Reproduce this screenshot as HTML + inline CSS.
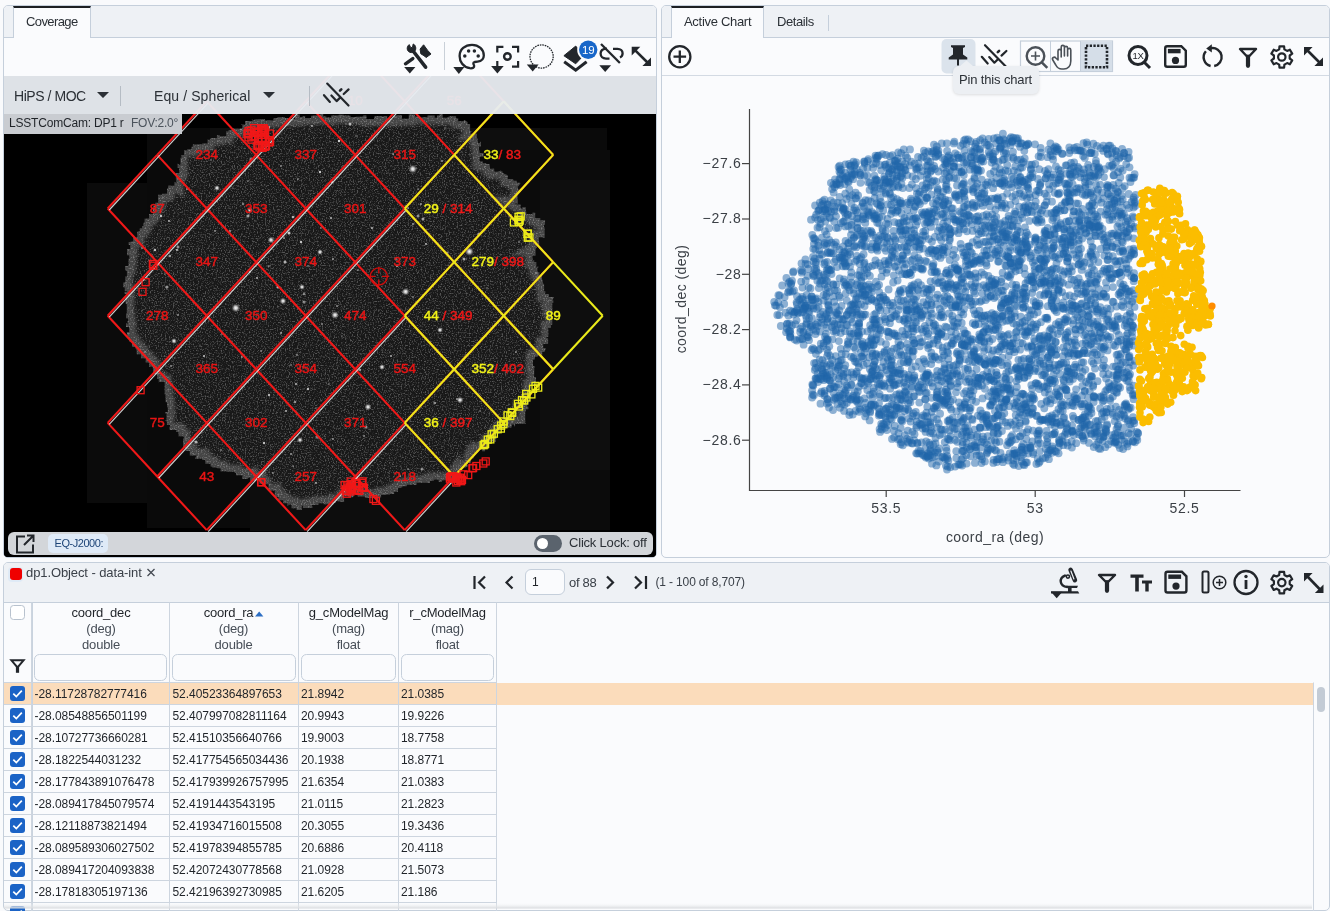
<!DOCTYPE html><html><head><meta charset="utf-8"><style>
*{box-sizing:border-box;margin:0;padding:0}
html,body{will-change:transform;width:1330px;height:911px;overflow:hidden;background:#f9fafc;font-family:"Liberation Sans",sans-serif;color:#1f2328}
.abs{position:absolute}
.panel{position:absolute;border:1px solid #c5cfdb;border-radius:5px;background:#fafbfd;overflow:hidden}
.tabstrip{position:absolute;left:0;right:0;top:0;height:32px;background:#eef1f5;border-bottom:1px solid #c5cfdb}
.tab{position:absolute;top:0;height:32px;background:#fafbfd;border-top:2px solid #1c1f23;border-right:1px solid #c5cfdb;border-left:1px solid #c5cfdb;font-size:13px;color:#2b3036;white-space:nowrap}
.t{position:absolute;white-space:nowrap;line-height:1}
svg{position:absolute;overflow:visible}
.ic{position:absolute;left:0;top:0;overflow:visible}
</style></head><body>
<div class="panel" style="left:3px;top:5px;width:654px;height:553px">
<div class="tabstrip"></div>
<div class="tab" style="left:9px;width:78px"></div>
</div>
<span class="t" style="left:26px;top:15px;font-size:13px;color:#2b3036;letter-spacing:-0.6px;">Coverage</span>
<div class="abs" style="left:4px;top:76px;width:652px;height:481px;overflow:hidden;border-radius:0 0 4px 4px;background:#000">
<svg style="left:0;top:0" width="652" height="481" viewBox="4 76 652 481"><defs><filter id="nz" x="0" y="0" width="700" height="600" filterUnits="userSpaceOnUse"><feTurbulence type="fractalNoise" baseFrequency="0.75" numOctaves="2" seed="3" result="t"/><feColorMatrix type="matrix" values="0 0 0 0 1  0 0 0 0 1  0 0 0 0 1  3.6 0 0 0 -1.75"/></filter><filter id="bl"><feGaussianBlur stdDeviation="1.8"/></filter><radialGradient id="sg"><stop offset="0" stop-color="#fff"/><stop offset="0.35" stop-color="#eee" stop-opacity="0.8"/><stop offset="1" stop-color="#888" stop-opacity="0"/></radialGradient><clipPath id="blob"><path id="blobp" d="M251.6 120.0 L254.4 120.0 L254.4 119.5 L257.5 119.5 L257.5 119.3 L259.3 119.3 L265.0 119.3 L265.0 117.2 L265.0 120.1 L264.9 120.1 L264.9 120.6 L267.7 120.6 L273.5 120.6 L273.5 118.8 L273.7 118.8 L273.7 118.1 L277.5 118.1 L277.5 116.6 L277.5 117.2 L281.7 117.2 L285.0 117.2 L285.0 117.9 L288.6 117.9 L288.6 116.8 L288.6 118.9 L293.1 118.9 L294.9 118.9 L294.9 115.7 L294.9 114.4 L296.0 114.4 L299.6 114.4 L299.6 117.5 L305.1 116.0 L305.1 117.6 L304.9 117.6 L304.9 117.9 L311.3 117.9 L311.3 115.7 L312.9 115.7 L312.9 117.4 L312.9 115.5 L313.6 115.5 L319.6 115.5 L319.6 114.5 L319.6 114.3 L319.8 114.3 L323.2 114.3 L323.2 116.6 L326.3 116.6 L326.3 117.4 L331.4 117.4 L331.4 114.7 L331.4 115.4 L332.6 115.4 L332.6 115.6 L338.3 115.6 L338.3 116.0 L338.7 116.0 L338.7 114.8 L343.7 114.8 L343.7 115.5 L344.9 115.5 L348.5 115.5 L348.5 115.7 L350.5 115.7 L350.5 117.0 L355.8 117.0 L355.8 116.1 L355.8 116.7 L360.5 116.7 L363.2 116.7 L363.2 115.4 L366.4 115.4 L366.4 118.2 L366.4 117.9 L366.3 117.9 L366.3 118.9 L369.4 118.9 L374.3 118.9 L374.3 116.6 L374.9 116.6 L374.9 119.0 L374.9 115.9 L380.9 115.9 L383.5 117.0 L383.5 116.0 L387.2 116.0 L387.2 115.0 L387.2 118.4 L389.6 118.4 L391.5 118.4 L391.5 118.7 L393.4 118.7 L393.4 115.8 L396.7 115.8 L396.7 115.3 L402.0 115.3 L402.0 115.1 L402.0 118.8 L406.6 118.8 L408.8 118.8 L408.8 117.0 L408.8 114.4 L409.0 114.4 L415.0 114.4 L415.0 118.5 L415.0 116.4 L417.9 116.4 L419.6 116.4 L419.6 118.6 L419.6 117.4 L423.7 117.4 L423.7 117.2 L427.6 117.2 L427.6 115.6 L431.5 115.6 L434.5 115.6 L434.5 117.9 L434.5 117.8 L437.2 117.8 L437.2 115.6 L439.5 115.6 L439.5 114.2 L442.6 114.2 L442.6 117.7 L447.4 117.7 L447.4 117.0 L447.8 117.0 L451.4 116.0 L451.4 118.7 L451.4 116.3 L456.1 116.3 L456.1 118.4 L458.2 118.4 L458.2 121.3 L461.6 121.3 L463.9 121.3 L463.9 119.8 L467.5 122.0 L467.5 123.9 L470.1 123.9 L470.1 129.2 L470.1 130.9 L471.7 130.9 L470.0 133.8 L471.1 133.8 L476.7 133.8 L476.7 138.2 L477.6 138.2 L477.6 138.2 L477.6 142.9 L479.7 142.9 L481.0 141.4 L481.0 146.5 L478.9 146.5 L478.9 147.4 L478.9 150.3 L479.4 150.3 L479.4 152.9 L481.0 152.9 L483.5 152.9 L483.5 156.6 L479.6 156.6 L479.6 161.6 L482.9 161.6 L482.9 163.3 L486.2 163.0 L486.2 162.4 L486.2 163.9 L487.6 163.9 L489.6 163.9 L489.6 165.9 L489.6 168.7 L494.2 168.7 L494.2 171.8 L497.3 171.8 L501.1 170.4 L501.1 171.5 L502.5 171.5 L502.5 173.0 L507.7 175.2 L507.7 175.2 L507.7 179.0 L509.0 179.0 L513.1 179.0 L513.1 180.7 L516.8 180.7 L516.8 182.8 L520.3 182.8 L520.3 183.5 L518.4 186.3 L517.8 186.3 L517.8 189.2 L517.1 189.2 L518.5 189.2 L518.5 194.1 L518.5 194.1 L517.5 194.1 L517.5 199.2 L517.8 199.2 L517.8 203.6 L514.7 203.6 L516.0 204.4 L520.5 204.4 L520.5 208.4 L520.0 208.4 L522.5 208.4 L522.5 207.2 L525.8 207.2 L525.8 212.6 L526.3 211.4 L526.3 214.1 L532.5 214.1 L532.5 212.7 L535.2 212.7 L535.2 213.9 L535.2 217.9 L536.8 217.9 L540.3 217.9 L540.3 220.2 L544.2 220.2 L544.2 217.8 L544.2 220.1 L545.1 220.1 L545.0 224.8 L545.0 224.8 L544.0 224.8 L544.0 227.5 L544.6 227.5 L544.6 233.7 L544.6 237.7 L544.0 237.7 L542.5 237.3 L541.0 237.3 L538.9 237.3 L538.9 242.1 L539.2 242.1 L539.2 244.7 L536.6 244.7 L536.6 248.0 L535.3 248.8 L535.5 248.8 L535.5 255.8 L533.7 255.8 L532.5 255.8 L532.5 256.7 L532.5 261.2 L532.6 261.2 L534.2 259.8 L534.2 261.9 L536.3 261.9 L536.3 267.5 L538.4 267.5 L538.4 266.4 L537.4 266.4 L537.4 272.2 L539.4 272.2 L539.4 274.8 L540.0 276.0 L542.0 276.0 L542.0 279.7 L540.9 279.7 L542.7 279.7 L542.7 283.8 L544.1 283.8 L544.1 286.2 L544.1 291.6 L545.6 291.6 L545.0 294.0 L548.9 294.0 L548.9 297.0 L548.5 297.0 L553.8 297.0 L553.8 297.6 L552.0 300.3 L553.6 300.3 L553.3 300.3 L553.3 303.1 L552.3 303.1 L552.3 306.8 L552.3 310.7 L552.6 310.7 L552.6 313.8 L549.3 313.8 L549.3 316.0 L548.6 316.0 L552.3 316.0 L552.3 322.6 L552.3 324.8 L550.3 324.8 L550.8 324.8 L550.8 325.5 L550.8 328.0 L548.1 328.0 L548.3 330.0 L548.3 334.5 L548.3 337.1 L545.3 337.1 L548.1 338.4 L548.1 344.1 L543.2 344.1 L543.2 348.1 L545.6 348.1 L545.6 349.2 L544.4 352.0 L542.2 352.0 L542.2 355.5 L537.7 355.5 L537.7 356.7 L536.1 356.7 L534.8 356.7 L534.8 357.9 L534.8 359.4 L533.0 359.4 L532.9 365.9 L534.6 365.9 L534.6 368.0 L534.2 368.0 L534.2 374.0 L534.1 374.0 L534.1 377.1 L533.4 377.1 L536.0 377.1 L536.0 380.1 L536.0 383.9 L536.9 383.9 L535.0 382.2 L535.0 386.1 L533.4 386.1 L533.4 385.8 L530.9 385.8 L530.9 388.3 L530.3 388.3 L530.3 393.8 L530.3 393.8 L530.3 396.7 L528.3 399.5 L528.7 399.5 L528.7 404.5 L527.2 404.5 L527.2 406.7 L528.3 406.7 L528.3 409.2 L525.1 409.2 L525.8 409.2 L525.8 411.4 L525.2 411.4 L525.2 414.5 L525.2 420.0 L525.2 420.0 L525.2 423.5 L526.0 423.5 L526.0 423.0 L525.2 423.0 L525.2 423.8 L518.2 423.8 L515.1 423.8 L515.1 426.3 L514.0 426.3 L514.0 423.9 L514.0 424.5 L511.6 424.5 L511.6 427.5 L507.8 427.5 L507.8 427.5 L504.6 427.5 L505.2 429.7 L503.2 429.7 L499.7 429.7 L499.7 430.9 L499.7 433.8 L496.3 433.8 L496.3 439.3 L495.5 439.3 L496.0 442.1 L491.3 442.1 L488.6 442.1 L488.6 444.0 L487.6 444.0 L487.6 446.6 L487.6 448.7 L485.1 448.7 L485.1 451.2 L482.1 451.2 L482.2 449.3 L480.3 449.3 L477.4 449.3 L477.4 451.6 L475.4 451.6 L475.4 453.2 L473.7 453.2 L473.7 456.6 L473.7 458.3 L471.0 458.3 L471.0 462.8 L468.4 462.8 L467.4 460.6 L467.4 462.1 L467.4 467.1 L466.1 467.1 L466.1 467.5 L461.8 467.5 L461.8 471.5 L460.7 471.5 L459.6 471.5 L459.6 472.4 L459.6 478.2 L458.6 478.2 L452.5 478.2 L452.5 477.1 L451.2 479.0 L451.2 479.9 L448.7 479.9 L448.7 477.8 L448.7 480.3 L446.2 480.3 L441.9 480.3 L441.9 480.4 L441.9 481.9 L438.7 481.9 L438.7 479.5 L434.5 479.5 L433.9 479.5 L433.9 482.7 L433.9 480.8 L430.0 480.8 L430.0 482.9 L426.8 482.9 L426.8 482.8 L423.6 482.8 L423.2 482.8 L423.2 482.7 L416.5 482.7 L416.5 485.0 L413.5 485.0 L413.5 484.0 L415.3 484.0 L412.7 484.0 L412.7 484.7 L406.5 484.7 L406.5 486.3 L403.1 486.3 L402.4 486.3 L402.4 487.3 L398.0 488.3 L398.0 490.6 L398.0 491.8 L394.1 491.8 L394.1 494.1 L394.8 494.1 L389.9 494.1 L389.9 494.8 L389.9 494.4 L386.5 494.4 L386.2 494.4 L386.2 495.0 L381.1 495.0 L381.1 496.8 L381.1 497.4 L378.3 497.4 L378.3 500.2 L377.3 500.2 L376.0 497.9 L373.0 497.9 L371.1 497.9 L371.1 497.6 L371.1 498.1 L366.2 498.1 L366.2 497.8 L364.9 497.8 L364.9 496.6 L357.7 496.6 L357.7 493.9 L354.5 493.9 L354.5 493.2 L354.8 493.2 L353.0 497.3 L348.4 497.3 L348.4 496.2 L345.9 496.2 L344.1 496.2 L344.1 499.8 L344.1 501.9 L340.3 501.9 L340.3 501.2 L338.0 501.2 L335.8 501.0 L335.8 503.5 L335.8 503.0 L333.3 503.0 L333.3 504.4 L330.1 504.4 L330.1 504.2 L327.7 504.2 L323.5 504.2 L323.5 505.6 L323.5 503.3 L319.1 503.3 L318.5 503.3 L318.5 505.0 L312.0 505.0 L312.0 505.9 L312.4 506.2 L312.4 504.8 L312.4 507.9 L305.6 507.9 L302.9 507.9 L302.9 505.8 L301.7 505.8 L301.7 510.0 L296.7 510.0 L296.7 507.3 L298.4 508.2 L294.4 508.2 L291.5 508.2 L291.5 504.5 L288.5 504.5 L288.5 505.5 L287.3 505.5 L287.3 504.4 L287.3 503.3 L283.2 503.3 L283.2 500.3 L280.7 500.3 L278.5 500.3 L278.5 497.5 L278.6 498.7 L278.6 497.0 L274.8 497.0 L274.8 492.8 L274.8 492.8 L274.8 490.5 L268.5 490.5 L268.5 486.7 L268.5 484.7 L270.0 484.7 L263.9 483.8 L263.9 481.5 L263.9 483.8 L261.0 483.8 L259.4 483.8 L259.4 483.5 L259.4 479.0 L255.6 479.0 L255.6 481.1 L249.9 481.1 L250.2 481.1 L250.2 477.1 L246.7 478.9 L246.7 476.2 L246.7 479.0 L242.5 479.0 L242.5 475.2 L241.1 475.2 L236.0 475.2 L236.0 477.0 L236.0 472.9 L234.7 472.9 L234.7 471.8 L230.3 471.8 L226.3 471.8 L226.3 471.5 L226.3 471.3 L223.1 471.3 L220.7 471.4 L220.7 470.7 L220.7 468.3 L218.1 468.3 L217.3 468.3 L217.3 467.6 L212.5 467.6 L212.5 466.4 L210.6 466.4 L210.6 463.8 L209.8 463.8 L209.8 463.8 L205.4 463.8 L205.4 460.0 L202.3 460.0 L202.3 458.6 L199.0 458.6 L199.0 458.7 L195.4 458.7 L195.4 457.5 L196.7 455.6 L195.6 455.6 L189.8 455.6 L189.8 455.5 L189.8 451.0 L185.8 451.0 L185.2 451.0 L185.2 450.2 L185.8 451.6 L185.8 448.3 L183.1 448.3 L183.1 442.6 L183.1 438.5 L183.9 438.5 L183.9 436.8 L184.0 436.8 L183.0 436.7 L183.0 436.3 L178.6 436.3 L178.6 432.6 L178.6 432.0 L176.4 432.0 L176.4 430.0 L175.6 430.0 L169.7 430.0 L169.7 426.6 L170.0 426.6 L170.0 423.8 L170.0 424.9 L166.9 424.9 L166.9 420.3 L164.9 420.3 L166.6 421.8 L166.6 418.7 L166.6 413.6 L165.3 413.6 L165.3 412.0 L167.8 412.0 L167.8 407.3 L167.6 407.3 L167.1 407.3 L167.1 404.0 L167.1 402.3 L165.9 402.3 L165.6 402.0 L165.6 400.8 L165.6 394.1 L165.5 394.1 L165.5 394.4 L163.4 394.4 L164.7 394.4 L164.7 389.8 L164.4 388.7 L164.7 388.7 L164.7 381.9 L161.9 381.9 L159.0 381.9 L159.0 382.4 L158.8 382.4 L158.8 379.1 L157.2 379.1 L157.2 372.8 L157.0 374.3 L153.1 374.3 L153.1 368.7 L152.8 368.7 L152.8 366.5 L150.6 366.5 L149.1 367.0 L149.1 362.4 L145.7 362.4 L145.7 360.5 L145.7 358.2 L144.3 358.2 L141.0 358.2 L141.0 357.4 L141.0 352.6 L140.8 352.6 L140.8 354.2 L136.7 354.2 L136.7 349.3 L136.3 349.3 L136.3 348.4 L135.4 348.4 L135.4 347.0 L132.6 347.0 L132.3 347.0 L132.3 341.9 L132.3 341.6 L129.2 341.6 L129.2 337.1 L127.1 337.1 L127.0 332.2 L126.4 332.2 L126.4 332.0 L129.2 332.0 L129.2 326.9 L128.8 326.9 L126.0 326.9 L126.0 322.9 L127.6 324.6 L127.6 320.9 L128.0 320.9 L128.0 318.3 L126.0 318.3 L126.0 314.5 L126.0 313.5 L124.6 313.5 L126.8 313.5 L126.8 310.1 L126.8 304.0 L127.1 304.0 L125.7 304.0 L125.7 303.8 L125.4 297.3 L126.7 297.3 L127.4 297.3 L127.4 293.7 L124.5 293.7 L124.5 292.1 L127.1 292.1 L127.1 291.2 L124.8 291.2 L124.8 287.2 L123.3 287.2 L123.3 285.5 L123.3 282.6 L125.4 282.6 L125.3 282.6 L125.3 276.4 L127.3 276.4 L127.3 276.4 L126.9 276.4 L126.9 271.0 L125.4 270.2 L124.5 270.2 L125.1 270.2 L125.1 266.1 L128.6 266.1 L128.6 260.5 L128.6 258.7 L128.4 258.7 L129.5 258.7 L129.5 257.4 L129.3 257.4 L129.3 255.3 L127.0 255.3 L127.0 249.2 L130.3 249.2 L130.3 246.0 L130.3 245.1 L128.7 245.1 L128.7 242.0 L129.8 242.0 L133.3 241.3 L133.3 237.5 L137.3 237.5 L137.3 236.9 L137.3 231.8 L138.6 231.8 L138.6 231.1 L140.2 231.1 L139.8 231.0 L139.8 228.3 L142.0 228.3 L142.0 226.1 L143.4 226.1 L143.4 222.8 L144.6 222.8 L144.6 218.8 L149.1 218.6 L149.1 217.9 L149.0 217.9 L149.0 213.9 L152.9 213.9 L152.9 209.9 L153.0 209.9 L153.0 207.7 L153.0 205.4 L155.3 205.4 L155.3 202.8 L156.4 202.8 L158.3 202.8 L158.3 200.4 L158.2 194.8 L162.0 194.8 L162.0 193.8 L162.1 193.8 L167.0 193.8 L167.0 193.2 L167.0 188.5 L168.3 188.5 L168.3 185.5 L170.8 185.5 L170.8 185.7 L174.3 185.7 L174.5 185.7 L174.5 181.7 L176.4 183.2 L176.4 179.4 L175.9 179.4 L175.9 177.5 L175.9 172.9 L179.2 172.9 L179.2 172.9 L179.2 168.0 L177.6 168.0 L177.6 163.6 L180.5 165.6 L180.5 162.7 L180.5 157.7 L181.8 157.7 L181.5 157.7 L181.5 155.4 L181.5 154.9 L185.3 154.9 L184.1 154.9 L184.1 150.0 L187.5 150.4 L187.5 151.3 L187.5 149.2 L191.5 149.2 L191.5 146.7 L192.8 146.7 L192.8 144.6 L195.1 144.6 L198.3 144.6 L198.3 144.2 L202.3 144.2 L202.3 141.6 L202.3 143.5 L207.6 143.5 L207.6 140.1 L207.0 140.1 L207.0 139.8 L209.9 139.8 L211.0 137.9 L213.1 137.9 L216.9 137.9 L216.9 135.3 L219.8 135.3 L219.8 134.1 L219.8 136.3 L222.7 136.3 L226.2 136.3 L226.2 133.2 L226.2 131.5 L228.7 131.5 L228.7 131.5 L228.7 130.0 L232.9 130.0 L232.9 127.9 L234.1 127.9 L234.1 127.9 L234.1 128.8 L237.8 128.8 L242.4 128.8 L242.4 124.0 L241.6 124.0 L241.6 124.8 L245.2 124.8 L245.2 120.5 L245.2 120.9 L247.8 120.9 L252.5 120.9 L252.5 119.0Z"/></clipPath></defs><rect x="0" y="0" width="700" height="600" fill="#000"/><rect x="87" y="183" width="60" height="320" fill="#0b0b0b"/><rect x="147" y="128" width="460" height="400" fill="#0a0a0a"/><rect x="210" y="128" width="330" height="30" fill="#0e0e0e"/><rect x="460" y="150" width="150" height="380" fill="#0b0b0b"/><rect x="250" y="480" width="260" height="51" fill="#0d0d0d"/><rect x="540" y="180" width="70" height="290" fill="#0e0e0e"/><g clip-path="url(#blob)"><rect x="100" y="100" width="460" height="420" fill="#181818"/><path d="M251.6 120.0 L254.4 120.0 L254.4 119.5 L257.5 119.5 L257.5 119.3 L259.3 119.3 L265.0 119.3 L265.0 117.2 L265.0 120.1 L264.9 120.1 L264.9 120.6 L267.7 120.6 L273.5 120.6 L273.5 118.8 L273.7 118.8 L273.7 118.1 L277.5 118.1 L277.5 116.6 L277.5 117.2 L281.7 117.2 L285.0 117.2 L285.0 117.9 L288.6 117.9 L288.6 116.8 L288.6 118.9 L293.1 118.9 L294.9 118.9 L294.9 115.7 L294.9 114.4 L296.0 114.4 L299.6 114.4 L299.6 117.5 L305.1 116.0 L305.1 117.6 L304.9 117.6 L304.9 117.9 L311.3 117.9 L311.3 115.7 L312.9 115.7 L312.9 117.4 L312.9 115.5 L313.6 115.5 L319.6 115.5 L319.6 114.5 L319.6 114.3 L319.8 114.3 L323.2 114.3 L323.2 116.6 L326.3 116.6 L326.3 117.4 L331.4 117.4 L331.4 114.7 L331.4 115.4 L332.6 115.4 L332.6 115.6 L338.3 115.6 L338.3 116.0 L338.7 116.0 L338.7 114.8 L343.7 114.8 L343.7 115.5 L344.9 115.5 L348.5 115.5 L348.5 115.7 L350.5 115.7 L350.5 117.0 L355.8 117.0 L355.8 116.1 L355.8 116.7 L360.5 116.7 L363.2 116.7 L363.2 115.4 L366.4 115.4 L366.4 118.2 L366.4 117.9 L366.3 117.9 L366.3 118.9 L369.4 118.9 L374.3 118.9 L374.3 116.6 L374.9 116.6 L374.9 119.0 L374.9 115.9 L380.9 115.9 L383.5 117.0 L383.5 116.0 L387.2 116.0 L387.2 115.0 L387.2 118.4 L389.6 118.4 L391.5 118.4 L391.5 118.7 L393.4 118.7 L393.4 115.8 L396.7 115.8 L396.7 115.3 L402.0 115.3 L402.0 115.1 L402.0 118.8 L406.6 118.8 L408.8 118.8 L408.8 117.0 L408.8 114.4 L409.0 114.4 L415.0 114.4 L415.0 118.5 L415.0 116.4 L417.9 116.4 L419.6 116.4 L419.6 118.6 L419.6 117.4 L423.7 117.4 L423.7 117.2 L427.6 117.2 L427.6 115.6 L431.5 115.6 L434.5 115.6 L434.5 117.9 L434.5 117.8 L437.2 117.8 L437.2 115.6 L439.5 115.6 L439.5 114.2 L442.6 114.2 L442.6 117.7 L447.4 117.7 L447.4 117.0 L447.8 117.0 L451.4 116.0 L451.4 118.7 L451.4 116.3 L456.1 116.3 L456.1 118.4 L458.2 118.4 L458.2 121.3 L461.6 121.3 L463.9 121.3 L463.9 119.8 L467.5 122.0 L467.5 123.9 L470.1 123.9 L470.1 129.2 L470.1 130.9 L471.7 130.9 L470.0 133.8 L471.1 133.8 L476.7 133.8 L476.7 138.2 L477.6 138.2 L477.6 138.2 L477.6 142.9 L479.7 142.9 L481.0 141.4 L481.0 146.5 L478.9 146.5 L478.9 147.4 L478.9 150.3 L479.4 150.3 L479.4 152.9 L481.0 152.9 L483.5 152.9 L483.5 156.6 L479.6 156.6 L479.6 161.6 L482.9 161.6 L482.9 163.3 L486.2 163.0 L486.2 162.4 L486.2 163.9 L487.6 163.9 L489.6 163.9 L489.6 165.9 L489.6 168.7 L494.2 168.7 L494.2 171.8 L497.3 171.8 L501.1 170.4 L501.1 171.5 L502.5 171.5 L502.5 173.0 L507.7 175.2 L507.7 175.2 L507.7 179.0 L509.0 179.0 L513.1 179.0 L513.1 180.7 L516.8 180.7 L516.8 182.8 L520.3 182.8 L520.3 183.5 L518.4 186.3 L517.8 186.3 L517.8 189.2 L517.1 189.2 L518.5 189.2 L518.5 194.1 L518.5 194.1 L517.5 194.1 L517.5 199.2 L517.8 199.2 L517.8 203.6 L514.7 203.6 L516.0 204.4 L520.5 204.4 L520.5 208.4 L520.0 208.4 L522.5 208.4 L522.5 207.2 L525.8 207.2 L525.8 212.6 L526.3 211.4 L526.3 214.1 L532.5 214.1 L532.5 212.7 L535.2 212.7 L535.2 213.9 L535.2 217.9 L536.8 217.9 L540.3 217.9 L540.3 220.2 L544.2 220.2 L544.2 217.8 L544.2 220.1 L545.1 220.1 L545.0 224.8 L545.0 224.8 L544.0 224.8 L544.0 227.5 L544.6 227.5 L544.6 233.7 L544.6 237.7 L544.0 237.7 L542.5 237.3 L541.0 237.3 L538.9 237.3 L538.9 242.1 L539.2 242.1 L539.2 244.7 L536.6 244.7 L536.6 248.0 L535.3 248.8 L535.5 248.8 L535.5 255.8 L533.7 255.8 L532.5 255.8 L532.5 256.7 L532.5 261.2 L532.6 261.2 L534.2 259.8 L534.2 261.9 L536.3 261.9 L536.3 267.5 L538.4 267.5 L538.4 266.4 L537.4 266.4 L537.4 272.2 L539.4 272.2 L539.4 274.8 L540.0 276.0 L542.0 276.0 L542.0 279.7 L540.9 279.7 L542.7 279.7 L542.7 283.8 L544.1 283.8 L544.1 286.2 L544.1 291.6 L545.6 291.6 L545.0 294.0 L548.9 294.0 L548.9 297.0 L548.5 297.0 L553.8 297.0 L553.8 297.6 L552.0 300.3 L553.6 300.3 L553.3 300.3 L553.3 303.1 L552.3 303.1 L552.3 306.8 L552.3 310.7 L552.6 310.7 L552.6 313.8 L549.3 313.8 L549.3 316.0 L548.6 316.0 L552.3 316.0 L552.3 322.6 L552.3 324.8 L550.3 324.8 L550.8 324.8 L550.8 325.5 L550.8 328.0 L548.1 328.0 L548.3 330.0 L548.3 334.5 L548.3 337.1 L545.3 337.1 L548.1 338.4 L548.1 344.1 L543.2 344.1 L543.2 348.1 L545.6 348.1 L545.6 349.2 L544.4 352.0 L542.2 352.0 L542.2 355.5 L537.7 355.5 L537.7 356.7 L536.1 356.7 L534.8 356.7 L534.8 357.9 L534.8 359.4 L533.0 359.4 L532.9 365.9 L534.6 365.9 L534.6 368.0 L534.2 368.0 L534.2 374.0 L534.1 374.0 L534.1 377.1 L533.4 377.1 L536.0 377.1 L536.0 380.1 L536.0 383.9 L536.9 383.9 L535.0 382.2 L535.0 386.1 L533.4 386.1 L533.4 385.8 L530.9 385.8 L530.9 388.3 L530.3 388.3 L530.3 393.8 L530.3 393.8 L530.3 396.7 L528.3 399.5 L528.7 399.5 L528.7 404.5 L527.2 404.5 L527.2 406.7 L528.3 406.7 L528.3 409.2 L525.1 409.2 L525.8 409.2 L525.8 411.4 L525.2 411.4 L525.2 414.5 L525.2 420.0 L525.2 420.0 L525.2 423.5 L526.0 423.5 L526.0 423.0 L525.2 423.0 L525.2 423.8 L518.2 423.8 L515.1 423.8 L515.1 426.3 L514.0 426.3 L514.0 423.9 L514.0 424.5 L511.6 424.5 L511.6 427.5 L507.8 427.5 L507.8 427.5 L504.6 427.5 L505.2 429.7 L503.2 429.7 L499.7 429.7 L499.7 430.9 L499.7 433.8 L496.3 433.8 L496.3 439.3 L495.5 439.3 L496.0 442.1 L491.3 442.1 L488.6 442.1 L488.6 444.0 L487.6 444.0 L487.6 446.6 L487.6 448.7 L485.1 448.7 L485.1 451.2 L482.1 451.2 L482.2 449.3 L480.3 449.3 L477.4 449.3 L477.4 451.6 L475.4 451.6 L475.4 453.2 L473.7 453.2 L473.7 456.6 L473.7 458.3 L471.0 458.3 L471.0 462.8 L468.4 462.8 L467.4 460.6 L467.4 462.1 L467.4 467.1 L466.1 467.1 L466.1 467.5 L461.8 467.5 L461.8 471.5 L460.7 471.5 L459.6 471.5 L459.6 472.4 L459.6 478.2 L458.6 478.2 L452.5 478.2 L452.5 477.1 L451.2 479.0 L451.2 479.9 L448.7 479.9 L448.7 477.8 L448.7 480.3 L446.2 480.3 L441.9 480.3 L441.9 480.4 L441.9 481.9 L438.7 481.9 L438.7 479.5 L434.5 479.5 L433.9 479.5 L433.9 482.7 L433.9 480.8 L430.0 480.8 L430.0 482.9 L426.8 482.9 L426.8 482.8 L423.6 482.8 L423.2 482.8 L423.2 482.7 L416.5 482.7 L416.5 485.0 L413.5 485.0 L413.5 484.0 L415.3 484.0 L412.7 484.0 L412.7 484.7 L406.5 484.7 L406.5 486.3 L403.1 486.3 L402.4 486.3 L402.4 487.3 L398.0 488.3 L398.0 490.6 L398.0 491.8 L394.1 491.8 L394.1 494.1 L394.8 494.1 L389.9 494.1 L389.9 494.8 L389.9 494.4 L386.5 494.4 L386.2 494.4 L386.2 495.0 L381.1 495.0 L381.1 496.8 L381.1 497.4 L378.3 497.4 L378.3 500.2 L377.3 500.2 L376.0 497.9 L373.0 497.9 L371.1 497.9 L371.1 497.6 L371.1 498.1 L366.2 498.1 L366.2 497.8 L364.9 497.8 L364.9 496.6 L357.7 496.6 L357.7 493.9 L354.5 493.9 L354.5 493.2 L354.8 493.2 L353.0 497.3 L348.4 497.3 L348.4 496.2 L345.9 496.2 L344.1 496.2 L344.1 499.8 L344.1 501.9 L340.3 501.9 L340.3 501.2 L338.0 501.2 L335.8 501.0 L335.8 503.5 L335.8 503.0 L333.3 503.0 L333.3 504.4 L330.1 504.4 L330.1 504.2 L327.7 504.2 L323.5 504.2 L323.5 505.6 L323.5 503.3 L319.1 503.3 L318.5 503.3 L318.5 505.0 L312.0 505.0 L312.0 505.9 L312.4 506.2 L312.4 504.8 L312.4 507.9 L305.6 507.9 L302.9 507.9 L302.9 505.8 L301.7 505.8 L301.7 510.0 L296.7 510.0 L296.7 507.3 L298.4 508.2 L294.4 508.2 L291.5 508.2 L291.5 504.5 L288.5 504.5 L288.5 505.5 L287.3 505.5 L287.3 504.4 L287.3 503.3 L283.2 503.3 L283.2 500.3 L280.7 500.3 L278.5 500.3 L278.5 497.5 L278.6 498.7 L278.6 497.0 L274.8 497.0 L274.8 492.8 L274.8 492.8 L274.8 490.5 L268.5 490.5 L268.5 486.7 L268.5 484.7 L270.0 484.7 L263.9 483.8 L263.9 481.5 L263.9 483.8 L261.0 483.8 L259.4 483.8 L259.4 483.5 L259.4 479.0 L255.6 479.0 L255.6 481.1 L249.9 481.1 L250.2 481.1 L250.2 477.1 L246.7 478.9 L246.7 476.2 L246.7 479.0 L242.5 479.0 L242.5 475.2 L241.1 475.2 L236.0 475.2 L236.0 477.0 L236.0 472.9 L234.7 472.9 L234.7 471.8 L230.3 471.8 L226.3 471.8 L226.3 471.5 L226.3 471.3 L223.1 471.3 L220.7 471.4 L220.7 470.7 L220.7 468.3 L218.1 468.3 L217.3 468.3 L217.3 467.6 L212.5 467.6 L212.5 466.4 L210.6 466.4 L210.6 463.8 L209.8 463.8 L209.8 463.8 L205.4 463.8 L205.4 460.0 L202.3 460.0 L202.3 458.6 L199.0 458.6 L199.0 458.7 L195.4 458.7 L195.4 457.5 L196.7 455.6 L195.6 455.6 L189.8 455.6 L189.8 455.5 L189.8 451.0 L185.8 451.0 L185.2 451.0 L185.2 450.2 L185.8 451.6 L185.8 448.3 L183.1 448.3 L183.1 442.6 L183.1 438.5 L183.9 438.5 L183.9 436.8 L184.0 436.8 L183.0 436.7 L183.0 436.3 L178.6 436.3 L178.6 432.6 L178.6 432.0 L176.4 432.0 L176.4 430.0 L175.6 430.0 L169.7 430.0 L169.7 426.6 L170.0 426.6 L170.0 423.8 L170.0 424.9 L166.9 424.9 L166.9 420.3 L164.9 420.3 L166.6 421.8 L166.6 418.7 L166.6 413.6 L165.3 413.6 L165.3 412.0 L167.8 412.0 L167.8 407.3 L167.6 407.3 L167.1 407.3 L167.1 404.0 L167.1 402.3 L165.9 402.3 L165.6 402.0 L165.6 400.8 L165.6 394.1 L165.5 394.1 L165.5 394.4 L163.4 394.4 L164.7 394.4 L164.7 389.8 L164.4 388.7 L164.7 388.7 L164.7 381.9 L161.9 381.9 L159.0 381.9 L159.0 382.4 L158.8 382.4 L158.8 379.1 L157.2 379.1 L157.2 372.8 L157.0 374.3 L153.1 374.3 L153.1 368.7 L152.8 368.7 L152.8 366.5 L150.6 366.5 L149.1 367.0 L149.1 362.4 L145.7 362.4 L145.7 360.5 L145.7 358.2 L144.3 358.2 L141.0 358.2 L141.0 357.4 L141.0 352.6 L140.8 352.6 L140.8 354.2 L136.7 354.2 L136.7 349.3 L136.3 349.3 L136.3 348.4 L135.4 348.4 L135.4 347.0 L132.6 347.0 L132.3 347.0 L132.3 341.9 L132.3 341.6 L129.2 341.6 L129.2 337.1 L127.1 337.1 L127.0 332.2 L126.4 332.2 L126.4 332.0 L129.2 332.0 L129.2 326.9 L128.8 326.9 L126.0 326.9 L126.0 322.9 L127.6 324.6 L127.6 320.9 L128.0 320.9 L128.0 318.3 L126.0 318.3 L126.0 314.5 L126.0 313.5 L124.6 313.5 L126.8 313.5 L126.8 310.1 L126.8 304.0 L127.1 304.0 L125.7 304.0 L125.7 303.8 L125.4 297.3 L126.7 297.3 L127.4 297.3 L127.4 293.7 L124.5 293.7 L124.5 292.1 L127.1 292.1 L127.1 291.2 L124.8 291.2 L124.8 287.2 L123.3 287.2 L123.3 285.5 L123.3 282.6 L125.4 282.6 L125.3 282.6 L125.3 276.4 L127.3 276.4 L127.3 276.4 L126.9 276.4 L126.9 271.0 L125.4 270.2 L124.5 270.2 L125.1 270.2 L125.1 266.1 L128.6 266.1 L128.6 260.5 L128.6 258.7 L128.4 258.7 L129.5 258.7 L129.5 257.4 L129.3 257.4 L129.3 255.3 L127.0 255.3 L127.0 249.2 L130.3 249.2 L130.3 246.0 L130.3 245.1 L128.7 245.1 L128.7 242.0 L129.8 242.0 L133.3 241.3 L133.3 237.5 L137.3 237.5 L137.3 236.9 L137.3 231.8 L138.6 231.8 L138.6 231.1 L140.2 231.1 L139.8 231.0 L139.8 228.3 L142.0 228.3 L142.0 226.1 L143.4 226.1 L143.4 222.8 L144.6 222.8 L144.6 218.8 L149.1 218.6 L149.1 217.9 L149.0 217.9 L149.0 213.9 L152.9 213.9 L152.9 209.9 L153.0 209.9 L153.0 207.7 L153.0 205.4 L155.3 205.4 L155.3 202.8 L156.4 202.8 L158.3 202.8 L158.3 200.4 L158.2 194.8 L162.0 194.8 L162.0 193.8 L162.1 193.8 L167.0 193.8 L167.0 193.2 L167.0 188.5 L168.3 188.5 L168.3 185.5 L170.8 185.5 L170.8 185.7 L174.3 185.7 L174.5 185.7 L174.5 181.7 L176.4 183.2 L176.4 179.4 L175.9 179.4 L175.9 177.5 L175.9 172.9 L179.2 172.9 L179.2 172.9 L179.2 168.0 L177.6 168.0 L177.6 163.6 L180.5 165.6 L180.5 162.7 L180.5 157.7 L181.8 157.7 L181.5 157.7 L181.5 155.4 L181.5 154.9 L185.3 154.9 L184.1 154.9 L184.1 150.0 L187.5 150.4 L187.5 151.3 L187.5 149.2 L191.5 149.2 L191.5 146.7 L192.8 146.7 L192.8 144.6 L195.1 144.6 L198.3 144.6 L198.3 144.2 L202.3 144.2 L202.3 141.6 L202.3 143.5 L207.6 143.5 L207.6 140.1 L207.0 140.1 L207.0 139.8 L209.9 139.8 L211.0 137.9 L213.1 137.9 L216.9 137.9 L216.9 135.3 L219.8 135.3 L219.8 134.1 L219.8 136.3 L222.7 136.3 L226.2 136.3 L226.2 133.2 L226.2 131.5 L228.7 131.5 L228.7 131.5 L228.7 130.0 L232.9 130.0 L232.9 127.9 L234.1 127.9 L234.1 127.9 L234.1 128.8 L237.8 128.8 L242.4 128.8 L242.4 124.0 L241.6 124.0 L241.6 124.8 L245.2 124.8 L245.2 120.5 L245.2 120.9 L247.8 120.9 L252.5 120.9 L252.5 119.0Z" fill="none" stroke="#444" stroke-width="14" filter="url(#bl)"/><rect x="100" y="100" width="460" height="420" fill="#000" opacity="0.27" filter="url(#nz)"/><circle cx="201" cy="476" r="0.9" fill="#ddd" opacity="0.56"/><circle cx="236" cy="439" r="0.7" fill="#ddd" opacity="0.51"/><circle cx="269" cy="266" r="0.7" fill="#ddd" opacity="0.88"/><circle cx="293" cy="217" r="1.2" fill="#ddd" opacity="0.80"/><circle cx="261" cy="351" r="1.0" fill="#ddd" opacity="0.52"/><circle cx="200" cy="346" r="0.7" fill="#ddd" opacity="0.59"/><circle cx="304" cy="302" r="1.5" fill="#ddd" opacity="0.56"/><circle cx="423" cy="219" r="1.5" fill="#ddd" opacity="0.70"/><circle cx="291" cy="454" r="0.9" fill="#ddd" opacity="0.74"/><circle cx="320" cy="172" r="1.2" fill="#ddd" opacity="0.89"/><circle cx="230" cy="231" r="0.9" fill="#ddd" opacity="0.78"/><circle cx="196" cy="442" r="1.5" fill="#ddd" opacity="0.78"/><circle cx="366" cy="427" r="1.5" fill="#ddd" opacity="0.63"/><circle cx="408" cy="469" r="0.8" fill="#ddd" opacity="0.75"/><circle cx="281" cy="166" r="0.9" fill="#ddd" opacity="0.61"/><circle cx="393" cy="154" r="1.0" fill="#ddd" opacity="0.55"/><circle cx="337" cy="306" r="0.9" fill="#ddd" opacity="0.63"/><circle cx="421" cy="204" r="1.0" fill="#ddd" opacity="0.59"/><circle cx="447" cy="253" r="1.5" fill="#ddd" opacity="0.61"/><circle cx="177" cy="250" r="1.0" fill="#ddd" opacity="0.86"/><circle cx="331" cy="218" r="1.2" fill="#ddd" opacity="0.64"/><circle cx="506" cy="463" r="0.7" fill="#ddd" opacity="0.66"/><circle cx="165" cy="274" r="0.7" fill="#ddd" opacity="0.67"/><circle cx="479" cy="234" r="1.5" fill="#ddd" opacity="0.65"/><circle cx="241" cy="129" r="0.9" fill="#ddd" opacity="0.65"/><circle cx="289" cy="233" r="1.5" fill="#ddd" opacity="0.90"/><circle cx="397" cy="266" r="0.9" fill="#ddd" opacity="0.93"/><circle cx="285" cy="339" r="0.8" fill="#ddd" opacity="0.85"/><circle cx="391" cy="356" r="1.0" fill="#ddd" opacity="0.78"/><circle cx="165" cy="146" r="1.0" fill="#ddd" opacity="0.90"/><circle cx="293" cy="466" r="0.7" fill="#ddd" opacity="0.86"/><circle cx="413" cy="224" r="1.0" fill="#ddd" opacity="0.66"/><circle cx="531" cy="177" r="0.8" fill="#ddd" opacity="0.62"/><circle cx="243" cy="204" r="1.2" fill="#ddd" opacity="0.50"/><circle cx="358" cy="270" r="0.8" fill="#ddd" opacity="0.75"/><circle cx="480" cy="411" r="0.7" fill="#ddd" opacity="0.78"/><circle cx="364" cy="436" r="0.9" fill="#ddd" opacity="0.62"/><circle cx="182" cy="127" r="1.5" fill="#ddd" opacity="0.59"/><circle cx="298" cy="179" r="0.8" fill="#ddd" opacity="0.87"/><circle cx="204" cy="356" r="1.0" fill="#ddd" opacity="0.86"/><circle cx="257" cy="278" r="0.9" fill="#ddd" opacity="0.84"/><circle cx="354" cy="210" r="0.8" fill="#ddd" opacity="0.66"/><circle cx="422" cy="469" r="1.5" fill="#ddd" opacity="0.56"/><circle cx="165" cy="146" r="0.7" fill="#ddd" opacity="0.90"/><circle cx="264" cy="443" r="1.2" fill="#ddd" opacity="0.85"/><circle cx="332" cy="182" r="1.0" fill="#ddd" opacity="0.89"/><circle cx="161" cy="216" r="1.2" fill="#ddd" opacity="0.83"/><circle cx="418" cy="216" r="1.5" fill="#ddd" opacity="0.61"/><circle cx="426" cy="244" r="0.9" fill="#ddd" opacity="0.89"/><circle cx="222" cy="334" r="0.8" fill="#ddd" opacity="0.76"/><circle cx="308" cy="389" r="1.2" fill="#ddd" opacity="0.83"/><circle cx="248" cy="181" r="0.8" fill="#ddd" opacity="0.67"/><circle cx="408" cy="208" r="0.8" fill="#ddd" opacity="0.94"/><circle cx="329" cy="384" r="0.8" fill="#ddd" opacity="0.62"/><circle cx="248" cy="216" r="1.5" fill="#ddd" opacity="0.68"/><circle cx="513" cy="496" r="0.7" fill="#ddd" opacity="0.57"/><circle cx="539" cy="451" r="0.8" fill="#ddd" opacity="0.63"/><circle cx="432" cy="498" r="0.7" fill="#ddd" opacity="0.68"/><circle cx="502" cy="436" r="1.0" fill="#ddd" opacity="0.58"/><circle cx="167" cy="287" r="1.5" fill="#ddd" opacity="0.63"/><circle cx="297" cy="355" r="0.8" fill="#ddd" opacity="0.94"/><circle cx="296" cy="384" r="1.2" fill="#ddd" opacity="0.63"/><circle cx="487" cy="288" r="0.7" fill="#ddd" opacity="0.75"/><circle cx="499" cy="455" r="1.0" fill="#ddd" opacity="0.55"/><circle cx="269" cy="127" r="1.2" fill="#ddd" opacity="0.76"/><circle cx="250" cy="272" r="0.9" fill="#ddd" opacity="0.60"/><circle cx="333" cy="259" r="0.9" fill="#ddd" opacity="0.75"/><circle cx="201" cy="123" r="0.9" fill="#ddd" opacity="0.80"/><circle cx="142" cy="248" r="0.8" fill="#ddd" opacity="0.95"/><circle cx="221" cy="450" r="1.0" fill="#ddd" opacity="0.51"/><circle cx="281" cy="333" r="1.2" fill="#ddd" opacity="0.53"/><circle cx="360" cy="370" r="1.2" fill="#ddd" opacity="0.61"/><circle cx="215" cy="231" r="0.8" fill="#ddd" opacity="0.95"/><circle cx="317" cy="437" r="1.5" fill="#ddd" opacity="0.52"/><circle cx="483" cy="479" r="1.2" fill="#ddd" opacity="0.55"/><circle cx="170" cy="256" r="1.2" fill="#ddd" opacity="0.64"/><circle cx="346" cy="124" r="0.8" fill="#ddd" opacity="0.53"/><circle cx="286" cy="411" r="0.9" fill="#ddd" opacity="0.86"/><circle cx="457" cy="399" r="1.0" fill="#ddd" opacity="0.64"/><circle cx="353" cy="373" r="0.7" fill="#ddd" opacity="0.92"/><circle cx="333" cy="439" r="1.0" fill="#ddd" opacity="0.61"/><circle cx="504" cy="129" r="1.2" fill="#ddd" opacity="0.56"/><circle cx="269" cy="395" r="1.2" fill="#ddd" opacity="0.80"/><circle cx="464" cy="259" r="1.5" fill="#ddd" opacity="0.70"/><circle cx="265" cy="145" r="1.5" fill="#ddd" opacity="0.64"/><circle cx="178" cy="247" r="1.5" fill="#ddd" opacity="0.58"/><circle cx="159" cy="170" r="0.9" fill="#ddd" opacity="0.81"/><circle cx="211" cy="160" r="0.8" fill="#ddd" opacity="0.67"/><circle cx="213" cy="128" r="1.0" fill="#ddd" opacity="0.73"/><circle cx="301" cy="242" r="1.2" fill="#ddd" opacity="0.88"/><circle cx="445" cy="128" r="0.8" fill="#ddd" opacity="0.64"/><circle cx="442" cy="161" r="0.9" fill="#ddd" opacity="0.69"/><circle cx="525" cy="203" r="1.0" fill="#ddd" opacity="0.85"/><circle cx="495" cy="429" r="0.7" fill="#ddd" opacity="0.80"/><circle cx="519" cy="242" r="0.8" fill="#ddd" opacity="0.85"/><circle cx="350" cy="124" r="1.5" fill="#ddd" opacity="0.79"/><circle cx="291" cy="365" r="0.8" fill="#ddd" opacity="0.78"/><circle cx="278" cy="287" r="1.5" fill="#ddd" opacity="0.78"/><circle cx="342" cy="336" r="0.7" fill="#ddd" opacity="0.55"/><circle cx="435" cy="403" r="1.0" fill="#ddd" opacity="0.80"/><circle cx="308" cy="266" r="0.8" fill="#ddd" opacity="0.67"/><circle cx="356" cy="136" r="0.7" fill="#ddd" opacity="0.74"/><circle cx="321" cy="228" r="0.7" fill="#ddd" opacity="0.77"/><circle cx="513" cy="178" r="1.0" fill="#ddd" opacity="0.65"/><circle cx="242" cy="357" r="0.8" fill="#ddd" opacity="0.83"/><circle cx="536" cy="273" r="0.8" fill="#ddd" opacity="0.84"/><circle cx="499" cy="162" r="0.8" fill="#ddd" opacity="0.88"/><circle cx="400" cy="476" r="0.7" fill="#ddd" opacity="0.86"/><circle cx="345" cy="498" r="0.7" fill="#ddd" opacity="0.58"/><circle cx="155" cy="250" r="1.2" fill="#ddd" opacity="0.86"/><circle cx="322" cy="324" r="1.0" fill="#ddd" opacity="0.59"/><circle cx="252" cy="365" r="0.7" fill="#ddd" opacity="0.55"/><circle cx="316" cy="408" r="0.8" fill="#ddd" opacity="0.53"/><circle cx="339" cy="141" r="1.2" fill="#ddd" opacity="0.94"/><circle cx="166" cy="478" r="0.9" fill="#ddd" opacity="0.58"/><circle cx="273" cy="473" r="0.8" fill="#ddd" opacity="0.88"/><circle cx="187" cy="189" r="1.0" fill="#ddd" opacity="0.51"/><circle cx="413" cy="297" r="1.0" fill="#ddd" opacity="0.53"/><circle cx="535" cy="199" r="1.5" fill="#ddd" opacity="0.64"/><circle cx="523" cy="489" r="1.2" fill="#ddd" opacity="0.80"/><circle cx="312" cy="126" r="0.9" fill="#ddd" opacity="0.81"/><circle cx="478" cy="479" r="1.5" fill="#ddd" opacity="0.77"/><circle cx="418" cy="189" r="0.8" fill="#ddd" opacity="0.58"/><circle cx="372" cy="136" r="0.9" fill="#ddd" opacity="0.55"/><circle cx="516" cy="352" r="0.9" fill="#ddd" opacity="0.64"/><circle cx="143" cy="146" r="0.8" fill="#ddd" opacity="0.83"/><circle cx="284" cy="238" r="1.0" fill="#ddd" opacity="0.59"/><circle cx="169" cy="221" r="0.9" fill="#ddd" opacity="0.87"/><circle cx="304" cy="294" r="1.2" fill="#ddd" opacity="0.56"/><circle cx="178" cy="315" r="1.0" fill="#ddd" opacity="0.61"/><circle cx="372" cy="228" r="0.9" fill="#ddd" opacity="0.93"/><circle cx="171" cy="366" r="0.8" fill="#ddd" opacity="0.92"/><circle cx="295" cy="402" r="1.2" fill="#ddd" opacity="0.60"/><circle cx="396" cy="259" r="0.9" fill="#ddd" opacity="0.63"/><circle cx="316" cy="483" r="0.9" fill="#ddd" opacity="0.80"/><circle cx="145" cy="352" r="0.7" fill="#ddd" opacity="0.69"/><circle cx="193" cy="460" r="0.9" fill="#ddd" opacity="0.67"/><circle cx="251" cy="159" r="1.2" fill="#ddd" opacity="0.55"/><circle cx="403" cy="292" r="0.8" fill="#ddd" opacity="0.54"/><circle cx="285" cy="262" r="1.5" fill="#ddd" opacity="0.77"/><circle cx="235.8" cy="308" r="4.5" fill="url(#sg)"/><circle cx="271" cy="240" r="3.5" fill="url(#sg)"/><circle cx="335" cy="315" r="4" fill="url(#sg)"/><circle cx="405.7" cy="291.7" r="4" fill="url(#sg)"/><circle cx="412.8" cy="169" r="4.5" fill="url(#sg)"/><circle cx="469.4" cy="251.6" r="4.5" fill="url(#sg)"/><circle cx="368" cy="407" r="3.5" fill="url(#sg)"/><circle cx="174" cy="341" r="3" fill="url(#sg)"/><circle cx="217" cy="188" r="3" fill="url(#sg)"/><circle cx="382" cy="367" r="3" fill="url(#sg)"/><circle cx="283" cy="301" r="3.5" fill="url(#sg)"/><circle cx="302" cy="287" r="3" fill="url(#sg)"/><circle cx="250" cy="210" r="3" fill="url(#sg)"/><circle cx="320" cy="252" r="3" fill="url(#sg)"/><circle cx="440" cy="330" r="3" fill="url(#sg)"/><circle cx="300" cy="440" r="3" fill="url(#sg)"/><circle cx="460" cy="400" r="3.5" fill="url(#sg)"/></g><g stroke="#f01818" stroke-width="2.1"><line x1="305.7" y1="422.9" x2="355.2" y2="476.5"/><line x1="206.7" y1="208.5" x2="256.2" y2="262.1"/><line x1="454.2" y1="154.9" x2="503.7" y2="101.3"/><line x1="404.7" y1="315.7" x2="454.2" y2="369.3"/><line x1="157.2" y1="476.5" x2="206.7" y2="422.9"/><line x1="305.7" y1="530.1" x2="355.2" y2="476.5"/><line x1="206.7" y1="315.7" x2="256.2" y2="262.1"/><line x1="404.7" y1="530.1" x2="454.2" y2="476.5"/><line x1="256.2" y1="369.3" x2="305.7" y2="422.9"/><line x1="355.2" y1="476.5" x2="404.7" y2="422.9"/><line x1="355.2" y1="369.3" x2="404.7" y2="315.7"/><line x1="404.7" y1="422.9" x2="454.2" y2="369.3"/><line x1="256.2" y1="262.1" x2="305.7" y2="208.5"/><line x1="157.2" y1="369.3" x2="206.7" y2="315.7"/><line x1="404.7" y1="101.3" x2="454.2" y2="154.9"/><line x1="107.7" y1="208.5" x2="157.2" y2="154.9"/><line x1="305.7" y1="101.3" x2="355.2" y2="47.7"/><line x1="107.7" y1="315.7" x2="157.2" y2="369.3"/><line x1="503.7" y1="315.7" x2="553.2" y2="262.1"/><line x1="454.2" y1="262.1" x2="503.7" y2="208.5"/><line x1="454.2" y1="369.3" x2="503.7" y2="422.9"/><line x1="206.7" y1="208.5" x2="256.2" y2="154.9"/><line x1="305.7" y1="208.5" x2="355.2" y2="154.9"/><line x1="157.2" y1="262.1" x2="206.7" y2="315.7"/><line x1="355.2" y1="154.9" x2="404.7" y2="101.3"/><line x1="404.7" y1="208.5" x2="454.2" y2="154.9"/><line x1="404.7" y1="422.9" x2="454.2" y2="476.5"/><line x1="206.7" y1="530.1" x2="256.2" y2="476.5"/><line x1="355.2" y1="476.5" x2="404.7" y2="530.1"/><line x1="157.2" y1="154.9" x2="206.7" y2="101.3"/><line x1="206.7" y1="422.9" x2="256.2" y2="369.3"/><line x1="256.2" y1="476.5" x2="305.7" y2="530.1"/><line x1="454.2" y1="47.7" x2="503.7" y2="101.3"/><line x1="157.2" y1="369.3" x2="206.7" y2="422.9"/><line x1="404.7" y1="315.7" x2="454.2" y2="262.1"/><line x1="305.7" y1="315.7" x2="355.2" y2="369.3"/><line x1="454.2" y1="262.1" x2="503.7" y2="315.7"/><line x1="454.2" y1="154.9" x2="503.7" y2="208.5"/><line x1="503.7" y1="208.5" x2="553.2" y2="262.1"/><line x1="107.7" y1="208.5" x2="157.2" y2="262.1"/><line x1="256.2" y1="154.9" x2="305.7" y2="101.3"/><line x1="107.7" y1="422.9" x2="157.2" y2="369.3"/><line x1="157.2" y1="476.5" x2="206.7" y2="530.1"/><line x1="355.2" y1="47.7" x2="404.7" y2="101.3"/><line x1="355.2" y1="262.1" x2="404.7" y2="208.5"/><line x1="107.7" y1="315.7" x2="157.2" y2="262.1"/><line x1="206.7" y1="315.7" x2="256.2" y2="369.3"/><line x1="355.2" y1="369.3" x2="404.7" y2="422.9"/><line x1="157.2" y1="154.9" x2="206.7" y2="208.5"/><line x1="206.7" y1="422.9" x2="256.2" y2="476.5"/><line x1="404.7" y1="208.5" x2="454.2" y2="262.1"/><line x1="503.7" y1="101.3" x2="553.2" y2="154.9"/><line x1="206.7" y1="101.3" x2="256.2" y2="154.9"/><line x1="305.7" y1="101.3" x2="355.2" y2="154.9"/><line x1="305.7" y1="208.5" x2="355.2" y2="262.1"/><line x1="256.2" y1="262.1" x2="305.7" y2="315.7"/><line x1="454.2" y1="369.3" x2="503.7" y2="315.7"/><line x1="305.7" y1="422.9" x2="355.2" y2="369.3"/><line x1="157.2" y1="262.1" x2="206.7" y2="208.5"/><line x1="503.7" y1="208.5" x2="553.2" y2="154.9"/><line x1="404.7" y1="101.3" x2="454.2" y2="47.7"/><line x1="503.7" y1="422.9" x2="553.2" y2="369.3"/><line x1="256.2" y1="369.3" x2="305.7" y2="315.7"/><line x1="107.7" y1="422.9" x2="157.2" y2="476.5"/><line x1="256.2" y1="154.9" x2="305.7" y2="208.5"/><line x1="355.2" y1="262.1" x2="404.7" y2="315.7"/><line x1="503.7" y1="315.7" x2="553.2" y2="369.3"/><line x1="256.2" y1="476.5" x2="305.7" y2="422.9"/><line x1="454.2" y1="476.5" x2="503.7" y2="422.9"/><line x1="355.2" y1="154.9" x2="404.7" y2="208.5"/><line x1="305.7" y1="315.7" x2="355.2" y2="262.1"/></g><g stroke="#f0f0f0" stroke-width="1.2" opacity="0.85"><line x1="158.7" y1="478.0" x2="208.2" y2="424.4"/><line x1="307.2" y1="531.6" x2="356.7" y2="478.0"/><line x1="208.2" y1="317.2" x2="257.7" y2="263.6"/><line x1="406.2" y1="531.6" x2="455.7" y2="478.0"/><line x1="356.7" y1="478.0" x2="406.2" y2="424.4"/><line x1="356.7" y1="370.8" x2="406.2" y2="317.2"/><line x1="158.7" y1="370.8" x2="208.2" y2="317.2"/><line x1="257.7" y1="263.6" x2="307.2" y2="210.0"/><line x1="109.2" y1="210.0" x2="158.7" y2="156.4"/><line x1="307.2" y1="102.8" x2="356.7" y2="49.2"/><line x1="208.2" y1="210.0" x2="257.7" y2="156.4"/><line x1="307.2" y1="210.0" x2="356.7" y2="156.4"/><line x1="356.7" y1="156.4" x2="406.2" y2="102.8"/><line x1="208.2" y1="531.6" x2="257.7" y2="478.0"/><line x1="158.7" y1="156.4" x2="208.2" y2="102.8"/><line x1="208.2" y1="424.4" x2="257.7" y2="370.8"/><line x1="257.7" y1="156.4" x2="307.2" y2="102.8"/><line x1="109.2" y1="424.4" x2="158.7" y2="370.8"/><line x1="356.7" y1="263.6" x2="406.2" y2="210.0"/><line x1="109.2" y1="317.2" x2="158.7" y2="263.6"/><line x1="307.2" y1="424.4" x2="356.7" y2="370.8"/><line x1="158.7" y1="263.6" x2="208.2" y2="210.0"/><line x1="406.2" y1="102.8" x2="455.7" y2="49.2"/><line x1="257.7" y1="370.8" x2="307.2" y2="317.2"/><line x1="257.7" y1="478.0" x2="307.2" y2="424.4"/><line x1="307.2" y1="317.2" x2="356.7" y2="263.6"/></g><g stroke="#eaea1a" stroke-width="2.1"><line x1="454.2" y1="154.9" x2="503.7" y2="101.3"/><line x1="404.7" y1="315.7" x2="454.2" y2="369.3"/><line x1="404.7" y1="422.9" x2="454.2" y2="369.3"/><line x1="503.7" y1="315.7" x2="553.2" y2="262.1"/><line x1="454.2" y1="262.1" x2="503.7" y2="208.5"/><line x1="454.2" y1="369.3" x2="503.7" y2="422.9"/><line x1="404.7" y1="208.5" x2="454.2" y2="154.9"/><line x1="553.2" y1="262.1" x2="602.7" y2="315.7"/><line x1="404.7" y1="422.9" x2="454.2" y2="476.5"/><line x1="553.2" y1="369.3" x2="602.7" y2="315.7"/><line x1="404.7" y1="315.7" x2="454.2" y2="262.1"/><line x1="454.2" y1="262.1" x2="503.7" y2="315.7"/><line x1="454.2" y1="154.9" x2="503.7" y2="208.5"/><line x1="503.7" y1="208.5" x2="553.2" y2="262.1"/><line x1="404.7" y1="208.5" x2="454.2" y2="262.1"/><line x1="503.7" y1="101.3" x2="553.2" y2="154.9"/><line x1="454.2" y1="369.3" x2="503.7" y2="315.7"/><line x1="503.7" y1="208.5" x2="553.2" y2="154.9"/><line x1="503.7" y1="315.7" x2="553.2" y2="369.3"/><line x1="454.2" y1="476.5" x2="503.7" y2="422.9"/><line x1="503.7" y1="422.9" x2="553.2" y2="369.3"/></g><g font-family="Liberation Sans" font-size="13.5" stroke-width="0.45"><text x="355.2" y="105.3" text-anchor="middle" fill="#e81414" stroke="#e81414">10</text><text x="454.2" y="105.3" text-anchor="middle" fill="#e81414" stroke="#e81414">56</text><text x="206.7" y="158.9" text-anchor="middle" fill="#e81414" stroke="#e81414">234</text><text x="305.7" y="158.9" text-anchor="middle" fill="#e81414" stroke="#e81414">337</text><text x="404.7" y="158.9" text-anchor="middle" fill="#e81414" stroke="#e81414">315</text><text x="502.2" y="158.9" text-anchor="middle"><tspan fill="#f2f218" stroke="#f2f218">33</tspan><tspan fill="#f01818" stroke="#f01818">/ 83</tspan></text><text x="157.2" y="212.5" text-anchor="middle" fill="#e81414" stroke="#e81414">87</text><text x="256.2" y="212.5" text-anchor="middle" fill="#e81414" stroke="#e81414">353</text><text x="355.2" y="212.5" text-anchor="middle" fill="#e81414" stroke="#e81414">301</text><text x="448.2" y="212.5" text-anchor="middle"><tspan fill="#f2f218" stroke="#f2f218">29</tspan><tspan fill="#f01818" stroke="#f01818"> / 314</tspan></text><text x="206.7" y="266.1" text-anchor="middle" fill="#e81414" stroke="#e81414">347</text><text x="305.7" y="266.1" text-anchor="middle" fill="#e81414" stroke="#e81414">374</text><text x="404.7" y="266.1" text-anchor="middle" fill="#e81414" stroke="#e81414">373</text><text x="497.7" y="266.1" text-anchor="middle"><tspan fill="#f2f218" stroke="#f2f218">279</tspan><tspan fill="#f01818" stroke="#f01818">/ 398</tspan></text><text x="157.2" y="319.7" text-anchor="middle" fill="#e81414" stroke="#e81414">278</text><text x="256.2" y="319.7" text-anchor="middle" fill="#e81414" stroke="#e81414">350</text><text x="355.2" y="319.7" text-anchor="middle" fill="#e81414" stroke="#e81414">474</text><text x="448.2" y="319.7" text-anchor="middle"><tspan fill="#f2f218" stroke="#f2f218">44</tspan><tspan fill="#f01818" stroke="#f01818"> / 349</tspan></text><text x="553.2" y="319.7" text-anchor="middle" fill="#f2f218" stroke="#f2f218">89</text><text x="206.7" y="373.3" text-anchor="middle" fill="#e81414" stroke="#e81414">365</text><text x="305.7" y="373.3" text-anchor="middle" fill="#e81414" stroke="#e81414">354</text><text x="404.7" y="373.3" text-anchor="middle" fill="#e81414" stroke="#e81414">554</text><text x="497.7" y="373.3" text-anchor="middle"><tspan fill="#f2f218" stroke="#f2f218">352</tspan><tspan fill="#f01818" stroke="#f01818">/ 402</tspan></text><text x="157.2" y="426.9" text-anchor="middle" fill="#e81414" stroke="#e81414">75</text><text x="256.2" y="426.9" text-anchor="middle" fill="#e81414" stroke="#e81414">302</text><text x="355.2" y="426.9" text-anchor="middle" fill="#e81414" stroke="#e81414">371</text><text x="448.2" y="426.9" text-anchor="middle"><tspan fill="#f2f218" stroke="#f2f218">36</tspan><tspan fill="#f01818" stroke="#f01818"> / 397</tspan></text><text x="206.7" y="480.5" text-anchor="middle" fill="#e81414" stroke="#e81414">43</text><text x="305.7" y="480.5" text-anchor="middle" fill="#e81414" stroke="#e81414">257</text><text x="404.7" y="480.5" text-anchor="middle" fill="#e81414" stroke="#e81414">218</text></g><g fill="none" stroke-width="1.3"><rect x="259.2" y="144.3" width="7" height="7" stroke="#f01818"/><rect x="262.1" y="142.2" width="7" height="7" stroke="#f01818"/><rect x="258.5" y="129.3" width="7" height="7" stroke="#f01818"/><rect x="244.2" y="129.6" width="7" height="7" stroke="#f01818"/><rect x="254.6" y="135.1" width="7" height="7" stroke="#f01818"/><rect x="258.1" y="127.6" width="7" height="7" stroke="#f01818"/><rect x="247.8" y="126.9" width="7" height="7" stroke="#f01818"/><rect x="261.5" y="134.3" width="7" height="7" stroke="#f01818"/><rect x="248.0" y="136.2" width="7" height="7" stroke="#f01818"/><rect x="245.1" y="127.5" width="7" height="7" stroke="#f01818"/><rect x="266.5" y="138.3" width="7" height="7" stroke="#f01818"/><rect x="261.5" y="143.3" width="7" height="7" stroke="#f01818"/><rect x="254.9" y="137.0" width="7" height="7" stroke="#f01818"/><rect x="254.4" y="141.4" width="7" height="7" stroke="#f01818"/><rect x="254.9" y="128.2" width="7" height="7" stroke="#f01818"/><rect x="261.6" y="126.6" width="7" height="7" stroke="#f01818"/><rect x="265.5" y="139.0" width="7" height="7" stroke="#f01818"/><rect x="261.4" y="142.8" width="7" height="7" stroke="#f01818"/><rect x="258.4" y="144.0" width="7" height="7" stroke="#f01818"/><rect x="253.9" y="142.4" width="7" height="7" stroke="#f01818"/><rect x="252.9" y="129.3" width="7" height="7" stroke="#f01818"/><rect x="251.4" y="133.1" width="7" height="7" stroke="#f01818"/><rect x="262.5" y="142.4" width="7" height="7" stroke="#f01818"/><rect x="245.1" y="133.9" width="7" height="7" stroke="#f01818"/><rect x="256.0" y="144.0" width="7" height="7" stroke="#f01818"/><rect x="261.1" y="128.2" width="7" height="7" stroke="#f01818"/><rect x="266.5" y="136.7" width="7" height="7" stroke="#f01818"/><rect x="244.1" y="130.8" width="7" height="7" stroke="#f01818"/><rect x="258.4" y="135.7" width="7" height="7" stroke="#f01818"/><rect x="249.9" y="132.8" width="7" height="7" stroke="#f01818"/><rect x="253.4" y="128.2" width="7" height="7" stroke="#f01818"/><rect x="257.8" y="131.4" width="7" height="7" stroke="#f01818"/><rect x="260.3" y="124.9" width="7" height="7" stroke="#f01818"/><rect x="250.6" y="124.6" width="7" height="7" stroke="#f01818"/><rect x="266.5" y="130.0" width="7" height="7" stroke="#f01818"/><rect x="258.6" y="124.7" width="7" height="7" stroke="#f01818"/><rect x="259.8" y="124.9" width="7" height="7" stroke="#f01818"/><rect x="260.9" y="131.2" width="7" height="7" stroke="#f01818"/><rect x="149.4" y="260.4" width="7" height="7" stroke="#f01818"/><rect x="149.8" y="262.2" width="7" height="7" stroke="#f01818"/><rect x="142.1" y="278.7" width="7" height="7" stroke="#f01818"/><rect x="139.0" y="288.3" width="7" height="7" stroke="#f01818"/><rect x="137.1" y="386.7" width="7" height="7" stroke="#f01818"/><rect x="348.6" y="483.4" width="7" height="7" stroke="#f01818"/><rect x="358.7" y="484.1" width="7" height="7" stroke="#f01818"/><rect x="355.8" y="487.4" width="7" height="7" stroke="#f01818"/><rect x="348.3" y="480.7" width="7" height="7" stroke="#f01818"/><rect x="344.8" y="484.0" width="7" height="7" stroke="#f01818"/><rect x="353.6" y="482.4" width="7" height="7" stroke="#f01818"/><rect x="358.4" y="479.4" width="7" height="7" stroke="#f01818"/><rect x="360.4" y="484.3" width="7" height="7" stroke="#f01818"/><rect x="343.3" y="490.2" width="7" height="7" stroke="#f01818"/><rect x="359.0" y="477.9" width="7" height="7" stroke="#f01818"/><rect x="353.0" y="480.2" width="7" height="7" stroke="#f01818"/><rect x="352.5" y="479.6" width="7" height="7" stroke="#f01818"/><rect x="342.2" y="487.6" width="7" height="7" stroke="#f01818"/><rect x="348.2" y="485.6" width="7" height="7" stroke="#f01818"/><rect x="347.2" y="478.1" width="7" height="7" stroke="#f01818"/><rect x="346.7" y="483.9" width="7" height="7" stroke="#f01818"/><rect x="343.8" y="481.9" width="7" height="7" stroke="#f01818"/><rect x="347.0" y="488.0" width="7" height="7" stroke="#f01818"/><rect x="354.0" y="486.5" width="7" height="7" stroke="#f01818"/><rect x="341.1" y="481.5" width="7" height="7" stroke="#f01818"/><rect x="359.5" y="483.8" width="7" height="7" stroke="#f01818"/><rect x="351.0" y="486.8" width="7" height="7" stroke="#f01818"/><rect x="348.0" y="484.8" width="7" height="7" stroke="#f01818"/><rect x="342.6" y="486.1" width="7" height="7" stroke="#f01818"/><rect x="369.9" y="495.5" width="7" height="7" stroke="#f01818"/><rect x="372.4" y="497.3" width="7" height="7" stroke="#f01818"/><rect x="257.9" y="478.9" width="7" height="7" stroke="#f01818"/><rect x="257.6" y="478.6" width="7" height="7" stroke="#f01818"/><rect x="447.1" y="473.4" width="7" height="7" stroke="#f01818"/><rect x="455.1" y="475.3" width="7" height="7" stroke="#f01818"/><rect x="456.5" y="474.2" width="7" height="7" stroke="#f01818"/><rect x="452.8" y="479.0" width="7" height="7" stroke="#f01818"/><rect x="457.7" y="477.7" width="7" height="7" stroke="#f01818"/><rect x="449.7" y="473.2" width="7" height="7" stroke="#f01818"/><rect x="452.5" y="473.3" width="7" height="7" stroke="#f01818"/><rect x="450.1" y="474.3" width="7" height="7" stroke="#f01818"/><rect x="448.0" y="472.8" width="7" height="7" stroke="#f01818"/><rect x="446.6" y="473.7" width="7" height="7" stroke="#f01818"/><rect x="448.5" y="474.8" width="7" height="7" stroke="#f01818"/><rect x="458.5" y="476.4" width="7" height="7" stroke="#f01818"/><rect x="450.0" y="473.2" width="7" height="7" stroke="#f01818"/><rect x="446.4" y="475.2" width="7" height="7" stroke="#f01818"/><rect x="454.5" y="477.4" width="7" height="7" stroke="#f01818"/><rect x="454.1" y="474.2" width="7" height="7" stroke="#f01818"/><rect x="456.8" y="476.4" width="7" height="7" stroke="#f01818"/><rect x="460.1" y="470.8" width="7" height="7" stroke="#f01818"/><rect x="464.7" y="471.6" width="7" height="7" stroke="#f01818"/><rect x="469.6" y="464.4" width="7" height="7" stroke="#f01818"/><rect x="468.9" y="464.8" width="7" height="7" stroke="#f01818"/><rect x="472.9" y="462.5" width="7" height="7" stroke="#f01818"/><rect x="479.8" y="460.0" width="7" height="7" stroke="#f01818"/><rect x="482.2" y="457.9" width="7" height="7" stroke="#f01818"/><rect x="515.3" y="218.5" width="7" height="7" stroke="#ecec1a"/><rect x="517.2" y="212.8" width="7" height="7" stroke="#ecec1a"/><rect x="516.2" y="217.0" width="7" height="7" stroke="#ecec1a"/><rect x="515.1" y="213.3" width="7" height="7" stroke="#ecec1a"/><rect x="515.0" y="216.3" width="7" height="7" stroke="#ecec1a"/><rect x="510.4" y="218.9" width="7" height="7" stroke="#ecec1a"/><rect x="524.1" y="230.4" width="7" height="7" stroke="#ecec1a"/><rect x="524.3" y="234.2" width="7" height="7" stroke="#ecec1a"/><rect x="524.4" y="230.1" width="7" height="7" stroke="#ecec1a"/><rect x="525.9" y="233.9" width="7" height="7" stroke="#ecec1a"/><rect x="480.1" y="441.7" width="7" height="7" stroke="#ecec1a"/><rect x="481.0" y="441.0" width="7" height="7" stroke="#ecec1a"/><rect x="481.6" y="440.4" width="7" height="7" stroke="#ecec1a"/><rect x="484.3" y="436.1" width="7" height="7" stroke="#ecec1a"/><rect x="486.8" y="435.9" width="7" height="7" stroke="#ecec1a"/><rect x="490.4" y="430.2" width="7" height="7" stroke="#ecec1a"/><rect x="488.1" y="430.8" width="7" height="7" stroke="#ecec1a"/><rect x="494.2" y="425.7" width="7" height="7" stroke="#ecec1a"/><rect x="497.4" y="425.1" width="7" height="7" stroke="#ecec1a"/><rect x="497.6" y="422.1" width="7" height="7" stroke="#ecec1a"/><rect x="499.9" y="420.7" width="7" height="7" stroke="#ecec1a"/><rect x="500.2" y="417.9" width="7" height="7" stroke="#ecec1a"/><rect x="504.0" y="411.8" width="7" height="7" stroke="#ecec1a"/><rect x="506.8" y="412.6" width="7" height="7" stroke="#ecec1a"/><rect x="508.2" y="408.8" width="7" height="7" stroke="#ecec1a"/><rect x="508.7" y="409.4" width="7" height="7" stroke="#ecec1a"/><rect x="515.5" y="403.0" width="7" height="7" stroke="#ecec1a"/><rect x="514.4" y="400.3" width="7" height="7" stroke="#ecec1a"/><rect x="520.6" y="397.0" width="7" height="7" stroke="#ecec1a"/><rect x="518.5" y="396.6" width="7" height="7" stroke="#ecec1a"/><rect x="522.9" y="394.0" width="7" height="7" stroke="#ecec1a"/><rect x="522.7" y="390.4" width="7" height="7" stroke="#ecec1a"/><rect x="527.9" y="390.9" width="7" height="7" stroke="#ecec1a"/><rect x="529.5" y="385.3" width="7" height="7" stroke="#ecec1a"/><rect x="534.7" y="384.1" width="7" height="7" stroke="#ecec1a"/><rect x="532.0" y="382.4" width="7" height="7" stroke="#ecec1a"/></g><g stroke="#d00c0c" stroke-width="1.4" fill="none"><circle cx="378.8" cy="276.4" r="8.5"/><path d="M378.8 267 v6.5 M378.8 279.5 v6.5 M369 276.4 h6.5 M382 276.4 h7"/></g></svg>
<div class="abs" style="left:0;top:0;width:652px;height:38px;background:rgba(232,236,241,0.955)"></div>
<div class="abs" style="left:0;top:38px;width:178px;height:20px;background:#c9ccd1"></div>
<div class="abs" style="left:4px;top:456px;width:645px;height:23px;background:#d3d6da;border-radius:6px"></div>
</div>
<span class="t" style="left:14px;top:89px;font-size:14px;color:#2b3036;letter-spacing:-0.45px;">HiPS / MOC</span>
<span class="t" style="left:154px;top:89px;font-size:14px;color:#2b3036;letter-spacing:0.1px;">Equ / Spherical</span>
<span class="t" style="left:9px;top:117px;font-size:12px;color:#1f2328;letter-spacing:-0.2px;">LSSTComCam: DP1 r</span>
<span class="t" style="left:131px;top:117px;font-size:12px;color:#4b535c;letter-spacing:-0.25px;">FOV:2.0°</span>
<span class="t" style="left:569px;top:536px;font-size:13px;color:#2b3036;letter-spacing:-0.2px;">Click Lock: off</span>
<div class="abs" style="left:48px;top:534.3px;width:60px;height:18.6px;border-radius:5px;background:#dfeaf7"></div>
<span class="t" style="left:54.5px;top:538px;font-size:11px;color:#1d4477;letter-spacing:-0.45px;">EQ-J2000:</span>
<div class="abs" style="left:534px;top:535px;width:28px;height:17px;border-radius:9px;background:#5a636d"></div>
<div class="abs" style="left:537px;top:538px;width:11px;height:11px;border-radius:6px;background:#fff"></div>
<div class="panel" style="left:661px;top:5px;width:669px;height:553px">
<div class="tabstrip"></div>
<div class="tab" style="left:9px;width:93px"></div>
<div class="abs" style="left:166px;top:9px;width:1px;height:16px;background:#c5cfdb"></div>
<div class="abs" style="left:0;right:0;top:69px;height:1px;background:#d3dae3"></div>
</div>
<span class="t" style="left:684px;top:15px;font-size:13px;color:#2b3036;letter-spacing:-0.3px;">Active Chart</span>
<span class="t" style="left:777px;top:15px;font-size:13px;color:#2b3036;letter-spacing:-0.4px;">Details</span>
<svg class="ic" width="1330" height="911">
<g fill="#1f65a9" fill-opacity="0.5"><circle cx="993.8" cy="418.6" r="3.9"/><circle cx="798.1" cy="313.3" r="3.9"/><circle cx="1043.8" cy="283.4" r="3.9"/><circle cx="1077.9" cy="167.0" r="3.9"/><circle cx="1126.0" cy="288.7" r="3.9"/><circle cx="936.6" cy="397.5" r="3.9"/><circle cx="998.4" cy="161.8" r="3.9"/><circle cx="990.8" cy="296.1" r="3.9"/><circle cx="917.1" cy="201.5" r="3.9"/><circle cx="840.5" cy="324.7" r="3.9"/><circle cx="1060.4" cy="210.8" r="3.9"/><circle cx="1096.1" cy="426.7" r="3.9"/><circle cx="920.3" cy="175.8" r="3.9"/><circle cx="1047.1" cy="444.6" r="3.9"/><circle cx="1078.8" cy="240.0" r="3.9"/><circle cx="1105.2" cy="346.2" r="3.9"/><circle cx="964.7" cy="333.3" r="3.9"/><circle cx="915.6" cy="237.6" r="3.9"/><circle cx="884.8" cy="260.9" r="3.9"/><circle cx="1041.3" cy="266.7" r="3.9"/><circle cx="1037.1" cy="362.9" r="3.9"/><circle cx="1079.5" cy="253.8" r="3.9"/><circle cx="1031.8" cy="310.4" r="3.9"/><circle cx="902.3" cy="331.0" r="3.9"/><circle cx="1045.8" cy="233.9" r="3.9"/><circle cx="869.8" cy="379.2" r="3.9"/><circle cx="1061.4" cy="362.8" r="3.9"/><circle cx="1118.9" cy="369.1" r="3.9"/><circle cx="1055.4" cy="341.9" r="3.9"/><circle cx="966.7" cy="443.1" r="3.9"/><circle cx="916.1" cy="188.2" r="3.9"/><circle cx="1119.8" cy="448.1" r="3.9"/><circle cx="914.7" cy="163.7" r="3.9"/><circle cx="981.4" cy="378.9" r="3.9"/><circle cx="1114.7" cy="200.5" r="3.9"/><circle cx="867.1" cy="345.9" r="3.9"/><circle cx="827.0" cy="349.6" r="3.9"/><circle cx="986.4" cy="419.7" r="3.9"/><circle cx="1051.2" cy="273.0" r="3.9"/><circle cx="971.5" cy="446.2" r="3.9"/><circle cx="872.3" cy="339.9" r="3.9"/><circle cx="806.2" cy="324.7" r="3.9"/><circle cx="833.6" cy="192.6" r="3.9"/><circle cx="1018.5" cy="370.0" r="3.9"/><circle cx="784.6" cy="297.1" r="3.9"/><circle cx="851.6" cy="372.4" r="3.9"/><circle cx="950.7" cy="160.8" r="3.9"/><circle cx="820.8" cy="343.6" r="3.9"/><circle cx="1063.2" cy="386.4" r="3.9"/><circle cx="1081.5" cy="378.2" r="3.9"/><circle cx="842.6" cy="257.9" r="3.9"/><circle cx="1032.2" cy="388.7" r="3.9"/><circle cx="921.3" cy="317.9" r="3.9"/><circle cx="807.0" cy="337.0" r="3.9"/><circle cx="1033.5" cy="300.9" r="3.9"/><circle cx="1063.9" cy="381.0" r="3.9"/><circle cx="806.7" cy="295.0" r="3.9"/><circle cx="1054.9" cy="451.0" r="3.9"/><circle cx="876.2" cy="302.1" r="3.9"/><circle cx="1075.6" cy="329.4" r="3.9"/><circle cx="894.8" cy="426.0" r="3.9"/><circle cx="855.1" cy="361.5" r="3.9"/><circle cx="868.4" cy="159.1" r="3.9"/><circle cx="1066.4" cy="253.2" r="3.9"/><circle cx="860.3" cy="287.7" r="3.9"/><circle cx="966.7" cy="143.9" r="3.9"/><circle cx="948.8" cy="155.3" r="3.9"/><circle cx="963.1" cy="143.8" r="3.9"/><circle cx="1071.4" cy="279.3" r="3.9"/><circle cx="1120.9" cy="354.0" r="3.9"/><circle cx="1067.8" cy="271.7" r="3.9"/><circle cx="1062.5" cy="441.6" r="3.9"/><circle cx="928.6" cy="221.2" r="3.9"/><circle cx="874.6" cy="361.6" r="3.9"/><circle cx="827.7" cy="287.5" r="3.9"/><circle cx="912.5" cy="443.6" r="3.9"/><circle cx="999.6" cy="173.4" r="3.9"/><circle cx="931.6" cy="219.7" r="3.9"/><circle cx="909.2" cy="400.2" r="3.9"/><circle cx="1040.8" cy="157.0" r="3.9"/><circle cx="1017.4" cy="258.1" r="3.9"/><circle cx="951.1" cy="331.5" r="3.9"/><circle cx="856.4" cy="326.9" r="3.9"/><circle cx="978.1" cy="384.7" r="3.9"/><circle cx="952.5" cy="375.5" r="3.9"/><circle cx="1068.5" cy="273.7" r="3.9"/><circle cx="1004.2" cy="406.5" r="3.9"/><circle cx="914.2" cy="247.7" r="3.9"/><circle cx="879.1" cy="284.8" r="3.9"/><circle cx="1129.9" cy="256.5" r="3.9"/><circle cx="1045.3" cy="457.7" r="3.9"/><circle cx="791.0" cy="284.3" r="3.9"/><circle cx="971.5" cy="263.0" r="3.9"/><circle cx="879.7" cy="320.9" r="3.9"/><circle cx="815.2" cy="249.6" r="3.9"/><circle cx="986.4" cy="198.6" r="3.9"/><circle cx="896.8" cy="176.0" r="3.9"/><circle cx="865.3" cy="222.9" r="3.9"/><circle cx="1056.5" cy="218.0" r="3.9"/><circle cx="1010.3" cy="263.0" r="3.9"/><circle cx="858.3" cy="218.5" r="3.9"/><circle cx="935.5" cy="443.5" r="3.9"/><circle cx="1055.9" cy="324.2" r="3.9"/><circle cx="957.8" cy="434.3" r="3.9"/><circle cx="995.5" cy="166.7" r="3.9"/><circle cx="1004.5" cy="342.3" r="3.9"/><circle cx="944.1" cy="355.3" r="3.9"/><circle cx="1048.3" cy="149.6" r="3.9"/><circle cx="1097.5" cy="167.8" r="3.9"/><circle cx="863.5" cy="231.0" r="3.9"/><circle cx="1063.3" cy="308.1" r="3.9"/><circle cx="946.2" cy="180.2" r="3.9"/><circle cx="901.1" cy="153.1" r="3.9"/><circle cx="1008.6" cy="356.0" r="3.9"/><circle cx="815.5" cy="299.4" r="3.9"/><circle cx="938.9" cy="328.5" r="3.9"/><circle cx="818.0" cy="220.1" r="3.9"/><circle cx="974.4" cy="444.6" r="3.9"/><circle cx="1025.0" cy="274.0" r="3.9"/><circle cx="1094.4" cy="229.2" r="3.9"/><circle cx="865.8" cy="348.4" r="3.9"/><circle cx="1068.0" cy="244.4" r="3.9"/><circle cx="1012.8" cy="424.7" r="3.9"/><circle cx="913.7" cy="350.9" r="3.9"/><circle cx="864.3" cy="270.0" r="3.9"/><circle cx="1046.7" cy="270.7" r="3.9"/><circle cx="1076.2" cy="443.2" r="3.9"/><circle cx="801.7" cy="272.7" r="3.9"/><circle cx="876.0" cy="163.3" r="3.9"/><circle cx="946.4" cy="161.5" r="3.9"/><circle cx="805.9" cy="315.8" r="3.9"/><circle cx="935.0" cy="221.6" r="3.9"/><circle cx="912.7" cy="350.0" r="3.9"/><circle cx="890.3" cy="412.9" r="3.9"/><circle cx="937.3" cy="450.7" r="3.9"/><circle cx="960.1" cy="225.9" r="3.9"/><circle cx="862.5" cy="292.0" r="3.9"/><circle cx="1001.9" cy="172.6" r="3.9"/><circle cx="1038.0" cy="383.8" r="3.9"/><circle cx="938.6" cy="345.0" r="3.9"/><circle cx="825.3" cy="373.0" r="3.9"/><circle cx="992.2" cy="214.4" r="3.9"/><circle cx="894.6" cy="335.1" r="3.9"/><circle cx="872.8" cy="243.5" r="3.9"/><circle cx="813.1" cy="274.1" r="3.9"/><circle cx="1022.0" cy="393.7" r="3.9"/><circle cx="885.0" cy="427.8" r="3.9"/><circle cx="928.3" cy="422.4" r="3.9"/><circle cx="895.9" cy="384.8" r="3.9"/><circle cx="1044.6" cy="343.1" r="3.9"/><circle cx="823.7" cy="300.6" r="3.9"/><circle cx="1076.3" cy="398.9" r="3.9"/><circle cx="777.3" cy="315.0" r="3.9"/><circle cx="1020.4" cy="261.6" r="3.9"/><circle cx="851.6" cy="222.2" r="3.9"/><circle cx="1022.7" cy="331.4" r="3.9"/><circle cx="961.5" cy="279.4" r="3.9"/><circle cx="1054.1" cy="257.3" r="3.9"/><circle cx="1063.0" cy="282.8" r="3.9"/><circle cx="1096.3" cy="177.3" r="3.9"/><circle cx="802.5" cy="287.6" r="3.9"/><circle cx="1081.2" cy="294.2" r="3.9"/><circle cx="1067.0" cy="346.3" r="3.9"/><circle cx="1005.6" cy="379.2" r="3.9"/><circle cx="896.0" cy="160.5" r="3.9"/><circle cx="880.0" cy="383.7" r="3.9"/><circle cx="1117.8" cy="369.7" r="3.9"/><circle cx="921.0" cy="285.1" r="3.9"/><circle cx="1067.1" cy="371.2" r="3.9"/><circle cx="1033.2" cy="395.8" r="3.9"/><circle cx="1126.9" cy="406.5" r="3.9"/><circle cx="1023.9" cy="358.7" r="3.9"/><circle cx="1045.4" cy="282.4" r="3.9"/><circle cx="891.0" cy="213.9" r="3.9"/><circle cx="1067.8" cy="193.2" r="3.9"/><circle cx="1096.1" cy="254.8" r="3.9"/><circle cx="1002.2" cy="253.6" r="3.9"/><circle cx="819.6" cy="276.0" r="3.9"/><circle cx="1000.7" cy="393.7" r="3.9"/><circle cx="1081.3" cy="285.2" r="3.9"/><circle cx="1003.2" cy="315.6" r="3.9"/><circle cx="930.6" cy="281.3" r="3.9"/><circle cx="851.8" cy="229.6" r="3.9"/><circle cx="788.4" cy="315.6" r="3.9"/><circle cx="1026.1" cy="336.0" r="3.9"/><circle cx="1052.1" cy="269.6" r="3.9"/><circle cx="1102.6" cy="401.5" r="3.9"/><circle cx="1031.1" cy="168.8" r="3.9"/><circle cx="1126.4" cy="350.9" r="3.9"/><circle cx="965.3" cy="291.7" r="3.9"/><circle cx="820.5" cy="223.8" r="3.9"/><circle cx="857.4" cy="228.0" r="3.9"/><circle cx="876.7" cy="159.1" r="3.9"/><circle cx="897.0" cy="199.2" r="3.9"/><circle cx="944.6" cy="159.9" r="3.9"/><circle cx="891.2" cy="368.6" r="3.9"/><circle cx="1108.7" cy="145.6" r="3.9"/><circle cx="874.2" cy="218.8" r="3.9"/><circle cx="961.0" cy="248.1" r="3.9"/><circle cx="1098.3" cy="327.3" r="3.9"/><circle cx="1022.7" cy="343.4" r="3.9"/><circle cx="930.5" cy="171.8" r="3.9"/><circle cx="1111.6" cy="233.6" r="3.9"/><circle cx="1001.3" cy="334.6" r="3.9"/><circle cx="938.4" cy="385.5" r="3.9"/><circle cx="1122.1" cy="149.0" r="3.9"/><circle cx="1010.6" cy="226.0" r="3.9"/><circle cx="824.7" cy="242.9" r="3.9"/><circle cx="964.0" cy="428.0" r="3.9"/><circle cx="1007.8" cy="425.9" r="3.9"/><circle cx="949.8" cy="238.4" r="3.9"/><circle cx="908.2" cy="403.2" r="3.9"/><circle cx="812.1" cy="390.4" r="3.9"/><circle cx="943.1" cy="223.7" r="3.9"/><circle cx="924.7" cy="455.8" r="3.9"/><circle cx="862.1" cy="344.9" r="3.9"/><circle cx="1005.4" cy="286.3" r="3.9"/><circle cx="1023.6" cy="211.5" r="3.9"/><circle cx="1071.5" cy="233.8" r="3.9"/><circle cx="1004.7" cy="182.6" r="3.9"/><circle cx="778.2" cy="302.3" r="3.9"/><circle cx="970.4" cy="141.2" r="3.9"/><circle cx="848.4" cy="286.9" r="3.9"/><circle cx="1056.1" cy="451.7" r="3.9"/><circle cx="1073.1" cy="215.5" r="3.9"/><circle cx="830.2" cy="380.6" r="3.9"/><circle cx="1099.8" cy="427.1" r="3.9"/><circle cx="1052.6" cy="448.7" r="3.9"/><circle cx="913.3" cy="328.5" r="3.9"/><circle cx="943.0" cy="167.7" r="3.9"/><circle cx="954.8" cy="422.1" r="3.9"/><circle cx="997.0" cy="239.4" r="3.9"/><circle cx="886.9" cy="350.2" r="3.9"/><circle cx="1076.2" cy="229.8" r="3.9"/><circle cx="880.8" cy="206.1" r="3.9"/><circle cx="1025.8" cy="332.4" r="3.9"/><circle cx="807.5" cy="335.2" r="3.9"/><circle cx="1053.0" cy="297.9" r="3.9"/><circle cx="1011.7" cy="370.2" r="3.9"/><circle cx="834.7" cy="290.3" r="3.9"/><circle cx="898.6" cy="293.7" r="3.9"/><circle cx="1095.5" cy="232.3" r="3.9"/><circle cx="1002.2" cy="357.7" r="3.9"/><circle cx="871.6" cy="292.0" r="3.9"/><circle cx="1017.9" cy="172.5" r="3.9"/><circle cx="984.1" cy="194.1" r="3.9"/><circle cx="959.5" cy="229.6" r="3.9"/><circle cx="868.0" cy="182.3" r="3.9"/><circle cx="1123.9" cy="153.2" r="3.9"/><circle cx="1038.0" cy="346.8" r="3.9"/><circle cx="851.5" cy="224.8" r="3.9"/><circle cx="936.8" cy="216.4" r="3.9"/><circle cx="954.1" cy="178.1" r="3.9"/><circle cx="1048.4" cy="294.4" r="3.9"/><circle cx="1005.1" cy="140.7" r="3.9"/><circle cx="1024.9" cy="242.5" r="3.9"/><circle cx="907.1" cy="343.8" r="3.9"/><circle cx="1028.0" cy="453.5" r="3.9"/><circle cx="1043.8" cy="375.0" r="3.9"/><circle cx="1005.6" cy="345.3" r="3.9"/><circle cx="1061.7" cy="205.5" r="3.9"/><circle cx="969.5" cy="381.4" r="3.9"/><circle cx="947.3" cy="458.5" r="3.9"/><circle cx="889.5" cy="378.5" r="3.9"/><circle cx="1020.7" cy="316.6" r="3.9"/><circle cx="1104.0" cy="177.1" r="3.9"/><circle cx="1006.2" cy="373.1" r="3.9"/><circle cx="1081.2" cy="419.1" r="3.9"/><circle cx="930.5" cy="449.3" r="3.9"/><circle cx="1062.4" cy="243.4" r="3.9"/><circle cx="972.7" cy="362.0" r="3.9"/><circle cx="1106.1" cy="378.5" r="3.9"/><circle cx="957.4" cy="300.2" r="3.9"/><circle cx="984.7" cy="142.4" r="3.9"/><circle cx="887.5" cy="302.4" r="3.9"/><circle cx="870.9" cy="231.0" r="3.9"/><circle cx="856.5" cy="362.0" r="3.9"/><circle cx="1118.6" cy="294.3" r="3.9"/><circle cx="863.6" cy="254.2" r="3.9"/><circle cx="885.8" cy="397.8" r="3.9"/><circle cx="901.7" cy="213.7" r="3.9"/><circle cx="1011.6" cy="294.9" r="3.9"/><circle cx="969.5" cy="220.5" r="3.9"/><circle cx="1074.1" cy="162.4" r="3.9"/><circle cx="1066.4" cy="317.7" r="3.9"/><circle cx="1046.5" cy="386.7" r="3.9"/><circle cx="946.3" cy="447.8" r="3.9"/><circle cx="981.7" cy="233.2" r="3.9"/><circle cx="930.7" cy="309.8" r="3.9"/><circle cx="950.1" cy="234.2" r="3.9"/><circle cx="857.7" cy="275.1" r="3.9"/><circle cx="1008.5" cy="310.9" r="3.9"/><circle cx="1028.9" cy="310.1" r="3.9"/><circle cx="808.4" cy="268.9" r="3.9"/><circle cx="1029.8" cy="244.7" r="3.9"/><circle cx="885.5" cy="300.0" r="3.9"/><circle cx="1101.0" cy="296.4" r="3.9"/><circle cx="991.3" cy="228.4" r="3.9"/><circle cx="1134.6" cy="360.8" r="3.9"/><circle cx="930.3" cy="422.1" r="3.9"/><circle cx="843.6" cy="208.2" r="3.9"/><circle cx="968.7" cy="189.4" r="3.9"/><circle cx="1118.2" cy="444.8" r="3.9"/><circle cx="1073.6" cy="172.6" r="3.9"/><circle cx="1106.2" cy="296.4" r="3.9"/><circle cx="1050.8" cy="151.0" r="3.9"/><circle cx="1022.3" cy="447.6" r="3.9"/><circle cx="898.0" cy="185.8" r="3.9"/><circle cx="966.5" cy="257.3" r="3.9"/><circle cx="998.7" cy="391.9" r="3.9"/><circle cx="1055.8" cy="392.3" r="3.9"/><circle cx="950.4" cy="381.4" r="3.9"/><circle cx="837.8" cy="202.9" r="3.9"/><circle cx="925.0" cy="224.0" r="3.9"/><circle cx="957.0" cy="185.5" r="3.9"/><circle cx="943.7" cy="203.4" r="3.9"/><circle cx="903.5" cy="230.7" r="3.9"/><circle cx="1002.9" cy="303.6" r="3.9"/><circle cx="1032.2" cy="293.0" r="3.9"/><circle cx="935.5" cy="406.1" r="3.9"/><circle cx="1008.7" cy="334.2" r="3.9"/><circle cx="1044.8" cy="193.7" r="3.9"/><circle cx="1034.9" cy="241.7" r="3.9"/><circle cx="1028.7" cy="252.0" r="3.9"/><circle cx="1030.3" cy="447.2" r="3.9"/><circle cx="833.5" cy="331.2" r="3.9"/><circle cx="1004.0" cy="377.0" r="3.9"/><circle cx="1092.9" cy="227.0" r="3.9"/><circle cx="1054.8" cy="239.4" r="3.9"/><circle cx="1023.0" cy="292.3" r="3.9"/><circle cx="1022.3" cy="218.0" r="3.9"/><circle cx="803.7" cy="331.6" r="3.9"/><circle cx="958.6" cy="274.7" r="3.9"/><circle cx="908.7" cy="394.8" r="3.9"/><circle cx="970.6" cy="390.8" r="3.9"/><circle cx="995.4" cy="329.5" r="3.9"/><circle cx="812.3" cy="384.5" r="3.9"/><circle cx="1059.2" cy="396.2" r="3.9"/><circle cx="812.7" cy="394.6" r="3.9"/><circle cx="1027.3" cy="372.2" r="3.9"/><circle cx="1076.1" cy="333.9" r="3.9"/><circle cx="851.4" cy="384.5" r="3.9"/><circle cx="992.1" cy="232.3" r="3.9"/><circle cx="979.4" cy="340.6" r="3.9"/><circle cx="1001.6" cy="302.4" r="3.9"/><circle cx="1011.2" cy="269.8" r="3.9"/><circle cx="1032.9" cy="262.3" r="3.9"/><circle cx="828.0" cy="252.4" r="3.9"/><circle cx="1022.5" cy="299.0" r="3.9"/><circle cx="890.6" cy="249.6" r="3.9"/><circle cx="1031.7" cy="276.2" r="3.9"/><circle cx="1103.3" cy="437.1" r="3.9"/><circle cx="1082.9" cy="314.2" r="3.9"/><circle cx="891.3" cy="360.9" r="3.9"/><circle cx="915.9" cy="169.3" r="3.9"/><circle cx="1061.9" cy="247.7" r="3.9"/><circle cx="1113.1" cy="366.6" r="3.9"/><circle cx="1052.2" cy="446.3" r="3.9"/><circle cx="848.0" cy="341.5" r="3.9"/><circle cx="996.3" cy="178.0" r="3.9"/><circle cx="1012.1" cy="142.0" r="3.9"/><circle cx="909.6" cy="216.4" r="3.9"/><circle cx="789.4" cy="323.7" r="3.9"/><circle cx="886.8" cy="331.5" r="3.9"/><circle cx="1075.7" cy="329.6" r="3.9"/><circle cx="985.5" cy="417.1" r="3.9"/><circle cx="1117.6" cy="341.2" r="3.9"/><circle cx="1040.5" cy="258.6" r="3.9"/><circle cx="1065.9" cy="377.1" r="3.9"/><circle cx="945.3" cy="199.6" r="3.9"/><circle cx="838.8" cy="384.1" r="3.9"/><circle cx="949.6" cy="367.8" r="3.9"/><circle cx="997.8" cy="197.5" r="3.9"/><circle cx="978.2" cy="276.8" r="3.9"/><circle cx="864.7" cy="246.7" r="3.9"/><circle cx="1038.2" cy="190.4" r="3.9"/><circle cx="826.8" cy="213.6" r="3.9"/><circle cx="826.3" cy="366.3" r="3.9"/><circle cx="876.4" cy="215.4" r="3.9"/><circle cx="805.7" cy="280.7" r="3.9"/><circle cx="969.0" cy="215.6" r="3.9"/><circle cx="948.7" cy="439.0" r="3.9"/><circle cx="976.4" cy="216.8" r="3.9"/><circle cx="907.1" cy="438.7" r="3.9"/><circle cx="867.4" cy="273.1" r="3.9"/><circle cx="1035.5" cy="368.7" r="3.9"/><circle cx="944.1" cy="300.9" r="3.9"/><circle cx="980.7" cy="337.4" r="3.9"/><circle cx="1025.7" cy="298.4" r="3.9"/><circle cx="1090.7" cy="323.2" r="3.9"/><circle cx="1058.0" cy="193.6" r="3.9"/><circle cx="1008.0" cy="171.3" r="3.9"/><circle cx="1020.1" cy="436.6" r="3.9"/><circle cx="1052.3" cy="219.9" r="3.9"/><circle cx="934.4" cy="408.7" r="3.9"/><circle cx="991.1" cy="405.2" r="3.9"/><circle cx="859.9" cy="258.8" r="3.9"/><circle cx="928.0" cy="453.4" r="3.9"/><circle cx="871.3" cy="247.2" r="3.9"/><circle cx="824.2" cy="264.2" r="3.9"/><circle cx="1022.6" cy="432.9" r="3.9"/><circle cx="998.9" cy="261.6" r="3.9"/><circle cx="982.2" cy="187.7" r="3.9"/><circle cx="958.9" cy="195.1" r="3.9"/><circle cx="1094.5" cy="352.7" r="3.9"/><circle cx="855.4" cy="348.8" r="3.9"/><circle cx="879.2" cy="292.2" r="3.9"/><circle cx="1010.9" cy="436.8" r="3.9"/><circle cx="975.2" cy="324.5" r="3.9"/><circle cx="857.4" cy="212.7" r="3.9"/><circle cx="818.1" cy="366.8" r="3.9"/><circle cx="956.5" cy="285.2" r="3.9"/><circle cx="1055.5" cy="256.8" r="3.9"/><circle cx="843.1" cy="376.0" r="3.9"/><circle cx="1117.9" cy="360.4" r="3.9"/><circle cx="936.7" cy="375.4" r="3.9"/><circle cx="1129.5" cy="356.0" r="3.9"/><circle cx="1073.0" cy="378.9" r="3.9"/><circle cx="1012.9" cy="453.9" r="3.9"/><circle cx="1134.1" cy="177.5" r="3.9"/><circle cx="1033.3" cy="277.0" r="3.9"/><circle cx="853.1" cy="395.9" r="3.9"/><circle cx="1050.4" cy="277.6" r="3.9"/><circle cx="918.2" cy="290.2" r="3.9"/><circle cx="947.6" cy="466.6" r="3.9"/><circle cx="814.1" cy="363.1" r="3.9"/><circle cx="912.3" cy="290.6" r="3.9"/><circle cx="1103.8" cy="348.9" r="3.9"/><circle cx="859.5" cy="407.9" r="3.9"/><circle cx="833.0" cy="410.1" r="3.9"/><circle cx="956.6" cy="364.3" r="3.9"/><circle cx="890.7" cy="318.0" r="3.9"/><circle cx="874.1" cy="314.6" r="3.9"/><circle cx="1038.9" cy="219.2" r="3.9"/><circle cx="1006.2" cy="255.9" r="3.9"/><circle cx="910.4" cy="402.3" r="3.9"/><circle cx="1089.7" cy="230.5" r="3.9"/><circle cx="891.8" cy="169.6" r="3.9"/><circle cx="1100.5" cy="211.7" r="3.9"/><circle cx="959.0" cy="171.9" r="3.9"/><circle cx="919.0" cy="167.4" r="3.9"/><circle cx="1001.9" cy="231.7" r="3.9"/><circle cx="870.0" cy="394.7" r="3.9"/><circle cx="1108.0" cy="275.4" r="3.9"/><circle cx="1060.3" cy="374.4" r="3.9"/><circle cx="896.9" cy="178.9" r="3.9"/><circle cx="872.9" cy="234.9" r="3.9"/><circle cx="1108.3" cy="186.0" r="3.9"/><circle cx="1050.6" cy="285.7" r="3.9"/><circle cx="965.1" cy="253.0" r="3.9"/><circle cx="1053.1" cy="159.6" r="3.9"/><circle cx="1073.3" cy="305.2" r="3.9"/><circle cx="1060.7" cy="176.7" r="3.9"/><circle cx="840.5" cy="174.1" r="3.9"/><circle cx="1086.1" cy="232.5" r="3.9"/><circle cx="1053.7" cy="229.4" r="3.9"/><circle cx="1137.3" cy="440.0" r="3.9"/><circle cx="858.1" cy="195.4" r="3.9"/><circle cx="988.4" cy="423.9" r="3.9"/><circle cx="959.4" cy="464.3" r="3.9"/><circle cx="1068.8" cy="341.6" r="3.9"/><circle cx="972.9" cy="202.8" r="3.9"/><circle cx="1129.9" cy="311.9" r="3.9"/><circle cx="1010.4" cy="299.7" r="3.9"/><circle cx="1012.3" cy="343.3" r="3.9"/><circle cx="1121.4" cy="439.8" r="3.9"/><circle cx="1050.2" cy="380.2" r="3.9"/><circle cx="956.2" cy="219.7" r="3.9"/><circle cx="1086.0" cy="421.1" r="3.9"/><circle cx="1018.2" cy="376.8" r="3.9"/><circle cx="999.8" cy="182.9" r="3.9"/><circle cx="1072.7" cy="402.8" r="3.9"/><circle cx="866.6" cy="269.3" r="3.9"/><circle cx="1033.4" cy="324.7" r="3.9"/><circle cx="1107.5" cy="350.4" r="3.9"/><circle cx="1087.3" cy="353.2" r="3.9"/><circle cx="1037.8" cy="222.5" r="3.9"/><circle cx="983.6" cy="332.7" r="3.9"/><circle cx="1064.4" cy="229.1" r="3.9"/><circle cx="806.6" cy="319.0" r="3.9"/><circle cx="948.5" cy="227.8" r="3.9"/><circle cx="934.0" cy="209.3" r="3.9"/><circle cx="892.6" cy="169.2" r="3.9"/><circle cx="1117.2" cy="274.0" r="3.9"/><circle cx="931.6" cy="305.0" r="3.9"/><circle cx="879.5" cy="377.4" r="3.9"/><circle cx="831.2" cy="269.4" r="3.9"/><circle cx="886.0" cy="166.9" r="3.9"/><circle cx="1106.2" cy="247.4" r="3.9"/><circle cx="839.0" cy="295.7" r="3.9"/><circle cx="951.7" cy="343.4" r="3.9"/><circle cx="1035.5" cy="305.5" r="3.9"/><circle cx="962.8" cy="193.6" r="3.9"/><circle cx="868.2" cy="200.4" r="3.9"/><circle cx="963.9" cy="255.6" r="3.9"/><circle cx="1039.3" cy="303.5" r="3.9"/><circle cx="992.2" cy="222.8" r="3.9"/><circle cx="929.6" cy="375.4" r="3.9"/><circle cx="1015.4" cy="194.7" r="3.9"/><circle cx="810.5" cy="288.4" r="3.9"/><circle cx="1084.6" cy="424.6" r="3.9"/><circle cx="1077.0" cy="192.3" r="3.9"/><circle cx="843.8" cy="208.6" r="3.9"/><circle cx="991.9" cy="313.1" r="3.9"/><circle cx="966.2" cy="408.2" r="3.9"/><circle cx="1104.3" cy="242.5" r="3.9"/><circle cx="1014.6" cy="295.4" r="3.9"/><circle cx="1093.3" cy="385.1" r="3.9"/><circle cx="893.1" cy="382.8" r="3.9"/><circle cx="949.1" cy="313.5" r="3.9"/><circle cx="1092.5" cy="293.2" r="3.9"/><circle cx="1096.9" cy="309.3" r="3.9"/><circle cx="945.3" cy="209.4" r="3.9"/><circle cx="792.0" cy="280.7" r="3.9"/><circle cx="856.4" cy="400.3" r="3.9"/><circle cx="1128.7" cy="194.0" r="3.9"/><circle cx="1006.8" cy="399.3" r="3.9"/><circle cx="834.4" cy="261.9" r="3.9"/><circle cx="1097.8" cy="421.0" r="3.9"/><circle cx="962.4" cy="420.9" r="3.9"/><circle cx="919.9" cy="192.0" r="3.9"/><circle cx="877.0" cy="219.0" r="3.9"/><circle cx="1034.7" cy="354.5" r="3.9"/><circle cx="995.8" cy="296.6" r="3.9"/><circle cx="815.4" cy="334.1" r="3.9"/><circle cx="893.2" cy="179.0" r="3.9"/><circle cx="925.0" cy="416.3" r="3.9"/><circle cx="865.5" cy="218.7" r="3.9"/><circle cx="862.0" cy="245.6" r="3.9"/><circle cx="1121.3" cy="227.1" r="3.9"/><circle cx="1133.7" cy="327.4" r="3.9"/><circle cx="908.6" cy="374.9" r="3.9"/><circle cx="872.1" cy="265.9" r="3.9"/><circle cx="921.4" cy="417.7" r="3.9"/><circle cx="946.5" cy="184.6" r="3.9"/><circle cx="926.8" cy="261.8" r="3.9"/><circle cx="1016.8" cy="387.0" r="3.9"/><circle cx="898.1" cy="439.5" r="3.9"/><circle cx="922.9" cy="171.2" r="3.9"/><circle cx="994.8" cy="449.8" r="3.9"/><circle cx="1118.1" cy="172.2" r="3.9"/><circle cx="880.6" cy="205.2" r="3.9"/><circle cx="1070.3" cy="150.3" r="3.9"/><circle cx="1121.7" cy="435.6" r="3.9"/><circle cx="816.7" cy="379.6" r="3.9"/><circle cx="1070.1" cy="231.4" r="3.9"/><circle cx="873.9" cy="387.8" r="3.9"/><circle cx="855.7" cy="299.4" r="3.9"/><circle cx="822.3" cy="319.0" r="3.9"/><circle cx="1040.0" cy="245.6" r="3.9"/><circle cx="839.3" cy="310.4" r="3.9"/><circle cx="1074.3" cy="192.8" r="3.9"/><circle cx="976.5" cy="206.0" r="3.9"/><circle cx="1117.3" cy="235.2" r="3.9"/><circle cx="919.6" cy="423.6" r="3.9"/><circle cx="1121.0" cy="318.7" r="3.9"/><circle cx="960.5" cy="145.8" r="3.9"/><circle cx="1092.2" cy="354.7" r="3.9"/><circle cx="876.6" cy="324.6" r="3.9"/><circle cx="1134.5" cy="306.9" r="3.9"/><circle cx="1010.5" cy="346.0" r="3.9"/><circle cx="886.4" cy="223.6" r="3.9"/><circle cx="841.3" cy="373.1" r="3.9"/><circle cx="840.1" cy="169.2" r="3.9"/><circle cx="990.4" cy="449.6" r="3.9"/><circle cx="1099.4" cy="326.2" r="3.9"/><circle cx="892.1" cy="255.6" r="3.9"/><circle cx="863.4" cy="346.3" r="3.9"/><circle cx="780.8" cy="326.0" r="3.9"/><circle cx="1115.6" cy="273.6" r="3.9"/><circle cx="1032.3" cy="412.7" r="3.9"/><circle cx="995.0" cy="418.1" r="3.9"/><circle cx="833.3" cy="392.4" r="3.9"/><circle cx="851.1" cy="319.1" r="3.9"/><circle cx="884.3" cy="424.3" r="3.9"/><circle cx="1071.8" cy="271.3" r="3.9"/><circle cx="861.7" cy="378.9" r="3.9"/><circle cx="942.7" cy="213.6" r="3.9"/><circle cx="1016.6" cy="237.2" r="3.9"/><circle cx="934.8" cy="377.5" r="3.9"/><circle cx="984.5" cy="191.9" r="3.9"/><circle cx="1131.3" cy="329.4" r="3.9"/><circle cx="918.9" cy="390.9" r="3.9"/><circle cx="1043.9" cy="282.3" r="3.9"/><circle cx="1049.2" cy="189.3" r="3.9"/><circle cx="856.2" cy="198.1" r="3.9"/><circle cx="884.8" cy="386.6" r="3.9"/><circle cx="1129.8" cy="291.4" r="3.9"/><circle cx="802.5" cy="339.3" r="3.9"/><circle cx="875.6" cy="158.0" r="3.9"/><circle cx="1067.7" cy="395.5" r="3.9"/><circle cx="875.5" cy="155.6" r="3.9"/><circle cx="1087.9" cy="283.2" r="3.9"/><circle cx="1060.4" cy="422.0" r="3.9"/><circle cx="1052.0" cy="452.8" r="3.9"/><circle cx="968.8" cy="264.9" r="3.9"/><circle cx="962.6" cy="442.0" r="3.9"/><circle cx="961.7" cy="171.9" r="3.9"/><circle cx="813.9" cy="243.9" r="3.9"/><circle cx="960.7" cy="353.6" r="3.9"/><circle cx="899.4" cy="393.4" r="3.9"/><circle cx="962.8" cy="407.5" r="3.9"/><circle cx="886.0" cy="344.1" r="3.9"/><circle cx="1109.0" cy="326.0" r="3.9"/><circle cx="1077.3" cy="282.6" r="3.9"/><circle cx="900.0" cy="395.0" r="3.9"/><circle cx="871.3" cy="405.5" r="3.9"/><circle cx="1035.2" cy="260.6" r="3.9"/><circle cx="1027.3" cy="330.3" r="3.9"/><circle cx="981.1" cy="316.0" r="3.9"/><circle cx="1071.0" cy="163.0" r="3.9"/><circle cx="1011.8" cy="141.4" r="3.9"/><circle cx="837.1" cy="290.8" r="3.9"/><circle cx="952.8" cy="343.8" r="3.9"/><circle cx="819.8" cy="202.6" r="3.9"/><circle cx="991.6" cy="198.7" r="3.9"/><circle cx="1029.0" cy="373.1" r="3.9"/><circle cx="819.8" cy="349.0" r="3.9"/><circle cx="1002.2" cy="387.5" r="3.9"/><circle cx="921.3" cy="329.1" r="3.9"/><circle cx="1112.0" cy="203.9" r="3.9"/><circle cx="961.1" cy="282.7" r="3.9"/><circle cx="973.8" cy="263.1" r="3.9"/><circle cx="1093.8" cy="216.2" r="3.9"/><circle cx="1107.2" cy="424.5" r="3.9"/><circle cx="943.8" cy="305.5" r="3.9"/><circle cx="992.4" cy="339.0" r="3.9"/><circle cx="900.2" cy="231.5" r="3.9"/><circle cx="920.0" cy="260.5" r="3.9"/><circle cx="1039.8" cy="461.5" r="3.9"/><circle cx="862.5" cy="341.9" r="3.9"/><circle cx="1075.5" cy="174.8" r="3.9"/><circle cx="1005.6" cy="236.8" r="3.9"/><circle cx="925.8" cy="376.2" r="3.9"/><circle cx="1024.1" cy="293.6" r="3.9"/><circle cx="962.8" cy="302.0" r="3.9"/><circle cx="1120.1" cy="387.7" r="3.9"/><circle cx="821.5" cy="391.6" r="3.9"/><circle cx="1091.4" cy="343.6" r="3.9"/><circle cx="1138.0" cy="433.5" r="3.9"/><circle cx="1011.2" cy="319.1" r="3.9"/><circle cx="1035.5" cy="272.3" r="3.9"/><circle cx="1098.4" cy="262.1" r="3.9"/><circle cx="1081.6" cy="420.3" r="3.9"/><circle cx="1003.0" cy="290.8" r="3.9"/><circle cx="858.2" cy="403.4" r="3.9"/><circle cx="913.2" cy="340.0" r="3.9"/><circle cx="974.9" cy="219.7" r="3.9"/><circle cx="1106.0" cy="282.4" r="3.9"/><circle cx="1001.3" cy="339.5" r="3.9"/><circle cx="878.8" cy="307.8" r="3.9"/><circle cx="835.7" cy="259.6" r="3.9"/><circle cx="996.3" cy="372.1" r="3.9"/><circle cx="1077.8" cy="150.3" r="3.9"/><circle cx="1009.0" cy="230.5" r="3.9"/><circle cx="863.0" cy="346.9" r="3.9"/><circle cx="1085.4" cy="186.0" r="3.9"/><circle cx="1063.0" cy="274.9" r="3.9"/><circle cx="1071.9" cy="431.7" r="3.9"/><circle cx="991.8" cy="326.4" r="3.9"/><circle cx="972.0" cy="373.6" r="3.9"/><circle cx="1116.3" cy="392.0" r="3.9"/><circle cx="1094.4" cy="333.1" r="3.9"/><circle cx="856.1" cy="162.5" r="3.9"/><circle cx="932.1" cy="167.9" r="3.9"/><circle cx="888.8" cy="173.2" r="3.9"/><circle cx="929.6" cy="344.2" r="3.9"/><circle cx="1130.6" cy="434.4" r="3.9"/><circle cx="1110.4" cy="242.9" r="3.9"/><circle cx="854.6" cy="245.6" r="3.9"/><circle cx="988.7" cy="201.2" r="3.9"/><circle cx="1110.3" cy="198.6" r="3.9"/><circle cx="1094.9" cy="297.5" r="3.9"/><circle cx="1000.6" cy="362.1" r="3.9"/><circle cx="1044.7" cy="259.5" r="3.9"/><circle cx="902.5" cy="395.4" r="3.9"/><circle cx="965.6" cy="359.2" r="3.9"/><circle cx="1060.3" cy="327.5" r="3.9"/><circle cx="919.3" cy="338.6" r="3.9"/><circle cx="1111.5" cy="386.7" r="3.9"/><circle cx="1015.5" cy="201.1" r="3.9"/><circle cx="974.4" cy="177.4" r="3.9"/><circle cx="839.6" cy="365.8" r="3.9"/><circle cx="1116.1" cy="441.7" r="3.9"/><circle cx="1017.0" cy="180.8" r="3.9"/><circle cx="891.1" cy="351.7" r="3.9"/><circle cx="886.5" cy="310.6" r="3.9"/><circle cx="925.3" cy="260.9" r="3.9"/><circle cx="1018.4" cy="250.9" r="3.9"/><circle cx="907.3" cy="362.8" r="3.9"/><circle cx="926.3" cy="166.2" r="3.9"/><circle cx="906.5" cy="310.6" r="3.9"/><circle cx="834.7" cy="187.0" r="3.9"/><circle cx="1127.8" cy="333.5" r="3.9"/><circle cx="984.7" cy="225.5" r="3.9"/><circle cx="1054.3" cy="276.5" r="3.9"/><circle cx="939.8" cy="309.0" r="3.9"/><circle cx="974.9" cy="462.9" r="3.9"/><circle cx="852.4" cy="174.7" r="3.9"/><circle cx="801.5" cy="263.4" r="3.9"/><circle cx="1116.5" cy="416.7" r="3.9"/><circle cx="1089.3" cy="224.7" r="3.9"/><circle cx="973.8" cy="207.7" r="3.9"/><circle cx="865.3" cy="407.8" r="3.9"/><circle cx="1072.6" cy="191.9" r="3.9"/><circle cx="935.6" cy="438.0" r="3.9"/><circle cx="861.0" cy="304.5" r="3.9"/><circle cx="1025.0" cy="227.3" r="3.9"/><circle cx="814.4" cy="238.3" r="3.9"/><circle cx="981.6" cy="300.7" r="3.9"/><circle cx="1091.9" cy="376.8" r="3.9"/><circle cx="964.6" cy="350.9" r="3.9"/><circle cx="1120.7" cy="292.9" r="3.9"/><circle cx="829.5" cy="380.4" r="3.9"/><circle cx="1009.7" cy="379.3" r="3.9"/><circle cx="818.8" cy="210.5" r="3.9"/><circle cx="1100.2" cy="408.5" r="3.9"/><circle cx="838.1" cy="227.7" r="3.9"/><circle cx="875.1" cy="265.1" r="3.9"/><circle cx="995.9" cy="360.0" r="3.9"/><circle cx="895.5" cy="373.0" r="3.9"/><circle cx="1133.7" cy="281.2" r="3.9"/><circle cx="967.0" cy="162.4" r="3.9"/><circle cx="1045.0" cy="293.9" r="3.9"/><circle cx="1123.4" cy="345.8" r="3.9"/><circle cx="1113.3" cy="385.6" r="3.9"/><circle cx="1016.9" cy="402.2" r="3.9"/><circle cx="874.5" cy="187.6" r="3.9"/><circle cx="1088.0" cy="316.0" r="3.9"/><circle cx="805.2" cy="307.5" r="3.9"/><circle cx="1020.6" cy="159.6" r="3.9"/><circle cx="1059.0" cy="321.9" r="3.9"/><circle cx="975.5" cy="261.2" r="3.9"/><circle cx="985.1" cy="202.3" r="3.9"/><circle cx="927.8" cy="373.0" r="3.9"/><circle cx="900.7" cy="206.3" r="3.9"/><circle cx="786.1" cy="332.2" r="3.9"/><circle cx="1074.6" cy="349.9" r="3.9"/><circle cx="1040.1" cy="276.2" r="3.9"/><circle cx="855.0" cy="164.5" r="3.9"/><circle cx="973.5" cy="192.0" r="3.9"/><circle cx="947.8" cy="373.2" r="3.9"/><circle cx="1079.6" cy="367.7" r="3.9"/><circle cx="989.6" cy="361.8" r="3.9"/><circle cx="908.7" cy="310.0" r="3.9"/><circle cx="925.6" cy="399.5" r="3.9"/><circle cx="1098.4" cy="441.9" r="3.9"/><circle cx="964.8" cy="344.7" r="3.9"/><circle cx="1048.2" cy="421.8" r="3.9"/><circle cx="1003.9" cy="159.2" r="3.9"/><circle cx="931.4" cy="287.8" r="3.9"/><circle cx="924.9" cy="310.7" r="3.9"/><circle cx="1041.2" cy="344.9" r="3.9"/><circle cx="1010.1" cy="258.5" r="3.9"/><circle cx="845.8" cy="293.5" r="3.9"/><circle cx="1001.2" cy="346.4" r="3.9"/><circle cx="1095.3" cy="397.5" r="3.9"/><circle cx="980.5" cy="447.7" r="3.9"/><circle cx="1002.3" cy="459.3" r="3.9"/><circle cx="1103.5" cy="395.1" r="3.9"/><circle cx="1094.8" cy="153.8" r="3.9"/><circle cx="1098.4" cy="174.9" r="3.9"/><circle cx="929.0" cy="442.8" r="3.9"/><circle cx="1117.0" cy="392.8" r="3.9"/><circle cx="1036.3" cy="220.8" r="3.9"/><circle cx="947.0" cy="378.6" r="3.9"/><circle cx="1100.3" cy="448.9" r="3.9"/><circle cx="859.9" cy="400.1" r="3.9"/><circle cx="1124.7" cy="186.1" r="3.9"/><circle cx="971.2" cy="150.9" r="3.9"/><circle cx="1100.2" cy="346.3" r="3.9"/><circle cx="1066.2" cy="221.6" r="3.9"/><circle cx="1089.4" cy="236.5" r="3.9"/><circle cx="986.2" cy="255.3" r="3.9"/><circle cx="943.4" cy="317.1" r="3.9"/><circle cx="960.6" cy="464.4" r="3.9"/><circle cx="927.5" cy="289.1" r="3.9"/><circle cx="897.0" cy="347.9" r="3.9"/><circle cx="820.0" cy="283.7" r="3.9"/><circle cx="907.1" cy="304.4" r="3.9"/><circle cx="942.0" cy="457.1" r="3.9"/><circle cx="1031.7" cy="359.8" r="3.9"/><circle cx="1020.2" cy="368.4" r="3.9"/><circle cx="1003.8" cy="303.1" r="3.9"/><circle cx="897.8" cy="210.3" r="3.9"/><circle cx="844.8" cy="252.0" r="3.9"/><circle cx="958.6" cy="157.7" r="3.9"/><circle cx="1066.5" cy="173.8" r="3.9"/><circle cx="947.1" cy="151.0" r="3.9"/><circle cx="966.3" cy="455.3" r="3.9"/><circle cx="919.7" cy="306.8" r="3.9"/><circle cx="1093.6" cy="174.1" r="3.9"/><circle cx="836.7" cy="387.4" r="3.9"/><circle cx="1100.6" cy="236.2" r="3.9"/><circle cx="1013.0" cy="151.9" r="3.9"/><circle cx="883.4" cy="361.9" r="3.9"/><circle cx="1035.6" cy="219.9" r="3.9"/><circle cx="1048.9" cy="184.3" r="3.9"/><circle cx="1045.7" cy="369.6" r="3.9"/><circle cx="899.7" cy="438.9" r="3.9"/><circle cx="891.2" cy="181.6" r="3.9"/><circle cx="1011.9" cy="440.6" r="3.9"/><circle cx="833.4" cy="253.5" r="3.9"/><circle cx="1080.7" cy="404.1" r="3.9"/><circle cx="821.4" cy="205.4" r="3.9"/><circle cx="896.1" cy="336.0" r="3.9"/><circle cx="1037.9" cy="249.9" r="3.9"/><circle cx="844.4" cy="398.3" r="3.9"/><circle cx="997.4" cy="392.0" r="3.9"/><circle cx="1067.7" cy="445.6" r="3.9"/><circle cx="1124.3" cy="377.8" r="3.9"/><circle cx="1047.2" cy="174.7" r="3.9"/><circle cx="1046.5" cy="201.9" r="3.9"/><circle cx="1032.0" cy="346.7" r="3.9"/><circle cx="934.7" cy="212.0" r="3.9"/><circle cx="918.9" cy="361.8" r="3.9"/><circle cx="877.2" cy="157.5" r="3.9"/><circle cx="884.2" cy="317.1" r="3.9"/><circle cx="909.7" cy="440.0" r="3.9"/><circle cx="889.5" cy="182.3" r="3.9"/><circle cx="996.8" cy="462.1" r="3.9"/><circle cx="1065.9" cy="183.4" r="3.9"/><circle cx="976.2" cy="447.0" r="3.9"/><circle cx="1058.5" cy="149.5" r="3.9"/><circle cx="844.2" cy="381.5" r="3.9"/><circle cx="852.3" cy="304.7" r="3.9"/><circle cx="933.0" cy="203.2" r="3.9"/><circle cx="1004.2" cy="387.5" r="3.9"/><circle cx="931.0" cy="226.9" r="3.9"/><circle cx="1056.4" cy="209.9" r="3.9"/><circle cx="1041.3" cy="219.8" r="3.9"/><circle cx="981.9" cy="157.9" r="3.9"/><circle cx="1132.9" cy="421.0" r="3.9"/><circle cx="1073.9" cy="434.9" r="3.9"/><circle cx="1117.4" cy="226.5" r="3.9"/><circle cx="1031.9" cy="164.7" r="3.9"/><circle cx="1082.2" cy="435.9" r="3.9"/><circle cx="871.2" cy="338.7" r="3.9"/><circle cx="1110.6" cy="337.1" r="3.9"/><circle cx="1047.1" cy="401.7" r="3.9"/><circle cx="908.2" cy="361.5" r="3.9"/><circle cx="818.6" cy="306.9" r="3.9"/><circle cx="1065.7" cy="334.8" r="3.9"/><circle cx="1041.2" cy="403.9" r="3.9"/><circle cx="1053.4" cy="293.3" r="3.9"/><circle cx="1126.8" cy="344.4" r="3.9"/><circle cx="834.8" cy="387.1" r="3.9"/><circle cx="1059.3" cy="285.2" r="3.9"/><circle cx="911.9" cy="184.3" r="3.9"/><circle cx="1031.4" cy="345.4" r="3.9"/><circle cx="874.9" cy="340.3" r="3.9"/><circle cx="1011.9" cy="187.3" r="3.9"/><circle cx="884.3" cy="236.0" r="3.9"/><circle cx="910.9" cy="198.6" r="3.9"/><circle cx="992.2" cy="448.1" r="3.9"/><circle cx="790.1" cy="337.1" r="3.9"/><circle cx="994.9" cy="183.5" r="3.9"/><circle cx="858.0" cy="304.4" r="3.9"/><circle cx="995.6" cy="393.1" r="3.9"/><circle cx="1087.6" cy="299.5" r="3.9"/><circle cx="1105.3" cy="214.8" r="3.9"/><circle cx="1079.8" cy="376.6" r="3.9"/><circle cx="1005.4" cy="265.6" r="3.9"/><circle cx="971.0" cy="437.7" r="3.9"/><circle cx="1005.5" cy="259.4" r="3.9"/><circle cx="1023.4" cy="307.7" r="3.9"/><circle cx="886.5" cy="272.8" r="3.9"/><circle cx="1095.9" cy="160.7" r="3.9"/><circle cx="956.0" cy="197.4" r="3.9"/><circle cx="965.5" cy="139.4" r="3.9"/><circle cx="935.3" cy="357.3" r="3.9"/><circle cx="922.7" cy="428.5" r="3.9"/><circle cx="860.1" cy="318.5" r="3.9"/><circle cx="1012.3" cy="262.8" r="3.9"/><circle cx="962.5" cy="184.1" r="3.9"/><circle cx="916.3" cy="322.3" r="3.9"/><circle cx="920.5" cy="312.6" r="3.9"/><circle cx="958.9" cy="296.2" r="3.9"/><circle cx="1052.0" cy="305.9" r="3.9"/><circle cx="1040.6" cy="419.3" r="3.9"/><circle cx="939.8" cy="435.0" r="3.9"/><circle cx="1030.7" cy="364.6" r="3.9"/><circle cx="938.0" cy="255.9" r="3.9"/><circle cx="1044.1" cy="266.2" r="3.9"/><circle cx="928.8" cy="382.4" r="3.9"/><circle cx="1117.6" cy="316.4" r="3.9"/><circle cx="1037.6" cy="350.1" r="3.9"/><circle cx="978.9" cy="287.0" r="3.9"/><circle cx="955.5" cy="305.3" r="3.9"/><circle cx="885.1" cy="179.5" r="3.9"/><circle cx="1060.8" cy="224.6" r="3.9"/><circle cx="1073.8" cy="242.3" r="3.9"/><circle cx="1132.8" cy="341.1" r="3.9"/><circle cx="993.9" cy="432.5" r="3.9"/><circle cx="896.7" cy="180.7" r="3.9"/><circle cx="796.8" cy="340.6" r="3.9"/><circle cx="1089.2" cy="211.9" r="3.9"/><circle cx="992.9" cy="156.5" r="3.9"/><circle cx="1028.1" cy="209.3" r="3.9"/><circle cx="879.8" cy="414.5" r="3.9"/><circle cx="918.0" cy="387.7" r="3.9"/><circle cx="1040.1" cy="443.3" r="3.9"/><circle cx="1067.5" cy="337.2" r="3.9"/><circle cx="981.4" cy="337.3" r="3.9"/><circle cx="1094.0" cy="270.1" r="3.9"/><circle cx="994.3" cy="218.8" r="3.9"/><circle cx="844.4" cy="404.7" r="3.9"/><circle cx="854.6" cy="174.3" r="3.9"/><circle cx="1031.0" cy="277.0" r="3.9"/><circle cx="1001.0" cy="146.4" r="3.9"/><circle cx="1093.4" cy="197.3" r="3.9"/><circle cx="827.4" cy="281.2" r="3.9"/><circle cx="1055.1" cy="381.4" r="3.9"/><circle cx="944.1" cy="288.6" r="3.9"/><circle cx="839.1" cy="183.3" r="3.9"/><circle cx="1130.5" cy="182.1" r="3.9"/><circle cx="896.2" cy="394.7" r="3.9"/><circle cx="948.8" cy="276.0" r="3.9"/><circle cx="968.3" cy="215.0" r="3.9"/><circle cx="1012.6" cy="224.9" r="3.9"/><circle cx="993.2" cy="350.5" r="3.9"/><circle cx="1052.0" cy="201.7" r="3.9"/><circle cx="1056.9" cy="394.5" r="3.9"/><circle cx="1050.8" cy="450.1" r="3.9"/><circle cx="819.5" cy="227.3" r="3.9"/><circle cx="986.6" cy="453.8" r="3.9"/><circle cx="1116.9" cy="198.2" r="3.9"/><circle cx="847.4" cy="214.4" r="3.9"/><circle cx="1040.6" cy="147.9" r="3.9"/><circle cx="801.4" cy="304.7" r="3.9"/><circle cx="927.3" cy="197.5" r="3.9"/><circle cx="1126.9" cy="293.5" r="3.9"/><circle cx="849.9" cy="336.8" r="3.9"/><circle cx="879.1" cy="217.3" r="3.9"/><circle cx="1059.8" cy="254.3" r="3.9"/><circle cx="1021.4" cy="449.8" r="3.9"/><circle cx="978.5" cy="195.9" r="3.9"/><circle cx="900.6" cy="428.0" r="3.9"/><circle cx="942.9" cy="250.0" r="3.9"/><circle cx="986.4" cy="288.1" r="3.9"/><circle cx="1035.3" cy="252.8" r="3.9"/><circle cx="945.9" cy="465.6" r="3.9"/><circle cx="1081.5" cy="225.5" r="3.9"/><circle cx="887.6" cy="218.8" r="3.9"/><circle cx="977.2" cy="314.2" r="3.9"/><circle cx="829.4" cy="217.5" r="3.9"/><circle cx="946.9" cy="163.2" r="3.9"/><circle cx="1056.9" cy="388.5" r="3.9"/><circle cx="1003.8" cy="336.3" r="3.9"/><circle cx="900.4" cy="345.7" r="3.9"/><circle cx="1010.9" cy="183.7" r="3.9"/><circle cx="995.4" cy="283.3" r="3.9"/><circle cx="909.9" cy="165.4" r="3.9"/><circle cx="858.9" cy="367.2" r="3.9"/><circle cx="858.9" cy="336.1" r="3.9"/><circle cx="997.1" cy="318.6" r="3.9"/><circle cx="865.9" cy="239.0" r="3.9"/><circle cx="927.0" cy="198.2" r="3.9"/><circle cx="1114.3" cy="442.7" r="3.9"/><circle cx="835.0" cy="206.7" r="3.9"/><circle cx="848.5" cy="343.4" r="3.9"/><circle cx="829.3" cy="312.0" r="3.9"/><circle cx="1049.3" cy="368.0" r="3.9"/><circle cx="1050.0" cy="283.6" r="3.9"/><circle cx="1050.9" cy="399.2" r="3.9"/><circle cx="930.0" cy="444.9" r="3.9"/><circle cx="952.8" cy="417.6" r="3.9"/><circle cx="897.9" cy="335.9" r="3.9"/><circle cx="836.2" cy="228.1" r="3.9"/><circle cx="1020.1" cy="294.4" r="3.9"/><circle cx="902.9" cy="255.2" r="3.9"/><circle cx="823.6" cy="295.1" r="3.9"/><circle cx="964.1" cy="301.1" r="3.9"/><circle cx="886.1" cy="409.0" r="3.9"/><circle cx="906.5" cy="274.3" r="3.9"/><circle cx="958.9" cy="402.3" r="3.9"/><circle cx="853.9" cy="303.3" r="3.9"/><circle cx="942.9" cy="351.2" r="3.9"/><circle cx="872.1" cy="212.2" r="3.9"/><circle cx="885.8" cy="231.1" r="3.9"/><circle cx="1007.4" cy="237.1" r="3.9"/><circle cx="1013.6" cy="338.7" r="3.9"/><circle cx="1078.9" cy="325.7" r="3.9"/><circle cx="901.6" cy="259.8" r="3.9"/><circle cx="1065.7" cy="389.2" r="3.9"/><circle cx="964.0" cy="229.2" r="3.9"/><circle cx="883.4" cy="409.8" r="3.9"/><circle cx="994.0" cy="381.2" r="3.9"/><circle cx="892.6" cy="372.8" r="3.9"/><circle cx="1038.6" cy="431.1" r="3.9"/><circle cx="997.5" cy="433.6" r="3.9"/><circle cx="1014.8" cy="299.3" r="3.9"/><circle cx="870.2" cy="325.2" r="3.9"/><circle cx="1040.8" cy="213.1" r="3.9"/><circle cx="844.3" cy="368.6" r="3.9"/><circle cx="1116.4" cy="273.8" r="3.9"/><circle cx="815.8" cy="264.4" r="3.9"/><circle cx="904.1" cy="336.7" r="3.9"/><circle cx="937.8" cy="452.7" r="3.9"/><circle cx="1056.3" cy="422.7" r="3.9"/><circle cx="1065.7" cy="296.1" r="3.9"/><circle cx="1027.7" cy="375.7" r="3.9"/><circle cx="930.2" cy="455.5" r="3.9"/><circle cx="942.0" cy="357.8" r="3.9"/><circle cx="853.4" cy="358.2" r="3.9"/><circle cx="1118.5" cy="386.2" r="3.9"/><circle cx="963.8" cy="338.0" r="3.9"/><circle cx="1023.2" cy="404.6" r="3.9"/><circle cx="1122.1" cy="370.0" r="3.9"/><circle cx="1073.3" cy="320.2" r="3.9"/><circle cx="829.6" cy="253.0" r="3.9"/><circle cx="1100.3" cy="396.7" r="3.9"/><circle cx="958.3" cy="220.6" r="3.9"/><circle cx="1001.9" cy="316.6" r="3.9"/><circle cx="812.8" cy="348.2" r="3.9"/><circle cx="862.0" cy="356.6" r="3.9"/><circle cx="1109.2" cy="204.8" r="3.9"/><circle cx="911.1" cy="230.3" r="3.9"/><circle cx="894.5" cy="267.0" r="3.9"/><circle cx="958.2" cy="270.8" r="3.9"/><circle cx="1047.4" cy="240.0" r="3.9"/><circle cx="840.8" cy="348.8" r="3.9"/><circle cx="1002.9" cy="133.7" r="3.9"/><circle cx="926.1" cy="187.5" r="3.9"/><circle cx="921.3" cy="424.5" r="3.9"/><circle cx="905.2" cy="163.9" r="3.9"/><circle cx="838.3" cy="361.7" r="3.9"/><circle cx="1134.1" cy="254.3" r="3.9"/><circle cx="927.7" cy="456.8" r="3.9"/><circle cx="1030.1" cy="445.6" r="3.9"/><circle cx="1046.6" cy="253.9" r="3.9"/><circle cx="936.0" cy="297.9" r="3.9"/><circle cx="1130.2" cy="390.3" r="3.9"/><circle cx="1003.8" cy="457.5" r="3.9"/><circle cx="975.3" cy="257.0" r="3.9"/><circle cx="1033.5" cy="279.4" r="3.9"/><circle cx="998.6" cy="327.7" r="3.9"/><circle cx="844.2" cy="221.5" r="3.9"/><circle cx="1136.5" cy="437.6" r="3.9"/><circle cx="1005.3" cy="150.8" r="3.9"/><circle cx="902.2" cy="235.0" r="3.9"/><circle cx="947.7" cy="421.0" r="3.9"/><circle cx="977.2" cy="168.2" r="3.9"/><circle cx="861.9" cy="288.8" r="3.9"/><circle cx="838.0" cy="314.3" r="3.9"/><circle cx="936.6" cy="149.9" r="3.9"/><circle cx="1117.5" cy="201.9" r="3.9"/><circle cx="942.0" cy="429.8" r="3.9"/><circle cx="848.5" cy="243.3" r="3.9"/><circle cx="812.3" cy="234.8" r="3.9"/><circle cx="1010.8" cy="314.5" r="3.9"/><circle cx="938.7" cy="423.4" r="3.9"/><circle cx="1002.4" cy="160.0" r="3.9"/><circle cx="1108.6" cy="374.2" r="3.9"/><circle cx="791.3" cy="283.5" r="3.9"/><circle cx="1009.0" cy="234.6" r="3.9"/><circle cx="1085.1" cy="416.6" r="3.9"/><circle cx="953.5" cy="166.2" r="3.9"/><circle cx="1059.1" cy="439.7" r="3.9"/><circle cx="1082.5" cy="193.9" r="3.9"/><circle cx="978.1" cy="377.7" r="3.9"/><circle cx="1006.0" cy="378.6" r="3.9"/><circle cx="991.5" cy="379.8" r="3.9"/><circle cx="980.1" cy="427.6" r="3.9"/><circle cx="951.5" cy="268.5" r="3.9"/><circle cx="963.1" cy="289.0" r="3.9"/><circle cx="851.3" cy="282.6" r="3.9"/><circle cx="970.5" cy="305.3" r="3.9"/><circle cx="1063.6" cy="253.7" r="3.9"/><circle cx="986.2" cy="262.9" r="3.9"/><circle cx="1005.2" cy="221.0" r="3.9"/><circle cx="949.9" cy="170.6" r="3.9"/><circle cx="959.4" cy="381.4" r="3.9"/><circle cx="1035.1" cy="238.1" r="3.9"/><circle cx="1078.0" cy="354.9" r="3.9"/><circle cx="1057.7" cy="306.9" r="3.9"/><circle cx="819.9" cy="317.1" r="3.9"/><circle cx="1126.0" cy="338.8" r="3.9"/><circle cx="956.0" cy="392.3" r="3.9"/><circle cx="973.5" cy="390.4" r="3.9"/><circle cx="1128.7" cy="269.2" r="3.9"/><circle cx="1136.8" cy="431.8" r="3.9"/><circle cx="1033.0" cy="452.4" r="3.9"/><circle cx="1007.2" cy="335.5" r="3.9"/><circle cx="1127.8" cy="158.2" r="3.9"/><circle cx="1059.1" cy="396.6" r="3.9"/><circle cx="1107.8" cy="193.7" r="3.9"/><circle cx="880.8" cy="341.7" r="3.9"/><circle cx="977.1" cy="221.6" r="3.9"/><circle cx="1080.9" cy="282.8" r="3.9"/><circle cx="976.4" cy="142.0" r="3.9"/><circle cx="895.4" cy="240.5" r="3.9"/><circle cx="1026.9" cy="410.3" r="3.9"/><circle cx="1104.6" cy="268.7" r="3.9"/><circle cx="1085.9" cy="233.3" r="3.9"/><circle cx="1122.7" cy="170.6" r="3.9"/><circle cx="1089.6" cy="172.5" r="3.9"/><circle cx="1034.8" cy="341.3" r="3.9"/><circle cx="810.3" cy="325.1" r="3.9"/><circle cx="1084.6" cy="426.9" r="3.9"/><circle cx="1086.7" cy="305.8" r="3.9"/><circle cx="1001.9" cy="416.0" r="3.9"/><circle cx="869.6" cy="420.4" r="3.9"/><circle cx="776.2" cy="305.7" r="3.9"/><circle cx="1020.6" cy="342.9" r="3.9"/><circle cx="958.4" cy="355.0" r="3.9"/><circle cx="1007.8" cy="363.5" r="3.9"/><circle cx="849.6" cy="196.7" r="3.9"/><circle cx="1057.0" cy="147.3" r="3.9"/><circle cx="864.1" cy="263.9" r="3.9"/><circle cx="995.6" cy="391.3" r="3.9"/><circle cx="863.5" cy="285.4" r="3.9"/><circle cx="834.5" cy="323.6" r="3.9"/><circle cx="848.6" cy="182.2" r="3.9"/><circle cx="1015.3" cy="166.3" r="3.9"/><circle cx="845.8" cy="284.1" r="3.9"/><circle cx="997.4" cy="415.7" r="3.9"/><circle cx="1098.5" cy="337.9" r="3.9"/><circle cx="1048.5" cy="169.2" r="3.9"/><circle cx="802.0" cy="338.6" r="3.9"/><circle cx="1072.7" cy="430.8" r="3.9"/><circle cx="998.5" cy="433.6" r="3.9"/><circle cx="890.7" cy="356.2" r="3.9"/><circle cx="1056.7" cy="269.0" r="3.9"/><circle cx="979.7" cy="259.6" r="3.9"/><circle cx="1089.5" cy="225.4" r="3.9"/><circle cx="1001.8" cy="207.5" r="3.9"/><circle cx="928.3" cy="333.8" r="3.9"/><circle cx="979.9" cy="301.8" r="3.9"/><circle cx="1067.9" cy="353.4" r="3.9"/><circle cx="1115.2" cy="436.8" r="3.9"/><circle cx="1062.1" cy="241.6" r="3.9"/><circle cx="909.2" cy="273.1" r="3.9"/><circle cx="837.9" cy="369.0" r="3.9"/><circle cx="950.0" cy="229.0" r="3.9"/><circle cx="1052.5" cy="329.5" r="3.9"/><circle cx="1079.1" cy="320.4" r="3.9"/><circle cx="930.1" cy="432.9" r="3.9"/><circle cx="984.5" cy="342.8" r="3.9"/><circle cx="894.5" cy="333.5" r="3.9"/><circle cx="995.9" cy="324.7" r="3.9"/><circle cx="903.7" cy="362.2" r="3.9"/><circle cx="947.1" cy="393.4" r="3.9"/><circle cx="1006.6" cy="383.2" r="3.9"/><circle cx="802.6" cy="308.9" r="3.9"/><circle cx="1013.0" cy="349.2" r="3.9"/><circle cx="818.2" cy="245.7" r="3.9"/><circle cx="956.0" cy="333.8" r="3.9"/><circle cx="1102.1" cy="192.6" r="3.9"/><circle cx="930.4" cy="185.4" r="3.9"/><circle cx="996.2" cy="255.5" r="3.9"/><circle cx="1021.1" cy="214.4" r="3.9"/><circle cx="837.1" cy="184.5" r="3.9"/><circle cx="1082.4" cy="436.1" r="3.9"/><circle cx="850.0" cy="266.7" r="3.9"/><circle cx="970.8" cy="456.3" r="3.9"/><circle cx="1060.7" cy="390.9" r="3.9"/><circle cx="1060.4" cy="331.3" r="3.9"/><circle cx="1004.3" cy="143.7" r="3.9"/><circle cx="1058.6" cy="180.1" r="3.9"/><circle cx="956.3" cy="458.1" r="3.9"/><circle cx="829.0" cy="407.5" r="3.9"/><circle cx="1095.0" cy="305.2" r="3.9"/><circle cx="1092.3" cy="256.5" r="3.9"/><circle cx="991.6" cy="162.5" r="3.9"/><circle cx="779.6" cy="295.5" r="3.9"/><circle cx="886.0" cy="366.4" r="3.9"/><circle cx="995.2" cy="363.4" r="3.9"/><circle cx="894.7" cy="160.7" r="3.9"/><circle cx="1107.5" cy="260.0" r="3.9"/><circle cx="828.1" cy="210.8" r="3.9"/><circle cx="932.3" cy="181.9" r="3.9"/><circle cx="1003.6" cy="246.0" r="3.9"/><circle cx="1031.8" cy="279.6" r="3.9"/><circle cx="1064.9" cy="387.8" r="3.9"/><circle cx="1000.2" cy="398.4" r="3.9"/><circle cx="994.2" cy="389.2" r="3.9"/><circle cx="1089.6" cy="206.5" r="3.9"/><circle cx="1112.5" cy="158.2" r="3.9"/><circle cx="795.0" cy="311.7" r="3.9"/><circle cx="935.9" cy="250.7" r="3.9"/><circle cx="885.7" cy="164.5" r="3.9"/><circle cx="1120.7" cy="260.8" r="3.9"/><circle cx="974.0" cy="351.4" r="3.9"/><circle cx="989.1" cy="156.3" r="3.9"/><circle cx="1078.4" cy="420.0" r="3.9"/><circle cx="892.5" cy="174.8" r="3.9"/><circle cx="1010.0" cy="138.7" r="3.9"/><circle cx="1103.3" cy="338.7" r="3.9"/><circle cx="806.2" cy="305.5" r="3.9"/><circle cx="1014.2" cy="465.0" r="3.9"/><circle cx="1029.4" cy="361.5" r="3.9"/><circle cx="812.1" cy="397.5" r="3.9"/><circle cx="963.2" cy="282.8" r="3.9"/><circle cx="797.6" cy="312.5" r="3.9"/><circle cx="992.3" cy="249.2" r="3.9"/><circle cx="1084.4" cy="262.6" r="3.9"/><circle cx="827.4" cy="399.6" r="3.9"/><circle cx="962.4" cy="157.1" r="3.9"/><circle cx="836.2" cy="182.7" r="3.9"/><circle cx="891.0" cy="318.0" r="3.9"/><circle cx="926.7" cy="304.5" r="3.9"/><circle cx="923.5" cy="359.1" r="3.9"/><circle cx="1026.0" cy="450.2" r="3.9"/><circle cx="882.5" cy="154.1" r="3.9"/><circle cx="1026.0" cy="296.3" r="3.9"/><circle cx="1050.7" cy="424.6" r="3.9"/><circle cx="920.2" cy="244.2" r="3.9"/><circle cx="1100.1" cy="184.7" r="3.9"/><circle cx="909.2" cy="188.0" r="3.9"/><circle cx="1075.1" cy="399.5" r="3.9"/><circle cx="1016.6" cy="452.9" r="3.9"/><circle cx="966.0" cy="391.2" r="3.9"/><circle cx="941.6" cy="314.8" r="3.9"/><circle cx="992.3" cy="399.8" r="3.9"/><circle cx="1094.9" cy="432.6" r="3.9"/><circle cx="839.7" cy="278.3" r="3.9"/><circle cx="976.5" cy="369.2" r="3.9"/><circle cx="856.9" cy="255.8" r="3.9"/><circle cx="843.2" cy="319.9" r="3.9"/><circle cx="1042.5" cy="253.6" r="3.9"/><circle cx="839.4" cy="179.0" r="3.9"/><circle cx="1032.7" cy="398.0" r="3.9"/><circle cx="1127.4" cy="446.4" r="3.9"/><circle cx="822.5" cy="360.1" r="3.9"/><circle cx="917.4" cy="221.4" r="3.9"/><circle cx="971.1" cy="435.3" r="3.9"/><circle cx="864.2" cy="161.5" r="3.9"/><circle cx="1035.4" cy="329.0" r="3.9"/><circle cx="1034.4" cy="266.0" r="3.9"/><circle cx="1117.2" cy="264.5" r="3.9"/><circle cx="1041.8" cy="357.7" r="3.9"/><circle cx="1106.4" cy="288.3" r="3.9"/><circle cx="1018.2" cy="143.5" r="3.9"/><circle cx="926.9" cy="456.3" r="3.9"/><circle cx="809.1" cy="318.2" r="3.9"/><circle cx="858.3" cy="332.0" r="3.9"/><circle cx="1053.1" cy="334.8" r="3.9"/><circle cx="1123.6" cy="230.9" r="3.9"/><circle cx="1024.1" cy="367.2" r="3.9"/><circle cx="887.1" cy="269.6" r="3.9"/><circle cx="1000.6" cy="223.2" r="3.9"/><circle cx="1044.7" cy="230.8" r="3.9"/><circle cx="1095.8" cy="282.2" r="3.9"/><circle cx="1047.6" cy="157.2" r="3.9"/><circle cx="909.4" cy="292.9" r="3.9"/><circle cx="941.2" cy="371.7" r="3.9"/><circle cx="1053.8" cy="296.0" r="3.9"/><circle cx="1007.1" cy="445.2" r="3.9"/><circle cx="973.4" cy="352.1" r="3.9"/><circle cx="936.5" cy="273.0" r="3.9"/><circle cx="1126.2" cy="232.3" r="3.9"/><circle cx="859.8" cy="263.9" r="3.9"/><circle cx="876.9" cy="245.2" r="3.9"/><circle cx="947.2" cy="351.6" r="3.9"/><circle cx="949.5" cy="274.6" r="3.9"/><circle cx="1021.1" cy="251.5" r="3.9"/><circle cx="1083.0" cy="424.9" r="3.9"/><circle cx="847.7" cy="344.6" r="3.9"/><circle cx="940.1" cy="413.7" r="3.9"/><circle cx="1124.8" cy="259.6" r="3.9"/><circle cx="841.7" cy="353.9" r="3.9"/><circle cx="916.3" cy="427.6" r="3.9"/><circle cx="831.8" cy="327.1" r="3.9"/><circle cx="849.2" cy="310.5" r="3.9"/><circle cx="1053.7" cy="268.4" r="3.9"/><circle cx="901.5" cy="184.0" r="3.9"/><circle cx="889.6" cy="163.0" r="3.9"/><circle cx="1047.2" cy="173.4" r="3.9"/><circle cx="1086.0" cy="343.6" r="3.9"/><circle cx="1004.4" cy="186.2" r="3.9"/><circle cx="884.3" cy="176.8" r="3.9"/><circle cx="1045.0" cy="171.0" r="3.9"/><circle cx="976.5" cy="159.2" r="3.9"/><circle cx="908.8" cy="318.0" r="3.9"/><circle cx="1020.1" cy="412.4" r="3.9"/><circle cx="961.2" cy="421.8" r="3.9"/><circle cx="897.8" cy="299.4" r="3.9"/><circle cx="984.6" cy="364.4" r="3.9"/><circle cx="1091.2" cy="433.3" r="3.9"/><circle cx="1065.1" cy="183.9" r="3.9"/><circle cx="1101.5" cy="327.6" r="3.9"/><circle cx="1133.5" cy="248.6" r="3.9"/><circle cx="1056.2" cy="300.4" r="3.9"/><circle cx="1083.5" cy="143.2" r="3.9"/><circle cx="900.9" cy="374.0" r="3.9"/><circle cx="1028.1" cy="179.2" r="3.9"/><circle cx="879.0" cy="403.6" r="3.9"/><circle cx="991.3" cy="378.6" r="3.9"/><circle cx="889.9" cy="323.2" r="3.9"/><circle cx="939.6" cy="227.5" r="3.9"/><circle cx="980.5" cy="416.5" r="3.9"/><circle cx="922.5" cy="185.5" r="3.9"/><circle cx="853.7" cy="210.5" r="3.9"/><circle cx="827.4" cy="243.3" r="3.9"/><circle cx="862.9" cy="203.1" r="3.9"/><circle cx="1122.5" cy="250.7" r="3.9"/><circle cx="1006.5" cy="399.1" r="3.9"/><circle cx="814.8" cy="369.9" r="3.9"/><circle cx="1090.5" cy="152.7" r="3.9"/><circle cx="960.8" cy="416.8" r="3.9"/><circle cx="915.9" cy="179.0" r="3.9"/><circle cx="882.4" cy="236.9" r="3.9"/><circle cx="860.5" cy="182.8" r="3.9"/><circle cx="962.9" cy="450.7" r="3.9"/><circle cx="956.7" cy="326.8" r="3.9"/><circle cx="845.7" cy="216.8" r="3.9"/><circle cx="1022.5" cy="304.3" r="3.9"/><circle cx="1095.0" cy="175.2" r="3.9"/><circle cx="1025.1" cy="404.4" r="3.9"/><circle cx="861.4" cy="356.6" r="3.9"/><circle cx="1016.5" cy="324.8" r="3.9"/><circle cx="941.8" cy="230.1" r="3.9"/><circle cx="977.4" cy="442.2" r="3.9"/><circle cx="1106.5" cy="412.5" r="3.9"/><circle cx="956.7" cy="373.8" r="3.9"/><circle cx="964.7" cy="404.2" r="3.9"/><circle cx="1078.7" cy="278.3" r="3.9"/><circle cx="1105.2" cy="447.2" r="3.9"/><circle cx="970.0" cy="449.1" r="3.9"/><circle cx="1118.0" cy="192.4" r="3.9"/><circle cx="931.4" cy="356.4" r="3.9"/><circle cx="989.5" cy="280.9" r="3.9"/><circle cx="1021.5" cy="449.8" r="3.9"/><circle cx="1025.2" cy="239.2" r="3.9"/><circle cx="972.5" cy="339.4" r="3.9"/><circle cx="876.4" cy="248.8" r="3.9"/><circle cx="1030.3" cy="177.7" r="3.9"/><circle cx="833.1" cy="377.2" r="3.9"/><circle cx="963.5" cy="213.1" r="3.9"/><circle cx="1115.1" cy="346.0" r="3.9"/><circle cx="1011.0" cy="137.1" r="3.9"/><circle cx="877.9" cy="155.6" r="3.9"/><circle cx="1036.0" cy="305.5" r="3.9"/><circle cx="925.8" cy="428.8" r="3.9"/><circle cx="903.5" cy="288.8" r="3.9"/><circle cx="1129.5" cy="321.6" r="3.9"/><circle cx="1041.8" cy="348.8" r="3.9"/><circle cx="1051.6" cy="248.5" r="3.9"/><circle cx="1075.3" cy="364.6" r="3.9"/><circle cx="833.4" cy="184.8" r="3.9"/><circle cx="963.9" cy="393.5" r="3.9"/><circle cx="802.2" cy="297.0" r="3.9"/><circle cx="966.5" cy="223.0" r="3.9"/><circle cx="831.1" cy="211.7" r="3.9"/><circle cx="1091.4" cy="434.3" r="3.9"/><circle cx="860.4" cy="409.6" r="3.9"/><circle cx="1074.9" cy="342.1" r="3.9"/><circle cx="1108.0" cy="212.0" r="3.9"/><circle cx="852.8" cy="397.8" r="3.9"/><circle cx="1026.0" cy="407.2" r="3.9"/><circle cx="1022.5" cy="415.0" r="3.9"/><circle cx="1010.6" cy="145.2" r="3.9"/><circle cx="1118.5" cy="372.7" r="3.9"/><circle cx="1066.5" cy="390.2" r="3.9"/><circle cx="817.2" cy="326.6" r="3.9"/><circle cx="899.9" cy="305.8" r="3.9"/><circle cx="1052.0" cy="250.5" r="3.9"/><circle cx="922.5" cy="314.4" r="3.9"/><circle cx="1039.3" cy="389.1" r="3.9"/><circle cx="878.7" cy="306.6" r="3.9"/><circle cx="848.0" cy="181.3" r="3.9"/><circle cx="1026.8" cy="251.6" r="3.9"/><circle cx="1095.3" cy="226.5" r="3.9"/><circle cx="859.1" cy="411.8" r="3.9"/><circle cx="1087.9" cy="411.4" r="3.9"/><circle cx="1032.3" cy="177.2" r="3.9"/><circle cx="1024.3" cy="150.8" r="3.9"/><circle cx="794.4" cy="312.6" r="3.9"/><circle cx="1013.4" cy="178.9" r="3.9"/><circle cx="1089.4" cy="328.1" r="3.9"/><circle cx="1002.3" cy="230.6" r="3.9"/><circle cx="948.2" cy="283.9" r="3.9"/><circle cx="1111.6" cy="278.9" r="3.9"/><circle cx="1035.5" cy="237.5" r="3.9"/><circle cx="1043.8" cy="281.0" r="3.9"/><circle cx="844.5" cy="178.7" r="3.9"/><circle cx="925.4" cy="288.7" r="3.9"/><circle cx="1067.0" cy="424.3" r="3.9"/><circle cx="1134.3" cy="226.6" r="3.9"/><circle cx="977.1" cy="229.1" r="3.9"/><circle cx="1058.7" cy="446.8" r="3.9"/><circle cx="922.6" cy="424.2" r="3.9"/><circle cx="1127.0" cy="380.7" r="3.9"/><circle cx="956.0" cy="196.2" r="3.9"/><circle cx="1023.5" cy="464.3" r="3.9"/><circle cx="1027.1" cy="212.6" r="3.9"/><circle cx="940.8" cy="377.0" r="3.9"/><circle cx="1103.2" cy="329.2" r="3.9"/><circle cx="824.1" cy="324.7" r="3.9"/><circle cx="1107.0" cy="204.8" r="3.9"/><circle cx="914.5" cy="434.2" r="3.9"/><circle cx="841.5" cy="328.2" r="3.9"/><circle cx="977.9" cy="360.1" r="3.9"/><circle cx="950.3" cy="467.2" r="3.9"/><circle cx="1090.9" cy="220.3" r="3.9"/><circle cx="1103.8" cy="294.1" r="3.9"/><circle cx="859.9" cy="173.0" r="3.9"/><circle cx="1102.2" cy="367.9" r="3.9"/><circle cx="971.2" cy="301.5" r="3.9"/><circle cx="1062.9" cy="356.2" r="3.9"/><circle cx="1014.6" cy="454.6" r="3.9"/><circle cx="968.7" cy="246.2" r="3.9"/><circle cx="941.0" cy="277.0" r="3.9"/><circle cx="1064.4" cy="271.5" r="3.9"/><circle cx="1009.9" cy="351.2" r="3.9"/><circle cx="1128.2" cy="409.6" r="3.9"/><circle cx="865.0" cy="294.4" r="3.9"/><circle cx="933.4" cy="417.5" r="3.9"/><circle cx="1046.9" cy="196.2" r="3.9"/><circle cx="917.2" cy="200.6" r="3.9"/><circle cx="937.5" cy="192.1" r="3.9"/><circle cx="986.7" cy="421.5" r="3.9"/><circle cx="1122.5" cy="286.7" r="3.9"/><circle cx="878.7" cy="408.6" r="3.9"/><circle cx="1103.5" cy="433.3" r="3.9"/><circle cx="1010.4" cy="389.0" r="3.9"/><circle cx="1016.0" cy="428.6" r="3.9"/><circle cx="862.2" cy="378.1" r="3.9"/><circle cx="1098.1" cy="227.2" r="3.9"/><circle cx="936.3" cy="250.8" r="3.9"/><circle cx="1028.9" cy="412.5" r="3.9"/><circle cx="909.7" cy="293.9" r="3.9"/><circle cx="986.8" cy="329.0" r="3.9"/><circle cx="1063.8" cy="405.0" r="3.9"/><circle cx="1061.9" cy="406.3" r="3.9"/><circle cx="1121.6" cy="305.6" r="3.9"/><circle cx="1067.1" cy="261.7" r="3.9"/><circle cx="948.4" cy="460.4" r="3.9"/><circle cx="956.8" cy="269.5" r="3.9"/><circle cx="1010.2" cy="250.5" r="3.9"/><circle cx="957.3" cy="441.8" r="3.9"/><circle cx="795.3" cy="324.2" r="3.9"/><circle cx="937.0" cy="427.7" r="3.9"/><circle cx="1012.6" cy="266.1" r="3.9"/><circle cx="1002.6" cy="321.8" r="3.9"/><circle cx="972.7" cy="242.2" r="3.9"/><circle cx="916.2" cy="453.3" r="3.9"/><circle cx="1067.0" cy="428.2" r="3.9"/><circle cx="1120.3" cy="177.4" r="3.9"/><circle cx="852.0" cy="175.8" r="3.9"/><circle cx="1019.6" cy="425.6" r="3.9"/><circle cx="1119.2" cy="213.7" r="3.9"/><circle cx="878.0" cy="204.6" r="3.9"/><circle cx="1125.3" cy="418.4" r="3.9"/><circle cx="790.2" cy="337.4" r="3.9"/><circle cx="846.2" cy="325.0" r="3.9"/><circle cx="1054.8" cy="285.5" r="3.9"/><circle cx="945.9" cy="186.4" r="3.9"/><circle cx="990.1" cy="206.4" r="3.9"/><circle cx="925.9" cy="363.5" r="3.9"/><circle cx="815.3" cy="239.8" r="3.9"/><circle cx="880.0" cy="198.0" r="3.9"/><circle cx="1013.9" cy="259.2" r="3.9"/><circle cx="965.8" cy="261.0" r="3.9"/><circle cx="1086.0" cy="340.5" r="3.9"/><circle cx="895.8" cy="316.4" r="3.9"/><circle cx="867.7" cy="161.0" r="3.9"/><circle cx="926.2" cy="374.2" r="3.9"/><circle cx="817.3" cy="280.7" r="3.9"/><circle cx="933.5" cy="325.9" r="3.9"/><circle cx="865.8" cy="286.4" r="3.9"/><circle cx="857.2" cy="282.8" r="3.9"/><circle cx="898.8" cy="370.2" r="3.9"/><circle cx="972.0" cy="400.2" r="3.9"/><circle cx="1093.6" cy="363.5" r="3.9"/><circle cx="926.9" cy="159.3" r="3.9"/><circle cx="854.9" cy="171.7" r="3.9"/><circle cx="800.4" cy="328.8" r="3.9"/><circle cx="1067.4" cy="433.7" r="3.9"/><circle cx="898.9" cy="270.5" r="3.9"/><circle cx="925.5" cy="448.9" r="3.9"/><circle cx="892.0" cy="438.9" r="3.9"/><circle cx="964.2" cy="190.9" r="3.9"/><circle cx="956.5" cy="428.6" r="3.9"/><circle cx="876.2" cy="246.6" r="3.9"/><circle cx="1105.4" cy="432.3" r="3.9"/><circle cx="825.1" cy="211.3" r="3.9"/><circle cx="1119.3" cy="261.3" r="3.9"/><circle cx="1058.3" cy="292.9" r="3.9"/><circle cx="836.4" cy="246.5" r="3.9"/><circle cx="843.0" cy="394.6" r="3.9"/><circle cx="987.0" cy="185.2" r="3.9"/><circle cx="823.0" cy="372.2" r="3.9"/><circle cx="1118.8" cy="335.0" r="3.9"/><circle cx="1135.1" cy="202.0" r="3.9"/><circle cx="1093.4" cy="143.7" r="3.9"/><circle cx="1107.1" cy="308.3" r="3.9"/><circle cx="824.3" cy="244.7" r="3.9"/><circle cx="1078.9" cy="255.7" r="3.9"/><circle cx="918.1" cy="257.8" r="3.9"/><circle cx="977.7" cy="172.7" r="3.9"/><circle cx="958.9" cy="306.1" r="3.9"/><circle cx="840.2" cy="179.5" r="3.9"/><circle cx="966.5" cy="381.9" r="3.9"/><circle cx="1067.1" cy="241.4" r="3.9"/><circle cx="947.4" cy="252.3" r="3.9"/><circle cx="1083.5" cy="229.0" r="3.9"/><circle cx="1039.8" cy="259.0" r="3.9"/><circle cx="1069.3" cy="371.9" r="3.9"/><circle cx="1134.2" cy="420.6" r="3.9"/><circle cx="926.8" cy="292.5" r="3.9"/><circle cx="1042.2" cy="278.8" r="3.9"/><circle cx="1044.3" cy="408.3" r="3.9"/><circle cx="820.4" cy="280.9" r="3.9"/><circle cx="1116.0" cy="326.9" r="3.9"/><circle cx="996.6" cy="398.6" r="3.9"/><circle cx="871.4" cy="376.2" r="3.9"/><circle cx="881.2" cy="423.9" r="3.9"/><circle cx="1089.8" cy="391.3" r="3.9"/><circle cx="1097.0" cy="431.6" r="3.9"/><circle cx="897.4" cy="399.2" r="3.9"/><circle cx="1017.3" cy="306.0" r="3.9"/><circle cx="988.5" cy="216.4" r="3.9"/><circle cx="828.8" cy="268.8" r="3.9"/><circle cx="1006.1" cy="153.6" r="3.9"/><circle cx="909.5" cy="273.1" r="3.9"/><circle cx="1000.5" cy="452.8" r="3.9"/><circle cx="978.5" cy="378.6" r="3.9"/><circle cx="1065.3" cy="337.9" r="3.9"/><circle cx="1014.1" cy="220.6" r="3.9"/><circle cx="813.3" cy="275.9" r="3.9"/><circle cx="1099.7" cy="230.7" r="3.9"/><circle cx="1032.6" cy="351.7" r="3.9"/><circle cx="1016.1" cy="138.2" r="3.9"/><circle cx="1127.0" cy="204.9" r="3.9"/><circle cx="839.9" cy="297.6" r="3.9"/><circle cx="1060.5" cy="411.4" r="3.9"/><circle cx="1123.6" cy="428.0" r="3.9"/><circle cx="888.3" cy="181.3" r="3.9"/><circle cx="859.0" cy="334.5" r="3.9"/><circle cx="857.3" cy="234.7" r="3.9"/><circle cx="1008.2" cy="457.5" r="3.9"/><circle cx="846.6" cy="198.9" r="3.9"/><circle cx="1047.4" cy="319.3" r="3.9"/><circle cx="927.6" cy="171.3" r="3.9"/><circle cx="925.7" cy="393.3" r="3.9"/><circle cx="918.0" cy="157.0" r="3.9"/><circle cx="1115.5" cy="441.3" r="3.9"/><circle cx="1030.1" cy="370.2" r="3.9"/><circle cx="1054.0" cy="148.1" r="3.9"/><circle cx="1108.8" cy="382.9" r="3.9"/><circle cx="850.9" cy="276.9" r="3.9"/><circle cx="964.0" cy="191.9" r="3.9"/><circle cx="963.6" cy="170.7" r="3.9"/><circle cx="848.2" cy="242.9" r="3.9"/><circle cx="902.8" cy="400.2" r="3.9"/><circle cx="837.8" cy="367.0" r="3.9"/><circle cx="924.9" cy="325.9" r="3.9"/><circle cx="947.1" cy="455.9" r="3.9"/><circle cx="940.4" cy="257.9" r="3.9"/><circle cx="1056.3" cy="210.1" r="3.9"/><circle cx="879.1" cy="387.0" r="3.9"/><circle cx="1093.8" cy="397.2" r="3.9"/><circle cx="1016.7" cy="337.2" r="3.9"/><circle cx="1101.4" cy="202.7" r="3.9"/><circle cx="830.3" cy="363.6" r="3.9"/><circle cx="1055.6" cy="283.0" r="3.9"/><circle cx="1048.9" cy="459.2" r="3.9"/><circle cx="931.8" cy="151.6" r="3.9"/><circle cx="923.7" cy="377.0" r="3.9"/><circle cx="1073.2" cy="254.4" r="3.9"/><circle cx="1128.6" cy="151.8" r="3.9"/><circle cx="969.5" cy="408.0" r="3.9"/><circle cx="998.8" cy="407.5" r="3.9"/><circle cx="945.6" cy="402.5" r="3.9"/><circle cx="931.7" cy="249.4" r="3.9"/><circle cx="1088.3" cy="345.3" r="3.9"/><circle cx="785.7" cy="312.7" r="3.9"/><circle cx="853.7" cy="374.3" r="3.9"/><circle cx="956.7" cy="353.6" r="3.9"/><circle cx="1093.1" cy="386.7" r="3.9"/><circle cx="1070.3" cy="174.7" r="3.9"/><circle cx="954.8" cy="267.6" r="3.9"/><circle cx="1067.2" cy="332.6" r="3.9"/><circle cx="875.1" cy="192.3" r="3.9"/><circle cx="962.0" cy="451.3" r="3.9"/><circle cx="882.0" cy="216.7" r="3.9"/><circle cx="824.7" cy="209.2" r="3.9"/><circle cx="1110.2" cy="400.5" r="3.9"/><circle cx="859.1" cy="323.1" r="3.9"/><circle cx="1044.9" cy="262.1" r="3.9"/><circle cx="967.1" cy="254.9" r="3.9"/><circle cx="827.5" cy="319.0" r="3.9"/><circle cx="827.9" cy="353.1" r="3.9"/><circle cx="1013.4" cy="343.2" r="3.9"/><circle cx="928.2" cy="151.5" r="3.9"/><circle cx="923.1" cy="455.3" r="3.9"/><circle cx="892.4" cy="155.2" r="3.9"/><circle cx="1087.7" cy="220.3" r="3.9"/><circle cx="852.6" cy="322.4" r="3.9"/><circle cx="870.0" cy="411.3" r="3.9"/><circle cx="942.4" cy="247.4" r="3.9"/><circle cx="1106.8" cy="425.4" r="3.9"/><circle cx="840.0" cy="397.3" r="3.9"/><circle cx="1021.0" cy="244.0" r="3.9"/><circle cx="997.4" cy="425.8" r="3.9"/><circle cx="928.4" cy="253.2" r="3.9"/><circle cx="879.0" cy="263.1" r="3.9"/><circle cx="893.6" cy="257.8" r="3.9"/><circle cx="932.4" cy="213.5" r="3.9"/><circle cx="843.0" cy="221.7" r="3.9"/><circle cx="1008.7" cy="385.6" r="3.9"/><circle cx="928.9" cy="299.6" r="3.9"/><circle cx="997.3" cy="325.4" r="3.9"/><circle cx="1022.8" cy="394.0" r="3.9"/><circle cx="1015.7" cy="405.5" r="3.9"/><circle cx="1086.9" cy="177.3" r="3.9"/><circle cx="867.6" cy="331.4" r="3.9"/><circle cx="949.7" cy="419.5" r="3.9"/><circle cx="1028.4" cy="144.3" r="3.9"/><circle cx="1120.0" cy="212.0" r="3.9"/><circle cx="1053.3" cy="422.2" r="3.9"/><circle cx="1103.4" cy="239.6" r="3.9"/><circle cx="1044.3" cy="419.7" r="3.9"/><circle cx="1069.8" cy="381.5" r="3.9"/><circle cx="1104.3" cy="255.6" r="3.9"/><circle cx="808.4" cy="337.1" r="3.9"/><circle cx="823.0" cy="373.6" r="3.9"/><circle cx="1029.2" cy="280.3" r="3.9"/><circle cx="1081.0" cy="248.8" r="3.9"/><circle cx="961.9" cy="434.9" r="3.9"/><circle cx="1001.1" cy="305.7" r="3.9"/><circle cx="884.2" cy="179.5" r="3.9"/><circle cx="972.8" cy="189.7" r="3.9"/><circle cx="999.7" cy="319.1" r="3.9"/><circle cx="982.1" cy="318.2" r="3.9"/><circle cx="1095.3" cy="214.6" r="3.9"/><circle cx="1075.8" cy="285.4" r="3.9"/><circle cx="902.8" cy="188.1" r="3.9"/><circle cx="859.2" cy="326.7" r="3.9"/><circle cx="1108.2" cy="314.5" r="3.9"/><circle cx="949.3" cy="430.8" r="3.9"/><circle cx="885.9" cy="155.0" r="3.9"/><circle cx="957.0" cy="371.2" r="3.9"/><circle cx="954.0" cy="370.4" r="3.9"/><circle cx="898.8" cy="408.6" r="3.9"/><circle cx="1008.6" cy="301.5" r="3.9"/><circle cx="879.6" cy="396.6" r="3.9"/><circle cx="1050.0" cy="235.1" r="3.9"/><circle cx="1068.6" cy="284.7" r="3.9"/><circle cx="952.2" cy="337.5" r="3.9"/><circle cx="949.8" cy="440.3" r="3.9"/><circle cx="1099.9" cy="225.4" r="3.9"/><circle cx="933.0" cy="433.4" r="3.9"/><circle cx="993.6" cy="330.3" r="3.9"/><circle cx="981.7" cy="272.4" r="3.9"/><circle cx="1016.5" cy="331.4" r="3.9"/><circle cx="779.2" cy="315.1" r="3.9"/><circle cx="1065.3" cy="422.9" r="3.9"/><circle cx="1002.5" cy="316.1" r="3.9"/><circle cx="1088.6" cy="167.9" r="3.9"/><circle cx="923.2" cy="231.6" r="3.9"/><circle cx="829.5" cy="310.3" r="3.9"/><circle cx="1115.0" cy="207.1" r="3.9"/><circle cx="1050.5" cy="235.0" r="3.9"/><circle cx="1077.5" cy="293.3" r="3.9"/><circle cx="879.8" cy="208.7" r="3.9"/><circle cx="864.0" cy="385.4" r="3.9"/><circle cx="932.5" cy="359.5" r="3.9"/><circle cx="1001.0" cy="307.8" r="3.9"/><circle cx="1040.9" cy="322.2" r="3.9"/><circle cx="1100.7" cy="249.0" r="3.9"/><circle cx="944.1" cy="368.5" r="3.9"/><circle cx="1020.2" cy="366.7" r="3.9"/><circle cx="972.9" cy="287.4" r="3.9"/><circle cx="1022.7" cy="244.5" r="3.9"/><circle cx="1037.9" cy="306.3" r="3.9"/><circle cx="1009.3" cy="343.5" r="3.9"/><circle cx="901.8" cy="247.4" r="3.9"/><circle cx="1020.8" cy="252.6" r="3.9"/><circle cx="1054.6" cy="192.8" r="3.9"/><circle cx="1100.7" cy="171.8" r="3.9"/><circle cx="1069.6" cy="201.4" r="3.9"/><circle cx="1130.1" cy="313.9" r="3.9"/><circle cx="1070.9" cy="245.5" r="3.9"/><circle cx="1110.0" cy="278.2" r="3.9"/><circle cx="968.5" cy="416.1" r="3.9"/><circle cx="816.7" cy="298.3" r="3.9"/><circle cx="1035.6" cy="287.0" r="3.9"/><circle cx="926.4" cy="374.9" r="3.9"/><circle cx="1091.5" cy="153.1" r="3.9"/><circle cx="864.1" cy="345.8" r="3.9"/><circle cx="811.9" cy="325.7" r="3.9"/><circle cx="1067.1" cy="374.8" r="3.9"/><circle cx="797.0" cy="309.1" r="3.9"/><circle cx="934.0" cy="144.6" r="3.9"/><circle cx="979.4" cy="310.7" r="3.9"/><circle cx="834.6" cy="211.4" r="3.9"/><circle cx="1075.8" cy="220.7" r="3.9"/><circle cx="1084.0" cy="169.5" r="3.9"/><circle cx="1117.8" cy="432.6" r="3.9"/><circle cx="898.4" cy="223.1" r="3.9"/><circle cx="1107.8" cy="319.4" r="3.9"/><circle cx="970.2" cy="340.9" r="3.9"/><circle cx="1082.3" cy="327.3" r="3.9"/><circle cx="1051.0" cy="328.3" r="3.9"/><circle cx="1019.6" cy="376.2" r="3.9"/><circle cx="883.2" cy="423.8" r="3.9"/><circle cx="917.3" cy="453.6" r="3.9"/><circle cx="996.1" cy="450.7" r="3.9"/><circle cx="903.9" cy="355.3" r="3.9"/><circle cx="834.1" cy="209.6" r="3.9"/><circle cx="967.9" cy="341.0" r="3.9"/><circle cx="827.3" cy="322.0" r="3.9"/><circle cx="837.7" cy="324.7" r="3.9"/><circle cx="1006.5" cy="233.3" r="3.9"/><circle cx="1090.7" cy="255.0" r="3.9"/><circle cx="949.5" cy="365.0" r="3.9"/><circle cx="1010.7" cy="393.2" r="3.9"/><circle cx="839.1" cy="319.0" r="3.9"/><circle cx="1126.3" cy="323.4" r="3.9"/><circle cx="887.1" cy="413.3" r="3.9"/><circle cx="1043.8" cy="263.9" r="3.9"/><circle cx="967.6" cy="204.5" r="3.9"/><circle cx="995.6" cy="329.5" r="3.9"/><circle cx="1130.1" cy="424.2" r="3.9"/><circle cx="918.8" cy="242.8" r="3.9"/><circle cx="1106.9" cy="209.1" r="3.9"/><circle cx="1125.0" cy="349.2" r="3.9"/><circle cx="926.3" cy="197.7" r="3.9"/><circle cx="852.7" cy="312.5" r="3.9"/><circle cx="828.9" cy="309.7" r="3.9"/><circle cx="977.3" cy="183.6" r="3.9"/><circle cx="907.2" cy="158.0" r="3.9"/><circle cx="1091.2" cy="333.6" r="3.9"/><circle cx="883.3" cy="383.4" r="3.9"/><circle cx="903.7" cy="258.7" r="3.9"/><circle cx="826.6" cy="375.4" r="3.9"/><circle cx="1037.2" cy="433.8" r="3.9"/><circle cx="1055.4" cy="225.8" r="3.9"/><circle cx="894.7" cy="414.3" r="3.9"/><circle cx="962.9" cy="222.8" r="3.9"/><circle cx="1015.5" cy="421.2" r="3.9"/><circle cx="893.1" cy="370.3" r="3.9"/><circle cx="980.8" cy="197.8" r="3.9"/><circle cx="1097.1" cy="340.8" r="3.9"/><circle cx="922.2" cy="341.8" r="3.9"/><circle cx="949.4" cy="299.0" r="3.9"/><circle cx="1104.7" cy="169.2" r="3.9"/><circle cx="1069.8" cy="173.9" r="3.9"/><circle cx="945.0" cy="164.3" r="3.9"/><circle cx="1117.7" cy="378.7" r="3.9"/><circle cx="1009.7" cy="453.3" r="3.9"/><circle cx="1078.1" cy="203.6" r="3.9"/><circle cx="1082.2" cy="320.0" r="3.9"/><circle cx="1101.9" cy="413.4" r="3.9"/><circle cx="861.7" cy="294.9" r="3.9"/><circle cx="1061.7" cy="324.7" r="3.9"/><circle cx="928.7" cy="178.4" r="3.9"/><circle cx="1048.0" cy="235.1" r="3.9"/><circle cx="830.5" cy="270.4" r="3.9"/><circle cx="1103.2" cy="374.1" r="3.9"/><circle cx="915.8" cy="412.0" r="3.9"/><circle cx="993.3" cy="401.8" r="3.9"/><circle cx="978.6" cy="324.0" r="3.9"/><circle cx="948.2" cy="203.9" r="3.9"/><circle cx="1029.7" cy="366.3" r="3.9"/><circle cx="954.6" cy="230.9" r="3.9"/><circle cx="887.2" cy="357.7" r="3.9"/><circle cx="1024.1" cy="195.1" r="3.9"/><circle cx="1083.7" cy="440.5" r="3.9"/><circle cx="813.5" cy="238.2" r="3.9"/><circle cx="923.0" cy="235.4" r="3.9"/><circle cx="928.7" cy="458.6" r="3.9"/><circle cx="908.4" cy="320.1" r="3.9"/><circle cx="1103.7" cy="400.6" r="3.9"/><circle cx="904.8" cy="391.7" r="3.9"/><circle cx="908.3" cy="379.1" r="3.9"/><circle cx="949.7" cy="158.0" r="3.9"/><circle cx="931.1" cy="431.3" r="3.9"/><circle cx="884.4" cy="351.3" r="3.9"/><circle cx="881.7" cy="385.1" r="3.9"/><circle cx="885.9" cy="408.5" r="3.9"/><circle cx="826.7" cy="293.9" r="3.9"/><circle cx="869.3" cy="215.5" r="3.9"/><circle cx="1032.3" cy="413.8" r="3.9"/><circle cx="807.6" cy="275.9" r="3.9"/><circle cx="1057.8" cy="289.6" r="3.9"/><circle cx="1021.8" cy="461.5" r="3.9"/><circle cx="822.7" cy="201.1" r="3.9"/><circle cx="862.0" cy="331.6" r="3.9"/><circle cx="1014.3" cy="214.0" r="3.9"/><circle cx="1089.7" cy="379.8" r="3.9"/><circle cx="957.6" cy="155.1" r="3.9"/><circle cx="1034.3" cy="398.8" r="3.9"/><circle cx="892.9" cy="305.8" r="3.9"/><circle cx="888.7" cy="373.9" r="3.9"/><circle cx="1007.7" cy="256.6" r="3.9"/><circle cx="900.3" cy="223.2" r="3.9"/><circle cx="1093.9" cy="325.8" r="3.9"/><circle cx="1044.2" cy="238.1" r="3.9"/><circle cx="1060.6" cy="170.6" r="3.9"/><circle cx="1108.2" cy="154.3" r="3.9"/><circle cx="1083.1" cy="326.6" r="3.9"/><circle cx="987.1" cy="199.4" r="3.9"/><circle cx="1082.6" cy="417.7" r="3.9"/><circle cx="994.8" cy="440.4" r="3.9"/><circle cx="1064.1" cy="210.2" r="3.9"/><circle cx="853.8" cy="238.2" r="3.9"/><circle cx="939.8" cy="398.3" r="3.9"/><circle cx="1093.0" cy="321.4" r="3.9"/><circle cx="815.9" cy="362.9" r="3.9"/><circle cx="926.3" cy="380.7" r="3.9"/><circle cx="1128.9" cy="368.0" r="3.9"/><circle cx="1113.2" cy="375.5" r="3.9"/><circle cx="869.9" cy="182.4" r="3.9"/><circle cx="841.5" cy="305.9" r="3.9"/><circle cx="979.3" cy="149.6" r="3.9"/><circle cx="942.0" cy="375.6" r="3.9"/><circle cx="955.9" cy="257.6" r="3.9"/><circle cx="1088.6" cy="405.9" r="3.9"/><circle cx="1079.7" cy="220.3" r="3.9"/><circle cx="944.3" cy="404.9" r="3.9"/><circle cx="1058.5" cy="194.3" r="3.9"/><circle cx="901.4" cy="399.2" r="3.9"/><circle cx="1107.3" cy="185.0" r="3.9"/><circle cx="904.5" cy="267.8" r="3.9"/><circle cx="1093.9" cy="349.6" r="3.9"/><circle cx="912.6" cy="176.5" r="3.9"/><circle cx="1066.1" cy="307.6" r="3.9"/><circle cx="1105.0" cy="238.0" r="3.9"/><circle cx="1126.3" cy="263.7" r="3.9"/><circle cx="1063.6" cy="238.0" r="3.9"/><circle cx="849.6" cy="284.6" r="3.9"/><circle cx="1088.3" cy="273.2" r="3.9"/><circle cx="824.4" cy="376.2" r="3.9"/><circle cx="918.2" cy="282.3" r="3.9"/><circle cx="1094.1" cy="176.8" r="3.9"/><circle cx="1013.8" cy="170.8" r="3.9"/><circle cx="803.6" cy="344.7" r="3.9"/><circle cx="1088.3" cy="407.7" r="3.9"/><circle cx="942.4" cy="157.8" r="3.9"/><circle cx="945.5" cy="217.2" r="3.9"/><circle cx="1069.0" cy="310.5" r="3.9"/><circle cx="965.8" cy="297.3" r="3.9"/><circle cx="840.1" cy="185.0" r="3.9"/><circle cx="967.4" cy="334.4" r="3.9"/><circle cx="913.5" cy="413.4" r="3.9"/><circle cx="827.8" cy="318.0" r="3.9"/><circle cx="1027.0" cy="198.4" r="3.9"/><circle cx="1064.2" cy="237.5" r="3.9"/><circle cx="1035.5" cy="240.1" r="3.9"/><circle cx="993.4" cy="225.2" r="3.9"/><circle cx="921.4" cy="268.4" r="3.9"/><circle cx="979.8" cy="244.2" r="3.9"/><circle cx="877.3" cy="286.5" r="3.9"/><circle cx="1116.2" cy="151.1" r="3.9"/><circle cx="925.3" cy="230.9" r="3.9"/><circle cx="935.1" cy="271.1" r="3.9"/><circle cx="1088.9" cy="275.5" r="3.9"/><circle cx="1070.3" cy="170.2" r="3.9"/><circle cx="867.4" cy="175.6" r="3.9"/><circle cx="845.6" cy="390.6" r="3.9"/><circle cx="944.5" cy="247.3" r="3.9"/><circle cx="922.0" cy="368.8" r="3.9"/><circle cx="1070.2" cy="201.4" r="3.9"/><circle cx="1113.6" cy="168.2" r="3.9"/><circle cx="943.7" cy="229.6" r="3.9"/><circle cx="898.5" cy="355.4" r="3.9"/><circle cx="857.3" cy="335.7" r="3.9"/><circle cx="923.1" cy="214.1" r="3.9"/><circle cx="1086.1" cy="306.2" r="3.9"/><circle cx="864.0" cy="314.3" r="3.9"/><circle cx="1068.5" cy="356.0" r="3.9"/><circle cx="846.8" cy="385.3" r="3.9"/><circle cx="900.5" cy="399.2" r="3.9"/><circle cx="997.1" cy="137.7" r="3.9"/><circle cx="855.1" cy="261.6" r="3.9"/><circle cx="1095.1" cy="294.2" r="3.9"/><circle cx="790.2" cy="291.5" r="3.9"/><circle cx="909.5" cy="225.4" r="3.9"/><circle cx="1083.0" cy="266.4" r="3.9"/><circle cx="869.6" cy="189.9" r="3.9"/><circle cx="927.3" cy="416.1" r="3.9"/><circle cx="818.8" cy="288.1" r="3.9"/><circle cx="800.2" cy="332.0" r="3.9"/><circle cx="873.1" cy="167.9" r="3.9"/><circle cx="1132.2" cy="331.9" r="3.9"/><circle cx="907.3" cy="175.1" r="3.9"/><circle cx="946.1" cy="389.6" r="3.9"/><circle cx="1112.4" cy="207.9" r="3.9"/><circle cx="1107.7" cy="242.2" r="3.9"/><circle cx="900.6" cy="176.4" r="3.9"/><circle cx="1084.5" cy="228.3" r="3.9"/><circle cx="952.4" cy="319.8" r="3.9"/><circle cx="1022.2" cy="181.5" r="3.9"/><circle cx="1082.6" cy="371.8" r="3.9"/><circle cx="842.1" cy="403.9" r="3.9"/><circle cx="931.6" cy="317.6" r="3.9"/><circle cx="950.2" cy="299.7" r="3.9"/><circle cx="1126.3" cy="335.4" r="3.9"/><circle cx="807.6" cy="308.0" r="3.9"/><circle cx="935.3" cy="156.7" r="3.9"/><circle cx="977.3" cy="434.6" r="3.9"/><circle cx="1121.1" cy="216.9" r="3.9"/><circle cx="1012.4" cy="284.5" r="3.9"/><circle cx="1042.7" cy="458.4" r="3.9"/><circle cx="992.8" cy="159.4" r="3.9"/><circle cx="1107.8" cy="153.5" r="3.9"/><circle cx="877.7" cy="375.7" r="3.9"/><circle cx="867.3" cy="167.9" r="3.9"/><circle cx="1004.3" cy="413.2" r="3.9"/><circle cx="1127.1" cy="443.8" r="3.9"/><circle cx="878.9" cy="239.7" r="3.9"/><circle cx="937.1" cy="394.9" r="3.9"/><circle cx="899.5" cy="203.1" r="3.9"/><circle cx="1066.3" cy="389.9" r="3.9"/><circle cx="939.2" cy="448.5" r="3.9"/><circle cx="834.2" cy="221.5" r="3.9"/><circle cx="971.8" cy="355.4" r="3.9"/><circle cx="1025.7" cy="421.8" r="3.9"/><circle cx="977.9" cy="415.6" r="3.9"/><circle cx="1106.4" cy="319.7" r="3.9"/><circle cx="1079.2" cy="432.2" r="3.9"/><circle cx="1072.5" cy="176.9" r="3.9"/><circle cx="1121.9" cy="290.2" r="3.9"/><circle cx="1072.2" cy="305.6" r="3.9"/><circle cx="1020.1" cy="349.7" r="3.9"/><circle cx="1026.9" cy="462.4" r="3.9"/><circle cx="903.1" cy="221.2" r="3.9"/><circle cx="1073.7" cy="167.0" r="3.9"/><circle cx="911.9" cy="237.8" r="3.9"/><circle cx="982.3" cy="293.3" r="3.9"/><circle cx="1098.8" cy="448.4" r="3.9"/><circle cx="1081.9" cy="261.5" r="3.9"/><circle cx="928.9" cy="214.8" r="3.9"/><circle cx="884.4" cy="352.7" r="3.9"/><circle cx="1090.5" cy="193.0" r="3.9"/><circle cx="1097.3" cy="216.4" r="3.9"/><circle cx="1029.3" cy="358.4" r="3.9"/><circle cx="1083.3" cy="417.8" r="3.9"/><circle cx="1015.7" cy="415.1" r="3.9"/><circle cx="1053.9" cy="308.5" r="3.9"/><circle cx="921.5" cy="316.3" r="3.9"/><circle cx="1049.3" cy="337.3" r="3.9"/><circle cx="946.6" cy="302.9" r="3.9"/><circle cx="919.0" cy="308.9" r="3.9"/><circle cx="1052.7" cy="156.0" r="3.9"/><circle cx="899.1" cy="383.4" r="3.9"/><circle cx="995.5" cy="314.5" r="3.9"/><circle cx="1107.7" cy="235.5" r="3.9"/><circle cx="1066.0" cy="257.2" r="3.9"/><circle cx="919.2" cy="453.3" r="3.9"/><circle cx="851.2" cy="241.0" r="3.9"/><circle cx="893.3" cy="365.4" r="3.9"/><circle cx="1032.4" cy="441.3" r="3.9"/><circle cx="1128.4" cy="420.2" r="3.9"/><circle cx="1079.1" cy="221.3" r="3.9"/><circle cx="916.2" cy="246.3" r="3.9"/><circle cx="1115.5" cy="194.0" r="3.9"/><circle cx="846.9" cy="348.2" r="3.9"/><circle cx="891.6" cy="256.9" r="3.9"/><circle cx="874.9" cy="375.3" r="3.9"/><circle cx="1011.7" cy="176.7" r="3.9"/><circle cx="978.9" cy="356.9" r="3.9"/><circle cx="1098.4" cy="169.9" r="3.9"/><circle cx="908.1" cy="240.6" r="3.9"/><circle cx="1067.0" cy="227.6" r="3.9"/><circle cx="972.3" cy="204.5" r="3.9"/><circle cx="1025.5" cy="207.5" r="3.9"/><circle cx="963.6" cy="207.0" r="3.9"/><circle cx="1035.0" cy="206.1" r="3.9"/><circle cx="1016.2" cy="182.6" r="3.9"/><circle cx="1079.0" cy="434.6" r="3.9"/><circle cx="886.5" cy="422.2" r="3.9"/><circle cx="1046.0" cy="260.1" r="3.9"/><circle cx="842.2" cy="319.2" r="3.9"/><circle cx="1124.6" cy="416.0" r="3.9"/><circle cx="1082.1" cy="406.6" r="3.9"/><circle cx="929.5" cy="295.5" r="3.9"/><circle cx="961.6" cy="186.6" r="3.9"/><circle cx="942.2" cy="197.5" r="3.9"/><circle cx="1064.6" cy="435.0" r="3.9"/><circle cx="802.3" cy="271.2" r="3.9"/><circle cx="1055.8" cy="342.0" r="3.9"/><circle cx="924.1" cy="387.4" r="3.9"/><circle cx="1058.3" cy="228.0" r="3.9"/><circle cx="864.3" cy="175.8" r="3.9"/><circle cx="980.4" cy="231.4" r="3.9"/><circle cx="1019.2" cy="270.2" r="3.9"/><circle cx="1133.9" cy="277.9" r="3.9"/><circle cx="1106.3" cy="431.5" r="3.9"/><circle cx="946.6" cy="450.8" r="3.9"/><circle cx="999.5" cy="224.2" r="3.9"/><circle cx="1130.1" cy="374.3" r="3.9"/><circle cx="878.9" cy="334.4" r="3.9"/><circle cx="1117.9" cy="426.5" r="3.9"/><circle cx="1051.8" cy="352.7" r="3.9"/><circle cx="871.8" cy="350.9" r="3.9"/><circle cx="978.7" cy="339.5" r="3.9"/><circle cx="853.1" cy="341.3" r="3.9"/><circle cx="1010.6" cy="262.9" r="3.9"/><circle cx="944.7" cy="369.4" r="3.9"/><circle cx="890.3" cy="366.1" r="3.9"/><circle cx="1076.1" cy="232.7" r="3.9"/><circle cx="847.4" cy="324.9" r="3.9"/><circle cx="816.0" cy="378.3" r="3.9"/><circle cx="1027.6" cy="280.2" r="3.9"/><circle cx="882.8" cy="230.3" r="3.9"/><circle cx="945.0" cy="202.0" r="3.9"/><circle cx="878.9" cy="328.9" r="3.9"/><circle cx="976.2" cy="450.9" r="3.9"/><circle cx="1074.3" cy="355.9" r="3.9"/><circle cx="813.3" cy="248.8" r="3.9"/><circle cx="945.2" cy="226.4" r="3.9"/><circle cx="1047.4" cy="438.5" r="3.9"/><circle cx="903.8" cy="149.3" r="3.9"/><circle cx="1019.8" cy="327.3" r="3.9"/><circle cx="1017.6" cy="369.3" r="3.9"/><circle cx="810.5" cy="327.0" r="3.9"/><circle cx="1050.1" cy="359.3" r="3.9"/><circle cx="859.1" cy="323.5" r="3.9"/><circle cx="1058.5" cy="409.1" r="3.9"/><circle cx="1051.5" cy="351.5" r="3.9"/><circle cx="1050.7" cy="155.0" r="3.9"/><circle cx="993.4" cy="159.2" r="3.9"/><circle cx="894.0" cy="372.8" r="3.9"/><circle cx="1007.2" cy="165.0" r="3.9"/><circle cx="826.1" cy="280.4" r="3.9"/><circle cx="829.2" cy="240.0" r="3.9"/><circle cx="877.2" cy="222.7" r="3.9"/><circle cx="1065.0" cy="248.1" r="3.9"/><circle cx="916.5" cy="296.8" r="3.9"/><circle cx="1089.9" cy="181.3" r="3.9"/><circle cx="1103.9" cy="347.0" r="3.9"/><circle cx="887.9" cy="185.6" r="3.9"/><circle cx="1073.8" cy="406.1" r="3.9"/><circle cx="1107.9" cy="259.7" r="3.9"/><circle cx="1036.2" cy="383.1" r="3.9"/><circle cx="848.4" cy="395.8" r="3.9"/><circle cx="1070.0" cy="229.9" r="3.9"/><circle cx="936.6" cy="397.5" r="3.9"/><circle cx="1064.5" cy="232.0" r="3.9"/><circle cx="805.5" cy="306.0" r="3.9"/><circle cx="1082.5" cy="353.2" r="3.9"/><circle cx="1017.2" cy="240.1" r="3.9"/><circle cx="1119.3" cy="272.7" r="3.9"/><circle cx="914.6" cy="206.6" r="3.9"/><circle cx="965.7" cy="333.6" r="3.9"/><circle cx="988.0" cy="314.9" r="3.9"/><circle cx="927.0" cy="422.2" r="3.9"/><circle cx="1019.6" cy="193.6" r="3.9"/><circle cx="892.7" cy="251.3" r="3.9"/><circle cx="1010.4" cy="442.3" r="3.9"/><circle cx="831.8" cy="384.5" r="3.9"/><circle cx="876.5" cy="203.3" r="3.9"/><circle cx="963.3" cy="343.5" r="3.9"/><circle cx="818.4" cy="273.1" r="3.9"/><circle cx="1010.4" cy="308.0" r="3.9"/><circle cx="1073.2" cy="353.6" r="3.9"/><circle cx="937.2" cy="331.0" r="3.9"/><circle cx="984.3" cy="250.8" r="3.9"/><circle cx="874.6" cy="197.9" r="3.9"/><circle cx="833.8" cy="386.8" r="3.9"/><circle cx="853.3" cy="289.7" r="3.9"/><circle cx="825.1" cy="316.4" r="3.9"/><circle cx="986.8" cy="145.0" r="3.9"/><circle cx="847.1" cy="372.4" r="3.9"/><circle cx="951.3" cy="409.7" r="3.9"/><circle cx="1122.7" cy="362.2" r="3.9"/><circle cx="848.2" cy="248.6" r="3.9"/><circle cx="835.6" cy="356.1" r="3.9"/><circle cx="920.7" cy="425.1" r="3.9"/><circle cx="1012.6" cy="292.5" r="3.9"/><circle cx="905.7" cy="155.7" r="3.9"/><circle cx="976.8" cy="239.9" r="3.9"/><circle cx="853.3" cy="377.5" r="3.9"/><circle cx="811.8" cy="296.6" r="3.9"/><circle cx="854.1" cy="356.4" r="3.9"/><circle cx="1079.2" cy="354.8" r="3.9"/><circle cx="987.0" cy="452.5" r="3.9"/><circle cx="815.1" cy="205.5" r="3.9"/><circle cx="990.1" cy="146.9" r="3.9"/><circle cx="955.2" cy="307.4" r="3.9"/><circle cx="827.3" cy="399.0" r="3.9"/><circle cx="1056.5" cy="263.3" r="3.9"/><circle cx="1070.1" cy="206.7" r="3.9"/><circle cx="914.1" cy="377.5" r="3.9"/><circle cx="1098.2" cy="326.4" r="3.9"/><circle cx="895.1" cy="246.3" r="3.9"/><circle cx="904.8" cy="318.6" r="3.9"/><circle cx="858.8" cy="386.8" r="3.9"/><circle cx="893.1" cy="397.4" r="3.9"/><circle cx="961.9" cy="344.2" r="3.9"/><circle cx="1047.5" cy="336.5" r="3.9"/><circle cx="880.1" cy="431.9" r="3.9"/><circle cx="868.5" cy="289.4" r="3.9"/><circle cx="1088.9" cy="406.1" r="3.9"/><circle cx="824.4" cy="395.5" r="3.9"/><circle cx="1013.0" cy="463.8" r="3.9"/><circle cx="938.9" cy="333.5" r="3.9"/><circle cx="1094.0" cy="222.6" r="3.9"/><circle cx="1132.3" cy="336.8" r="3.9"/><circle cx="1057.6" cy="280.4" r="3.9"/><circle cx="994.2" cy="282.3" r="3.9"/><circle cx="1122.3" cy="248.6" r="3.9"/><circle cx="1039.6" cy="269.0" r="3.9"/><circle cx="1039.2" cy="169.2" r="3.9"/><circle cx="1059.8" cy="173.8" r="3.9"/><circle cx="1059.2" cy="440.9" r="3.9"/><circle cx="974.1" cy="349.8" r="3.9"/><circle cx="957.3" cy="351.9" r="3.9"/><circle cx="790.1" cy="310.6" r="3.9"/><circle cx="934.6" cy="272.3" r="3.9"/><circle cx="849.3" cy="415.1" r="3.9"/><circle cx="989.5" cy="236.6" r="3.9"/><circle cx="963.3" cy="314.4" r="3.9"/><circle cx="1019.8" cy="436.4" r="3.9"/><circle cx="1004.8" cy="232.2" r="3.9"/><circle cx="1129.9" cy="362.2" r="3.9"/><circle cx="1098.1" cy="309.3" r="3.9"/><circle cx="947.0" cy="469.6" r="3.9"/><circle cx="980.5" cy="427.9" r="3.9"/><circle cx="1112.9" cy="412.9" r="3.9"/><circle cx="840.5" cy="207.4" r="3.9"/><circle cx="955.7" cy="304.4" r="3.9"/><circle cx="1008.2" cy="252.0" r="3.9"/><circle cx="1067.2" cy="192.6" r="3.9"/><circle cx="1005.9" cy="399.8" r="3.9"/><circle cx="987.2" cy="371.8" r="3.9"/><circle cx="1092.1" cy="210.7" r="3.9"/><circle cx="864.0" cy="206.9" r="3.9"/><circle cx="804.1" cy="308.5" r="3.9"/><circle cx="872.7" cy="353.7" r="3.9"/><circle cx="830.1" cy="365.2" r="3.9"/><circle cx="1093.5" cy="396.5" r="3.9"/><circle cx="988.2" cy="396.1" r="3.9"/><circle cx="994.0" cy="171.5" r="3.9"/><circle cx="891.0" cy="378.6" r="3.9"/><circle cx="1081.6" cy="269.9" r="3.9"/><circle cx="971.9" cy="253.2" r="3.9"/><circle cx="845.7" cy="354.2" r="3.9"/><circle cx="1016.7" cy="366.8" r="3.9"/><circle cx="839.5" cy="249.6" r="3.9"/><circle cx="938.9" cy="461.5" r="3.9"/><circle cx="1048.1" cy="347.0" r="3.9"/><circle cx="827.1" cy="204.2" r="3.9"/><circle cx="915.7" cy="366.4" r="3.9"/><circle cx="964.9" cy="199.7" r="3.9"/><circle cx="1050.0" cy="367.4" r="3.9"/><circle cx="1129.1" cy="157.7" r="3.9"/><circle cx="909.7" cy="242.4" r="3.9"/><circle cx="845.6" cy="266.4" r="3.9"/><circle cx="1112.0" cy="278.0" r="3.9"/><circle cx="975.1" cy="362.0" r="3.9"/><circle cx="812.9" cy="300.0" r="3.9"/><circle cx="1072.4" cy="431.8" r="3.9"/><circle cx="813.3" cy="261.3" r="3.9"/><circle cx="865.7" cy="378.1" r="3.9"/><circle cx="921.8" cy="381.4" r="3.9"/><circle cx="1087.8" cy="337.1" r="3.9"/><circle cx="989.7" cy="286.7" r="3.9"/><circle cx="976.9" cy="436.9" r="3.9"/><circle cx="999.2" cy="458.9" r="3.9"/><circle cx="914.1" cy="440.2" r="3.9"/><circle cx="856.5" cy="373.6" r="3.9"/><circle cx="982.9" cy="419.7" r="3.9"/><circle cx="1039.8" cy="451.1" r="3.9"/><circle cx="1001.9" cy="431.0" r="3.9"/><circle cx="865.4" cy="200.1" r="3.9"/><circle cx="980.2" cy="152.3" r="3.9"/><circle cx="1019.1" cy="265.0" r="3.9"/><circle cx="984.0" cy="331.6" r="3.9"/><circle cx="978.5" cy="386.2" r="3.9"/><circle cx="945.5" cy="336.6" r="3.9"/><circle cx="983.9" cy="417.8" r="3.9"/><circle cx="859.5" cy="275.5" r="3.9"/><circle cx="964.0" cy="308.9" r="3.9"/><circle cx="851.0" cy="165.7" r="3.9"/><circle cx="1096.0" cy="185.0" r="3.9"/><circle cx="963.8" cy="345.6" r="3.9"/><circle cx="1014.8" cy="408.3" r="3.9"/><circle cx="997.8" cy="229.6" r="3.9"/><circle cx="1080.0" cy="189.2" r="3.9"/><circle cx="942.3" cy="282.0" r="3.9"/><circle cx="1009.9" cy="277.2" r="3.9"/><circle cx="938.2" cy="153.6" r="3.9"/><circle cx="938.1" cy="200.7" r="3.9"/><circle cx="1121.6" cy="195.7" r="3.9"/><circle cx="952.3" cy="307.4" r="3.9"/><circle cx="854.8" cy="391.4" r="3.9"/><circle cx="891.6" cy="419.5" r="3.9"/><circle cx="966.9" cy="231.3" r="3.9"/><circle cx="855.6" cy="192.7" r="3.9"/><circle cx="1026.6" cy="186.6" r="3.9"/><circle cx="880.2" cy="235.3" r="3.9"/><circle cx="857.0" cy="218.3" r="3.9"/><circle cx="1123.1" cy="301.5" r="3.9"/><circle cx="1060.2" cy="177.6" r="3.9"/><circle cx="872.5" cy="288.0" r="3.9"/><circle cx="989.7" cy="427.1" r="3.9"/><circle cx="1071.9" cy="301.9" r="3.9"/><circle cx="1124.1" cy="152.9" r="3.9"/><circle cx="983.5" cy="285.1" r="3.9"/><circle cx="1102.5" cy="315.0" r="3.9"/><circle cx="882.1" cy="367.4" r="3.9"/><circle cx="788.5" cy="283.5" r="3.9"/><circle cx="1025.2" cy="300.2" r="3.9"/><circle cx="1118.1" cy="237.0" r="3.9"/><circle cx="1114.7" cy="421.3" r="3.9"/><circle cx="900.9" cy="176.6" r="3.9"/><circle cx="1017.6" cy="230.6" r="3.9"/><circle cx="971.2" cy="157.6" r="3.9"/><circle cx="880.4" cy="310.2" r="3.9"/><circle cx="1054.4" cy="349.4" r="3.9"/><circle cx="1024.3" cy="377.8" r="3.9"/><circle cx="821.3" cy="322.8" r="3.9"/><circle cx="815.1" cy="217.6" r="3.9"/><circle cx="799.3" cy="299.9" r="3.9"/><circle cx="932.9" cy="253.6" r="3.9"/><circle cx="979.7" cy="427.4" r="3.9"/><circle cx="948.9" cy="380.5" r="3.9"/><circle cx="1031.3" cy="210.9" r="3.9"/><circle cx="1041.7" cy="222.1" r="3.9"/><circle cx="1076.8" cy="188.6" r="3.9"/><circle cx="874.4" cy="322.4" r="3.9"/><circle cx="1129.6" cy="249.3" r="3.9"/><circle cx="987.6" cy="292.7" r="3.9"/><circle cx="936.5" cy="304.4" r="3.9"/><circle cx="958.8" cy="318.0" r="3.9"/><circle cx="937.8" cy="189.9" r="3.9"/><circle cx="923.6" cy="156.5" r="3.9"/><circle cx="987.2" cy="423.4" r="3.9"/><circle cx="1060.3" cy="364.1" r="3.9"/><circle cx="1134.0" cy="273.2" r="3.9"/><circle cx="802.9" cy="312.1" r="3.9"/><circle cx="851.0" cy="234.8" r="3.9"/><circle cx="1005.9" cy="208.3" r="3.9"/><circle cx="1129.6" cy="341.6" r="3.9"/><circle cx="874.4" cy="175.6" r="3.9"/><circle cx="901.7" cy="239.3" r="3.9"/><circle cx="1128.7" cy="295.6" r="3.9"/><circle cx="939.0" cy="315.7" r="3.9"/><circle cx="1121.8" cy="241.1" r="3.9"/><circle cx="1078.5" cy="309.2" r="3.9"/><circle cx="897.6" cy="280.6" r="3.9"/><circle cx="1017.3" cy="159.9" r="3.9"/><circle cx="1014.0" cy="237.8" r="3.9"/><circle cx="901.9" cy="417.1" r="3.9"/><circle cx="1072.9" cy="349.3" r="3.9"/><circle cx="1054.6" cy="234.5" r="3.9"/><circle cx="926.3" cy="328.5" r="3.9"/><circle cx="882.4" cy="228.4" r="3.9"/><circle cx="955.4" cy="194.2" r="3.9"/><circle cx="977.9" cy="169.6" r="3.9"/><circle cx="909.2" cy="350.4" r="3.9"/><circle cx="948.4" cy="395.7" r="3.9"/><circle cx="972.6" cy="260.1" r="3.9"/><circle cx="1108.5" cy="194.1" r="3.9"/><circle cx="1056.8" cy="422.9" r="3.9"/><circle cx="927.5" cy="336.2" r="3.9"/><circle cx="813.9" cy="395.3" r="3.9"/><circle cx="885.9" cy="250.8" r="3.9"/><circle cx="1052.0" cy="421.6" r="3.9"/><circle cx="900.7" cy="444.2" r="3.9"/><circle cx="867.3" cy="211.5" r="3.9"/><circle cx="817.9" cy="382.0" r="3.9"/><circle cx="984.7" cy="358.4" r="3.9"/><circle cx="1069.7" cy="197.6" r="3.9"/><circle cx="925.1" cy="399.2" r="3.9"/><circle cx="1103.2" cy="436.4" r="3.9"/><circle cx="864.5" cy="262.5" r="3.9"/><circle cx="923.4" cy="293.3" r="3.9"/><circle cx="858.4" cy="325.2" r="3.9"/><circle cx="1077.4" cy="317.0" r="3.9"/><circle cx="1036.6" cy="190.8" r="3.9"/><circle cx="904.7" cy="411.1" r="3.9"/><circle cx="1062.1" cy="402.2" r="3.9"/><circle cx="1001.7" cy="402.3" r="3.9"/><circle cx="872.7" cy="319.5" r="3.9"/><circle cx="877.5" cy="250.7" r="3.9"/><circle cx="792.5" cy="291.6" r="3.9"/><circle cx="1100.0" cy="439.3" r="3.9"/><circle cx="1038.6" cy="156.3" r="3.9"/><circle cx="894.0" cy="348.7" r="3.9"/><circle cx="875.9" cy="313.3" r="3.9"/><circle cx="827.1" cy="378.8" r="3.9"/><circle cx="1131.6" cy="201.9" r="3.9"/><circle cx="1085.0" cy="428.5" r="3.9"/><circle cx="1025.0" cy="306.5" r="3.9"/><circle cx="1025.7" cy="252.9" r="3.9"/><circle cx="897.1" cy="210.9" r="3.9"/><circle cx="1080.6" cy="226.1" r="3.9"/><circle cx="1021.4" cy="360.1" r="3.9"/><circle cx="959.6" cy="221.8" r="3.9"/><circle cx="931.1" cy="302.9" r="3.9"/><circle cx="848.1" cy="225.9" r="3.9"/><circle cx="912.9" cy="219.1" r="3.9"/><circle cx="1094.8" cy="428.2" r="3.9"/><circle cx="930.2" cy="424.3" r="3.9"/><circle cx="1006.4" cy="237.6" r="3.9"/><circle cx="853.8" cy="333.7" r="3.9"/><circle cx="989.9" cy="227.1" r="3.9"/><circle cx="1133.1" cy="177.8" r="3.9"/><circle cx="937.1" cy="271.6" r="3.9"/><circle cx="978.7" cy="234.0" r="3.9"/><circle cx="1127.1" cy="218.2" r="3.9"/><circle cx="1038.3" cy="385.5" r="3.9"/><circle cx="914.0" cy="229.8" r="3.9"/><circle cx="1054.7" cy="365.0" r="3.9"/><circle cx="1030.9" cy="169.8" r="3.9"/><circle cx="1106.0" cy="429.9" r="3.9"/><circle cx="1055.0" cy="426.6" r="3.9"/><circle cx="931.5" cy="272.1" r="3.9"/><circle cx="1046.9" cy="258.7" r="3.9"/><circle cx="969.8" cy="394.2" r="3.9"/><circle cx="922.9" cy="268.6" r="3.9"/><circle cx="1021.9" cy="258.9" r="3.9"/><circle cx="1049.9" cy="283.8" r="3.9"/><circle cx="1085.0" cy="182.2" r="3.9"/><circle cx="847.5" cy="255.5" r="3.9"/><circle cx="1064.7" cy="202.8" r="3.9"/><circle cx="1124.7" cy="325.5" r="3.9"/><circle cx="1024.9" cy="320.9" r="3.9"/><circle cx="1032.1" cy="212.2" r="3.9"/><circle cx="814.7" cy="258.6" r="3.9"/><circle cx="863.0" cy="216.5" r="3.9"/><circle cx="1075.0" cy="375.3" r="3.9"/><circle cx="1116.6" cy="155.2" r="3.9"/><circle cx="992.3" cy="418.7" r="3.9"/><circle cx="1044.1" cy="272.0" r="3.9"/><circle cx="907.4" cy="323.8" r="3.9"/><circle cx="1039.1" cy="338.7" r="3.9"/><circle cx="1018.1" cy="373.9" r="3.9"/><circle cx="1043.5" cy="363.9" r="3.9"/><circle cx="953.0" cy="213.3" r="3.9"/><circle cx="1083.9" cy="334.8" r="3.9"/><circle cx="854.1" cy="237.3" r="3.9"/><circle cx="907.3" cy="441.6" r="3.9"/><circle cx="808.7" cy="311.2" r="3.9"/><circle cx="991.6" cy="289.6" r="3.9"/><circle cx="824.9" cy="336.7" r="3.9"/><circle cx="816.2" cy="214.7" r="3.9"/><circle cx="916.0" cy="225.1" r="3.9"/><circle cx="850.5" cy="399.4" r="3.9"/><circle cx="985.8" cy="220.5" r="3.9"/><circle cx="970.0" cy="169.7" r="3.9"/><circle cx="1032.1" cy="408.2" r="3.9"/><circle cx="1046.4" cy="318.0" r="3.9"/><circle cx="993.1" cy="153.7" r="3.9"/><circle cx="908.5" cy="243.6" r="3.9"/><circle cx="912.3" cy="287.0" r="3.9"/><circle cx="851.1" cy="385.0" r="3.9"/><circle cx="1113.5" cy="301.9" r="3.9"/><circle cx="1020.9" cy="457.2" r="3.9"/><circle cx="1116.5" cy="429.0" r="3.9"/><circle cx="1053.4" cy="368.5" r="3.9"/><circle cx="885.3" cy="416.6" r="3.9"/><circle cx="1112.8" cy="414.7" r="3.9"/><circle cx="1031.0" cy="256.0" r="3.9"/><circle cx="898.3" cy="152.5" r="3.9"/><circle cx="824.9" cy="231.1" r="3.9"/><circle cx="960.9" cy="271.5" r="3.9"/><circle cx="1004.6" cy="299.5" r="3.9"/><circle cx="1003.1" cy="236.4" r="3.9"/><circle cx="866.6" cy="409.7" r="3.9"/><circle cx="1063.6" cy="363.2" r="3.9"/><circle cx="793.4" cy="271.4" r="3.9"/><circle cx="934.7" cy="456.6" r="3.9"/><circle cx="1085.8" cy="215.6" r="3.9"/><circle cx="790.3" cy="336.3" r="3.9"/><circle cx="898.0" cy="163.5" r="3.9"/><circle cx="845.3" cy="226.4" r="3.9"/><circle cx="917.5" cy="442.8" r="3.9"/><circle cx="948.9" cy="420.8" r="3.9"/><circle cx="964.4" cy="438.4" r="3.9"/><circle cx="1044.2" cy="335.4" r="3.9"/><circle cx="1093.9" cy="341.8" r="3.9"/><circle cx="1102.7" cy="234.3" r="3.9"/><circle cx="981.2" cy="456.2" r="3.9"/><circle cx="1018.7" cy="466.0" r="3.9"/><circle cx="1082.4" cy="386.0" r="3.9"/><circle cx="941.4" cy="214.3" r="3.9"/><circle cx="1040.4" cy="283.0" r="3.9"/><circle cx="923.1" cy="332.0" r="3.9"/><circle cx="1107.3" cy="214.5" r="3.9"/><circle cx="995.8" cy="359.6" r="3.9"/><circle cx="830.6" cy="251.4" r="3.9"/><circle cx="1059.3" cy="179.7" r="3.9"/><circle cx="949.6" cy="240.5" r="3.9"/><circle cx="942.8" cy="347.6" r="3.9"/><circle cx="1118.7" cy="182.8" r="3.9"/><circle cx="914.4" cy="375.6" r="3.9"/><circle cx="1128.4" cy="236.4" r="3.9"/><circle cx="875.1" cy="180.5" r="3.9"/><circle cx="1056.8" cy="149.1" r="3.9"/><circle cx="836.0" cy="216.3" r="3.9"/><circle cx="1014.7" cy="453.3" r="3.9"/><circle cx="1031.6" cy="332.0" r="3.9"/><circle cx="1015.1" cy="239.5" r="3.9"/><circle cx="849.0" cy="163.9" r="3.9"/><circle cx="1065.5" cy="201.4" r="3.9"/><circle cx="964.3" cy="216.4" r="3.9"/><circle cx="1044.2" cy="246.5" r="3.9"/><circle cx="820.4" cy="376.3" r="3.9"/><circle cx="856.2" cy="309.0" r="3.9"/><circle cx="1047.8" cy="306.2" r="3.9"/><circle cx="893.9" cy="275.4" r="3.9"/><circle cx="828.1" cy="302.0" r="3.9"/><circle cx="1024.3" cy="465.2" r="3.9"/><circle cx="1113.0" cy="287.1" r="3.9"/><circle cx="863.7" cy="238.1" r="3.9"/><circle cx="946.5" cy="272.9" r="3.9"/><circle cx="956.4" cy="178.4" r="3.9"/><circle cx="865.6" cy="294.5" r="3.9"/><circle cx="1031.3" cy="385.1" r="3.9"/><circle cx="1132.1" cy="301.6" r="3.9"/><circle cx="990.1" cy="258.2" r="3.9"/><circle cx="1062.1" cy="436.7" r="3.9"/><circle cx="969.7" cy="410.6" r="3.9"/><circle cx="1042.6" cy="420.1" r="3.9"/><circle cx="898.5" cy="187.3" r="3.9"/><circle cx="998.5" cy="426.0" r="3.9"/><circle cx="989.0" cy="376.9" r="3.9"/><circle cx="1035.0" cy="144.3" r="3.9"/><circle cx="1109.7" cy="268.5" r="3.9"/><circle cx="900.1" cy="291.2" r="3.9"/><circle cx="964.7" cy="404.5" r="3.9"/><circle cx="899.9" cy="167.4" r="3.9"/><circle cx="1020.3" cy="232.0" r="3.9"/><circle cx="1017.5" cy="140.4" r="3.9"/><circle cx="938.8" cy="359.6" r="3.9"/><circle cx="862.5" cy="202.3" r="3.9"/><circle cx="871.6" cy="185.9" r="3.9"/><circle cx="1040.6" cy="183.0" r="3.9"/><circle cx="875.8" cy="354.9" r="3.9"/><circle cx="1053.2" cy="242.6" r="3.9"/><circle cx="996.1" cy="395.9" r="3.9"/><circle cx="893.9" cy="385.4" r="3.9"/><circle cx="1015.2" cy="211.5" r="3.9"/><circle cx="943.5" cy="254.7" r="3.9"/><circle cx="1078.5" cy="264.5" r="3.9"/><circle cx="1085.4" cy="187.6" r="3.9"/><circle cx="1081.3" cy="427.1" r="3.9"/><circle cx="976.7" cy="455.7" r="3.9"/><circle cx="1029.5" cy="414.7" r="3.9"/><circle cx="952.9" cy="373.8" r="3.9"/><circle cx="1096.6" cy="434.1" r="3.9"/><circle cx="880.8" cy="354.8" r="3.9"/><circle cx="875.4" cy="218.6" r="3.9"/><circle cx="1129.5" cy="167.3" r="3.9"/><circle cx="1093.0" cy="247.9" r="3.9"/><circle cx="891.1" cy="198.2" r="3.9"/><circle cx="904.6" cy="217.8" r="3.9"/><circle cx="1051.2" cy="352.5" r="3.9"/><circle cx="975.0" cy="314.2" r="3.9"/><circle cx="868.7" cy="214.7" r="3.9"/><circle cx="1021.5" cy="252.4" r="3.9"/><circle cx="904.9" cy="435.2" r="3.9"/><circle cx="907.3" cy="328.5" r="3.9"/><circle cx="948.6" cy="287.5" r="3.9"/><circle cx="1106.2" cy="271.9" r="3.9"/><circle cx="1065.4" cy="250.5" r="3.9"/><circle cx="913.5" cy="299.2" r="3.9"/><circle cx="1006.5" cy="401.2" r="3.9"/><circle cx="954.9" cy="264.7" r="3.9"/><circle cx="911.5" cy="237.6" r="3.9"/><circle cx="1097.5" cy="381.2" r="3.9"/><circle cx="1053.8" cy="247.5" r="3.9"/><circle cx="1103.7" cy="313.2" r="3.9"/><circle cx="965.7" cy="155.8" r="3.9"/><circle cx="1133.2" cy="365.5" r="3.9"/><circle cx="1032.6" cy="173.3" r="3.9"/><circle cx="994.2" cy="362.9" r="3.9"/><circle cx="967.5" cy="346.4" r="3.9"/><circle cx="819.5" cy="258.7" r="3.9"/><circle cx="984.8" cy="321.7" r="3.9"/><circle cx="845.3" cy="193.7" r="3.9"/><circle cx="1078.8" cy="168.5" r="3.9"/><circle cx="872.0" cy="298.9" r="3.9"/><circle cx="1071.9" cy="447.5" r="3.9"/><circle cx="997.0" cy="375.2" r="3.9"/><circle cx="995.5" cy="322.0" r="3.9"/><circle cx="1056.1" cy="413.3" r="3.9"/><circle cx="826.7" cy="341.2" r="3.9"/><circle cx="1068.9" cy="220.8" r="3.9"/><circle cx="1099.3" cy="296.5" r="3.9"/><circle cx="966.7" cy="398.1" r="3.9"/><circle cx="811.8" cy="305.6" r="3.9"/><circle cx="1082.2" cy="238.6" r="3.9"/><circle cx="844.9" cy="253.6" r="3.9"/><circle cx="844.9" cy="285.8" r="3.9"/><circle cx="970.1" cy="264.3" r="3.9"/><circle cx="1129.2" cy="357.2" r="3.9"/><circle cx="822.0" cy="254.5" r="3.9"/><circle cx="1103.4" cy="145.6" r="3.9"/><circle cx="896.4" cy="406.2" r="3.9"/><circle cx="831.5" cy="242.7" r="3.9"/><circle cx="977.5" cy="383.0" r="3.9"/><circle cx="982.9" cy="436.6" r="3.9"/><circle cx="1022.5" cy="181.2" r="3.9"/><circle cx="986.6" cy="214.4" r="3.9"/><circle cx="928.7" cy="289.8" r="3.9"/><circle cx="846.8" cy="285.6" r="3.9"/><circle cx="1126.8" cy="237.7" r="3.9"/><circle cx="1039.8" cy="185.9" r="3.9"/><circle cx="1076.0" cy="401.7" r="3.9"/><circle cx="1078.7" cy="187.8" r="3.9"/><circle cx="998.1" cy="415.1" r="3.9"/><circle cx="879.7" cy="394.3" r="3.9"/><circle cx="1002.6" cy="272.7" r="3.9"/><circle cx="1121.6" cy="215.6" r="3.9"/><circle cx="1045.8" cy="231.1" r="3.9"/><circle cx="1092.1" cy="226.1" r="3.9"/><circle cx="1033.1" cy="282.1" r="3.9"/><circle cx="1089.8" cy="408.0" r="3.9"/><circle cx="1083.9" cy="350.7" r="3.9"/><circle cx="984.7" cy="442.8" r="3.9"/><circle cx="815.5" cy="378.5" r="3.9"/><circle cx="1015.6" cy="271.3" r="3.9"/><circle cx="912.2" cy="380.8" r="3.9"/><circle cx="938.4" cy="336.1" r="3.9"/><circle cx="936.0" cy="156.5" r="3.9"/><circle cx="927.2" cy="215.4" r="3.9"/><circle cx="1020.3" cy="182.6" r="3.9"/><circle cx="885.2" cy="319.2" r="3.9"/><circle cx="878.0" cy="246.8" r="3.9"/><circle cx="1022.5" cy="241.4" r="3.9"/><circle cx="879.0" cy="413.4" r="3.9"/><circle cx="1086.2" cy="194.5" r="3.9"/><circle cx="1039.5" cy="192.3" r="3.9"/><circle cx="1097.7" cy="321.2" r="3.9"/><circle cx="801.0" cy="298.8" r="3.9"/><circle cx="856.1" cy="401.1" r="3.9"/><circle cx="1106.2" cy="412.2" r="3.9"/><circle cx="960.1" cy="336.9" r="3.9"/><circle cx="925.3" cy="152.8" r="3.9"/><circle cx="1057.8" cy="395.0" r="3.9"/><circle cx="868.4" cy="409.6" r="3.9"/><circle cx="1066.7" cy="187.8" r="3.9"/><circle cx="907.4" cy="299.8" r="3.9"/><circle cx="955.2" cy="153.4" r="3.9"/><circle cx="1075.4" cy="313.9" r="3.9"/><circle cx="873.8" cy="365.0" r="3.9"/><circle cx="981.0" cy="161.7" r="3.9"/><circle cx="1019.8" cy="299.1" r="3.9"/><circle cx="985.0" cy="228.0" r="3.9"/><circle cx="1007.6" cy="298.7" r="3.9"/><circle cx="1062.4" cy="308.0" r="3.9"/><circle cx="1123.2" cy="251.4" r="3.9"/><circle cx="1128.4" cy="357.1" r="3.9"/><circle cx="863.6" cy="289.9" r="3.9"/><circle cx="1133.0" cy="417.2" r="3.9"/><circle cx="965.0" cy="402.2" r="3.9"/><circle cx="880.8" cy="201.9" r="3.9"/><circle cx="956.0" cy="285.3" r="3.9"/><circle cx="943.5" cy="217.2" r="3.9"/><circle cx="1008.7" cy="301.2" r="3.9"/><circle cx="950.9" cy="305.3" r="3.9"/><circle cx="959.5" cy="359.8" r="3.9"/><circle cx="873.6" cy="344.7" r="3.9"/><circle cx="937.2" cy="371.0" r="3.9"/><circle cx="851.1" cy="356.8" r="3.9"/><circle cx="1072.0" cy="342.7" r="3.9"/><circle cx="905.4" cy="230.0" r="3.9"/><circle cx="926.7" cy="392.7" r="3.9"/><circle cx="1073.5" cy="374.3" r="3.9"/><circle cx="912.8" cy="325.8" r="3.9"/><circle cx="991.6" cy="278.8" r="3.9"/><circle cx="937.9" cy="379.8" r="3.9"/><circle cx="1134.2" cy="278.0" r="3.9"/><circle cx="1059.4" cy="442.7" r="3.9"/><circle cx="928.5" cy="187.7" r="3.9"/><circle cx="1069.3" cy="147.4" r="3.9"/><circle cx="1092.0" cy="267.2" r="3.9"/><circle cx="1018.5" cy="265.1" r="3.9"/><circle cx="961.2" cy="312.2" r="3.9"/><circle cx="900.0" cy="259.1" r="3.9"/><circle cx="891.3" cy="365.2" r="3.9"/><circle cx="1076.1" cy="389.3" r="3.9"/><circle cx="833.0" cy="285.0" r="3.9"/><circle cx="842.0" cy="255.4" r="3.9"/><circle cx="1008.5" cy="371.5" r="3.9"/><circle cx="888.7" cy="168.2" r="3.9"/><circle cx="972.4" cy="165.7" r="3.9"/><circle cx="986.7" cy="415.0" r="3.9"/><circle cx="1112.6" cy="328.0" r="3.9"/><circle cx="1006.3" cy="266.1" r="3.9"/><circle cx="996.7" cy="379.0" r="3.9"/><circle cx="848.8" cy="262.4" r="3.9"/><circle cx="1001.2" cy="282.0" r="3.9"/><circle cx="962.0" cy="278.4" r="3.9"/><circle cx="1046.2" cy="234.5" r="3.9"/><circle cx="815.9" cy="353.8" r="3.9"/><circle cx="906.5" cy="384.6" r="3.9"/><circle cx="996.7" cy="199.2" r="3.9"/><circle cx="917.0" cy="168.1" r="3.9"/><circle cx="966.6" cy="463.6" r="3.9"/><circle cx="954.0" cy="321.9" r="3.9"/><circle cx="1106.4" cy="149.0" r="3.9"/><circle cx="985.8" cy="427.2" r="3.9"/><circle cx="1106.8" cy="245.8" r="3.9"/><circle cx="1094.2" cy="396.1" r="3.9"/><circle cx="826.3" cy="314.2" r="3.9"/><circle cx="881.2" cy="304.9" r="3.9"/><circle cx="988.7" cy="225.8" r="3.9"/><circle cx="1051.5" cy="300.5" r="3.9"/><circle cx="1070.0" cy="194.6" r="3.9"/><circle cx="801.2" cy="281.6" r="3.9"/><circle cx="1134.3" cy="278.3" r="3.9"/><circle cx="854.7" cy="304.6" r="3.9"/><circle cx="784.2" cy="303.9" r="3.9"/><circle cx="1082.1" cy="303.3" r="3.9"/><circle cx="992.6" cy="426.3" r="3.9"/><circle cx="1005.7" cy="399.8" r="3.9"/><circle cx="967.3" cy="274.1" r="3.9"/><circle cx="1134.5" cy="293.9" r="3.9"/><circle cx="1103.2" cy="270.9" r="3.9"/><circle cx="1022.2" cy="167.6" r="3.9"/><circle cx="839.4" cy="171.5" r="3.9"/><circle cx="892.2" cy="187.4" r="3.9"/><circle cx="1084.8" cy="414.3" r="3.9"/><circle cx="1034.3" cy="370.9" r="3.9"/><circle cx="850.3" cy="165.9" r="3.9"/><circle cx="1118.0" cy="424.8" r="3.9"/><circle cx="999.5" cy="441.7" r="3.9"/><circle cx="1046.5" cy="435.5" r="3.9"/><circle cx="1000.4" cy="140.4" r="3.9"/><circle cx="1045.6" cy="246.9" r="3.9"/><circle cx="984.8" cy="363.8" r="3.9"/><circle cx="912.1" cy="337.1" r="3.9"/><circle cx="1005.3" cy="302.7" r="3.9"/><circle cx="906.7" cy="250.5" r="3.9"/><circle cx="937.9" cy="230.9" r="3.9"/><circle cx="935.1" cy="169.0" r="3.9"/><circle cx="926.8" cy="222.5" r="3.9"/><circle cx="1088.6" cy="184.0" r="3.9"/><circle cx="1018.0" cy="138.4" r="3.9"/><circle cx="953.8" cy="422.6" r="3.9"/><circle cx="889.1" cy="397.8" r="3.9"/><circle cx="1133.7" cy="197.3" r="3.9"/><circle cx="1109.3" cy="165.6" r="3.9"/><circle cx="1029.4" cy="164.7" r="3.9"/><circle cx="1008.4" cy="257.3" r="3.9"/><circle cx="827.1" cy="261.8" r="3.9"/><circle cx="1118.5" cy="341.7" r="3.9"/><circle cx="1125.9" cy="403.4" r="3.9"/><circle cx="914.6" cy="306.1" r="3.9"/><circle cx="830.2" cy="355.8" r="3.9"/><circle cx="931.8" cy="313.7" r="3.9"/><circle cx="1119.1" cy="409.9" r="3.9"/><circle cx="930.4" cy="450.9" r="3.9"/><circle cx="983.3" cy="161.4" r="3.9"/><circle cx="839.1" cy="395.7" r="3.9"/><circle cx="892.9" cy="302.9" r="3.9"/><circle cx="924.3" cy="200.7" r="3.9"/><circle cx="1034.1" cy="339.0" r="3.9"/><circle cx="941.2" cy="240.3" r="3.9"/><circle cx="858.2" cy="363.4" r="3.9"/><circle cx="1125.8" cy="362.6" r="3.9"/><circle cx="1120.5" cy="364.6" r="3.9"/><circle cx="1070.4" cy="240.4" r="3.9"/><circle cx="900.7" cy="363.0" r="3.9"/><circle cx="1015.9" cy="439.3" r="3.9"/><circle cx="976.7" cy="148.6" r="3.9"/><circle cx="863.1" cy="168.6" r="3.9"/><circle cx="1109.5" cy="220.0" r="3.9"/><circle cx="950.8" cy="386.3" r="3.9"/><circle cx="1056.8" cy="228.3" r="3.9"/><circle cx="956.5" cy="411.3" r="3.9"/><circle cx="1002.8" cy="344.1" r="3.9"/><circle cx="922.5" cy="269.7" r="3.9"/><circle cx="857.8" cy="222.4" r="3.9"/><circle cx="888.1" cy="359.5" r="3.9"/><circle cx="984.1" cy="351.1" r="3.9"/><circle cx="786.9" cy="328.3" r="3.9"/><circle cx="891.0" cy="204.9" r="3.9"/><circle cx="1117.9" cy="319.3" r="3.9"/><circle cx="879.8" cy="165.0" r="3.9"/><circle cx="937.4" cy="406.9" r="3.9"/><circle cx="1088.1" cy="310.7" r="3.9"/><circle cx="844.7" cy="258.8" r="3.9"/><circle cx="1110.2" cy="145.7" r="3.9"/><circle cx="1079.9" cy="150.3" r="3.9"/><circle cx="873.6" cy="406.5" r="3.9"/><circle cx="853.3" cy="306.0" r="3.9"/><circle cx="1130.7" cy="407.7" r="3.9"/><circle cx="944.4" cy="403.4" r="3.9"/><circle cx="950.5" cy="385.4" r="3.9"/><circle cx="995.1" cy="317.0" r="3.9"/><circle cx="1004.5" cy="225.0" r="3.9"/><circle cx="885.8" cy="182.4" r="3.9"/><circle cx="861.6" cy="243.0" r="3.9"/><circle cx="920.3" cy="315.1" r="3.9"/><circle cx="914.9" cy="299.9" r="3.9"/><circle cx="886.1" cy="193.8" r="3.9"/><circle cx="1065.3" cy="340.0" r="3.9"/><circle cx="1049.8" cy="347.5" r="3.9"/><circle cx="796.6" cy="302.3" r="3.9"/><circle cx="1026.5" cy="145.0" r="3.9"/><circle cx="1089.1" cy="205.7" r="3.9"/><circle cx="1047.2" cy="213.5" r="3.9"/><circle cx="1031.8" cy="281.2" r="3.9"/><circle cx="1066.2" cy="362.8" r="3.9"/><circle cx="853.9" cy="293.5" r="3.9"/><circle cx="1096.4" cy="311.3" r="3.9"/><circle cx="840.5" cy="360.6" r="3.9"/><circle cx="915.0" cy="311.2" r="3.9"/><circle cx="990.0" cy="363.4" r="3.9"/><circle cx="837.5" cy="397.4" r="3.9"/><circle cx="1065.7" cy="165.4" r="3.9"/><circle cx="1010.7" cy="300.7" r="3.9"/><circle cx="903.9" cy="222.4" r="3.9"/><circle cx="1019.9" cy="190.0" r="3.9"/><circle cx="1114.9" cy="323.8" r="3.9"/><circle cx="801.0" cy="270.2" r="3.9"/><circle cx="914.7" cy="343.3" r="3.9"/><circle cx="1134.2" cy="423.2" r="3.9"/><circle cx="1007.6" cy="157.4" r="3.9"/><circle cx="927.9" cy="222.0" r="3.9"/><circle cx="1117.8" cy="374.4" r="3.9"/><circle cx="938.4" cy="150.6" r="3.9"/><circle cx="1067.3" cy="367.6" r="3.9"/><circle cx="926.1" cy="330.9" r="3.9"/><circle cx="986.6" cy="265.5" r="3.9"/><circle cx="1087.0" cy="219.9" r="3.9"/><circle cx="1001.7" cy="279.1" r="3.9"/><circle cx="1003.8" cy="153.0" r="3.9"/><circle cx="1097.7" cy="279.1" r="3.9"/><circle cx="916.9" cy="193.6" r="3.9"/><circle cx="1067.1" cy="429.5" r="3.9"/><circle cx="953.2" cy="254.8" r="3.9"/><circle cx="997.0" cy="427.2" r="3.9"/><circle cx="1109.9" cy="389.1" r="3.9"/><circle cx="945.1" cy="392.1" r="3.9"/><circle cx="978.9" cy="377.7" r="3.9"/><circle cx="832.4" cy="366.9" r="3.9"/><circle cx="1000.3" cy="347.0" r="3.9"/><circle cx="989.3" cy="425.7" r="3.9"/><circle cx="975.1" cy="324.8" r="3.9"/><circle cx="1134.1" cy="250.3" r="3.9"/><circle cx="918.5" cy="386.4" r="3.9"/><circle cx="875.4" cy="260.3" r="3.9"/><circle cx="1040.0" cy="294.9" r="3.9"/><circle cx="1100.7" cy="148.2" r="3.9"/><circle cx="1091.4" cy="209.8" r="3.9"/><circle cx="1096.0" cy="163.5" r="3.9"/><circle cx="816.2" cy="268.7" r="3.9"/><circle cx="957.0" cy="269.7" r="3.9"/><circle cx="910.0" cy="149.4" r="3.9"/><circle cx="1005.6" cy="422.4" r="3.9"/><circle cx="1090.9" cy="176.0" r="3.9"/><circle cx="818.2" cy="378.2" r="3.9"/><circle cx="1063.3" cy="379.5" r="3.9"/><circle cx="842.7" cy="266.3" r="3.9"/><circle cx="1103.7" cy="311.0" r="3.9"/><circle cx="1041.9" cy="350.4" r="3.9"/><circle cx="1123.5" cy="414.5" r="3.9"/><circle cx="1069.2" cy="379.3" r="3.9"/><circle cx="1073.6" cy="211.3" r="3.9"/><circle cx="1058.0" cy="334.0" r="3.9"/><circle cx="1030.8" cy="322.7" r="3.9"/><circle cx="1012.1" cy="242.5" r="3.9"/><circle cx="1047.6" cy="339.0" r="3.9"/><circle cx="943.2" cy="191.8" r="3.9"/><circle cx="873.9" cy="319.8" r="3.9"/><circle cx="943.3" cy="285.7" r="3.9"/><circle cx="1006.8" cy="143.7" r="3.9"/><circle cx="844.9" cy="212.8" r="3.9"/><circle cx="786.4" cy="277.9" r="3.9"/><circle cx="861.3" cy="280.9" r="3.9"/><circle cx="998.0" cy="205.2" r="3.9"/><circle cx="819.8" cy="254.5" r="3.9"/><circle cx="1020.4" cy="177.0" r="3.9"/><circle cx="994.1" cy="284.8" r="3.9"/><circle cx="1107.2" cy="269.2" r="3.9"/><circle cx="1071.5" cy="242.3" r="3.9"/><circle cx="956.3" cy="451.2" r="3.9"/><circle cx="1070.2" cy="353.0" r="3.9"/><circle cx="941.8" cy="312.4" r="3.9"/><circle cx="1082.3" cy="208.9" r="3.9"/><circle cx="912.4" cy="388.0" r="3.9"/><circle cx="893.5" cy="165.9" r="3.9"/><circle cx="842.9" cy="210.5" r="3.9"/><circle cx="874.9" cy="360.9" r="3.9"/><circle cx="960.9" cy="296.7" r="3.9"/><circle cx="870.2" cy="344.1" r="3.9"/><circle cx="995.0" cy="411.2" r="3.9"/><circle cx="1090.0" cy="304.3" r="3.9"/><circle cx="1031.4" cy="205.7" r="3.9"/><circle cx="1044.5" cy="205.7" r="3.9"/><circle cx="1030.4" cy="258.0" r="3.9"/><circle cx="957.1" cy="383.3" r="3.9"/><circle cx="1055.2" cy="150.9" r="3.9"/><circle cx="826.3" cy="378.6" r="3.9"/><circle cx="875.0" cy="327.8" r="3.9"/><circle cx="1076.9" cy="171.1" r="3.9"/><circle cx="1058.6" cy="289.4" r="3.9"/><circle cx="1025.5" cy="420.8" r="3.9"/><circle cx="869.0" cy="284.4" r="3.9"/><circle cx="869.8" cy="369.0" r="3.9"/><circle cx="941.7" cy="143.4" r="3.9"/><circle cx="907.3" cy="252.1" r="3.9"/><circle cx="1120.8" cy="414.5" r="3.9"/><circle cx="1017.2" cy="287.7" r="3.9"/><circle cx="995.5" cy="252.0" r="3.9"/><circle cx="820.5" cy="403.7" r="3.9"/><circle cx="873.8" cy="391.7" r="3.9"/><circle cx="917.3" cy="443.5" r="3.9"/><circle cx="1119.8" cy="251.6" r="3.9"/><circle cx="823.8" cy="274.8" r="3.9"/><circle cx="834.2" cy="244.6" r="3.9"/><circle cx="1120.2" cy="283.2" r="3.9"/><circle cx="1095.3" cy="303.1" r="3.9"/><circle cx="1046.5" cy="400.8" r="3.9"/><circle cx="1003.7" cy="139.3" r="3.9"/><circle cx="1063.4" cy="347.4" r="3.9"/><circle cx="942.5" cy="401.7" r="3.9"/><circle cx="1124.2" cy="377.7" r="3.9"/><circle cx="985.2" cy="232.5" r="3.9"/><circle cx="900.5" cy="166.8" r="3.9"/><circle cx="832.4" cy="321.2" r="3.9"/><circle cx="823.9" cy="363.5" r="3.9"/><circle cx="1005.0" cy="240.4" r="3.9"/><circle cx="1024.9" cy="205.8" r="3.9"/><circle cx="948.2" cy="353.0" r="3.9"/><circle cx="958.0" cy="376.4" r="3.9"/><circle cx="1103.6" cy="365.6" r="3.9"/><circle cx="1088.1" cy="398.2" r="3.9"/><circle cx="1059.5" cy="443.2" r="3.9"/><circle cx="1026.8" cy="432.2" r="3.9"/><circle cx="947.1" cy="398.4" r="3.9"/><circle cx="833.3" cy="296.4" r="3.9"/><circle cx="840.8" cy="401.1" r="3.9"/><circle cx="1008.4" cy="460.5" r="3.9"/><circle cx="1093.4" cy="337.9" r="3.9"/><circle cx="1091.8" cy="376.1" r="3.9"/><circle cx="1055.1" cy="432.7" r="3.9"/><circle cx="1126.9" cy="315.9" r="3.9"/><circle cx="950.9" cy="345.2" r="3.9"/><circle cx="822.7" cy="365.7" r="3.9"/><circle cx="820.4" cy="314.2" r="3.9"/><circle cx="1128.3" cy="259.0" r="3.9"/><circle cx="802.8" cy="299.3" r="3.9"/><circle cx="1088.4" cy="316.3" r="3.9"/><circle cx="1116.5" cy="374.9" r="3.9"/><circle cx="1125.3" cy="288.5" r="3.9"/><circle cx="845.1" cy="172.8" r="3.9"/><circle cx="911.8" cy="200.3" r="3.9"/><circle cx="977.1" cy="169.9" r="3.9"/><circle cx="937.4" cy="391.4" r="3.9"/><circle cx="831.7" cy="253.2" r="3.9"/><circle cx="942.2" cy="433.9" r="3.9"/><circle cx="823.3" cy="217.5" r="3.9"/><circle cx="980.1" cy="361.2" r="3.9"/><circle cx="892.5" cy="247.6" r="3.9"/><circle cx="999.3" cy="140.2" r="3.9"/><circle cx="1025.9" cy="413.2" r="3.9"/><circle cx="989.0" cy="329.0" r="3.9"/><circle cx="919.4" cy="249.5" r="3.9"/><circle cx="908.7" cy="410.7" r="3.9"/><circle cx="954.9" cy="219.8" r="3.9"/><circle cx="871.4" cy="404.3" r="3.9"/><circle cx="961.0" cy="213.0" r="3.9"/><circle cx="1025.4" cy="366.6" r="3.9"/><circle cx="1015.9" cy="332.4" r="3.9"/><circle cx="954.8" cy="195.2" r="3.9"/><circle cx="930.9" cy="249.3" r="3.9"/><circle cx="1054.1" cy="433.8" r="3.9"/><circle cx="1107.2" cy="186.9" r="3.9"/><circle cx="913.7" cy="210.3" r="3.9"/><circle cx="996.8" cy="459.3" r="3.9"/><circle cx="889.8" cy="171.1" r="3.9"/><circle cx="1091.0" cy="300.2" r="3.9"/><circle cx="989.5" cy="341.5" r="3.9"/><circle cx="1124.6" cy="404.7" r="3.9"/><circle cx="1029.3" cy="220.9" r="3.9"/><circle cx="1046.9" cy="340.1" r="3.9"/><circle cx="1115.9" cy="366.4" r="3.9"/><circle cx="869.0" cy="207.7" r="3.9"/><circle cx="975.2" cy="447.1" r="3.9"/><circle cx="845.0" cy="392.7" r="3.9"/><circle cx="957.5" cy="423.0" r="3.9"/><circle cx="849.8" cy="331.5" r="3.9"/><circle cx="1089.9" cy="430.4" r="3.9"/><circle cx="836.4" cy="284.6" r="3.9"/><circle cx="1132.8" cy="441.7" r="3.9"/><circle cx="932.8" cy="451.1" r="3.9"/><circle cx="1009.2" cy="406.2" r="3.9"/><circle cx="1079.0" cy="235.6" r="3.9"/><circle cx="1121.1" cy="275.9" r="3.9"/><circle cx="886.7" cy="180.7" r="3.9"/><circle cx="939.0" cy="282.5" r="3.9"/><circle cx="1048.1" cy="357.1" r="3.9"/><circle cx="838.6" cy="167.0" r="3.9"/><circle cx="917.4" cy="310.1" r="3.9"/><circle cx="954.6" cy="326.8" r="3.9"/><circle cx="1027.6" cy="317.3" r="3.9"/><circle cx="891.7" cy="380.3" r="3.9"/><circle cx="1063.3" cy="418.2" r="3.9"/><circle cx="908.6" cy="290.2" r="3.9"/><circle cx="1039.9" cy="421.3" r="3.9"/><circle cx="856.2" cy="398.8" r="3.9"/><circle cx="1002.7" cy="197.0" r="3.9"/><circle cx="937.8" cy="283.2" r="3.9"/><circle cx="1096.9" cy="145.8" r="3.9"/><circle cx="878.7" cy="155.7" r="3.9"/><circle cx="1081.0" cy="173.3" r="3.9"/><circle cx="1055.8" cy="354.7" r="3.9"/><circle cx="827.0" cy="273.6" r="3.9"/><circle cx="1084.9" cy="390.8" r="3.9"/><circle cx="846.9" cy="402.8" r="3.9"/><circle cx="870.2" cy="412.4" r="3.9"/><circle cx="914.6" cy="343.2" r="3.9"/><circle cx="932.4" cy="457.3" r="3.9"/><circle cx="1002.8" cy="407.2" r="3.9"/><circle cx="1114.9" cy="325.2" r="3.9"/><circle cx="1050.6" cy="177.4" r="3.9"/><circle cx="1007.6" cy="275.3" r="3.9"/><circle cx="907.8" cy="430.6" r="3.9"/><circle cx="813.5" cy="308.4" r="3.9"/><circle cx="959.0" cy="364.5" r="3.9"/><circle cx="1068.0" cy="195.4" r="3.9"/><circle cx="850.8" cy="305.1" r="3.9"/><circle cx="997.3" cy="349.3" r="3.9"/><circle cx="1020.3" cy="323.4" r="3.9"/><circle cx="1030.1" cy="197.3" r="3.9"/><circle cx="805.5" cy="263.9" r="3.9"/><circle cx="1113.3" cy="185.0" r="3.9"/><circle cx="985.3" cy="364.7" r="3.9"/><circle cx="825.2" cy="221.5" r="3.9"/><circle cx="912.5" cy="416.2" r="3.9"/><circle cx="978.8" cy="220.7" r="3.9"/><circle cx="831.5" cy="274.1" r="3.9"/><circle cx="947.4" cy="296.4" r="3.9"/><circle cx="866.1" cy="246.4" r="3.9"/><circle cx="1037.7" cy="312.3" r="3.9"/><circle cx="868.6" cy="266.9" r="3.9"/><circle cx="948.8" cy="200.7" r="3.9"/><circle cx="1086.4" cy="284.4" r="3.9"/><circle cx="854.4" cy="165.8" r="3.9"/><circle cx="826.3" cy="339.1" r="3.9"/><circle cx="1116.0" cy="162.0" r="3.9"/><circle cx="1045.3" cy="281.3" r="3.9"/><circle cx="1008.3" cy="441.4" r="3.9"/><circle cx="822.1" cy="369.8" r="3.9"/><circle cx="950.3" cy="282.9" r="3.9"/><circle cx="969.0" cy="431.3" r="3.9"/><circle cx="981.0" cy="170.6" r="3.9"/><circle cx="1091.5" cy="413.1" r="3.9"/><circle cx="890.1" cy="418.8" r="3.9"/><circle cx="982.1" cy="459.3" r="3.9"/><circle cx="835.9" cy="306.5" r="3.9"/><circle cx="839.6" cy="196.9" r="3.9"/><circle cx="868.8" cy="294.2" r="3.9"/><circle cx="937.2" cy="340.0" r="3.9"/><circle cx="1009.4" cy="443.0" r="3.9"/><circle cx="888.2" cy="224.5" r="3.9"/><circle cx="901.6" cy="420.1" r="3.9"/><circle cx="1014.7" cy="293.1" r="3.9"/><circle cx="914.3" cy="234.0" r="3.9"/><circle cx="808.7" cy="299.2" r="3.9"/><circle cx="1134.4" cy="395.3" r="3.9"/><circle cx="832.2" cy="359.9" r="3.9"/><circle cx="1122.0" cy="214.2" r="3.9"/><circle cx="887.0" cy="243.4" r="3.9"/><circle cx="927.3" cy="406.7" r="3.9"/><circle cx="1019.9" cy="180.0" r="3.9"/><circle cx="889.1" cy="173.5" r="3.9"/><circle cx="974.4" cy="151.9" r="3.9"/><circle cx="979.2" cy="455.4" r="3.9"/><circle cx="1132.8" cy="325.6" r="3.9"/><circle cx="817.7" cy="322.8" r="3.9"/><circle cx="860.1" cy="175.2" r="3.9"/><circle cx="1058.3" cy="182.8" r="3.9"/><circle cx="829.1" cy="228.2" r="3.9"/><circle cx="989.9" cy="154.6" r="3.9"/><circle cx="1027.7" cy="331.9" r="3.9"/><circle cx="1049.5" cy="330.5" r="3.9"/><circle cx="1078.8" cy="353.6" r="3.9"/><circle cx="967.7" cy="208.4" r="3.9"/><circle cx="967.1" cy="247.0" r="3.9"/><circle cx="874.1" cy="216.6" r="3.9"/><circle cx="954.1" cy="166.7" r="3.9"/><circle cx="931.6" cy="411.8" r="3.9"/><circle cx="863.9" cy="276.6" r="3.9"/><circle cx="995.3" cy="222.1" r="3.9"/><circle cx="934.0" cy="180.6" r="3.9"/><circle cx="875.1" cy="215.4" r="3.9"/><circle cx="1069.8" cy="295.3" r="3.9"/><circle cx="893.6" cy="231.0" r="3.9"/><circle cx="898.4" cy="341.8" r="3.9"/><circle cx="909.4" cy="204.2" r="3.9"/><circle cx="940.4" cy="196.3" r="3.9"/><circle cx="1024.7" cy="158.5" r="3.9"/><circle cx="1057.7" cy="151.4" r="3.9"/><circle cx="872.3" cy="398.4" r="3.9"/><circle cx="1096.2" cy="444.7" r="3.9"/><circle cx="953.0" cy="399.6" r="3.9"/><circle cx="967.7" cy="368.1" r="3.9"/><circle cx="945.3" cy="326.6" r="3.9"/><circle cx="1037.9" cy="247.4" r="3.9"/><circle cx="1097.6" cy="313.1" r="3.9"/><circle cx="1014.3" cy="450.2" r="3.9"/><circle cx="907.6" cy="310.5" r="3.9"/><circle cx="1097.0" cy="354.7" r="3.9"/><circle cx="964.1" cy="162.8" r="3.9"/><circle cx="1058.7" cy="290.6" r="3.9"/><circle cx="1016.4" cy="381.1" r="3.9"/><circle cx="1029.0" cy="359.1" r="3.9"/><circle cx="958.2" cy="307.3" r="3.9"/><circle cx="821.9" cy="237.7" r="3.9"/><circle cx="974.6" cy="286.5" r="3.9"/><circle cx="1027.6" cy="347.7" r="3.9"/><circle cx="905.1" cy="273.8" r="3.9"/><circle cx="1039.8" cy="360.8" r="3.9"/><circle cx="886.4" cy="299.9" r="3.9"/><circle cx="985.8" cy="241.9" r="3.9"/><circle cx="988.4" cy="275.8" r="3.9"/><circle cx="910.9" cy="275.0" r="3.9"/><circle cx="1101.4" cy="337.1" r="3.9"/><circle cx="994.7" cy="395.0" r="3.9"/><circle cx="1050.2" cy="403.4" r="3.9"/><circle cx="880.7" cy="330.2" r="3.9"/><circle cx="827.7" cy="339.3" r="3.9"/><circle cx="1038.9" cy="268.8" r="3.9"/><circle cx="1132.9" cy="216.4" r="3.9"/><circle cx="1079.4" cy="213.1" r="3.9"/><circle cx="1132.7" cy="394.9" r="3.9"/><circle cx="797.0" cy="296.2" r="3.9"/><circle cx="863.9" cy="296.3" r="3.9"/><circle cx="1000.9" cy="307.4" r="3.9"/><circle cx="863.8" cy="214.5" r="3.9"/><circle cx="1024.3" cy="268.2" r="3.9"/><circle cx="899.9" cy="406.3" r="3.9"/><circle cx="1025.6" cy="407.4" r="3.9"/><circle cx="925.9" cy="457.6" r="3.9"/><circle cx="896.1" cy="408.0" r="3.9"/><circle cx="884.6" cy="398.2" r="3.9"/><circle cx="953.5" cy="158.2" r="3.9"/><circle cx="1125.9" cy="221.8" r="3.9"/><circle cx="906.6" cy="307.7" r="3.9"/><circle cx="988.1" cy="360.3" r="3.9"/><circle cx="1035.9" cy="302.2" r="3.9"/><circle cx="852.8" cy="414.6" r="3.9"/><circle cx="883.1" cy="296.0" r="3.9"/><circle cx="886.4" cy="370.0" r="3.9"/><circle cx="811.9" cy="298.8" r="3.9"/><circle cx="1114.4" cy="203.1" r="3.9"/><circle cx="1049.2" cy="394.5" r="3.9"/><circle cx="796.9" cy="310.3" r="3.9"/><circle cx="868.7" cy="341.9" r="3.9"/><circle cx="833.7" cy="399.8" r="3.9"/><circle cx="1112.5" cy="148.4" r="3.9"/><circle cx="868.4" cy="383.4" r="3.9"/><circle cx="1012.3" cy="140.8" r="3.9"/><circle cx="961.5" cy="193.1" r="3.9"/><circle cx="1127.8" cy="221.0" r="3.9"/><circle cx="846.5" cy="315.2" r="3.9"/><circle cx="850.5" cy="178.0" r="3.9"/><circle cx="915.6" cy="304.8" r="3.9"/><circle cx="1090.7" cy="195.1" r="3.9"/><circle cx="875.0" cy="319.6" r="3.9"/><circle cx="988.1" cy="297.7" r="3.9"/><circle cx="902.3" cy="421.3" r="3.9"/><circle cx="968.1" cy="369.9" r="3.9"/><circle cx="835.7" cy="398.4" r="3.9"/><circle cx="1126.0" cy="349.2" r="3.9"/><circle cx="1085.3" cy="369.6" r="3.9"/><circle cx="1042.7" cy="340.6" r="3.9"/><circle cx="844.1" cy="410.9" r="3.9"/><circle cx="987.7" cy="436.2" r="3.9"/><circle cx="945.1" cy="429.6" r="3.9"/><circle cx="850.4" cy="169.9" r="3.9"/><circle cx="895.8" cy="164.7" r="3.9"/><circle cx="1045.0" cy="205.1" r="3.9"/><circle cx="1060.8" cy="404.2" r="3.9"/><circle cx="981.7" cy="179.7" r="3.9"/><circle cx="1105.8" cy="368.0" r="3.9"/><circle cx="999.3" cy="140.4" r="3.9"/><circle cx="1123.2" cy="252.7" r="3.9"/><circle cx="881.7" cy="426.5" r="3.9"/><circle cx="893.9" cy="430.8" r="3.9"/><circle cx="841.8" cy="359.9" r="3.9"/><circle cx="1061.0" cy="281.9" r="3.9"/><circle cx="873.8" cy="344.7" r="3.9"/><circle cx="1084.5" cy="178.5" r="3.9"/><circle cx="869.9" cy="275.9" r="3.9"/><circle cx="975.9" cy="186.7" r="3.9"/><circle cx="924.2" cy="215.0" r="3.9"/><circle cx="1127.5" cy="300.5" r="3.9"/><circle cx="948.7" cy="245.7" r="3.9"/><circle cx="1001.7" cy="203.6" r="3.9"/><circle cx="1056.4" cy="370.4" r="3.9"/><circle cx="871.3" cy="372.1" r="3.9"/><circle cx="1022.6" cy="322.2" r="3.9"/><circle cx="1078.8" cy="264.5" r="3.9"/><circle cx="845.0" cy="331.2" r="3.9"/><circle cx="973.9" cy="188.3" r="3.9"/><circle cx="964.7" cy="206.6" r="3.9"/><circle cx="843.6" cy="374.2" r="3.9"/><circle cx="910.5" cy="421.6" r="3.9"/><circle cx="1026.4" cy="439.1" r="3.9"/><circle cx="872.9" cy="164.1" r="3.9"/><circle cx="958.5" cy="158.0" r="3.9"/><circle cx="856.0" cy="210.4" r="3.9"/><circle cx="814.1" cy="349.4" r="3.9"/><circle cx="879.6" cy="429.1" r="3.9"/><circle cx="975.3" cy="144.0" r="3.9"/><circle cx="863.8" cy="379.1" r="3.9"/><circle cx="1050.5" cy="270.4" r="3.9"/><circle cx="1002.9" cy="295.4" r="3.9"/><circle cx="884.6" cy="164.8" r="3.9"/><circle cx="1111.0" cy="196.4" r="3.9"/><circle cx="996.2" cy="442.4" r="3.9"/><circle cx="1087.3" cy="144.6" r="3.9"/><circle cx="943.7" cy="205.2" r="3.9"/><circle cx="1066.7" cy="165.3" r="3.9"/><circle cx="866.1" cy="300.7" r="3.9"/><circle cx="982.8" cy="205.7" r="3.9"/><circle cx="977.0" cy="158.4" r="3.9"/><circle cx="824.5" cy="199.7" r="3.9"/><circle cx="1124.5" cy="406.1" r="3.9"/><circle cx="973.8" cy="291.6" r="3.9"/><circle cx="1080.2" cy="263.2" r="3.9"/><circle cx="1115.1" cy="433.9" r="3.9"/><circle cx="932.0" cy="463.7" r="3.9"/><circle cx="1119.7" cy="292.3" r="3.9"/><circle cx="1047.8" cy="454.4" r="3.9"/><circle cx="873.1" cy="378.3" r="3.9"/><circle cx="918.7" cy="194.4" r="3.9"/><circle cx="941.1" cy="334.4" r="3.9"/><circle cx="789.5" cy="281.8" r="3.9"/><circle cx="908.3" cy="334.5" r="3.9"/><circle cx="1040.3" cy="239.9" r="3.9"/><circle cx="907.2" cy="202.7" r="3.9"/><circle cx="1077.3" cy="288.8" r="3.9"/><circle cx="937.8" cy="337.7" r="3.9"/><circle cx="812.0" cy="318.4" r="3.9"/><circle cx="1026.5" cy="232.5" r="3.9"/><circle cx="793.4" cy="314.4" r="3.9"/><circle cx="925.6" cy="431.9" r="3.9"/><circle cx="844.5" cy="263.4" r="3.9"/><circle cx="854.1" cy="246.5" r="3.9"/><circle cx="1091.2" cy="409.2" r="3.9"/><circle cx="1079.9" cy="428.4" r="3.9"/><circle cx="1081.7" cy="362.4" r="3.9"/><circle cx="1090.8" cy="283.0" r="3.9"/><circle cx="1109.7" cy="274.2" r="3.9"/><circle cx="803.9" cy="303.5" r="3.9"/><circle cx="958.1" cy="268.4" r="3.9"/><circle cx="971.5" cy="163.1" r="3.9"/><circle cx="1014.7" cy="313.0" r="3.9"/><circle cx="841.2" cy="169.9" r="3.9"/><circle cx="901.5" cy="355.0" r="3.9"/><circle cx="900.3" cy="408.7" r="3.9"/><circle cx="1112.5" cy="325.4" r="3.9"/><circle cx="1091.4" cy="150.3" r="3.9"/><circle cx="1089.8" cy="153.2" r="3.9"/><circle cx="911.3" cy="161.7" r="3.9"/><circle cx="876.5" cy="247.0" r="3.9"/><circle cx="1058.2" cy="208.3" r="3.9"/><circle cx="958.0" cy="269.8" r="3.9"/><circle cx="1109.1" cy="387.2" r="3.9"/><circle cx="1033.0" cy="430.6" r="3.9"/><circle cx="907.1" cy="246.8" r="3.9"/><circle cx="875.5" cy="324.1" r="3.9"/><circle cx="960.6" cy="243.8" r="3.9"/><circle cx="986.5" cy="415.6" r="3.9"/><circle cx="1023.3" cy="307.7" r="3.9"/><circle cx="1033.2" cy="288.5" r="3.9"/><circle cx="905.7" cy="398.3" r="3.9"/><circle cx="946.4" cy="172.2" r="3.9"/><circle cx="1072.0" cy="430.6" r="3.9"/><circle cx="1080.9" cy="307.9" r="3.9"/><circle cx="965.5" cy="266.1" r="3.9"/><circle cx="1067.5" cy="261.3" r="3.9"/><circle cx="969.1" cy="298.2" r="3.9"/><circle cx="897.8" cy="372.9" r="3.9"/><circle cx="1016.7" cy="398.6" r="3.9"/><circle cx="885.6" cy="192.7" r="3.9"/><circle cx="850.2" cy="254.5" r="3.9"/><circle cx="936.8" cy="392.6" r="3.9"/><circle cx="820.0" cy="379.2" r="3.9"/><circle cx="1122.3" cy="207.7" r="3.9"/><circle cx="1131.4" cy="177.8" r="3.9"/><circle cx="805.4" cy="259.5" r="3.9"/><circle cx="925.3" cy="428.0" r="3.9"/><circle cx="988.3" cy="349.2" r="3.9"/><circle cx="900.2" cy="369.7" r="3.9"/><circle cx="899.4" cy="380.0" r="3.9"/><circle cx="972.6" cy="230.9" r="3.9"/><circle cx="953.4" cy="365.8" r="3.9"/><circle cx="941.9" cy="252.5" r="3.9"/><circle cx="836.6" cy="313.7" r="3.9"/><circle cx="910.9" cy="260.7" r="3.9"/><circle cx="1061.7" cy="239.6" r="3.9"/><circle cx="993.5" cy="433.3" r="3.9"/><circle cx="900.5" cy="230.4" r="3.9"/><circle cx="1026.4" cy="248.6" r="3.9"/><circle cx="895.5" cy="266.1" r="3.9"/><circle cx="891.8" cy="210.8" r="3.9"/><circle cx="965.4" cy="427.3" r="3.9"/><circle cx="883.2" cy="210.5" r="3.9"/><circle cx="1083.7" cy="173.2" r="3.9"/><circle cx="964.3" cy="196.5" r="3.9"/><circle cx="1022.2" cy="452.4" r="3.9"/><circle cx="899.3" cy="373.8" r="3.9"/><circle cx="1079.2" cy="222.7" r="3.9"/><circle cx="892.0" cy="359.0" r="3.9"/><circle cx="911.9" cy="443.0" r="3.9"/><circle cx="926.9" cy="374.9" r="3.9"/><circle cx="881.4" cy="415.1" r="3.9"/><circle cx="990.2" cy="241.3" r="3.9"/><circle cx="926.4" cy="183.6" r="3.9"/><circle cx="914.4" cy="255.5" r="3.9"/><circle cx="986.8" cy="250.4" r="3.9"/><circle cx="1018.4" cy="359.8" r="3.9"/><circle cx="857.6" cy="333.2" r="3.9"/><circle cx="832.1" cy="189.1" r="3.9"/><circle cx="868.4" cy="300.9" r="3.9"/><circle cx="847.4" cy="176.2" r="3.9"/><circle cx="865.7" cy="314.6" r="3.9"/><circle cx="892.0" cy="414.3" r="3.9"/><circle cx="1063.9" cy="309.2" r="3.9"/><circle cx="1090.4" cy="280.5" r="3.9"/><circle cx="992.5" cy="241.0" r="3.9"/><circle cx="1054.2" cy="400.1" r="3.9"/><circle cx="977.6" cy="193.5" r="3.9"/><circle cx="876.0" cy="237.9" r="3.9"/><circle cx="897.0" cy="169.9" r="3.9"/><circle cx="951.0" cy="232.4" r="3.9"/><circle cx="949.7" cy="260.0" r="3.9"/><circle cx="1087.9" cy="192.7" r="3.9"/><circle cx="1134.9" cy="299.1" r="3.9"/><circle cx="1128.4" cy="375.1" r="3.9"/><circle cx="842.7" cy="176.1" r="3.9"/><circle cx="947.2" cy="346.2" r="3.9"/><circle cx="997.9" cy="414.7" r="3.9"/><circle cx="871.7" cy="232.2" r="3.9"/><circle cx="988.7" cy="331.6" r="3.9"/><circle cx="1120.4" cy="296.1" r="3.9"/><circle cx="864.7" cy="163.6" r="3.9"/><circle cx="975.1" cy="293.6" r="3.9"/><circle cx="1017.3" cy="266.3" r="3.9"/><circle cx="1096.0" cy="236.2" r="3.9"/><circle cx="916.7" cy="421.6" r="3.9"/><circle cx="1002.7" cy="205.3" r="3.9"/><circle cx="1092.1" cy="246.8" r="3.9"/><circle cx="932.9" cy="386.6" r="3.9"/><circle cx="908.4" cy="442.7" r="3.9"/><circle cx="1123.3" cy="307.0" r="3.9"/><circle cx="819.9" cy="331.5" r="3.9"/><circle cx="975.6" cy="283.1" r="3.9"/><circle cx="998.0" cy="198.9" r="3.9"/><circle cx="994.1" cy="160.7" r="3.9"/><circle cx="905.9" cy="234.1" r="3.9"/><circle cx="950.5" cy="436.1" r="3.9"/><circle cx="1013.3" cy="323.3" r="3.9"/><circle cx="1100.3" cy="307.2" r="3.9"/><circle cx="1023.8" cy="394.4" r="3.9"/><circle cx="991.3" cy="392.1" r="3.9"/><circle cx="901.1" cy="229.2" r="3.9"/><circle cx="820.9" cy="219.1" r="3.9"/><circle cx="1074.6" cy="395.2" r="3.9"/><circle cx="925.3" cy="212.2" r="3.9"/><circle cx="1080.3" cy="329.9" r="3.9"/><circle cx="902.0" cy="274.2" r="3.9"/><circle cx="956.4" cy="290.4" r="3.9"/><circle cx="974.6" cy="170.4" r="3.9"/><circle cx="790.2" cy="330.8" r="3.9"/><circle cx="999.2" cy="408.5" r="3.9"/><circle cx="1090.6" cy="424.7" r="3.9"/><circle cx="1122.8" cy="242.1" r="3.9"/><circle cx="1048.6" cy="355.3" r="3.9"/><circle cx="1035.7" cy="326.9" r="3.9"/><circle cx="1004.2" cy="402.8" r="3.9"/><circle cx="1099.6" cy="333.3" r="3.9"/><circle cx="958.5" cy="286.6" r="3.9"/><circle cx="946.7" cy="327.4" r="3.9"/><circle cx="1046.0" cy="290.2" r="3.9"/><circle cx="903.8" cy="300.6" r="3.9"/><circle cx="1018.5" cy="248.0" r="3.9"/><circle cx="846.8" cy="300.7" r="3.9"/><circle cx="1120.2" cy="435.6" r="3.9"/><circle cx="861.0" cy="383.3" r="3.9"/><circle cx="993.3" cy="462.9" r="3.9"/><circle cx="931.6" cy="382.8" r="3.9"/><circle cx="947.6" cy="439.0" r="3.9"/><circle cx="1080.1" cy="231.2" r="3.9"/><circle cx="888.8" cy="332.2" r="3.9"/><circle cx="971.6" cy="182.0" r="3.9"/><circle cx="1027.8" cy="187.6" r="3.9"/><circle cx="1088.1" cy="164.9" r="3.9"/><circle cx="1090.8" cy="376.2" r="3.9"/><circle cx="966.7" cy="436.2" r="3.9"/><circle cx="981.3" cy="362.4" r="3.9"/><circle cx="964.6" cy="345.5" r="3.9"/><circle cx="1036.2" cy="355.5" r="3.9"/><circle cx="926.2" cy="441.4" r="3.9"/><circle cx="1114.7" cy="326.7" r="3.9"/><circle cx="854.5" cy="208.0" r="3.9"/><circle cx="819.6" cy="359.7" r="3.9"/><circle cx="998.0" cy="254.9" r="3.9"/><circle cx="835.2" cy="370.9" r="3.9"/><circle cx="1084.8" cy="157.9" r="3.9"/><circle cx="1130.5" cy="321.8" r="3.9"/><circle cx="1036.2" cy="239.2" r="3.9"/><circle cx="1112.2" cy="236.0" r="3.9"/><circle cx="1083.2" cy="156.1" r="3.9"/><circle cx="814.4" cy="275.7" r="3.9"/><circle cx="843.1" cy="209.4" r="3.9"/><circle cx="952.6" cy="427.9" r="3.9"/><circle cx="846.2" cy="177.6" r="3.9"/><circle cx="848.4" cy="312.0" r="3.9"/><circle cx="1052.2" cy="340.5" r="3.9"/><circle cx="837.4" cy="403.9" r="3.9"/><circle cx="864.3" cy="236.9" r="3.9"/><circle cx="845.3" cy="365.2" r="3.9"/><circle cx="993.1" cy="188.2" r="3.9"/><circle cx="931.3" cy="194.7" r="3.9"/><circle cx="866.3" cy="413.4" r="3.9"/><circle cx="1055.4" cy="146.3" r="3.9"/><circle cx="1002.4" cy="184.9" r="3.9"/><circle cx="947.0" cy="270.3" r="3.9"/><circle cx="1072.9" cy="416.0" r="3.9"/><circle cx="996.7" cy="375.1" r="3.9"/><circle cx="913.3" cy="396.5" r="3.9"/><circle cx="1072.8" cy="236.5" r="3.9"/><circle cx="911.5" cy="302.1" r="3.9"/><circle cx="965.0" cy="376.6" r="3.9"/><circle cx="964.0" cy="277.0" r="3.9"/><circle cx="995.9" cy="279.8" r="3.9"/><circle cx="1129.3" cy="344.2" r="3.9"/><circle cx="1124.5" cy="442.0" r="3.9"/><circle cx="809.5" cy="311.9" r="3.9"/><circle cx="999.2" cy="250.1" r="3.9"/><circle cx="971.6" cy="341.9" r="3.9"/><circle cx="1012.4" cy="196.8" r="3.9"/><circle cx="1062.1" cy="153.8" r="3.9"/><circle cx="1019.9" cy="423.1" r="3.9"/><circle cx="1129.6" cy="228.7" r="3.9"/><circle cx="970.7" cy="251.8" r="3.9"/><circle cx="879.1" cy="185.4" r="3.9"/><circle cx="975.3" cy="273.5" r="3.9"/><circle cx="872.6" cy="393.9" r="3.9"/><circle cx="1048.1" cy="389.1" r="3.9"/><circle cx="875.1" cy="405.1" r="3.9"/><circle cx="1063.3" cy="302.5" r="3.9"/><circle cx="1050.8" cy="379.8" r="3.9"/><circle cx="865.2" cy="416.4" r="3.9"/><circle cx="1134.0" cy="253.9" r="3.9"/><circle cx="791.9" cy="325.5" r="3.9"/><circle cx="813.0" cy="256.9" r="3.9"/><circle cx="1063.2" cy="445.2" r="3.9"/><circle cx="991.4" cy="371.5" r="3.9"/><circle cx="870.7" cy="345.2" r="3.9"/><circle cx="954.6" cy="429.2" r="3.9"/><circle cx="971.7" cy="224.5" r="3.9"/><circle cx="932.5" cy="153.3" r="3.9"/><circle cx="890.0" cy="156.2" r="3.9"/><circle cx="1123.8" cy="372.8" r="3.9"/><circle cx="970.6" cy="407.8" r="3.9"/><circle cx="839.4" cy="257.6" r="3.9"/><circle cx="894.4" cy="384.7" r="3.9"/><circle cx="1065.4" cy="246.3" r="3.9"/><circle cx="962.6" cy="445.1" r="3.9"/><circle cx="808.6" cy="287.5" r="3.9"/><circle cx="961.5" cy="459.4" r="3.9"/><circle cx="1073.8" cy="418.4" r="3.9"/><circle cx="1059.5" cy="238.9" r="3.9"/><circle cx="1005.4" cy="170.4" r="3.9"/><circle cx="909.6" cy="362.1" r="3.9"/><circle cx="1060.4" cy="425.3" r="3.9"/><circle cx="850.5" cy="310.4" r="3.9"/><circle cx="824.7" cy="393.5" r="3.9"/><circle cx="1000.7" cy="147.8" r="3.9"/><circle cx="885.4" cy="417.8" r="3.9"/><circle cx="924.6" cy="361.4" r="3.9"/><circle cx="1062.8" cy="411.1" r="3.9"/><circle cx="1086.1" cy="292.3" r="3.9"/><circle cx="1015.8" cy="368.9" r="3.9"/><circle cx="811.6" cy="296.5" r="3.9"/><circle cx="1014.9" cy="305.5" r="3.9"/><circle cx="947.3" cy="221.7" r="3.9"/><circle cx="980.4" cy="410.5" r="3.9"/><circle cx="934.1" cy="330.7" r="3.9"/><circle cx="964.5" cy="150.5" r="3.9"/><circle cx="920.3" cy="268.6" r="3.9"/><circle cx="851.4" cy="333.8" r="3.9"/><circle cx="1000.1" cy="183.4" r="3.9"/><circle cx="930.1" cy="222.6" r="3.9"/><circle cx="1065.6" cy="319.4" r="3.9"/><circle cx="935.9" cy="152.1" r="3.9"/><circle cx="1095.3" cy="235.6" r="3.9"/><circle cx="920.0" cy="384.8" r="3.9"/><circle cx="1083.5" cy="151.6" r="3.9"/><circle cx="907.6" cy="355.7" r="3.9"/><circle cx="916.9" cy="169.7" r="3.9"/><circle cx="1052.2" cy="346.7" r="3.9"/><circle cx="931.0" cy="426.9" r="3.9"/><circle cx="969.6" cy="298.2" r="3.9"/><circle cx="889.6" cy="192.6" r="3.9"/><circle cx="1027.9" cy="346.3" r="3.9"/><circle cx="885.6" cy="264.1" r="3.9"/><circle cx="1030.4" cy="175.5" r="3.9"/><circle cx="888.3" cy="406.7" r="3.9"/><circle cx="1102.8" cy="440.9" r="3.9"/><circle cx="923.3" cy="302.2" r="3.9"/><circle cx="1074.1" cy="280.0" r="3.9"/><circle cx="960.7" cy="375.5" r="3.9"/><circle cx="927.0" cy="305.5" r="3.9"/><circle cx="999.8" cy="383.7" r="3.9"/><circle cx="996.4" cy="428.0" r="3.9"/><circle cx="1120.7" cy="201.6" r="3.9"/><circle cx="1042.2" cy="375.2" r="3.9"/><circle cx="969.5" cy="246.6" r="3.9"/><circle cx="1071.7" cy="441.5" r="3.9"/><circle cx="1007.2" cy="193.5" r="3.9"/><circle cx="1066.7" cy="405.7" r="3.9"/><circle cx="1052.2" cy="434.6" r="3.9"/><circle cx="1098.5" cy="425.3" r="3.9"/><circle cx="1101.4" cy="347.4" r="3.9"/><circle cx="978.2" cy="318.1" r="3.9"/><circle cx="927.2" cy="174.4" r="3.9"/><circle cx="967.3" cy="260.0" r="3.9"/><circle cx="1102.5" cy="228.8" r="3.9"/><circle cx="1066.8" cy="442.6" r="3.9"/><circle cx="832.4" cy="339.3" r="3.9"/><circle cx="948.4" cy="358.9" r="3.9"/><circle cx="951.5" cy="171.8" r="3.9"/><circle cx="1100.4" cy="332.5" r="3.9"/><circle cx="1127.8" cy="421.5" r="3.9"/><circle cx="924.5" cy="189.2" r="3.9"/><circle cx="1014.9" cy="316.6" r="3.9"/><circle cx="1107.9" cy="336.7" r="3.9"/><circle cx="1002.9" cy="232.8" r="3.9"/><circle cx="842.2" cy="203.1" r="3.9"/><circle cx="828.5" cy="305.8" r="3.9"/><circle cx="900.9" cy="420.2" r="3.9"/><circle cx="836.7" cy="312.4" r="3.9"/><circle cx="1108.8" cy="256.0" r="3.9"/><circle cx="969.0" cy="274.7" r="3.9"/><circle cx="884.2" cy="385.4" r="3.9"/><circle cx="1104.0" cy="359.9" r="3.9"/><circle cx="1003.9" cy="178.3" r="3.9"/><circle cx="962.8" cy="223.4" r="3.9"/><circle cx="915.9" cy="217.6" r="3.9"/><circle cx="915.7" cy="241.2" r="3.9"/><circle cx="1024.3" cy="377.7" r="3.9"/><circle cx="949.2" cy="177.0" r="3.9"/><circle cx="979.9" cy="336.3" r="3.9"/><circle cx="980.5" cy="259.5" r="3.9"/><circle cx="1124.7" cy="233.3" r="3.9"/><circle cx="984.9" cy="461.4" r="3.9"/><circle cx="1002.3" cy="314.0" r="3.9"/><circle cx="1018.7" cy="406.3" r="3.9"/><circle cx="796.5" cy="320.3" r="3.9"/><circle cx="1089.1" cy="175.7" r="3.9"/><circle cx="993.9" cy="138.4" r="3.9"/><circle cx="873.9" cy="214.0" r="3.9"/><circle cx="1070.3" cy="236.1" r="3.9"/><circle cx="976.0" cy="401.8" r="3.9"/><circle cx="1010.4" cy="346.0" r="3.9"/><circle cx="856.6" cy="235.7" r="3.9"/><circle cx="926.8" cy="178.8" r="3.9"/><circle cx="880.2" cy="327.8" r="3.9"/><circle cx="1135.0" cy="442.3" r="3.9"/><circle cx="921.5" cy="157.6" r="3.9"/><circle cx="900.0" cy="290.1" r="3.9"/><circle cx="936.4" cy="181.6" r="3.9"/><circle cx="1010.4" cy="247.1" r="3.9"/><circle cx="828.3" cy="304.8" r="3.9"/><circle cx="1072.0" cy="405.2" r="3.9"/><circle cx="1117.5" cy="191.4" r="3.9"/><circle cx="823.2" cy="204.2" r="3.9"/><circle cx="909.1" cy="418.4" r="3.9"/><circle cx="916.5" cy="425.4" r="3.9"/><circle cx="897.3" cy="410.6" r="3.9"/><circle cx="1058.1" cy="278.1" r="3.9"/><circle cx="1048.0" cy="336.6" r="3.9"/><circle cx="1034.6" cy="269.8" r="3.9"/><circle cx="1071.4" cy="168.5" r="3.9"/><circle cx="910.1" cy="272.6" r="3.9"/><circle cx="985.7" cy="364.9" r="3.9"/><circle cx="982.0" cy="385.4" r="3.9"/><circle cx="872.5" cy="356.1" r="3.9"/><circle cx="892.8" cy="376.4" r="3.9"/><circle cx="908.6" cy="237.2" r="3.9"/><circle cx="1018.7" cy="262.1" r="3.9"/><circle cx="1080.4" cy="150.7" r="3.9"/><circle cx="934.1" cy="339.9" r="3.9"/><circle cx="849.3" cy="189.3" r="3.9"/><circle cx="902.1" cy="203.6" r="3.9"/><circle cx="835.4" cy="315.2" r="3.9"/><circle cx="970.8" cy="339.2" r="3.9"/><circle cx="877.7" cy="241.1" r="3.9"/><circle cx="1046.5" cy="431.0" r="3.9"/><circle cx="939.0" cy="248.7" r="3.9"/><circle cx="1128.8" cy="381.5" r="3.9"/><circle cx="973.6" cy="310.3" r="3.9"/><circle cx="1011.5" cy="219.5" r="3.9"/><circle cx="995.2" cy="289.5" r="3.9"/><circle cx="827.3" cy="372.6" r="3.9"/><circle cx="1045.2" cy="420.1" r="3.9"/><circle cx="932.0" cy="241.6" r="3.9"/><circle cx="1074.4" cy="372.8" r="3.9"/><circle cx="994.1" cy="298.1" r="3.9"/><circle cx="984.9" cy="388.8" r="3.9"/><circle cx="975.3" cy="277.7" r="3.9"/><circle cx="950.2" cy="407.6" r="3.9"/><circle cx="1009.7" cy="394.5" r="3.9"/><circle cx="988.3" cy="144.9" r="3.9"/><circle cx="1035.5" cy="383.4" r="3.9"/><circle cx="1078.4" cy="211.4" r="3.9"/><circle cx="1074.1" cy="211.2" r="3.9"/><circle cx="1106.9" cy="409.0" r="3.9"/><circle cx="1107.2" cy="187.6" r="3.9"/><circle cx="933.7" cy="408.0" r="3.9"/><circle cx="845.8" cy="209.6" r="3.9"/><circle cx="905.3" cy="408.6" r="3.9"/><circle cx="893.2" cy="197.4" r="3.9"/><circle cx="811.0" cy="219.7" r="3.9"/><circle cx="949.8" cy="233.9" r="3.9"/><circle cx="1116.6" cy="354.8" r="3.9"/><circle cx="961.4" cy="172.3" r="3.9"/><circle cx="1013.4" cy="157.4" r="3.9"/><circle cx="863.3" cy="358.1" r="3.9"/><circle cx="1014.5" cy="352.2" r="3.9"/><circle cx="843.3" cy="252.3" r="3.9"/><circle cx="902.4" cy="173.2" r="3.9"/><circle cx="1134.6" cy="174.2" r="3.9"/><circle cx="851.5" cy="203.8" r="3.9"/><circle cx="845.6" cy="240.8" r="3.9"/><circle cx="881.2" cy="373.4" r="3.9"/><circle cx="1003.6" cy="389.7" r="3.9"/><circle cx="1047.6" cy="382.0" r="3.9"/><circle cx="896.4" cy="314.1" r="3.9"/><circle cx="1070.4" cy="242.5" r="3.9"/><circle cx="1065.9" cy="431.9" r="3.9"/><circle cx="949.4" cy="178.0" r="3.9"/><circle cx="971.1" cy="276.4" r="3.9"/><circle cx="904.4" cy="246.4" r="3.9"/><circle cx="903.9" cy="167.5" r="3.9"/><circle cx="1113.5" cy="175.3" r="3.9"/><circle cx="916.7" cy="236.2" r="3.9"/><circle cx="964.1" cy="140.5" r="3.9"/><circle cx="1025.6" cy="236.1" r="3.9"/><circle cx="1072.6" cy="184.1" r="3.9"/><circle cx="1037.2" cy="324.2" r="3.9"/><circle cx="899.4" cy="319.3" r="3.9"/><circle cx="1010.3" cy="422.5" r="3.9"/><circle cx="804.9" cy="305.9" r="3.9"/><circle cx="1060.7" cy="270.2" r="3.9"/><circle cx="940.5" cy="399.5" r="3.9"/><circle cx="953.5" cy="219.1" r="3.9"/><circle cx="1007.4" cy="308.4" r="3.9"/><circle cx="836.1" cy="332.5" r="3.9"/><circle cx="1030.8" cy="327.5" r="3.9"/><circle cx="1131.8" cy="252.7" r="3.9"/><circle cx="1038.1" cy="439.7" r="3.9"/><circle cx="1123.8" cy="156.2" r="3.9"/><circle cx="998.2" cy="360.5" r="3.9"/><circle cx="823.0" cy="311.9" r="3.9"/><circle cx="816.0" cy="262.1" r="3.9"/><circle cx="889.7" cy="415.1" r="3.9"/><circle cx="912.9" cy="269.6" r="3.9"/><circle cx="1023.8" cy="371.6" r="3.9"/><circle cx="1020.0" cy="177.7" r="3.9"/><circle cx="809.0" cy="340.2" r="3.9"/><circle cx="938.2" cy="154.9" r="3.9"/><circle cx="1035.7" cy="201.7" r="3.9"/><circle cx="1085.4" cy="286.8" r="3.9"/><circle cx="945.6" cy="373.0" r="3.9"/><circle cx="984.6" cy="315.5" r="3.9"/><circle cx="972.9" cy="163.7" r="3.9"/><circle cx="818.3" cy="350.4" r="3.9"/><circle cx="1002.9" cy="462.2" r="3.9"/><circle cx="880.1" cy="183.1" r="3.9"/><circle cx="833.7" cy="202.4" r="3.9"/><circle cx="1098.9" cy="226.6" r="3.9"/><circle cx="1032.9" cy="282.3" r="3.9"/><circle cx="954.0" cy="162.9" r="3.9"/><circle cx="1040.2" cy="184.7" r="3.9"/><circle cx="1016.0" cy="288.2" r="3.9"/><circle cx="917.7" cy="289.2" r="3.9"/><circle cx="1068.1" cy="258.1" r="3.9"/><circle cx="1036.4" cy="415.9" r="3.9"/><circle cx="935.0" cy="452.6" r="3.9"/><circle cx="787.2" cy="323.6" r="3.9"/><circle cx="888.3" cy="331.7" r="3.9"/><circle cx="988.8" cy="285.5" r="3.9"/><circle cx="1044.7" cy="248.9" r="3.9"/><circle cx="1103.3" cy="293.7" r="3.9"/><circle cx="857.6" cy="228.2" r="3.9"/><circle cx="1084.5" cy="391.5" r="3.9"/><circle cx="794.0" cy="290.4" r="3.9"/><circle cx="922.6" cy="216.5" r="3.9"/><circle cx="968.9" cy="361.1" r="3.9"/><circle cx="1085.6" cy="291.4" r="3.9"/><circle cx="921.9" cy="453.8" r="3.9"/><circle cx="991.3" cy="440.5" r="3.9"/><circle cx="871.7" cy="337.2" r="3.9"/><circle cx="902.5" cy="255.6" r="3.9"/><circle cx="1047.7" cy="227.9" r="3.9"/><circle cx="993.9" cy="236.0" r="3.9"/><circle cx="1027.1" cy="247.4" r="3.9"/><circle cx="904.9" cy="170.0" r="3.9"/><circle cx="867.3" cy="390.0" r="3.9"/><circle cx="974.3" cy="429.6" r="3.9"/><circle cx="794.8" cy="339.6" r="3.9"/><circle cx="849.8" cy="252.0" r="3.9"/><circle cx="1025.8" cy="462.4" r="3.9"/><circle cx="1055.4" cy="417.8" r="3.9"/><circle cx="815.9" cy="324.7" r="3.9"/><circle cx="1035.3" cy="164.0" r="3.9"/><circle cx="954.9" cy="439.9" r="3.9"/><circle cx="947.6" cy="391.6" r="3.9"/><circle cx="811.6" cy="350.0" r="3.9"/><circle cx="884.0" cy="242.8" r="3.9"/><circle cx="968.5" cy="379.2" r="3.9"/><circle cx="845.0" cy="262.6" r="3.9"/><circle cx="978.8" cy="170.9" r="3.9"/><circle cx="981.8" cy="441.8" r="3.9"/><circle cx="888.6" cy="289.5" r="3.9"/><circle cx="840.5" cy="393.8" r="3.9"/><circle cx="1008.3" cy="257.1" r="3.9"/><circle cx="1010.4" cy="204.7" r="3.9"/><circle cx="977.9" cy="244.9" r="3.9"/><circle cx="928.9" cy="239.1" r="3.9"/><circle cx="1078.4" cy="249.8" r="3.9"/><circle cx="1096.4" cy="324.5" r="3.9"/><circle cx="1133.6" cy="399.2" r="3.9"/><circle cx="1120.3" cy="157.0" r="3.9"/><circle cx="1098.5" cy="225.9" r="3.9"/><circle cx="970.3" cy="216.7" r="3.9"/><circle cx="1039.1" cy="430.5" r="3.9"/><circle cx="789.7" cy="330.9" r="3.9"/><circle cx="957.6" cy="294.3" r="3.9"/><circle cx="940.8" cy="317.3" r="3.9"/><circle cx="952.7" cy="208.3" r="3.9"/><circle cx="1067.8" cy="257.5" r="3.9"/><circle cx="977.6" cy="260.5" r="3.9"/><circle cx="818.4" cy="301.8" r="3.9"/><circle cx="1098.0" cy="199.7" r="3.9"/><circle cx="1040.8" cy="259.6" r="3.9"/><circle cx="1129.6" cy="228.9" r="3.9"/><circle cx="980.4" cy="160.1" r="3.9"/><circle cx="1076.8" cy="146.8" r="3.9"/><circle cx="829.4" cy="270.2" r="3.9"/><circle cx="1056.5" cy="349.3" r="3.9"/><circle cx="1039.3" cy="268.1" r="3.9"/><circle cx="1062.5" cy="153.7" r="3.9"/><circle cx="1005.6" cy="343.1" r="3.9"/><circle cx="853.4" cy="161.7" r="3.9"/><circle cx="978.0" cy="216.2" r="3.9"/><circle cx="1023.5" cy="207.4" r="3.9"/><circle cx="988.0" cy="182.1" r="3.9"/><circle cx="1093.7" cy="167.0" r="3.9"/><circle cx="1037.0" cy="415.7" r="3.9"/><circle cx="987.3" cy="255.3" r="3.9"/><circle cx="890.2" cy="183.6" r="3.9"/><circle cx="946.0" cy="165.0" r="3.9"/><circle cx="1133.8" cy="345.6" r="3.9"/><circle cx="942.6" cy="233.6" r="3.9"/><circle cx="844.1" cy="389.1" r="3.9"/><circle cx="923.2" cy="415.4" r="3.9"/><circle cx="840.7" cy="333.0" r="3.9"/><circle cx="826.1" cy="245.8" r="3.9"/><circle cx="1015.9" cy="368.0" r="3.9"/><circle cx="998.1" cy="261.5" r="3.9"/><circle cx="1022.2" cy="371.4" r="3.9"/><circle cx="824.8" cy="277.4" r="3.9"/><circle cx="890.0" cy="305.2" r="3.9"/><circle cx="946.3" cy="189.1" r="3.9"/><circle cx="1112.2" cy="216.6" r="3.9"/><circle cx="846.0" cy="179.6" r="3.9"/><circle cx="914.3" cy="396.2" r="3.9"/><circle cx="1119.2" cy="158.4" r="3.9"/><circle cx="943.5" cy="250.2" r="3.9"/><circle cx="1094.8" cy="281.8" r="3.9"/><circle cx="815.6" cy="368.0" r="3.9"/><circle cx="1012.2" cy="435.2" r="3.9"/><circle cx="862.9" cy="219.2" r="3.9"/><circle cx="876.1" cy="353.8" r="3.9"/><circle cx="1024.2" cy="182.4" r="3.9"/><circle cx="864.6" cy="306.1" r="3.9"/><circle cx="823.5" cy="346.0" r="3.9"/><circle cx="856.6" cy="260.0" r="3.9"/><circle cx="825.2" cy="209.6" r="3.9"/><circle cx="862.7" cy="316.6" r="3.9"/><circle cx="1089.8" cy="314.4" r="3.9"/><circle cx="970.4" cy="274.8" r="3.9"/><circle cx="1020.4" cy="167.8" r="3.9"/><circle cx="1126.6" cy="268.7" r="3.9"/><circle cx="813.3" cy="385.5" r="3.9"/><circle cx="934.1" cy="166.0" r="3.9"/><circle cx="976.6" cy="347.9" r="3.9"/><circle cx="1119.8" cy="272.2" r="3.9"/><circle cx="898.5" cy="433.1" r="3.9"/><circle cx="1016.5" cy="234.6" r="3.9"/><circle cx="1072.4" cy="266.4" r="3.9"/><circle cx="799.8" cy="339.0" r="3.9"/><circle cx="997.4" cy="248.7" r="3.9"/><circle cx="830.0" cy="388.6" r="3.9"/><circle cx="1104.9" cy="326.6" r="3.9"/><circle cx="1054.2" cy="246.0" r="3.9"/><circle cx="1058.6" cy="364.7" r="3.9"/><circle cx="1047.9" cy="418.7" r="3.9"/><circle cx="833.4" cy="284.1" r="3.9"/><circle cx="1106.8" cy="250.4" r="3.9"/><circle cx="1017.9" cy="185.2" r="3.9"/><circle cx="963.6" cy="419.1" r="3.9"/><circle cx="936.8" cy="146.4" r="3.9"/><circle cx="826.6" cy="234.6" r="3.9"/><circle cx="1081.9" cy="404.0" r="3.9"/><circle cx="952.3" cy="216.4" r="3.9"/><circle cx="997.8" cy="385.2" r="3.9"/><circle cx="1108.6" cy="339.4" r="3.9"/><circle cx="1089.6" cy="227.7" r="3.9"/><circle cx="870.8" cy="286.9" r="3.9"/><circle cx="876.7" cy="369.2" r="3.9"/><circle cx="962.0" cy="219.2" r="3.9"/><circle cx="882.3" cy="190.7" r="3.9"/><circle cx="1055.9" cy="166.5" r="3.9"/><circle cx="936.1" cy="210.1" r="3.9"/><circle cx="879.6" cy="411.9" r="3.9"/><circle cx="1029.0" cy="367.8" r="3.9"/><circle cx="916.2" cy="315.2" r="3.9"/><circle cx="1059.7" cy="192.9" r="3.9"/><circle cx="1046.8" cy="275.8" r="3.9"/><circle cx="838.9" cy="341.1" r="3.9"/><circle cx="919.6" cy="392.1" r="3.9"/><circle cx="1022.5" cy="196.8" r="3.9"/><circle cx="1122.0" cy="235.8" r="3.9"/><circle cx="1109.9" cy="398.4" r="3.9"/><circle cx="1068.3" cy="239.1" r="3.9"/><circle cx="889.5" cy="382.3" r="3.9"/><circle cx="975.6" cy="380.8" r="3.9"/><circle cx="870.8" cy="378.9" r="3.9"/><circle cx="1027.8" cy="184.4" r="3.9"/><circle cx="981.2" cy="341.0" r="3.9"/><circle cx="1076.0" cy="306.4" r="3.9"/><circle cx="857.8" cy="391.4" r="3.9"/><circle cx="1053.1" cy="185.7" r="3.9"/><circle cx="1131.1" cy="428.5" r="3.9"/><circle cx="1105.9" cy="297.6" r="3.9"/><circle cx="942.4" cy="391.2" r="3.9"/><circle cx="787.0" cy="324.2" r="3.9"/><circle cx="971.9" cy="419.0" r="3.9"/><circle cx="922.4" cy="388.0" r="3.9"/><circle cx="906.8" cy="274.6" r="3.9"/><circle cx="1104.5" cy="436.3" r="3.9"/><circle cx="910.5" cy="202.6" r="3.9"/><circle cx="903.9" cy="382.3" r="3.9"/><circle cx="1123.4" cy="435.3" r="3.9"/><circle cx="1114.9" cy="261.5" r="3.9"/><circle cx="1052.5" cy="383.2" r="3.9"/><circle cx="1022.0" cy="408.7" r="3.9"/><circle cx="881.8" cy="429.6" r="3.9"/><circle cx="992.0" cy="281.5" r="3.9"/><circle cx="1032.7" cy="400.0" r="3.9"/><circle cx="913.1" cy="331.4" r="3.9"/><circle cx="936.3" cy="199.1" r="3.9"/><circle cx="1019.9" cy="253.9" r="3.9"/><circle cx="1074.9" cy="150.3" r="3.9"/><circle cx="1068.7" cy="368.3" r="3.9"/><circle cx="998.9" cy="351.3" r="3.9"/><circle cx="842.9" cy="261.5" r="3.9"/><circle cx="990.1" cy="379.8" r="3.9"/><circle cx="1129.2" cy="208.0" r="3.9"/><circle cx="985.2" cy="326.2" r="3.9"/><circle cx="1025.7" cy="241.1" r="3.9"/><circle cx="1113.3" cy="214.5" r="3.9"/><circle cx="914.1" cy="218.5" r="3.9"/><circle cx="892.0" cy="404.2" r="3.9"/><circle cx="861.4" cy="277.5" r="3.9"/><circle cx="1054.5" cy="232.9" r="3.9"/><circle cx="1002.0" cy="365.1" r="3.9"/><circle cx="1013.2" cy="137.7" r="3.9"/><circle cx="905.7" cy="391.6" r="3.9"/><circle cx="1033.1" cy="408.5" r="3.9"/><circle cx="1101.2" cy="397.4" r="3.9"/><circle cx="886.8" cy="430.0" r="3.9"/><circle cx="944.5" cy="457.7" r="3.9"/><circle cx="1040.2" cy="335.9" r="3.9"/><circle cx="1133.3" cy="393.7" r="3.9"/><circle cx="863.6" cy="365.0" r="3.9"/><circle cx="857.7" cy="311.2" r="3.9"/><circle cx="1069.9" cy="190.1" r="3.9"/><circle cx="888.7" cy="336.7" r="3.9"/><circle cx="1028.1" cy="429.3" r="3.9"/><circle cx="906.7" cy="220.9" r="3.9"/><circle cx="857.5" cy="341.7" r="3.9"/><circle cx="1023.2" cy="454.4" r="3.9"/><circle cx="1053.5" cy="374.8" r="3.9"/><circle cx="1028.4" cy="188.9" r="3.9"/><circle cx="902.7" cy="263.9" r="3.9"/><circle cx="821.4" cy="378.8" r="3.9"/><circle cx="1097.8" cy="360.4" r="3.9"/><circle cx="958.8" cy="167.3" r="3.9"/><circle cx="933.7" cy="323.7" r="3.9"/><circle cx="1047.2" cy="317.6" r="3.9"/><circle cx="1069.0" cy="221.4" r="3.9"/><circle cx="826.6" cy="270.6" r="3.9"/><circle cx="940.8" cy="429.3" r="3.9"/><circle cx="1094.2" cy="205.2" r="3.9"/><circle cx="848.2" cy="398.3" r="3.9"/><circle cx="983.4" cy="215.9" r="3.9"/><circle cx="1029.9" cy="448.1" r="3.9"/><circle cx="894.4" cy="222.1" r="3.9"/><circle cx="1125.2" cy="320.0" r="3.9"/><circle cx="974.1" cy="354.6" r="3.9"/><circle cx="948.3" cy="378.5" r="3.9"/><circle cx="1116.9" cy="235.7" r="3.9"/><circle cx="869.1" cy="357.3" r="3.9"/><circle cx="1067.7" cy="184.8" r="3.9"/><circle cx="1098.0" cy="189.6" r="3.9"/><circle cx="946.6" cy="210.5" r="3.9"/><circle cx="923.2" cy="248.6" r="3.9"/><circle cx="1097.6" cy="218.9" r="3.9"/><circle cx="883.9" cy="186.3" r="3.9"/><circle cx="1042.8" cy="387.3" r="3.9"/><circle cx="1004.6" cy="180.2" r="3.9"/><circle cx="843.8" cy="282.0" r="3.9"/><circle cx="1131.3" cy="276.2" r="3.9"/><circle cx="1130.8" cy="255.1" r="3.9"/><circle cx="1134.6" cy="203.5" r="3.9"/><circle cx="1105.4" cy="391.2" r="3.9"/><circle cx="990.6" cy="404.8" r="3.9"/><circle cx="963.2" cy="431.7" r="3.9"/><circle cx="1089.3" cy="224.8" r="3.9"/><circle cx="829.3" cy="346.3" r="3.9"/><circle cx="1051.9" cy="300.5" r="3.9"/><circle cx="907.8" cy="409.3" r="3.9"/><circle cx="1038.8" cy="463.0" r="3.9"/><circle cx="927.7" cy="216.1" r="3.9"/><circle cx="915.5" cy="206.6" r="3.9"/><circle cx="1007.5" cy="298.7" r="3.9"/><circle cx="817.5" cy="227.7" r="3.9"/><circle cx="1133.2" cy="290.2" r="3.9"/><circle cx="855.5" cy="410.8" r="3.9"/><circle cx="1089.0" cy="425.0" r="3.9"/><circle cx="902.4" cy="161.5" r="3.9"/><circle cx="976.4" cy="357.7" r="3.9"/><circle cx="880.7" cy="300.9" r="3.9"/><circle cx="914.3" cy="284.5" r="3.9"/><circle cx="931.2" cy="364.1" r="3.9"/><circle cx="864.4" cy="398.3" r="3.9"/><circle cx="1112.6" cy="164.8" r="3.9"/><circle cx="987.7" cy="450.5" r="3.9"/><circle cx="1074.2" cy="147.8" r="3.9"/><circle cx="979.2" cy="198.6" r="3.9"/><circle cx="816.1" cy="271.5" r="3.9"/><circle cx="1071.0" cy="177.1" r="3.9"/><circle cx="921.9" cy="212.3" r="3.9"/><circle cx="1031.3" cy="394.8" r="3.9"/><circle cx="981.5" cy="378.7" r="3.9"/><circle cx="900.9" cy="292.7" r="3.9"/><circle cx="790.4" cy="333.6" r="3.9"/><circle cx="894.3" cy="202.2" r="3.9"/><circle cx="883.7" cy="297.7" r="3.9"/><circle cx="1025.6" cy="396.5" r="3.9"/><circle cx="1113.9" cy="175.4" r="3.9"/><circle cx="1114.0" cy="200.5" r="3.9"/><circle cx="871.5" cy="249.6" r="3.9"/><circle cx="1008.7" cy="218.8" r="3.9"/><circle cx="933.2" cy="444.6" r="3.9"/><circle cx="990.9" cy="319.4" r="3.9"/><circle cx="991.7" cy="354.1" r="3.9"/><circle cx="925.3" cy="236.0" r="3.9"/><circle cx="997.8" cy="284.9" r="3.9"/><circle cx="1059.4" cy="367.4" r="3.9"/><circle cx="1036.0" cy="306.5" r="3.9"/><circle cx="935.0" cy="250.4" r="3.9"/><circle cx="965.1" cy="369.0" r="3.9"/><circle cx="1041.5" cy="419.8" r="3.9"/><circle cx="1043.7" cy="241.5" r="3.9"/><circle cx="1097.0" cy="432.8" r="3.9"/><circle cx="793.1" cy="272.5" r="3.9"/><circle cx="995.9" cy="143.4" r="3.9"/><circle cx="1053.7" cy="307.5" r="3.9"/><circle cx="1115.0" cy="442.6" r="3.9"/><circle cx="879.9" cy="297.6" r="3.9"/><circle cx="916.5" cy="415.6" r="3.9"/><circle cx="986.9" cy="444.3" r="3.9"/><circle cx="919.9" cy="204.1" r="3.9"/><circle cx="974.6" cy="178.9" r="3.9"/><circle cx="860.7" cy="244.6" r="3.9"/><circle cx="1028.0" cy="143.6" r="3.9"/><circle cx="1051.3" cy="419.4" r="3.9"/><circle cx="1129.1" cy="376.2" r="3.9"/><circle cx="861.6" cy="383.1" r="3.9"/><circle cx="1127.1" cy="232.1" r="3.9"/><circle cx="922.0" cy="240.4" r="3.9"/><circle cx="1040.2" cy="363.9" r="3.9"/><circle cx="1083.4" cy="362.3" r="3.9"/><circle cx="1029.0" cy="368.0" r="3.9"/><circle cx="857.6" cy="399.2" r="3.9"/><circle cx="876.2" cy="339.4" r="3.9"/><circle cx="952.3" cy="315.8" r="3.9"/><circle cx="1001.4" cy="234.3" r="3.9"/><circle cx="1044.8" cy="392.6" r="3.9"/><circle cx="1045.6" cy="448.7" r="3.9"/><circle cx="1108.2" cy="444.4" r="3.9"/><circle cx="920.8" cy="342.3" r="3.9"/><circle cx="1064.3" cy="319.4" r="3.9"/><circle cx="1086.1" cy="382.0" r="3.9"/><circle cx="919.9" cy="346.3" r="3.9"/><circle cx="1091.9" cy="191.1" r="3.9"/><circle cx="788.0" cy="292.3" r="3.9"/><circle cx="984.3" cy="341.5" r="3.9"/><circle cx="1027.9" cy="234.8" r="3.9"/><circle cx="827.1" cy="356.2" r="3.9"/><circle cx="987.8" cy="338.2" r="3.9"/><circle cx="1074.3" cy="397.2" r="3.9"/><circle cx="876.8" cy="334.4" r="3.9"/><circle cx="852.5" cy="195.1" r="3.9"/><circle cx="865.5" cy="402.8" r="3.9"/><circle cx="974.0" cy="445.6" r="3.9"/><circle cx="1128.5" cy="441.5" r="3.9"/><circle cx="1115.5" cy="151.0" r="3.9"/><circle cx="985.4" cy="255.4" r="3.9"/><circle cx="938.3" cy="171.5" r="3.9"/><circle cx="1129.1" cy="346.5" r="3.9"/><circle cx="1073.2" cy="324.1" r="3.9"/><circle cx="1021.9" cy="143.3" r="3.9"/><circle cx="851.3" cy="272.5" r="3.9"/><circle cx="932.3" cy="266.7" r="3.9"/><circle cx="942.9" cy="179.4" r="3.9"/><circle cx="1007.8" cy="389.0" r="3.9"/><circle cx="900.1" cy="351.9" r="3.9"/><circle cx="813.0" cy="385.1" r="3.9"/><circle cx="999.7" cy="148.9" r="3.9"/><circle cx="1090.3" cy="344.6" r="3.9"/><circle cx="988.7" cy="377.0" r="3.9"/><circle cx="1073.9" cy="367.3" r="3.9"/><circle cx="933.5" cy="264.0" r="3.9"/><circle cx="1028.7" cy="331.4" r="3.9"/><circle cx="856.7" cy="297.1" r="3.9"/><circle cx="900.6" cy="344.8" r="3.9"/><circle cx="1022.8" cy="292.5" r="3.9"/><circle cx="1096.0" cy="222.7" r="3.9"/><circle cx="1129.3" cy="304.6" r="3.9"/><circle cx="888.4" cy="264.3" r="3.9"/><circle cx="1117.9" cy="388.6" r="3.9"/><circle cx="782.2" cy="285.5" r="3.9"/><circle cx="1040.5" cy="339.3" r="3.9"/><circle cx="1104.7" cy="416.8" r="3.9"/><circle cx="905.1" cy="386.6" r="3.9"/><circle cx="1013.4" cy="460.3" r="3.9"/><circle cx="995.5" cy="209.7" r="3.9"/><circle cx="936.3" cy="405.4" r="3.9"/><circle cx="826.6" cy="327.8" r="3.9"/><circle cx="839.8" cy="165.7" r="3.9"/><circle cx="1108.8" cy="321.6" r="3.9"/><circle cx="1135.2" cy="205.9" r="3.9"/><circle cx="943.0" cy="205.1" r="3.9"/><circle cx="841.0" cy="223.2" r="3.9"/><circle cx="1091.8" cy="274.2" r="3.9"/><circle cx="1024.5" cy="287.8" r="3.9"/><circle cx="963.7" cy="330.1" r="3.9"/><circle cx="1081.3" cy="214.9" r="3.9"/><circle cx="1114.5" cy="384.0" r="3.9"/><circle cx="1126.2" cy="164.1" r="3.9"/><circle cx="840.0" cy="407.8" r="3.9"/><circle cx="1015.9" cy="392.2" r="3.9"/><circle cx="1052.0" cy="415.3" r="3.9"/><circle cx="985.9" cy="287.1" r="3.9"/><circle cx="853.2" cy="179.2" r="3.9"/><circle cx="844.1" cy="318.9" r="3.9"/><circle cx="813.3" cy="305.7" r="3.9"/><circle cx="828.0" cy="204.7" r="3.9"/><circle cx="1067.9" cy="371.4" r="3.9"/><circle cx="1054.0" cy="434.2" r="3.9"/><circle cx="834.8" cy="397.6" r="3.9"/><circle cx="1006.1" cy="388.7" r="3.9"/><circle cx="1062.1" cy="292.1" r="3.9"/><circle cx="1026.4" cy="370.8" r="3.9"/><circle cx="1111.5" cy="165.9" r="3.9"/><circle cx="852.8" cy="315.3" r="3.9"/><circle cx="929.2" cy="211.4" r="3.9"/><circle cx="895.0" cy="253.8" r="3.9"/><circle cx="873.7" cy="404.7" r="3.9"/><circle cx="1018.7" cy="220.3" r="3.9"/><circle cx="913.5" cy="317.7" r="3.9"/><circle cx="963.1" cy="458.0" r="3.9"/><circle cx="1047.4" cy="442.1" r="3.9"/><circle cx="875.9" cy="281.7" r="3.9"/><circle cx="933.6" cy="151.2" r="3.9"/><circle cx="822.0" cy="280.4" r="3.9"/><circle cx="1032.0" cy="346.6" r="3.9"/><circle cx="868.5" cy="212.8" r="3.9"/><circle cx="1046.2" cy="376.9" r="3.9"/><circle cx="836.3" cy="184.3" r="3.9"/><circle cx="941.7" cy="381.1" r="3.9"/><circle cx="1112.0" cy="153.0" r="3.9"/><circle cx="1013.5" cy="159.0" r="3.9"/><circle cx="942.3" cy="400.0" r="3.9"/><circle cx="1038.7" cy="208.9" r="3.9"/><circle cx="1113.9" cy="390.5" r="3.9"/><circle cx="1122.3" cy="268.8" r="3.9"/><circle cx="901.4" cy="442.3" r="3.9"/><circle cx="894.1" cy="437.3" r="3.9"/><circle cx="941.3" cy="333.9" r="3.9"/><circle cx="945.4" cy="459.1" r="3.9"/><circle cx="919.3" cy="247.1" r="3.9"/><circle cx="867.5" cy="381.9" r="3.9"/><circle cx="827.6" cy="207.6" r="3.9"/><circle cx="951.4" cy="272.8" r="3.9"/><circle cx="1039.2" cy="433.7" r="3.9"/><circle cx="878.0" cy="384.4" r="3.9"/><circle cx="1085.0" cy="293.3" r="3.9"/><circle cx="1026.4" cy="292.6" r="3.9"/><circle cx="912.6" cy="356.5" r="3.9"/><circle cx="864.5" cy="352.5" r="3.9"/><circle cx="876.8" cy="180.3" r="3.9"/><circle cx="846.2" cy="265.8" r="3.9"/><circle cx="918.6" cy="163.5" r="3.9"/><circle cx="980.5" cy="203.0" r="3.9"/><circle cx="955.1" cy="287.7" r="3.9"/><circle cx="972.8" cy="304.1" r="3.9"/><circle cx="1131.2" cy="224.2" r="3.9"/><circle cx="1052.8" cy="380.8" r="3.9"/><circle cx="1088.7" cy="383.5" r="3.9"/><circle cx="981.8" cy="159.3" r="3.9"/><circle cx="918.8" cy="262.4" r="3.9"/><circle cx="856.8" cy="169.3" r="3.9"/><circle cx="963.2" cy="252.4" r="3.9"/><circle cx="916.8" cy="329.0" r="3.9"/><circle cx="1053.5" cy="218.1" r="3.9"/><circle cx="937.0" cy="419.5" r="3.9"/><circle cx="1039.8" cy="283.0" r="3.9"/><circle cx="961.1" cy="409.0" r="3.9"/><circle cx="1116.0" cy="248.0" r="3.9"/><circle cx="1084.4" cy="403.9" r="3.9"/><circle cx="982.7" cy="332.7" r="3.9"/><circle cx="1087.5" cy="297.5" r="3.9"/><circle cx="969.8" cy="449.3" r="3.9"/><circle cx="829.7" cy="291.9" r="3.9"/><circle cx="950.2" cy="375.8" r="3.9"/><circle cx="881.2" cy="170.3" r="3.9"/><circle cx="1037.7" cy="458.5" r="3.9"/><circle cx="879.9" cy="297.8" r="3.9"/><circle cx="1082.1" cy="343.8" r="3.9"/><circle cx="900.3" cy="200.9" r="3.9"/><circle cx="1071.2" cy="372.9" r="3.9"/><circle cx="1071.7" cy="311.1" r="3.9"/><circle cx="1015.9" cy="349.1" r="3.9"/><circle cx="1088.2" cy="256.7" r="3.9"/><circle cx="1010.9" cy="263.2" r="3.9"/><circle cx="910.3" cy="288.6" r="3.9"/><circle cx="935.2" cy="325.0" r="3.9"/><circle cx="983.8" cy="241.8" r="3.9"/><circle cx="1076.0" cy="203.4" r="3.9"/><circle cx="946.9" cy="143.3" r="3.9"/><circle cx="928.3" cy="161.2" r="3.9"/><circle cx="990.2" cy="174.0" r="3.9"/><circle cx="1054.1" cy="212.4" r="3.9"/><circle cx="885.9" cy="321.9" r="3.9"/><circle cx="1119.1" cy="223.6" r="3.9"/><circle cx="872.4" cy="371.6" r="3.9"/><circle cx="1138.0" cy="432.9" r="3.9"/><circle cx="935.2" cy="280.6" r="3.9"/><circle cx="961.8" cy="344.6" r="3.9"/><circle cx="1016.3" cy="458.4" r="3.9"/><circle cx="1127.2" cy="327.2" r="3.9"/><circle cx="993.5" cy="459.8" r="3.9"/><circle cx="1126.5" cy="372.4" r="3.9"/><circle cx="898.7" cy="309.8" r="3.9"/><circle cx="1096.9" cy="276.5" r="3.9"/><circle cx="897.6" cy="207.2" r="3.9"/><circle cx="1049.5" cy="450.7" r="3.9"/><circle cx="1030.3" cy="315.2" r="3.9"/><circle cx="992.8" cy="401.3" r="3.9"/><circle cx="984.1" cy="274.7" r="3.9"/><circle cx="860.4" cy="174.9" r="3.9"/><circle cx="1069.2" cy="153.1" r="3.9"/><circle cx="915.1" cy="380.3" r="3.9"/><circle cx="1074.1" cy="296.6" r="3.9"/><circle cx="847.8" cy="387.7" r="3.9"/><circle cx="1073.0" cy="308.6" r="3.9"/><circle cx="939.7" cy="237.1" r="3.9"/><circle cx="931.2" cy="218.2" r="3.9"/><circle cx="896.7" cy="407.6" r="3.9"/><circle cx="977.8" cy="359.5" r="3.9"/><circle cx="827.4" cy="269.1" r="3.9"/><circle cx="911.8" cy="311.5" r="3.9"/><circle cx="1001.5" cy="290.6" r="3.9"/><circle cx="856.6" cy="285.0" r="3.9"/><circle cx="852.0" cy="216.0" r="3.9"/><circle cx="1122.5" cy="188.2" r="3.9"/><circle cx="1117.7" cy="215.9" r="3.9"/><circle cx="1116.6" cy="306.5" r="3.9"/><circle cx="1024.1" cy="403.7" r="3.9"/><circle cx="1016.2" cy="284.9" r="3.9"/><circle cx="980.0" cy="262.9" r="3.9"/><circle cx="1014.4" cy="241.9" r="3.9"/><circle cx="1019.5" cy="260.8" r="3.9"/><circle cx="972.8" cy="323.2" r="3.9"/><circle cx="953.6" cy="166.8" r="3.9"/><circle cx="1077.4" cy="353.9" r="3.9"/><circle cx="857.0" cy="314.8" r="3.9"/><circle cx="1044.1" cy="295.5" r="3.9"/><circle cx="972.2" cy="396.0" r="3.9"/><circle cx="1100.3" cy="273.9" r="3.9"/><circle cx="902.8" cy="445.3" r="3.9"/><circle cx="872.3" cy="327.9" r="3.9"/><circle cx="944.7" cy="173.3" r="3.9"/><circle cx="1012.6" cy="226.2" r="3.9"/><circle cx="994.1" cy="227.5" r="3.9"/><circle cx="1055.0" cy="281.6" r="3.9"/><circle cx="880.7" cy="188.6" r="3.9"/><circle cx="944.5" cy="296.7" r="3.9"/><circle cx="964.0" cy="182.7" r="3.9"/><circle cx="948.1" cy="405.1" r="3.9"/><circle cx="974.6" cy="205.8" r="3.9"/><circle cx="1060.7" cy="223.2" r="3.9"/><circle cx="971.1" cy="284.5" r="3.9"/><circle cx="936.3" cy="204.2" r="3.9"/><circle cx="1050.4" cy="143.4" r="3.9"/><circle cx="985.6" cy="184.6" r="3.9"/><circle cx="1072.6" cy="226.1" r="3.9"/><circle cx="1008.1" cy="240.1" r="3.9"/><circle cx="1040.9" cy="152.6" r="3.9"/><circle cx="893.9" cy="186.7" r="3.9"/><circle cx="900.8" cy="203.1" r="3.9"/><circle cx="856.8" cy="371.7" r="3.9"/><circle cx="980.1" cy="140.2" r="3.9"/><circle cx="952.9" cy="326.1" r="3.9"/><circle cx="1133.2" cy="316.9" r="3.9"/><circle cx="942.9" cy="456.7" r="3.9"/><circle cx="1025.0" cy="326.4" r="3.9"/><circle cx="958.5" cy="233.2" r="3.9"/><circle cx="988.9" cy="318.6" r="3.9"/><circle cx="903.9" cy="373.8" r="3.9"/><circle cx="893.1" cy="282.5" r="3.9"/><circle cx="1003.8" cy="349.2" r="3.9"/><circle cx="801.7" cy="312.7" r="3.9"/><circle cx="984.7" cy="316.0" r="3.9"/><circle cx="920.4" cy="450.8" r="3.9"/><circle cx="819.6" cy="209.3" r="3.9"/><circle cx="856.1" cy="247.4" r="3.9"/><circle cx="1017.5" cy="226.9" r="3.9"/><circle cx="948.1" cy="190.0" r="3.9"/><circle cx="954.2" cy="250.0" r="3.9"/><circle cx="1051.1" cy="280.7" r="3.9"/><circle cx="890.0" cy="193.9" r="3.9"/><circle cx="982.2" cy="225.8" r="3.9"/><circle cx="825.6" cy="288.8" r="3.9"/><circle cx="870.9" cy="404.9" r="3.9"/><circle cx="890.1" cy="409.5" r="3.9"/><circle cx="796.9" cy="304.0" r="3.9"/><circle cx="994.4" cy="231.1" r="3.9"/><circle cx="1024.7" cy="334.8" r="3.9"/><circle cx="861.3" cy="257.2" r="3.9"/><circle cx="1085.6" cy="333.6" r="3.9"/><circle cx="1135.4" cy="228.4" r="3.9"/><circle cx="830.1" cy="388.5" r="3.9"/><circle cx="945.7" cy="289.5" r="3.9"/><circle cx="940.1" cy="298.5" r="3.9"/><circle cx="1129.8" cy="387.3" r="3.9"/><circle cx="983.2" cy="439.5" r="3.9"/><circle cx="845.4" cy="164.3" r="3.9"/><circle cx="1089.0" cy="442.9" r="3.9"/><circle cx="1095.7" cy="421.2" r="3.9"/><circle cx="817.6" cy="373.7" r="3.9"/><circle cx="861.0" cy="286.2" r="3.9"/><circle cx="1021.7" cy="446.6" r="3.9"/><circle cx="1027.6" cy="447.9" r="3.9"/><circle cx="876.5" cy="319.3" r="3.9"/><circle cx="906.3" cy="313.8" r="3.9"/><circle cx="897.6" cy="158.6" r="3.9"/><circle cx="950.5" cy="401.4" r="3.9"/><circle cx="912.6" cy="351.5" r="3.9"/><circle cx="991.9" cy="361.4" r="3.9"/><circle cx="1010.8" cy="274.6" r="3.9"/><circle cx="1074.7" cy="339.9" r="3.9"/><circle cx="1090.5" cy="251.8" r="3.9"/><circle cx="818.2" cy="210.8" r="3.9"/><circle cx="971.3" cy="387.1" r="3.9"/><circle cx="929.2" cy="213.9" r="3.9"/><circle cx="923.5" cy="193.8" r="3.9"/><circle cx="778.4" cy="295.2" r="3.9"/><circle cx="1110.6" cy="308.7" r="3.9"/><circle cx="1054.9" cy="310.3" r="3.9"/><circle cx="1063.3" cy="254.0" r="3.9"/><circle cx="1112.7" cy="247.0" r="3.9"/><circle cx="959.7" cy="211.3" r="3.9"/><circle cx="872.8" cy="371.1" r="3.9"/><circle cx="1037.6" cy="215.3" r="3.9"/><circle cx="849.6" cy="290.3" r="3.9"/><circle cx="1122.7" cy="199.5" r="3.9"/><circle cx="834.1" cy="325.2" r="3.9"/><circle cx="1121.1" cy="340.0" r="3.9"/><circle cx="998.3" cy="241.9" r="3.9"/><circle cx="1097.1" cy="192.4" r="3.9"/><circle cx="1035.5" cy="195.1" r="3.9"/><circle cx="1119.3" cy="417.8" r="3.9"/><circle cx="1039.9" cy="305.6" r="3.9"/><circle cx="1065.2" cy="322.1" r="3.9"/><circle cx="1081.8" cy="395.9" r="3.9"/><circle cx="818.2" cy="242.5" r="3.9"/><circle cx="1057.7" cy="225.8" r="3.9"/><circle cx="934.9" cy="236.9" r="3.9"/><circle cx="1085.5" cy="321.5" r="3.9"/><circle cx="848.1" cy="215.0" r="3.9"/><circle cx="961.9" cy="344.9" r="3.9"/><circle cx="1128.6" cy="433.2" r="3.9"/><circle cx="862.2" cy="233.6" r="3.9"/><circle cx="923.9" cy="150.7" r="3.9"/><circle cx="1054.2" cy="379.1" r="3.9"/><circle cx="1051.4" cy="213.1" r="3.9"/><circle cx="1045.7" cy="178.3" r="3.9"/><circle cx="847.6" cy="377.6" r="3.9"/><circle cx="1058.7" cy="258.7" r="3.9"/><circle cx="897.4" cy="166.1" r="3.9"/><circle cx="873.1" cy="366.4" r="3.9"/><circle cx="1115.7" cy="260.8" r="3.9"/><circle cx="889.0" cy="260.5" r="3.9"/><circle cx="1026.2" cy="244.2" r="3.9"/><circle cx="1133.4" cy="385.7" r="3.9"/><circle cx="1011.1" cy="317.6" r="3.9"/><circle cx="957.0" cy="338.9" r="3.9"/><circle cx="837.1" cy="267.1" r="3.9"/><circle cx="928.1" cy="212.9" r="3.9"/><circle cx="1080.9" cy="304.2" r="3.9"/><circle cx="911.9" cy="309.3" r="3.9"/><circle cx="1078.8" cy="419.9" r="3.9"/><circle cx="824.6" cy="390.8" r="3.9"/><circle cx="1051.5" cy="303.0" r="3.9"/><circle cx="1103.3" cy="198.4" r="3.9"/><circle cx="880.4" cy="266.0" r="3.9"/><circle cx="905.1" cy="377.8" r="3.9"/><circle cx="807.8" cy="264.3" r="3.9"/><circle cx="1037.9" cy="178.9" r="3.9"/><circle cx="1058.6" cy="169.5" r="3.9"/><circle cx="1093.7" cy="402.1" r="3.9"/><circle cx="1077.2" cy="399.0" r="3.9"/><circle cx="975.4" cy="377.0" r="3.9"/><circle cx="849.7" cy="411.8" r="3.9"/><circle cx="1114.0" cy="233.4" r="3.9"/><circle cx="1038.2" cy="371.3" r="3.9"/><circle cx="928.2" cy="348.0" r="3.9"/><circle cx="1118.5" cy="233.4" r="3.9"/><circle cx="1029.8" cy="398.2" r="3.9"/><circle cx="953.8" cy="143.4" r="3.9"/><circle cx="930.3" cy="161.8" r="3.9"/><circle cx="1118.1" cy="354.4" r="3.9"/><circle cx="1038.0" cy="435.7" r="3.9"/><circle cx="1009.1" cy="320.5" r="3.9"/><circle cx="827.1" cy="253.2" r="3.9"/><circle cx="1077.8" cy="309.2" r="3.9"/><circle cx="1063.7" cy="229.2" r="3.9"/><circle cx="956.1" cy="306.4" r="3.9"/><circle cx="1058.6" cy="453.3" r="3.9"/><circle cx="792.3" cy="311.6" r="3.9"/><circle cx="1017.1" cy="249.5" r="3.9"/><circle cx="1058.5" cy="325.2" r="3.9"/><circle cx="924.8" cy="378.1" r="3.9"/><circle cx="1052.0" cy="418.0" r="3.9"/><circle cx="896.9" cy="172.0" r="3.9"/><circle cx="1021.4" cy="409.4" r="3.9"/><circle cx="994.2" cy="254.0" r="3.9"/><circle cx="918.5" cy="450.8" r="3.9"/><circle cx="1004.8" cy="203.8" r="3.9"/><circle cx="931.3" cy="289.2" r="3.9"/><circle cx="1006.4" cy="320.8" r="3.9"/><circle cx="994.1" cy="236.6" r="3.9"/><circle cx="874.6" cy="184.6" r="3.9"/><circle cx="911.4" cy="285.7" r="3.9"/><circle cx="1100.8" cy="353.9" r="3.9"/><circle cx="981.6" cy="261.1" r="3.9"/><circle cx="803.2" cy="332.5" r="3.9"/><circle cx="1113.2" cy="344.9" r="3.9"/><circle cx="871.1" cy="329.4" r="3.9"/><circle cx="960.6" cy="406.3" r="3.9"/><circle cx="1056.7" cy="212.8" r="3.9"/><circle cx="846.9" cy="314.6" r="3.9"/><circle cx="967.6" cy="345.8" r="3.9"/><circle cx="1008.5" cy="276.5" r="3.9"/><circle cx="908.0" cy="359.7" r="3.9"/><circle cx="959.7" cy="300.1" r="3.9"/><circle cx="953.7" cy="340.6" r="3.9"/><circle cx="967.4" cy="425.4" r="3.9"/><circle cx="1106.0" cy="335.2" r="3.9"/><circle cx="1106.8" cy="149.0" r="3.9"/><circle cx="1092.6" cy="336.5" r="3.9"/><circle cx="892.3" cy="333.5" r="3.9"/><circle cx="890.2" cy="388.7" r="3.9"/><circle cx="1015.9" cy="214.0" r="3.9"/><circle cx="1086.9" cy="422.7" r="3.9"/><circle cx="1123.1" cy="449.1" r="3.9"/><circle cx="1061.3" cy="305.6" r="3.9"/><circle cx="1103.6" cy="397.8" r="3.9"/><circle cx="931.9" cy="397.8" r="3.9"/><circle cx="874.0" cy="191.1" r="3.9"/><circle cx="1053.2" cy="248.4" r="3.9"/><circle cx="919.3" cy="402.6" r="3.9"/><circle cx="996.2" cy="216.8" r="3.9"/><circle cx="915.8" cy="218.5" r="3.9"/><circle cx="946.0" cy="284.3" r="3.9"/><circle cx="1073.3" cy="235.7" r="3.9"/><circle cx="1022.0" cy="163.1" r="3.9"/><circle cx="1116.4" cy="330.8" r="3.9"/><circle cx="985.4" cy="376.5" r="3.9"/><circle cx="892.1" cy="310.6" r="3.9"/><circle cx="974.7" cy="383.3" r="3.9"/><circle cx="971.8" cy="383.1" r="3.9"/><circle cx="961.7" cy="323.0" r="3.9"/><circle cx="951.2" cy="284.3" r="3.9"/><circle cx="934.7" cy="356.4" r="3.9"/><circle cx="928.0" cy="374.9" r="3.9"/><circle cx="1029.5" cy="194.1" r="3.9"/><circle cx="1013.9" cy="267.5" r="3.9"/><circle cx="937.5" cy="294.7" r="3.9"/><circle cx="1111.0" cy="441.1" r="3.9"/><circle cx="826.1" cy="296.3" r="3.9"/><circle cx="974.1" cy="156.5" r="3.9"/><circle cx="1096.4" cy="283.7" r="3.9"/><circle cx="1007.4" cy="225.3" r="3.9"/><circle cx="1133.6" cy="238.3" r="3.9"/><circle cx="955.9" cy="221.9" r="3.9"/><circle cx="970.6" cy="157.2" r="3.9"/><circle cx="1047.5" cy="357.6" r="3.9"/><circle cx="1092.5" cy="202.5" r="3.9"/><circle cx="979.3" cy="334.3" r="3.9"/><circle cx="1052.8" cy="177.6" r="3.9"/><circle cx="989.9" cy="405.9" r="3.9"/><circle cx="806.5" cy="323.5" r="3.9"/><circle cx="927.9" cy="315.2" r="3.9"/><circle cx="959.7" cy="360.7" r="3.9"/><circle cx="978.7" cy="358.4" r="3.9"/><circle cx="841.0" cy="260.0" r="3.9"/><circle cx="1123.9" cy="213.9" r="3.9"/><circle cx="1007.1" cy="365.8" r="3.9"/><circle cx="1023.2" cy="443.8" r="3.9"/><circle cx="811.6" cy="300.2" r="3.9"/><circle cx="822.7" cy="211.0" r="3.9"/><circle cx="1112.2" cy="246.5" r="3.9"/><circle cx="1128.0" cy="291.6" r="3.9"/><circle cx="894.4" cy="315.6" r="3.9"/><circle cx="870.4" cy="233.1" r="3.9"/><circle cx="1112.4" cy="219.5" r="3.9"/><circle cx="1017.1" cy="240.7" r="3.9"/><circle cx="1080.2" cy="177.3" r="3.9"/><circle cx="963.8" cy="450.9" r="3.9"/><circle cx="819.2" cy="250.1" r="3.9"/><circle cx="1126.2" cy="225.1" r="3.9"/><circle cx="1020.9" cy="143.5" r="3.9"/><circle cx="941.8" cy="332.3" r="3.9"/><circle cx="1055.0" cy="213.3" r="3.9"/><circle cx="964.4" cy="417.8" r="3.9"/><circle cx="803.6" cy="309.4" r="3.9"/><circle cx="1103.3" cy="411.9" r="3.9"/><circle cx="1110.8" cy="187.7" r="3.9"/><circle cx="1123.6" cy="284.6" r="3.9"/><circle cx="844.0" cy="279.5" r="3.9"/><circle cx="1133.5" cy="199.7" r="3.9"/><circle cx="973.4" cy="264.0" r="3.9"/><circle cx="1045.3" cy="317.8" r="3.9"/><circle cx="908.9" cy="377.2" r="3.9"/><circle cx="1030.1" cy="402.7" r="3.9"/><circle cx="999.4" cy="336.2" r="3.9"/><circle cx="929.3" cy="322.2" r="3.9"/><circle cx="998.0" cy="239.2" r="3.9"/><circle cx="906.0" cy="392.9" r="3.9"/><circle cx="809.2" cy="332.2" r="3.9"/><circle cx="1088.6" cy="322.0" r="3.9"/><circle cx="1069.1" cy="183.3" r="3.9"/><circle cx="871.6" cy="299.3" r="3.9"/><circle cx="1117.0" cy="378.9" r="3.9"/><circle cx="972.7" cy="152.0" r="3.9"/><circle cx="1075.2" cy="305.8" r="3.9"/><circle cx="882.4" cy="270.2" r="3.9"/><circle cx="957.7" cy="387.1" r="3.9"/><circle cx="1025.9" cy="145.6" r="3.9"/><circle cx="1068.9" cy="200.2" r="3.9"/><circle cx="913.5" cy="343.6" r="3.9"/><circle cx="975.3" cy="169.0" r="3.9"/><circle cx="958.2" cy="464.6" r="3.9"/><circle cx="939.4" cy="206.1" r="3.9"/><circle cx="1001.2" cy="183.3" r="3.9"/><circle cx="1122.8" cy="410.6" r="3.9"/><circle cx="980.2" cy="148.5" r="3.9"/><circle cx="1085.5" cy="435.3" r="3.9"/><circle cx="1087.7" cy="223.4" r="3.9"/><circle cx="1110.7" cy="268.7" r="3.9"/><circle cx="838.4" cy="378.6" r="3.9"/><circle cx="1066.0" cy="202.3" r="3.9"/><circle cx="988.3" cy="245.1" r="3.9"/><circle cx="933.1" cy="265.9" r="3.9"/><circle cx="954.3" cy="141.6" r="3.9"/><circle cx="864.4" cy="161.9" r="3.9"/><circle cx="903.4" cy="320.0" r="3.9"/><circle cx="824.6" cy="284.3" r="3.9"/><circle cx="993.4" cy="391.2" r="3.9"/><circle cx="998.2" cy="291.9" r="3.9"/><circle cx="961.5" cy="158.3" r="3.9"/><circle cx="1096.8" cy="226.6" r="3.9"/><circle cx="1028.4" cy="205.4" r="3.9"/><circle cx="1079.4" cy="219.1" r="3.9"/><circle cx="905.3" cy="334.4" r="3.9"/><circle cx="972.5" cy="419.9" r="3.9"/><circle cx="839.7" cy="376.1" r="3.9"/><circle cx="1086.7" cy="142.3" r="3.9"/><circle cx="1091.8" cy="361.3" r="3.9"/><circle cx="1112.4" cy="321.2" r="3.9"/><circle cx="885.8" cy="183.1" r="3.9"/><circle cx="966.0" cy="431.4" r="3.9"/><circle cx="927.8" cy="345.3" r="3.9"/><circle cx="1007.3" cy="387.1" r="3.9"/><circle cx="1133.5" cy="207.5" r="3.9"/><circle cx="945.2" cy="383.1" r="3.9"/><circle cx="906.4" cy="230.0" r="3.9"/><circle cx="1002.5" cy="181.0" r="3.9"/><circle cx="982.4" cy="157.9" r="3.9"/><circle cx="921.5" cy="442.5" r="3.9"/><circle cx="943.5" cy="400.7" r="3.9"/><circle cx="825.9" cy="334.0" r="3.9"/><circle cx="1044.4" cy="232.8" r="3.9"/><circle cx="955.7" cy="306.1" r="3.9"/><circle cx="1014.2" cy="298.6" r="3.9"/><circle cx="1084.2" cy="350.6" r="3.9"/><circle cx="988.0" cy="448.3" r="3.9"/><circle cx="1018.9" cy="417.2" r="3.9"/><circle cx="1050.3" cy="349.3" r="3.9"/><circle cx="894.8" cy="238.7" r="3.9"/><circle cx="1065.1" cy="351.5" r="3.9"/><circle cx="975.0" cy="146.7" r="3.9"/><circle cx="1056.0" cy="354.8" r="3.9"/><circle cx="860.3" cy="270.7" r="3.9"/><circle cx="1092.0" cy="203.8" r="3.9"/><circle cx="1069.5" cy="268.0" r="3.9"/><circle cx="1103.4" cy="150.9" r="3.9"/><circle cx="1098.9" cy="167.1" r="3.9"/><circle cx="1092.2" cy="308.9" r="3.9"/><circle cx="881.5" cy="276.7" r="3.9"/><circle cx="982.6" cy="138.5" r="3.9"/><circle cx="884.4" cy="247.9" r="3.9"/><circle cx="1033.2" cy="454.1" r="3.9"/><circle cx="867.7" cy="230.7" r="3.9"/><circle cx="1023.4" cy="162.0" r="3.9"/><circle cx="1042.0" cy="210.3" r="3.9"/><circle cx="1061.1" cy="424.4" r="3.9"/><circle cx="1095.0" cy="368.6" r="3.9"/><circle cx="906.1" cy="264.1" r="3.9"/><circle cx="1014.4" cy="453.6" r="3.9"/><circle cx="1085.0" cy="195.4" r="3.9"/><circle cx="1076.5" cy="257.8" r="3.9"/><circle cx="867.0" cy="363.3" r="3.9"/><circle cx="1000.0" cy="169.1" r="3.9"/><circle cx="774.9" cy="305.3" r="3.9"/><circle cx="916.0" cy="267.0" r="3.9"/><circle cx="1014.0" cy="403.2" r="3.9"/><circle cx="1090.7" cy="241.2" r="3.9"/><circle cx="993.7" cy="381.2" r="3.9"/><circle cx="1000.0" cy="147.6" r="3.9"/><circle cx="888.2" cy="425.0" r="3.9"/><circle cx="874.0" cy="300.7" r="3.9"/><circle cx="834.2" cy="301.8" r="3.9"/><circle cx="938.7" cy="397.9" r="3.9"/><circle cx="949.2" cy="229.5" r="3.9"/><circle cx="1111.9" cy="435.2" r="3.9"/><circle cx="957.8" cy="322.9" r="3.9"/><circle cx="1110.7" cy="408.1" r="3.9"/><circle cx="1127.2" cy="272.8" r="3.9"/><circle cx="959.9" cy="357.6" r="3.9"/><circle cx="888.6" cy="262.4" r="3.9"/><circle cx="998.0" cy="459.1" r="3.9"/><circle cx="856.3" cy="312.7" r="3.9"/><circle cx="955.1" cy="466.6" r="3.9"/><circle cx="1135.7" cy="194.9" r="3.9"/><circle cx="1076.0" cy="345.4" r="3.9"/><circle cx="823.6" cy="343.2" r="3.9"/><circle cx="926.4" cy="412.7" r="3.9"/><circle cx="946.2" cy="399.6" r="3.9"/><circle cx="978.1" cy="220.7" r="3.9"/><circle cx="1025.5" cy="179.9" r="3.9"/><circle cx="860.9" cy="352.7" r="3.9"/><circle cx="993.5" cy="320.8" r="3.9"/><circle cx="1018.7" cy="379.1" r="3.9"/><circle cx="1076.2" cy="367.0" r="3.9"/><circle cx="835.0" cy="179.3" r="3.9"/><circle cx="1042.2" cy="261.2" r="3.9"/><circle cx="1120.1" cy="357.2" r="3.9"/><circle cx="788.9" cy="290.5" r="3.9"/><circle cx="996.0" cy="360.3" r="3.9"/><circle cx="899.8" cy="226.6" r="3.9"/><circle cx="1002.7" cy="420.6" r="3.9"/><circle cx="1045.0" cy="373.4" r="3.9"/><circle cx="1132.3" cy="325.5" r="3.9"/><circle cx="993.0" cy="284.9" r="3.9"/><circle cx="1025.5" cy="283.4" r="3.9"/><circle cx="879.7" cy="375.7" r="3.9"/><circle cx="1009.3" cy="310.3" r="3.9"/><circle cx="1126.0" cy="404.7" r="3.9"/><circle cx="1024.9" cy="287.6" r="3.9"/><circle cx="951.4" cy="208.5" r="3.9"/><circle cx="933.4" cy="343.6" r="3.9"/><circle cx="1126.2" cy="342.0" r="3.9"/><circle cx="993.5" cy="364.2" r="3.9"/><circle cx="1016.7" cy="455.9" r="3.9"/><circle cx="982.3" cy="255.9" r="3.9"/><circle cx="843.3" cy="246.5" r="3.9"/><circle cx="985.7" cy="300.0" r="3.9"/><circle cx="814.4" cy="269.0" r="3.9"/><circle cx="863.9" cy="235.7" r="3.9"/><circle cx="835.8" cy="242.3" r="3.9"/><circle cx="936.4" cy="465.4" r="3.9"/><circle cx="907.5" cy="347.9" r="3.9"/><circle cx="830.4" cy="217.9" r="3.9"/><circle cx="916.8" cy="309.8" r="3.9"/><circle cx="905.5" cy="170.3" r="3.9"/><circle cx="1093.7" cy="447.1" r="3.9"/><circle cx="1119.8" cy="272.5" r="3.9"/><circle cx="931.3" cy="352.7" r="3.9"/><circle cx="887.4" cy="238.2" r="3.9"/><circle cx="1092.4" cy="288.2" r="3.9"/><circle cx="1020.1" cy="146.9" r="3.9"/><circle cx="876.3" cy="379.6" r="3.9"/><circle cx="937.6" cy="188.5" r="3.9"/><circle cx="948.0" cy="157.1" r="3.9"/><circle cx="1117.3" cy="243.4" r="3.9"/><circle cx="844.7" cy="184.1" r="3.9"/><circle cx="897.7" cy="247.7" r="3.9"/><circle cx="945.7" cy="273.2" r="3.9"/><circle cx="1067.8" cy="321.0" r="3.9"/><circle cx="963.8" cy="175.1" r="3.9"/><circle cx="1010.0" cy="390.7" r="3.9"/><circle cx="1115.9" cy="406.7" r="3.9"/><circle cx="1045.5" cy="178.3" r="3.9"/><circle cx="944.8" cy="442.2" r="3.9"/><circle cx="982.9" cy="375.0" r="3.9"/><circle cx="1069.1" cy="331.2" r="3.9"/><circle cx="827.0" cy="403.5" r="3.9"/><circle cx="892.9" cy="209.7" r="3.9"/><circle cx="887.7" cy="204.4" r="3.9"/><circle cx="928.7" cy="455.5" r="3.9"/><circle cx="907.3" cy="210.1" r="3.9"/><circle cx="1053.6" cy="174.4" r="3.9"/><circle cx="916.9" cy="199.7" r="3.9"/><circle cx="827.5" cy="377.1" r="3.9"/><circle cx="835.7" cy="330.2" r="3.9"/><circle cx="949.6" cy="423.4" r="3.9"/><circle cx="935.3" cy="256.4" r="3.9"/><circle cx="1048.2" cy="291.4" r="3.9"/><circle cx="912.7" cy="259.3" r="3.9"/><circle cx="982.5" cy="398.4" r="3.9"/><circle cx="911.8" cy="328.3" r="3.9"/><circle cx="1069.8" cy="303.9" r="3.9"/><circle cx="875.1" cy="367.4" r="3.9"/><circle cx="1044.2" cy="386.3" r="3.9"/><circle cx="904.6" cy="321.6" r="3.9"/><circle cx="1112.8" cy="256.2" r="3.9"/><circle cx="860.3" cy="230.4" r="3.9"/><circle cx="875.7" cy="179.2" r="3.9"/><circle cx="966.8" cy="447.6" r="3.9"/><circle cx="995.3" cy="284.0" r="3.9"/><circle cx="959.0" cy="200.2" r="3.9"/><circle cx="887.1" cy="237.2" r="3.9"/><circle cx="1036.1" cy="353.6" r="3.9"/><circle cx="911.7" cy="386.4" r="3.9"/><circle cx="1069.7" cy="401.8" r="3.9"/><circle cx="1039.8" cy="337.0" r="3.9"/><circle cx="1105.5" cy="428.9" r="3.9"/><circle cx="944.6" cy="364.3" r="3.9"/><circle cx="856.3" cy="395.5" r="3.9"/><circle cx="877.1" cy="180.2" r="3.9"/><circle cx="1099.1" cy="168.4" r="3.9"/><circle cx="994.9" cy="198.3" r="3.9"/><circle cx="911.7" cy="369.5" r="3.9"/><circle cx="1041.2" cy="284.7" r="3.9"/><circle cx="975.7" cy="301.6" r="3.9"/><circle cx="1049.1" cy="363.3" r="3.9"/><circle cx="838.6" cy="365.1" r="3.9"/><circle cx="870.9" cy="201.7" r="3.9"/><circle cx="1101.8" cy="419.2" r="3.9"/><circle cx="861.4" cy="206.8" r="3.9"/><circle cx="929.3" cy="250.9" r="3.9"/><circle cx="824.9" cy="262.7" r="3.9"/><circle cx="966.2" cy="163.8" r="3.9"/><circle cx="1081.8" cy="150.7" r="3.9"/><circle cx="840.0" cy="257.3" r="3.9"/><circle cx="855.6" cy="198.5" r="3.9"/><circle cx="890.0" cy="241.7" r="3.9"/><circle cx="916.6" cy="241.4" r="3.9"/><circle cx="823.5" cy="380.2" r="3.9"/><circle cx="1008.6" cy="215.9" r="3.9"/><circle cx="779.9" cy="307.3" r="3.9"/><circle cx="830.6" cy="374.4" r="3.9"/><circle cx="879.2" cy="223.6" r="3.9"/><circle cx="851.0" cy="399.6" r="3.9"/><circle cx="859.6" cy="377.3" r="3.9"/><circle cx="986.4" cy="381.4" r="3.9"/><circle cx="861.9" cy="343.9" r="3.9"/><circle cx="902.5" cy="177.8" r="3.9"/><circle cx="1083.4" cy="291.7" r="3.9"/><circle cx="919.9" cy="239.9" r="3.9"/><circle cx="1133.0" cy="441.2" r="3.9"/><circle cx="1133.6" cy="217.8" r="3.9"/><circle cx="895.5" cy="212.6" r="3.9"/><circle cx="1020.2" cy="397.0" r="3.9"/><circle cx="983.8" cy="347.5" r="3.9"/><circle cx="912.9" cy="266.8" r="3.9"/><circle cx="1026.1" cy="403.5" r="3.9"/><circle cx="1116.8" cy="376.2" r="3.9"/><circle cx="968.1" cy="139.4" r="3.9"/><circle cx="918.8" cy="201.9" r="3.9"/><circle cx="879.4" cy="356.9" r="3.9"/><circle cx="912.4" cy="431.9" r="3.9"/><circle cx="967.0" cy="269.8" r="3.9"/><circle cx="897.4" cy="261.6" r="3.9"/><circle cx="912.4" cy="379.0" r="3.9"/><circle cx="1081.9" cy="312.9" r="3.9"/><circle cx="1027.2" cy="212.5" r="3.9"/><circle cx="947.3" cy="163.0" r="3.9"/><circle cx="827.6" cy="340.1" r="3.9"/><circle cx="1078.7" cy="243.7" r="3.9"/><circle cx="1048.4" cy="293.8" r="3.9"/><circle cx="1091.1" cy="253.4" r="3.9"/><circle cx="1049.4" cy="383.1" r="3.9"/><circle cx="1115.6" cy="188.7" r="3.9"/><circle cx="1129.2" cy="408.0" r="3.9"/><circle cx="1000.8" cy="242.6" r="3.9"/><circle cx="851.9" cy="173.2" r="3.9"/><circle cx="1072.1" cy="425.6" r="3.9"/><circle cx="1039.8" cy="348.9" r="3.9"/><circle cx="859.5" cy="293.3" r="3.9"/><circle cx="816.6" cy="308.9" r="3.9"/><circle cx="971.0" cy="354.4" r="3.9"/><circle cx="774.2" cy="301.9" r="3.9"/><circle cx="945.4" cy="237.5" r="3.9"/><circle cx="1089.9" cy="263.2" r="3.9"/><circle cx="872.4" cy="374.6" r="3.9"/><circle cx="828.6" cy="402.4" r="3.9"/><circle cx="1095.2" cy="436.5" r="3.9"/><circle cx="1127.0" cy="342.8" r="3.9"/><circle cx="995.3" cy="151.6" r="3.9"/><circle cx="953.1" cy="288.9" r="3.9"/><circle cx="854.0" cy="347.0" r="3.9"/><circle cx="802.2" cy="326.6" r="3.9"/><circle cx="1027.6" cy="246.6" r="3.9"/><circle cx="1049.1" cy="416.7" r="3.9"/><circle cx="1120.5" cy="168.6" r="3.9"/><circle cx="1037.8" cy="443.9" r="3.9"/><circle cx="894.3" cy="415.3" r="3.9"/><circle cx="816.1" cy="330.9" r="3.9"/><circle cx="893.4" cy="404.9" r="3.9"/><circle cx="915.2" cy="321.9" r="3.9"/><circle cx="927.7" cy="165.7" r="3.9"/><circle cx="947.7" cy="286.8" r="3.9"/><circle cx="1052.4" cy="255.3" r="3.9"/><circle cx="1107.1" cy="389.5" r="3.9"/><circle cx="862.8" cy="239.7" r="3.9"/><circle cx="1047.8" cy="452.4" r="3.9"/><circle cx="864.9" cy="295.7" r="3.9"/><circle cx="931.1" cy="170.7" r="3.9"/><circle cx="1093.6" cy="259.7" r="3.9"/><circle cx="858.2" cy="298.4" r="3.9"/><circle cx="963.7" cy="184.1" r="3.9"/><circle cx="900.9" cy="301.0" r="3.9"/><circle cx="1016.2" cy="235.1" r="3.9"/><circle cx="974.7" cy="356.8" r="3.9"/><circle cx="988.7" cy="152.0" r="3.9"/><circle cx="906.6" cy="309.7" r="3.9"/><circle cx="1043.8" cy="366.0" r="3.9"/><circle cx="901.0" cy="169.6" r="3.9"/><circle cx="1129.5" cy="177.7" r="3.9"/><circle cx="1034.0" cy="314.4" r="3.9"/><circle cx="1055.9" cy="183.4" r="3.9"/><circle cx="1115.4" cy="210.4" r="3.9"/><circle cx="861.0" cy="314.4" r="3.9"/><circle cx="988.8" cy="138.9" r="3.9"/><circle cx="990.7" cy="296.1" r="3.9"/><circle cx="1008.9" cy="184.6" r="3.9"/><circle cx="1083.4" cy="438.3" r="3.9"/><circle cx="1056.7" cy="312.0" r="3.9"/><circle cx="1036.4" cy="464.0" r="3.9"/><circle cx="1084.7" cy="353.1" r="3.9"/><circle cx="1030.8" cy="447.9" r="3.9"/><circle cx="820.9" cy="393.3" r="3.9"/><circle cx="1064.2" cy="417.4" r="3.9"/><circle cx="962.1" cy="465.6" r="3.9"/><circle cx="893.6" cy="236.4" r="3.9"/><circle cx="966.8" cy="286.7" r="3.9"/><circle cx="966.7" cy="215.4" r="3.9"/><circle cx="813.1" cy="329.4" r="3.9"/><circle cx="994.0" cy="314.8" r="3.9"/><circle cx="788.7" cy="331.3" r="3.9"/><circle cx="895.3" cy="161.4" r="3.9"/><circle cx="1073.8" cy="249.8" r="3.9"/><circle cx="1019.1" cy="206.6" r="3.9"/><circle cx="1064.6" cy="210.3" r="3.9"/><circle cx="981.6" cy="463.0" r="3.9"/><circle cx="982.3" cy="413.6" r="3.9"/><circle cx="821.4" cy="368.2" r="3.9"/><circle cx="946.9" cy="396.2" r="3.9"/><circle cx="1099.1" cy="289.2" r="3.9"/><circle cx="991.7" cy="181.7" r="3.9"/><circle cx="878.8" cy="415.5" r="3.9"/><circle cx="1089.0" cy="415.6" r="3.9"/><circle cx="967.0" cy="432.2" r="3.9"/><circle cx="830.8" cy="200.4" r="3.9"/><circle cx="1112.6" cy="301.7" r="3.9"/><circle cx="1112.9" cy="396.6" r="3.9"/><circle cx="830.9" cy="182.8" r="3.9"/><circle cx="981.9" cy="193.3" r="3.9"/><circle cx="1113.4" cy="437.9" r="3.9"/></g><g fill="#fbbd00"><circle cx="1202.9" cy="322.5" r="3.8"/><circle cx="1194.5" cy="255.0" r="3.8"/><circle cx="1173.1" cy="263.8" r="3.8"/><circle cx="1176.1" cy="258.3" r="3.8"/><circle cx="1152.1" cy="354.3" r="3.8"/><circle cx="1145.8" cy="420.3" r="3.8"/><circle cx="1190.3" cy="275.5" r="3.8"/><circle cx="1173.6" cy="246.7" r="3.8"/><circle cx="1205.3" cy="315.6" r="3.8"/><circle cx="1170.2" cy="253.3" r="3.8"/><circle cx="1172.6" cy="237.4" r="3.8"/><circle cx="1141.1" cy="319.5" r="3.8"/><circle cx="1145.2" cy="336.4" r="3.8"/><circle cx="1178.8" cy="256.7" r="3.8"/><circle cx="1152.5" cy="303.6" r="3.8"/><circle cx="1160.0" cy="300.5" r="3.8"/><circle cx="1146.8" cy="225.1" r="3.8"/><circle cx="1161.4" cy="298.4" r="3.8"/><circle cx="1186.6" cy="361.2" r="3.8"/><circle cx="1193.3" cy="384.6" r="3.8"/><circle cx="1144.4" cy="197.5" r="3.8"/><circle cx="1168.3" cy="236.0" r="3.8"/><circle cx="1152.3" cy="258.0" r="3.8"/><circle cx="1153.0" cy="324.4" r="3.8"/><circle cx="1201.0" cy="315.8" r="3.8"/><circle cx="1187.7" cy="267.3" r="3.8"/><circle cx="1189.0" cy="354.6" r="3.8"/><circle cx="1200.8" cy="304.5" r="3.8"/><circle cx="1169.9" cy="243.4" r="3.8"/><circle cx="1189.5" cy="243.6" r="3.8"/><circle cx="1174.2" cy="247.5" r="3.8"/><circle cx="1175.3" cy="347.6" r="3.8"/><circle cx="1158.9" cy="254.2" r="3.8"/><circle cx="1199.0" cy="279.7" r="3.8"/><circle cx="1140.5" cy="357.4" r="3.8"/><circle cx="1190.0" cy="387.0" r="3.8"/><circle cx="1176.3" cy="374.2" r="3.8"/><circle cx="1148.3" cy="229.4" r="3.8"/><circle cx="1169.8" cy="212.5" r="3.8"/><circle cx="1171.8" cy="322.6" r="3.8"/><circle cx="1196.0" cy="281.8" r="3.8"/><circle cx="1174.8" cy="254.4" r="3.8"/><circle cx="1175.9" cy="264.2" r="3.8"/><circle cx="1174.1" cy="388.3" r="3.8"/><circle cx="1157.7" cy="319.4" r="3.8"/><circle cx="1141.4" cy="381.1" r="3.8"/><circle cx="1142.6" cy="263.5" r="3.8"/><circle cx="1187.6" cy="229.8" r="3.8"/><circle cx="1192.8" cy="315.6" r="3.8"/><circle cx="1197.9" cy="356.4" r="3.8"/><circle cx="1156.7" cy="382.2" r="3.8"/><circle cx="1148.6" cy="367.7" r="3.8"/><circle cx="1164.4" cy="335.9" r="3.8"/><circle cx="1150.9" cy="405.0" r="3.8"/><circle cx="1158.9" cy="282.2" r="3.8"/><circle cx="1152.1" cy="387.1" r="3.8"/><circle cx="1193.1" cy="266.1" r="3.8"/><circle cx="1198.9" cy="327.0" r="3.8"/><circle cx="1168.4" cy="256.3" r="3.8"/><circle cx="1177.5" cy="380.9" r="3.8"/><circle cx="1169.8" cy="384.6" r="3.8"/><circle cx="1138.8" cy="289.4" r="3.8"/><circle cx="1173.1" cy="211.9" r="3.8"/><circle cx="1184.0" cy="253.5" r="3.8"/><circle cx="1140.2" cy="263.5" r="3.8"/><circle cx="1157.3" cy="369.2" r="3.8"/><circle cx="1168.8" cy="387.5" r="3.8"/><circle cx="1149.4" cy="402.3" r="3.8"/><circle cx="1167.8" cy="278.7" r="3.8"/><circle cx="1156.3" cy="330.8" r="3.8"/><circle cx="1150.0" cy="225.4" r="3.8"/><circle cx="1150.0" cy="339.1" r="3.8"/><circle cx="1139.2" cy="288.6" r="3.8"/><circle cx="1189.4" cy="312.8" r="3.8"/><circle cx="1160.2" cy="253.0" r="3.8"/><circle cx="1141.2" cy="333.8" r="3.8"/><circle cx="1149.5" cy="405.1" r="3.8"/><circle cx="1139.6" cy="216.7" r="3.8"/><circle cx="1150.5" cy="238.5" r="3.8"/><circle cx="1162.6" cy="325.8" r="3.8"/><circle cx="1156.3" cy="343.6" r="3.8"/><circle cx="1156.4" cy="272.3" r="3.8"/><circle cx="1146.6" cy="342.7" r="3.8"/><circle cx="1138.7" cy="349.5" r="3.8"/><circle cx="1210.3" cy="315.9" r="3.8"/><circle cx="1184.3" cy="344.2" r="3.8"/><circle cx="1176.7" cy="199.6" r="3.8"/><circle cx="1139.5" cy="391.7" r="3.8"/><circle cx="1143.0" cy="391.6" r="3.8"/><circle cx="1204.1" cy="310.5" r="3.8"/><circle cx="1142.4" cy="282.7" r="3.8"/><circle cx="1172.1" cy="360.7" r="3.8"/><circle cx="1181.4" cy="304.8" r="3.8"/><circle cx="1142.2" cy="205.1" r="3.8"/><circle cx="1164.3" cy="286.6" r="3.8"/><circle cx="1203.1" cy="290.5" r="3.8"/><circle cx="1159.1" cy="346.4" r="3.8"/><circle cx="1176.2" cy="318.7" r="3.8"/><circle cx="1176.8" cy="246.0" r="3.8"/><circle cx="1184.5" cy="285.9" r="3.8"/><circle cx="1157.0" cy="309.5" r="3.8"/><circle cx="1167.0" cy="314.8" r="3.8"/><circle cx="1176.4" cy="358.1" r="3.8"/><circle cx="1151.6" cy="365.0" r="3.8"/><circle cx="1176.7" cy="382.1" r="3.8"/><circle cx="1196.7" cy="362.3" r="3.8"/><circle cx="1172.0" cy="209.3" r="3.8"/><circle cx="1188.6" cy="270.4" r="3.8"/><circle cx="1153.0" cy="406.4" r="3.8"/><circle cx="1173.4" cy="286.7" r="3.8"/><circle cx="1189.6" cy="257.0" r="3.8"/><circle cx="1149.4" cy="363.1" r="3.8"/><circle cx="1144.2" cy="274.0" r="3.8"/><circle cx="1161.0" cy="394.3" r="3.8"/><circle cx="1148.1" cy="227.8" r="3.8"/><circle cx="1198.3" cy="320.4" r="3.8"/><circle cx="1171.0" cy="240.5" r="3.8"/><circle cx="1157.7" cy="211.3" r="3.8"/><circle cx="1170.7" cy="402.3" r="3.8"/><circle cx="1172.5" cy="319.5" r="3.8"/><circle cx="1192.0" cy="347.3" r="3.8"/><circle cx="1174.0" cy="288.0" r="3.8"/><circle cx="1166.4" cy="292.0" r="3.8"/><circle cx="1159.0" cy="294.0" r="3.8"/><circle cx="1146.8" cy="247.7" r="3.8"/><circle cx="1185.1" cy="260.3" r="3.8"/><circle cx="1200.3" cy="272.2" r="3.8"/><circle cx="1186.3" cy="282.4" r="3.8"/><circle cx="1161.4" cy="263.6" r="3.8"/><circle cx="1150.4" cy="384.1" r="3.8"/><circle cx="1177.0" cy="300.8" r="3.8"/><circle cx="1177.8" cy="276.5" r="3.8"/><circle cx="1140.4" cy="216.6" r="3.8"/><circle cx="1203.2" cy="322.5" r="3.8"/><circle cx="1163.2" cy="190.5" r="3.8"/><circle cx="1167.7" cy="284.9" r="3.8"/><circle cx="1181.6" cy="354.1" r="3.8"/><circle cx="1184.1" cy="258.8" r="3.8"/><circle cx="1186.7" cy="390.0" r="3.8"/><circle cx="1195.0" cy="237.7" r="3.8"/><circle cx="1172.6" cy="280.6" r="3.8"/><circle cx="1149.1" cy="338.1" r="3.8"/><circle cx="1176.7" cy="354.7" r="3.8"/><circle cx="1164.8" cy="400.5" r="3.8"/><circle cx="1154.5" cy="358.9" r="3.8"/><circle cx="1158.6" cy="303.5" r="3.8"/><circle cx="1164.3" cy="391.1" r="3.8"/><circle cx="1179.6" cy="352.9" r="3.8"/><circle cx="1143.0" cy="291.0" r="3.8"/><circle cx="1168.1" cy="282.7" r="3.8"/><circle cx="1199.8" cy="275.5" r="3.8"/><circle cx="1184.9" cy="280.4" r="3.8"/><circle cx="1192.7" cy="300.1" r="3.8"/><circle cx="1202.4" cy="357.5" r="3.8"/><circle cx="1145.6" cy="398.3" r="3.8"/><circle cx="1143.6" cy="395.2" r="3.8"/><circle cx="1147.5" cy="362.5" r="3.8"/><circle cx="1150.5" cy="356.5" r="3.8"/><circle cx="1139.3" cy="240.4" r="3.8"/><circle cx="1194.1" cy="281.7" r="3.8"/><circle cx="1173.4" cy="355.2" r="3.8"/><circle cx="1170.7" cy="205.3" r="3.8"/><circle cx="1163.2" cy="393.6" r="3.8"/><circle cx="1162.5" cy="357.8" r="3.8"/><circle cx="1177.9" cy="293.7" r="3.8"/><circle cx="1170.5" cy="304.5" r="3.8"/><circle cx="1172.9" cy="275.8" r="3.8"/><circle cx="1197.9" cy="289.6" r="3.8"/><circle cx="1142.1" cy="323.0" r="3.8"/><circle cx="1142.4" cy="227.4" r="3.8"/><circle cx="1171.0" cy="346.2" r="3.8"/><circle cx="1190.5" cy="263.9" r="3.8"/><circle cx="1159.2" cy="211.3" r="3.8"/><circle cx="1184.6" cy="354.6" r="3.8"/><circle cx="1150.2" cy="368.3" r="3.8"/><circle cx="1163.2" cy="246.9" r="3.8"/><circle cx="1194.4" cy="230.0" r="3.8"/><circle cx="1167.3" cy="248.2" r="3.8"/><circle cx="1152.0" cy="254.3" r="3.8"/><circle cx="1155.3" cy="363.3" r="3.8"/><circle cx="1158.8" cy="367.6" r="3.8"/><circle cx="1184.5" cy="231.1" r="3.8"/><circle cx="1154.1" cy="329.1" r="3.8"/><circle cx="1163.0" cy="357.4" r="3.8"/><circle cx="1151.8" cy="283.4" r="3.8"/><circle cx="1168.2" cy="325.6" r="3.8"/><circle cx="1187.8" cy="236.3" r="3.8"/><circle cx="1141.1" cy="296.1" r="3.8"/><circle cx="1192.7" cy="325.5" r="3.8"/><circle cx="1140.3" cy="300.5" r="3.8"/><circle cx="1169.5" cy="205.6" r="3.8"/><circle cx="1194.9" cy="253.2" r="3.8"/><circle cx="1158.3" cy="264.2" r="3.8"/><circle cx="1199.3" cy="242.2" r="3.8"/><circle cx="1188.0" cy="346.2" r="3.8"/><circle cx="1141.7" cy="325.4" r="3.8"/><circle cx="1165.7" cy="301.4" r="3.8"/><circle cx="1194.6" cy="376.9" r="3.8"/><circle cx="1162.2" cy="265.3" r="3.8"/><circle cx="1166.7" cy="215.2" r="3.8"/><circle cx="1140.0" cy="369.9" r="3.8"/><circle cx="1165.0" cy="376.3" r="3.8"/><circle cx="1140.2" cy="227.0" r="3.8"/><circle cx="1188.3" cy="233.1" r="3.8"/><circle cx="1155.3" cy="318.2" r="3.8"/><circle cx="1190.3" cy="354.1" r="3.8"/><circle cx="1146.1" cy="232.5" r="3.8"/><circle cx="1180.7" cy="318.5" r="3.8"/><circle cx="1157.4" cy="306.8" r="3.8"/><circle cx="1160.0" cy="249.1" r="3.8"/><circle cx="1190.0" cy="365.5" r="3.8"/><circle cx="1192.4" cy="270.7" r="3.8"/><circle cx="1161.7" cy="272.9" r="3.8"/><circle cx="1199.7" cy="268.5" r="3.8"/><circle cx="1162.1" cy="335.4" r="3.8"/><circle cx="1170.5" cy="314.1" r="3.8"/><circle cx="1153.6" cy="366.1" r="3.8"/><circle cx="1173.9" cy="242.4" r="3.8"/><circle cx="1204.3" cy="300.5" r="3.8"/><circle cx="1179.0" cy="319.8" r="3.8"/><circle cx="1173.0" cy="337.6" r="3.8"/><circle cx="1179.4" cy="370.4" r="3.8"/><circle cx="1149.3" cy="313.6" r="3.8"/><circle cx="1187.9" cy="330.2" r="3.8"/><circle cx="1153.8" cy="358.0" r="3.8"/><circle cx="1163.6" cy="193.4" r="3.8"/><circle cx="1177.4" cy="196.3" r="3.8"/><circle cx="1153.3" cy="192.0" r="3.8"/><circle cx="1188.5" cy="389.2" r="3.8"/><circle cx="1146.1" cy="352.6" r="3.8"/><circle cx="1205.2" cy="314.5" r="3.8"/><circle cx="1161.5" cy="317.8" r="3.8"/><circle cx="1183.8" cy="239.1" r="3.8"/><circle cx="1186.6" cy="274.6" r="3.8"/><circle cx="1163.7" cy="199.5" r="3.8"/><circle cx="1198.9" cy="287.2" r="3.8"/><circle cx="1167.7" cy="288.7" r="3.8"/><circle cx="1191.9" cy="315.6" r="3.8"/><circle cx="1181.0" cy="318.5" r="3.8"/><circle cx="1180.7" cy="335.6" r="3.8"/><circle cx="1157.6" cy="397.6" r="3.8"/><circle cx="1190.8" cy="235.8" r="3.8"/><circle cx="1162.3" cy="308.7" r="3.8"/><circle cx="1179.4" cy="353.4" r="3.8"/><circle cx="1157.5" cy="197.3" r="3.8"/><circle cx="1151.5" cy="275.8" r="3.8"/><circle cx="1163.5" cy="373.6" r="3.8"/><circle cx="1144.9" cy="367.1" r="3.8"/><circle cx="1193.6" cy="239.4" r="3.8"/><circle cx="1156.9" cy="246.4" r="3.8"/><circle cx="1165.5" cy="205.4" r="3.8"/><circle cx="1167.9" cy="381.2" r="3.8"/><circle cx="1175.4" cy="221.6" r="3.8"/><circle cx="1147.3" cy="338.6" r="3.8"/><circle cx="1198.7" cy="312.5" r="3.8"/><circle cx="1188.3" cy="304.8" r="3.8"/><circle cx="1150.0" cy="377.0" r="3.8"/><circle cx="1180.0" cy="305.0" r="3.8"/><circle cx="1159.6" cy="190.6" r="3.8"/><circle cx="1182.2" cy="391.6" r="3.8"/><circle cx="1140.7" cy="330.6" r="3.8"/><circle cx="1158.9" cy="237.9" r="3.8"/><circle cx="1201.2" cy="355.7" r="3.8"/><circle cx="1147.3" cy="339.0" r="3.8"/><circle cx="1143.2" cy="329.6" r="3.8"/><circle cx="1165.9" cy="250.1" r="3.8"/><circle cx="1166.4" cy="388.5" r="3.8"/><circle cx="1165.4" cy="397.4" r="3.8"/><circle cx="1151.1" cy="365.5" r="3.8"/><circle cx="1165.0" cy="309.6" r="3.8"/><circle cx="1201.5" cy="246.4" r="3.8"/><circle cx="1164.5" cy="248.4" r="3.8"/><circle cx="1142.9" cy="277.1" r="3.8"/><circle cx="1147.4" cy="190.3" r="3.8"/><circle cx="1149.1" cy="403.8" r="3.8"/><circle cx="1158.7" cy="245.6" r="3.8"/><circle cx="1155.8" cy="280.8" r="3.8"/><circle cx="1151.9" cy="338.5" r="3.8"/><circle cx="1175.4" cy="280.8" r="3.8"/><circle cx="1172.3" cy="360.6" r="3.8"/><circle cx="1159.8" cy="204.5" r="3.8"/><circle cx="1167.4" cy="378.7" r="3.8"/><circle cx="1202.4" cy="297.2" r="3.8"/><circle cx="1186.8" cy="277.5" r="3.8"/><circle cx="1193.1" cy="375.7" r="3.8"/><circle cx="1165.3" cy="363.9" r="3.8"/><circle cx="1201.2" cy="378.7" r="3.8"/><circle cx="1165.9" cy="329.9" r="3.8"/><circle cx="1144.8" cy="308.8" r="3.8"/><circle cx="1194.7" cy="279.3" r="3.8"/><circle cx="1192.1" cy="272.6" r="3.8"/><circle cx="1150.1" cy="242.2" r="3.8"/><circle cx="1188.1" cy="253.1" r="3.8"/><circle cx="1165.4" cy="252.4" r="3.8"/><circle cx="1156.4" cy="198.6" r="3.8"/><circle cx="1168.1" cy="227.9" r="3.8"/><circle cx="1166.2" cy="364.5" r="3.8"/><circle cx="1186.1" cy="366.4" r="3.8"/><circle cx="1148.9" cy="255.2" r="3.8"/><circle cx="1176.0" cy="321.1" r="3.8"/><circle cx="1181.4" cy="361.8" r="3.8"/><circle cx="1208.8" cy="309.3" r="3.8"/><circle cx="1188.9" cy="272.9" r="3.8"/><circle cx="1190.7" cy="253.7" r="3.8"/><circle cx="1149.0" cy="279.6" r="3.8"/><circle cx="1162.8" cy="267.6" r="3.8"/><circle cx="1155.3" cy="220.9" r="3.8"/><circle cx="1168.4" cy="221.5" r="3.8"/><circle cx="1193.5" cy="285.5" r="3.8"/><circle cx="1154.7" cy="203.9" r="3.8"/><circle cx="1139.8" cy="395.8" r="3.8"/><circle cx="1200.7" cy="316.5" r="3.8"/><circle cx="1185.5" cy="223.7" r="3.8"/><circle cx="1139.7" cy="403.4" r="3.8"/><circle cx="1183.4" cy="259.8" r="3.8"/><circle cx="1194.6" cy="356.2" r="3.8"/><circle cx="1195.1" cy="384.7" r="3.8"/><circle cx="1172.1" cy="357.1" r="3.8"/><circle cx="1138.6" cy="385.9" r="3.8"/><circle cx="1156.4" cy="217.7" r="3.8"/><circle cx="1172.0" cy="256.3" r="3.8"/><circle cx="1171.8" cy="199.1" r="3.8"/><circle cx="1194.5" cy="286.4" r="3.8"/><circle cx="1157.5" cy="385.4" r="3.8"/><circle cx="1163.4" cy="377.6" r="3.8"/><circle cx="1194.6" cy="264.5" r="3.8"/><circle cx="1152.9" cy="243.9" r="3.8"/><circle cx="1192.8" cy="369.9" r="3.8"/><circle cx="1191.7" cy="242.1" r="3.8"/><circle cx="1141.4" cy="236.5" r="3.8"/><circle cx="1147.7" cy="346.9" r="3.8"/><circle cx="1176.0" cy="361.0" r="3.8"/><circle cx="1183.7" cy="234.3" r="3.8"/><circle cx="1148.6" cy="421.4" r="3.8"/><circle cx="1178.2" cy="367.9" r="3.8"/><circle cx="1153.4" cy="212.3" r="3.8"/><circle cx="1139.1" cy="386.9" r="3.8"/><circle cx="1142.8" cy="200.7" r="3.8"/><circle cx="1175.1" cy="258.6" r="3.8"/><circle cx="1166.1" cy="390.3" r="3.8"/><circle cx="1174.7" cy="351.1" r="3.8"/><circle cx="1146.9" cy="251.3" r="3.8"/><circle cx="1161.0" cy="322.2" r="3.8"/><circle cx="1196.1" cy="232.6" r="3.8"/><circle cx="1194.9" cy="375.0" r="3.8"/><circle cx="1159.6" cy="245.4" r="3.8"/><circle cx="1145.1" cy="357.5" r="3.8"/><circle cx="1167.1" cy="330.2" r="3.8"/><circle cx="1185.1" cy="292.5" r="3.8"/><circle cx="1169.3" cy="320.6" r="3.8"/><circle cx="1200.8" cy="290.8" r="3.8"/><circle cx="1182.6" cy="307.3" r="3.8"/><circle cx="1186.2" cy="283.4" r="3.8"/><circle cx="1198.3" cy="280.0" r="3.8"/><circle cx="1174.8" cy="308.8" r="3.8"/><circle cx="1204.9" cy="311.5" r="3.8"/><circle cx="1173.5" cy="395.3" r="3.8"/><circle cx="1143.1" cy="422.6" r="3.8"/><circle cx="1186.3" cy="275.0" r="3.8"/><circle cx="1181.1" cy="225.3" r="3.8"/><circle cx="1201.9" cy="297.7" r="3.8"/><circle cx="1174.4" cy="390.7" r="3.8"/><circle cx="1161.9" cy="391.2" r="3.8"/><circle cx="1145.6" cy="214.7" r="3.8"/><circle cx="1171.4" cy="201.1" r="3.8"/><circle cx="1141.6" cy="193.6" r="3.8"/><circle cx="1179.6" cy="365.8" r="3.8"/><circle cx="1162.2" cy="209.9" r="3.8"/><circle cx="1151.2" cy="372.9" r="3.8"/><circle cx="1188.5" cy="310.0" r="3.8"/><circle cx="1158.7" cy="412.8" r="3.8"/><circle cx="1153.0" cy="297.6" r="3.8"/><circle cx="1185.0" cy="265.2" r="3.8"/><circle cx="1159.3" cy="276.5" r="3.8"/><circle cx="1195.7" cy="301.4" r="3.8"/><circle cx="1151.5" cy="317.2" r="3.8"/><circle cx="1145.4" cy="358.6" r="3.8"/><circle cx="1167.1" cy="282.6" r="3.8"/><circle cx="1146.0" cy="280.1" r="3.8"/><circle cx="1149.3" cy="215.0" r="3.8"/><circle cx="1192.5" cy="309.8" r="3.8"/><circle cx="1154.8" cy="408.0" r="3.8"/><circle cx="1159.6" cy="399.3" r="3.8"/><circle cx="1150.9" cy="390.8" r="3.8"/><circle cx="1142.1" cy="275.4" r="3.8"/><circle cx="1161.9" cy="202.7" r="3.8"/><circle cx="1139.8" cy="417.1" r="3.8"/><circle cx="1166.5" cy="281.6" r="3.8"/><circle cx="1195.7" cy="273.7" r="3.8"/><circle cx="1161.8" cy="403.3" r="3.8"/><circle cx="1179.2" cy="382.8" r="3.8"/><circle cx="1157.0" cy="335.7" r="3.8"/><circle cx="1146.2" cy="400.8" r="3.8"/><circle cx="1178.9" cy="208.2" r="3.8"/><circle cx="1168.7" cy="367.5" r="3.8"/><circle cx="1196.3" cy="374.7" r="3.8"/><circle cx="1140.6" cy="245.4" r="3.8"/><circle cx="1197.3" cy="320.7" r="3.8"/><circle cx="1173.5" cy="315.7" r="3.8"/><circle cx="1199.5" cy="251.3" r="3.8"/><circle cx="1151.6" cy="336.6" r="3.8"/><circle cx="1161.9" cy="309.3" r="3.8"/><circle cx="1177.4" cy="225.2" r="3.8"/><circle cx="1155.5" cy="404.3" r="3.8"/><circle cx="1191.5" cy="271.6" r="3.8"/><circle cx="1169.9" cy="202.2" r="3.8"/><circle cx="1151.0" cy="253.5" r="3.8"/><circle cx="1160.9" cy="226.6" r="3.8"/><circle cx="1158.3" cy="385.6" r="3.8"/><circle cx="1156.3" cy="248.6" r="3.8"/><circle cx="1159.6" cy="343.8" r="3.8"/><circle cx="1164.3" cy="190.6" r="3.8"/><circle cx="1166.5" cy="389.2" r="3.8"/><circle cx="1197.9" cy="296.7" r="3.8"/><circle cx="1185.1" cy="272.8" r="3.8"/><circle cx="1167.9" cy="356.4" r="3.8"/><circle cx="1200.8" cy="311.4" r="3.8"/><circle cx="1190.6" cy="366.9" r="3.8"/><circle cx="1180.7" cy="260.2" r="3.8"/><circle cx="1142.4" cy="287.9" r="3.8"/><circle cx="1153.3" cy="335.7" r="3.8"/><circle cx="1174.9" cy="208.9" r="3.8"/><circle cx="1142.5" cy="397.1" r="3.8"/><circle cx="1170.9" cy="252.5" r="3.8"/><circle cx="1164.7" cy="363.0" r="3.8"/><circle cx="1194.8" cy="230.3" r="3.8"/><circle cx="1201.7" cy="377.5" r="3.8"/><circle cx="1198.7" cy="288.7" r="3.8"/><circle cx="1179.3" cy="213.2" r="3.8"/><circle cx="1166.7" cy="332.9" r="3.8"/><circle cx="1164.1" cy="286.4" r="3.8"/><circle cx="1188.2" cy="326.2" r="3.8"/><circle cx="1159.8" cy="188.4" r="3.8"/><circle cx="1162.3" cy="278.0" r="3.8"/><circle cx="1140.0" cy="300.1" r="3.8"/><circle cx="1140.9" cy="246.7" r="3.8"/><circle cx="1161.9" cy="319.3" r="3.8"/><circle cx="1160.7" cy="191.1" r="3.8"/><circle cx="1197.4" cy="235.6" r="3.8"/><circle cx="1140.0" cy="412.7" r="3.8"/><circle cx="1164.1" cy="380.8" r="3.8"/><circle cx="1195.6" cy="390.6" r="3.8"/><circle cx="1153.9" cy="312.3" r="3.8"/><circle cx="1175.3" cy="251.1" r="3.8"/><circle cx="1175.9" cy="321.6" r="3.8"/><circle cx="1148.7" cy="378.6" r="3.8"/><circle cx="1187.3" cy="357.7" r="3.8"/><circle cx="1182.0" cy="355.6" r="3.8"/><circle cx="1164.9" cy="316.1" r="3.8"/><circle cx="1192.5" cy="381.7" r="3.8"/><circle cx="1145.0" cy="317.0" r="3.8"/><circle cx="1167.0" cy="214.3" r="3.8"/><circle cx="1169.0" cy="300.7" r="3.8"/><circle cx="1151.3" cy="316.1" r="3.8"/><circle cx="1160.6" cy="204.1" r="3.8"/><circle cx="1145.7" cy="289.6" r="3.8"/><circle cx="1196.9" cy="248.9" r="3.8"/><circle cx="1175.0" cy="330.7" r="3.8"/><circle cx="1162.6" cy="287.1" r="3.8"/><circle cx="1146.5" cy="357.5" r="3.8"/><circle cx="1153.6" cy="393.2" r="3.8"/><circle cx="1159.7" cy="210.2" r="3.8"/><circle cx="1145.0" cy="390.2" r="3.8"/><circle cx="1170.6" cy="357.3" r="3.8"/><circle cx="1173.1" cy="387.9" r="3.8"/><circle cx="1200.8" cy="261.4" r="3.8"/><circle cx="1159.4" cy="337.2" r="3.8"/><circle cx="1167.7" cy="404.1" r="3.8"/><circle cx="1142.3" cy="328.4" r="3.8"/><circle cx="1144.2" cy="320.9" r="3.8"/><circle cx="1160.0" cy="267.9" r="3.8"/><circle cx="1168.7" cy="212.6" r="3.8"/><circle cx="1176.3" cy="260.9" r="3.8"/><circle cx="1150.9" cy="216.5" r="3.8"/><circle cx="1146.0" cy="333.2" r="3.8"/><circle cx="1158.6" cy="350.5" r="3.8"/><circle cx="1148.2" cy="215.7" r="3.8"/><circle cx="1193.7" cy="295.9" r="3.8"/><circle cx="1178.1" cy="306.9" r="3.8"/><circle cx="1164.8" cy="222.3" r="3.8"/><circle cx="1165.9" cy="340.3" r="3.8"/><circle cx="1194.8" cy="362.9" r="3.8"/><circle cx="1154.2" cy="382.9" r="3.8"/><circle cx="1166.8" cy="281.7" r="3.8"/><circle cx="1182.1" cy="354.8" r="3.8"/><circle cx="1198.5" cy="365.7" r="3.8"/><circle cx="1143.8" cy="229.0" r="3.8"/><circle cx="1170.0" cy="269.1" r="3.8"/><circle cx="1151.7" cy="296.4" r="3.8"/><circle cx="1153.4" cy="304.4" r="3.8"/><circle cx="1163.1" cy="387.0" r="3.8"/><circle cx="1201.2" cy="299.1" r="3.8"/><circle cx="1166.8" cy="366.1" r="3.8"/><circle cx="1166.4" cy="193.1" r="3.8"/><circle cx="1162.0" cy="307.9" r="3.8"/><circle cx="1193.3" cy="319.4" r="3.8"/><circle cx="1141.0" cy="400.9" r="3.8"/><circle cx="1191.5" cy="238.5" r="3.8"/><circle cx="1188.7" cy="318.4" r="3.8"/><circle cx="1205.6" cy="324.9" r="3.8"/><circle cx="1200.7" cy="280.7" r="3.8"/><circle cx="1151.5" cy="223.3" r="3.8"/><circle cx="1168.9" cy="305.1" r="3.8"/><circle cx="1173.0" cy="322.2" r="3.8"/><circle cx="1139.5" cy="407.2" r="3.8"/><circle cx="1141.1" cy="345.4" r="3.8"/><circle cx="1161.2" cy="412.5" r="3.8"/><circle cx="1197.2" cy="258.8" r="3.8"/><circle cx="1170.0" cy="313.2" r="3.8"/><circle cx="1153.6" cy="397.1" r="3.8"/><circle cx="1181.7" cy="239.8" r="3.8"/><circle cx="1173.5" cy="285.7" r="3.8"/><circle cx="1179.7" cy="230.7" r="3.8"/><circle cx="1179.6" cy="213.8" r="3.8"/><circle cx="1157.6" cy="388.7" r="3.8"/><circle cx="1177.8" cy="283.9" r="3.8"/><circle cx="1167.5" cy="286.8" r="3.8"/><circle cx="1184.6" cy="292.8" r="3.8"/><circle cx="1145.4" cy="199.6" r="3.8"/><circle cx="1196.5" cy="250.7" r="3.8"/><circle cx="1174.9" cy="284.5" r="3.8"/><circle cx="1176.7" cy="211.2" r="3.8"/><circle cx="1157.6" cy="347.5" r="3.8"/><circle cx="1174.7" cy="254.0" r="3.8"/><circle cx="1143.4" cy="211.1" r="3.8"/><circle cx="1145.6" cy="239.6" r="3.8"/><circle cx="1187.0" cy="390.6" r="3.8"/><circle cx="1181.2" cy="275.4" r="3.8"/><circle cx="1173.5" cy="270.0" r="3.8"/><circle cx="1175.8" cy="282.7" r="3.8"/><circle cx="1185.0" cy="362.4" r="3.8"/><circle cx="1145.2" cy="400.2" r="3.8"/><circle cx="1157.7" cy="192.8" r="3.8"/><circle cx="1174.8" cy="350.2" r="3.8"/><circle cx="1201.1" cy="303.4" r="3.8"/><circle cx="1156.7" cy="408.8" r="3.8"/><circle cx="1170.9" cy="351.3" r="3.8"/><circle cx="1172.1" cy="192.5" r="3.8"/><circle cx="1149.8" cy="417.0" r="3.8"/><circle cx="1203.0" cy="321.3" r="3.8"/><circle cx="1145.9" cy="343.7" r="3.8"/><circle cx="1154.6" cy="198.5" r="3.8"/><circle cx="1186.1" cy="356.3" r="3.8"/><circle cx="1178.3" cy="282.5" r="3.8"/><circle cx="1188.6" cy="361.7" r="3.8"/><circle cx="1199.0" cy="239.7" r="3.8"/><circle cx="1202.3" cy="323.0" r="3.8"/><circle cx="1176.0" cy="288.9" r="3.8"/><circle cx="1195.0" cy="361.1" r="3.8"/><circle cx="1170.6" cy="256.5" r="3.8"/><circle cx="1167.4" cy="220.2" r="3.8"/><circle cx="1142.4" cy="260.7" r="3.8"/><circle cx="1208.4" cy="324.3" r="3.8"/><circle cx="1160.2" cy="280.5" r="3.8"/><circle cx="1171.9" cy="240.7" r="3.8"/><circle cx="1166.7" cy="273.2" r="3.8"/><circle cx="1147.9" cy="308.3" r="3.8"/><circle cx="1175.4" cy="268.1" r="3.8"/><circle cx="1152.4" cy="388.4" r="3.8"/><circle cx="1188.0" cy="348.1" r="3.8"/><circle cx="1198.6" cy="327.9" r="3.8"/><circle cx="1161.9" cy="321.0" r="3.8"/><circle cx="1156.2" cy="322.5" r="3.8"/><circle cx="1180.5" cy="388.5" r="3.8"/><circle cx="1184.9" cy="372.3" r="3.8"/><circle cx="1159.0" cy="215.2" r="3.8"/><circle cx="1159.2" cy="327.8" r="3.8"/><circle cx="1152.3" cy="355.4" r="3.8"/><circle cx="1174.6" cy="237.3" r="3.8"/><circle cx="1138.5" cy="342.9" r="3.8"/><circle cx="1165.3" cy="343.4" r="3.8"/><circle cx="1162.8" cy="234.0" r="3.8"/><circle cx="1210.4" cy="308.2" r="3.8"/><circle cx="1173.4" cy="193.9" r="3.8"/><circle cx="1157.9" cy="259.4" r="3.8"/><circle cx="1181.5" cy="373.1" r="3.8"/><circle cx="1176.9" cy="365.8" r="3.8"/><circle cx="1143.6" cy="294.3" r="3.8"/><circle cx="1199.4" cy="246.5" r="3.8"/><circle cx="1193.0" cy="310.4" r="3.8"/><circle cx="1183.6" cy="386.8" r="3.8"/><circle cx="1155.0" cy="284.0" r="3.8"/><circle cx="1167.2" cy="361.0" r="3.8"/><circle cx="1197.9" cy="234.9" r="3.8"/><circle cx="1195.9" cy="298.1" r="3.8"/><circle cx="1159.9" cy="264.3" r="3.8"/><circle cx="1191.7" cy="232.2" r="3.8"/><circle cx="1180.1" cy="300.8" r="3.8"/><circle cx="1148.7" cy="286.2" r="3.8"/><circle cx="1154.6" cy="364.7" r="3.8"/><circle cx="1151.7" cy="218.4" r="3.8"/><circle cx="1174.4" cy="199.0" r="3.8"/><circle cx="1152.6" cy="371.2" r="3.8"/><circle cx="1141.6" cy="316.5" r="3.8"/><circle cx="1174.3" cy="317.2" r="3.8"/><circle cx="1198.7" cy="237.0" r="3.8"/><circle cx="1197.5" cy="365.4" r="3.8"/><circle cx="1177.3" cy="376.6" r="3.8"/><circle cx="1159.2" cy="319.5" r="3.8"/><circle cx="1142.9" cy="419.1" r="3.8"/><circle cx="1209.9" cy="313.2" r="3.8"/><circle cx="1139.4" cy="217.6" r="3.8"/><circle cx="1198.1" cy="249.3" r="3.8"/><circle cx="1194.4" cy="323.1" r="3.8"/><circle cx="1148.3" cy="190.2" r="3.8"/><circle cx="1154.8" cy="300.3" r="3.8"/><circle cx="1139.3" cy="361.9" r="3.8"/><circle cx="1144.6" cy="244.6" r="3.8"/><circle cx="1171.3" cy="229.1" r="3.8"/><circle cx="1167.6" cy="281.3" r="3.8"/><circle cx="1158.0" cy="345.5" r="3.8"/><circle cx="1168.6" cy="338.1" r="3.8"/><circle cx="1180.3" cy="256.5" r="3.8"/><circle cx="1154.4" cy="296.7" r="3.8"/><circle cx="1152.5" cy="273.9" r="3.8"/><circle cx="1172.3" cy="391.4" r="3.8"/><circle cx="1179.3" cy="273.1" r="3.8"/><circle cx="1152.6" cy="199.6" r="3.8"/><circle cx="1143.8" cy="357.3" r="3.8"/><circle cx="1170.9" cy="372.3" r="3.8"/><circle cx="1147.7" cy="386.9" r="3.8"/><circle cx="1168.0" cy="210.6" r="3.8"/><circle cx="1189.4" cy="321.2" r="3.8"/><circle cx="1147.7" cy="310.5" r="3.8"/><circle cx="1148.7" cy="213.2" r="3.8"/><circle cx="1175.9" cy="281.2" r="3.8"/><circle cx="1198.2" cy="246.8" r="3.8"/><circle cx="1181.3" cy="291.9" r="3.8"/><circle cx="1139.8" cy="379.4" r="3.8"/><circle cx="1147.3" cy="248.2" r="3.8"/><circle cx="1143.4" cy="320.1" r="3.8"/><circle cx="1159.0" cy="262.7" r="3.8"/><circle cx="1159.2" cy="244.5" r="3.8"/><circle cx="1141.5" cy="222.5" r="3.8"/><circle cx="1146.6" cy="246.7" r="3.8"/><circle cx="1201.7" cy="293.4" r="3.8"/><circle cx="1169.7" cy="248.3" r="3.8"/><circle cx="1175.2" cy="386.8" r="3.8"/><circle cx="1167.8" cy="365.7" r="3.8"/><circle cx="1167.5" cy="228.9" r="3.8"/><circle cx="1177.2" cy="197.0" r="3.8"/><circle cx="1175.7" cy="324.9" r="3.8"/><circle cx="1160.2" cy="384.1" r="3.8"/><circle cx="1144.0" cy="192.9" r="3.8"/><circle cx="1157.8" cy="210.9" r="3.8"/><circle cx="1159.9" cy="215.1" r="3.8"/><circle cx="1162.4" cy="380.9" r="3.8"/><circle cx="1199.4" cy="237.7" r="3.8"/><circle cx="1161.6" cy="324.5" r="3.8"/><circle cx="1160.0" cy="314.5" r="3.8"/><circle cx="1176.3" cy="262.6" r="3.8"/><circle cx="1196.8" cy="239.1" r="3.8"/><circle cx="1175.5" cy="371.9" r="3.8"/><circle cx="1208.3" cy="324.4" r="3.8"/><circle cx="1200.0" cy="262.4" r="3.8"/><circle cx="1182.3" cy="378.2" r="3.8"/><circle cx="1140.8" cy="232.3" r="3.8"/><circle cx="1186.8" cy="368.1" r="3.8"/><circle cx="1147.8" cy="253.5" r="3.8"/><circle cx="1160.9" cy="407.1" r="3.8"/><circle cx="1144.3" cy="274.9" r="3.8"/><circle cx="1148.6" cy="292.0" r="3.8"/><circle cx="1186.8" cy="264.9" r="3.8"/><circle cx="1145.3" cy="351.5" r="3.8"/><circle cx="1191.0" cy="288.3" r="3.8"/><circle cx="1141.5" cy="282.9" r="3.8"/><circle cx="1150.0" cy="334.5" r="3.8"/><circle cx="1149.8" cy="366.7" r="3.8"/><circle cx="1150.2" cy="285.9" r="3.8"/><circle cx="1184.2" cy="313.6" r="3.8"/><circle cx="1199.0" cy="316.4" r="3.8"/><circle cx="1155.7" cy="226.9" r="3.8"/><circle cx="1204.9" cy="303.8" r="3.8"/><circle cx="1158.6" cy="279.2" r="3.8"/><circle cx="1164.8" cy="372.8" r="3.8"/><circle cx="1181.8" cy="388.7" r="3.8"/><circle cx="1145.6" cy="211.4" r="3.8"/><circle cx="1174.8" cy="311.9" r="3.8"/><circle cx="1186.9" cy="326.4" r="3.8"/><circle cx="1156.4" cy="411.0" r="3.8"/><circle cx="1197.7" cy="373.1" r="3.8"/><circle cx="1161.8" cy="290.5" r="3.8"/><circle cx="1200.8" cy="304.5" r="3.8"/><circle cx="1196.8" cy="304.2" r="3.8"/><circle cx="1163.1" cy="230.4" r="3.8"/><circle cx="1194.4" cy="235.7" r="3.8"/><circle cx="1170.5" cy="201.3" r="3.8"/><circle cx="1169.5" cy="364.3" r="3.8"/><circle cx="1160.8" cy="358.3" r="3.8"/><circle cx="1179.7" cy="385.2" r="3.8"/><circle cx="1147.3" cy="247.7" r="3.8"/><circle cx="1201.5" cy="289.0" r="3.8"/><circle cx="1155.1" cy="329.5" r="3.8"/><circle cx="1178.2" cy="202.3" r="3.8"/><circle cx="1145.4" cy="215.8" r="3.8"/><circle cx="1169.6" cy="202.1" r="3.8"/><circle cx="1149.3" cy="254.0" r="3.8"/><circle cx="1144.7" cy="289.0" r="3.8"/><circle cx="1139.8" cy="338.8" r="3.8"/><circle cx="1144.2" cy="399.8" r="3.8"/><circle cx="1138.6" cy="357.2" r="3.8"/><circle cx="1150.6" cy="360.3" r="3.8"/><circle cx="1156.0" cy="292.1" r="3.8"/><circle cx="1162.0" cy="350.7" r="3.8"/><circle cx="1158.9" cy="272.3" r="3.8"/><circle cx="1150.5" cy="370.3" r="3.8"/><circle cx="1200.4" cy="355.6" r="3.8"/><circle cx="1168.2" cy="370.9" r="3.8"/><circle cx="1168.8" cy="321.3" r="3.8"/><circle cx="1186.4" cy="278.1" r="3.8"/><circle cx="1179.2" cy="317.9" r="3.8"/><circle cx="1146.7" cy="259.7" r="3.8"/><circle cx="1177.0" cy="275.1" r="3.8"/><circle cx="1145.0" cy="335.9" r="3.8"/><circle cx="1161.4" cy="202.6" r="3.8"/><circle cx="1142.2" cy="406.9" r="3.8"/><circle cx="1186.7" cy="303.9" r="3.8"/><circle cx="1170.0" cy="306.1" r="3.8"/><circle cx="1179.5" cy="209.6" r="3.8"/><circle cx="1177.2" cy="281.7" r="3.8"/></g><circle cx="1212" cy="306" r="3.6" fill="#ff8c00"/>
<g stroke="#444" stroke-width="1.2" fill="none"><path d="M749.5 109 V490.5 H1240.5"/>
<path d="M742 163.6 H749.5"/>
<path d="M742 219.0 H749.5"/>
<path d="M742 274.3 H749.5"/>
<path d="M742 329.6 H749.5"/>
<path d="M742 384.9 H749.5"/>
<path d="M742 440.2 H749.5"/>
<path d="M886.2 490.5 V497"/>
<path d="M1035.2 490.5 V497"/>
<path d="M1184.5 490.5 V497"/>
</g><g font-family="Liberation Sans" font-size="14" fill="#3a3f45" letter-spacing="0.7">
<text x="741.5" y="167.9" text-anchor="end">−27.6</text>
<text x="741.5" y="223.3" text-anchor="end">−27.8</text>
<text x="741.5" y="278.6" text-anchor="end">−28</text>
<text x="741.5" y="333.9" text-anchor="end">−28.2</text>
<text x="741.5" y="389.2" text-anchor="end">−28.4</text>
<text x="741.5" y="444.5" text-anchor="end">−28.6</text>
<text x="886.2" y="513" text-anchor="middle">53.5</text>
<text x="1035.2" y="513" text-anchor="middle">53</text>
<text x="1184.5" y="513" text-anchor="middle">52.5</text>
</g>
<text x="995" y="541.5" text-anchor="middle" font-family="Liberation Sans" font-size="14" fill="#3c4147" letter-spacing="0.45">coord_ra (deg)</text>
<text transform="translate(686 299) rotate(-90)" text-anchor="middle" font-family="Liberation Sans" font-size="14" fill="#3c4147" letter-spacing="0.45">coord_dec (deg)</text>
</svg>
<div class="panel" style="left:3px;top:562px;width:1327px;height:349px">
<div class="abs" style="left:0;right:0;top:0;height:40px;background:#eef1f5;border-bottom:1px solid #c5cfdb"></div>
</div>
<div class="abs" style="left:8px;top:566.5px;width:15px;height:15px;border-radius:4px;background:#dfeaf6"></div><div class="abs" style="left:10px;top:568px;width:11.5px;height:11.5px;border-radius:3px;background:#f00000"></div><span class="t" style="left:26px;top:566px;font-size:13px;color:#3a4048;letter-spacing:-0.1px">dp1.Object - data-int</span><svg class="ic" width="1330" height="911"><path d="M147.5 569 l7 7 M154.5 569 l-7 7" stroke="#444a52" stroke-width="1.3"/><g fill="none" stroke="#22262b" stroke-width="2.2"><path d="M474.5 576 v13"/><path d="M485 576.5 l-6 6 l6 6"/><path d="M512.5 576.5 l-6 6 l6 6"/><path d="M607 576.5 l6 6 l-6 6"/><path d="M635 576.5 l6 6 l-6 6"/><path d="M646 576 v13"/></g></svg><div class="abs" style="left:524.5px;top:569px;width:40px;height:26px;border:1px solid #c5cfdb;border-radius:6px;background:#fafbfd"></div><span class="t" style="left:532px;top:576px;font-size:12px;color:#1f2328">1</span><span class="t" style="left:569px;top:576px;font-size:13px;color:#3a4048;letter-spacing:-0.3px">of 88</span><span class="t" style="left:655.5px;top:576px;font-size:12px;color:#3a4048;letter-spacing:-0.15px">(1 - 100 of 8,707)</span><div class="abs" style="left:4px;top:602.5px;width:492.5px;height:80px;background:#fafbfd"></div><div class="abs" style="left:4px;top:682.5px;width:1309px;height:22px;background:#fbdcbb"></div><svg class="ic" width="1330" height="911"><g stroke="#cdd5df" stroke-width="1"><path d="M31.5 602.5 V911"/><path d="M169.5 602.5 V911"/><path d="M298.5 602.5 V911"/><path d="M398.5 602.5 V911"/><path d="M496.5 602.5 V911"/><path d="M32.5 602.5 V911" stroke="#c9d3de"/><path d="M4 682.5 H496.5"/><path d="M4 704.5 H496.5"/><path d="M4 726.5 H496.5"/><path d="M4 748.5 H496.5"/><path d="M4 770.5 H496.5"/><path d="M4 792.5 H496.5"/><path d="M4 814.5 H496.5"/><path d="M4 836.5 H496.5"/><path d="M4 858.5 H496.5"/><path d="M4 880.5 H496.5"/><path d="M4 902.5 H496.5"/><path d="M1313.5 682.5 V911"/></g><rect x="34.5" y="654.5" width="132.0" height="26" rx="5" fill="#fafbfd" stroke="#c5cfdb"/><rect x="172.5" y="654.5" width="123.0" height="26" rx="5" fill="#fafbfd" stroke="#c5cfdb"/><rect x="301.5" y="654.5" width="94.0" height="26" rx="5" fill="#fafbfd" stroke="#c5cfdb"/><rect x="401.5" y="654.5" width="92.0" height="26" rx="5" fill="#fafbfd" stroke="#c5cfdb"/><rect x="10.5" y="605.5" width="14" height="14" rx="3" fill="#fff" stroke="#b8c2ce"/><path d="M11.4 660.3 H23.6 L17.5 667.5 Z" fill="none" stroke="#22262b" stroke-width="2" stroke-linejoin="miter"/><path d="M17.5 666 V672.8" stroke="#22262b" stroke-width="3.2"/><rect x="10" y="686" width="15" height="15" rx="3" fill="#1b63c6"/><path d="M13.3 693.6 l3 3 l5.5 -6" fill="none" stroke="#fff" stroke-width="1.7"/><rect x="10" y="708" width="15" height="15" rx="3" fill="#1b63c6"/><path d="M13.3 715.6 l3 3 l5.5 -6" fill="none" stroke="#fff" stroke-width="1.7"/><rect x="10" y="730" width="15" height="15" rx="3" fill="#1b63c6"/><path d="M13.3 737.6 l3 3 l5.5 -6" fill="none" stroke="#fff" stroke-width="1.7"/><rect x="10" y="752" width="15" height="15" rx="3" fill="#1b63c6"/><path d="M13.3 759.6 l3 3 l5.5 -6" fill="none" stroke="#fff" stroke-width="1.7"/><rect x="10" y="774" width="15" height="15" rx="3" fill="#1b63c6"/><path d="M13.3 781.6 l3 3 l5.5 -6" fill="none" stroke="#fff" stroke-width="1.7"/><rect x="10" y="796" width="15" height="15" rx="3" fill="#1b63c6"/><path d="M13.3 803.6 l3 3 l5.5 -6" fill="none" stroke="#fff" stroke-width="1.7"/><rect x="10" y="818" width="15" height="15" rx="3" fill="#1b63c6"/><path d="M13.3 825.6 l3 3 l5.5 -6" fill="none" stroke="#fff" stroke-width="1.7"/><rect x="10" y="840" width="15" height="15" rx="3" fill="#1b63c6"/><path d="M13.3 847.6 l3 3 l5.5 -6" fill="none" stroke="#fff" stroke-width="1.7"/><rect x="10" y="862" width="15" height="15" rx="3" fill="#1b63c6"/><path d="M13.3 869.6 l3 3 l5.5 -6" fill="none" stroke="#fff" stroke-width="1.7"/><rect x="10" y="884" width="15" height="15" rx="3" fill="#1b63c6"/><path d="M13.3 891.6 l3 3 l5.5 -6" fill="none" stroke="#fff" stroke-width="1.7"/><rect x="10" y="906" width="15" height="15" rx="3" fill="#1b63c6"/><path d="M13.3 913.6 l3 3 l5.5 -6" fill="none" stroke="#fff" stroke-width="1.7"/><defs><linearGradient id="hg" x1="0" y1="0" x2="0" y2="1"><stop offset="0" stop-color="#fafbfd" stop-opacity="0"/><stop offset="1" stop-color="#d8dadd"/></linearGradient></defs><rect x="4" y="902.5" width="1308" height="6" fill="url(#hg)"/><rect x="1317" y="687" width="8" height="25" rx="4" fill="#c3cbd5"/><path d="M255 616.5 l4.2 -5 l4.2 5 z" fill="#2d6fc4"/></svg><div class="abs" style="left:41px;top:605px;width:120px;text-align:center;font-size:13px;line-height:16px;color:#1f2328;letter-spacing:-0.2px"><span style="position:relative;left:0px">coord_dec</span><br><span style="color:#474e57">(deg)</span><br><span style="color:#474e57">double</span></div><div class="abs" style="left:173.5px;top:605px;width:120px;text-align:center;font-size:13px;line-height:16px;color:#1f2328;letter-spacing:-0.2px"><span style="position:relative;left:-5px">coord_ra</span><br><span style="color:#474e57">(deg)</span><br><span style="color:#474e57">double</span></div><div class="abs" style="left:288.5px;top:605px;width:120px;text-align:center;font-size:13px;line-height:16px;color:#1f2328;letter-spacing:-0.2px"><span style="position:relative;left:0px">g_cModelMag</span><br><span style="color:#474e57">(mag)</span><br><span style="color:#474e57">float</span></div><div class="abs" style="left:387.5px;top:605px;width:120px;text-align:center;font-size:13px;line-height:16px;color:#1f2328;letter-spacing:-0.2px"><span style="position:relative;left:0px">r_cModelMag</span><br><span style="color:#474e57">(mag)</span><br><span style="color:#474e57">float</span></div><span class="t" style="left:34.5px;top:688px;font-size:12px;color:#1f2328;letter-spacing:-0.05px">-28.11728782777416</span><span class="t" style="left:172.5px;top:688px;font-size:12px;color:#1f2328;letter-spacing:-0.05px">52.40523364897653</span><span class="t" style="left:301px;top:688px;font-size:12px;color:#1f2328;letter-spacing:-0.05px">21.8942</span><span class="t" style="left:401px;top:688px;font-size:12px;color:#1f2328;letter-spacing:-0.05px">21.0385</span><span class="t" style="left:34.5px;top:710px;font-size:12px;color:#1f2328;letter-spacing:-0.05px">-28.08548856501199</span><span class="t" style="left:172.5px;top:710px;font-size:12px;color:#1f2328;letter-spacing:-0.05px">52.407997082811164</span><span class="t" style="left:301px;top:710px;font-size:12px;color:#1f2328;letter-spacing:-0.05px">20.9943</span><span class="t" style="left:401px;top:710px;font-size:12px;color:#1f2328;letter-spacing:-0.05px">19.9226</span><span class="t" style="left:34.5px;top:732px;font-size:12px;color:#1f2328;letter-spacing:-0.05px">-28.10727736660281</span><span class="t" style="left:172.5px;top:732px;font-size:12px;color:#1f2328;letter-spacing:-0.05px">52.41510356640766</span><span class="t" style="left:301px;top:732px;font-size:12px;color:#1f2328;letter-spacing:-0.05px">19.9003</span><span class="t" style="left:401px;top:732px;font-size:12px;color:#1f2328;letter-spacing:-0.05px">18.7758</span><span class="t" style="left:34.5px;top:754px;font-size:12px;color:#1f2328;letter-spacing:-0.05px">-28.1822544031232</span><span class="t" style="left:172.5px;top:754px;font-size:12px;color:#1f2328;letter-spacing:-0.05px">52.417754565034436</span><span class="t" style="left:301px;top:754px;font-size:12px;color:#1f2328;letter-spacing:-0.05px">20.1938</span><span class="t" style="left:401px;top:754px;font-size:12px;color:#1f2328;letter-spacing:-0.05px">18.8771</span><span class="t" style="left:34.5px;top:776px;font-size:12px;color:#1f2328;letter-spacing:-0.05px">-28.177843891076478</span><span class="t" style="left:172.5px;top:776px;font-size:12px;color:#1f2328;letter-spacing:-0.05px">52.417939926757995</span><span class="t" style="left:301px;top:776px;font-size:12px;color:#1f2328;letter-spacing:-0.05px">21.6354</span><span class="t" style="left:401px;top:776px;font-size:12px;color:#1f2328;letter-spacing:-0.05px">21.0383</span><span class="t" style="left:34.5px;top:798px;font-size:12px;color:#1f2328;letter-spacing:-0.05px">-28.089417845079574</span><span class="t" style="left:172.5px;top:798px;font-size:12px;color:#1f2328;letter-spacing:-0.05px">52.4191443543195</span><span class="t" style="left:301px;top:798px;font-size:12px;color:#1f2328;letter-spacing:-0.05px">21.0115</span><span class="t" style="left:401px;top:798px;font-size:12px;color:#1f2328;letter-spacing:-0.05px">21.2823</span><span class="t" style="left:34.5px;top:820px;font-size:12px;color:#1f2328;letter-spacing:-0.05px">-28.12118873821494</span><span class="t" style="left:172.5px;top:820px;font-size:12px;color:#1f2328;letter-spacing:-0.05px">52.41934716015508</span><span class="t" style="left:301px;top:820px;font-size:12px;color:#1f2328;letter-spacing:-0.05px">20.3055</span><span class="t" style="left:401px;top:820px;font-size:12px;color:#1f2328;letter-spacing:-0.05px">19.3436</span><span class="t" style="left:34.5px;top:842px;font-size:12px;color:#1f2328;letter-spacing:-0.05px">-28.089589306027502</span><span class="t" style="left:172.5px;top:842px;font-size:12px;color:#1f2328;letter-spacing:-0.05px">52.41978394855785</span><span class="t" style="left:301px;top:842px;font-size:12px;color:#1f2328;letter-spacing:-0.05px">20.6886</span><span class="t" style="left:401px;top:842px;font-size:12px;color:#1f2328;letter-spacing:-0.05px">20.4118</span><span class="t" style="left:34.5px;top:864px;font-size:12px;color:#1f2328;letter-spacing:-0.05px">-28.089417204093838</span><span class="t" style="left:172.5px;top:864px;font-size:12px;color:#1f2328;letter-spacing:-0.05px">52.42072430778568</span><span class="t" style="left:301px;top:864px;font-size:12px;color:#1f2328;letter-spacing:-0.05px">21.0928</span><span class="t" style="left:401px;top:864px;font-size:12px;color:#1f2328;letter-spacing:-0.05px">21.5073</span><span class="t" style="left:34.5px;top:886px;font-size:12px;color:#1f2328;letter-spacing:-0.05px">-28.17818305197136</span><span class="t" style="left:172.5px;top:886px;font-size:12px;color:#1f2328;letter-spacing:-0.05px">52.42196392730985</span><span class="t" style="left:301px;top:886px;font-size:12px;color:#1f2328;letter-spacing:-0.05px">21.6205</span><span class="t" style="left:401px;top:886px;font-size:12px;color:#1f2328;letter-spacing:-0.05px">21.186</span>
<svg class="ic" width="1330" height="911"><path d="M25 536.5 h-8 v16 h16 v-8" fill="none" stroke="#22262b" stroke-width="2"/><path d="M24 545 L33 536 M27 535.5 h6.5 v6.5" fill="none" stroke="#22262b" stroke-width="2"/><path d="M97 92 h12 l-6 6 z M263 92 h12 l-6 6 z" fill="#2b3036"/><rect x="120" y="86" width="1" height="20" fill="#b5bcc4"/><rect x="309" y="86" width="1" height="20" fill="#b5bcc4"/><g transform="translate(0 0)" fill="none" stroke="#22262b" stroke-width="2.2" stroke-linecap="round" stroke-linejoin="round"><path d="M327.2 83.6 L348.5 105.5 M324 95.2 L329.9 101.9 M331.4 95.5 L336.6 101.1 L340.4 97.4 M343.7 94 L348.6 89.4"/><path d="M340 90.6 l1.3 -1.3" stroke-width="2.6"/></g><path d="M413.5 51.5 L425.6 67.2" stroke="#22262b" stroke-width="3.6" stroke-linecap="round"/><path d="M409.2 44.6 L408 45.8 C406.2 48.5 407.5 52.3 411.2 52.6 C413.8 52.8 416 50.8 415.8 48 C415.6 45.8 414.5 44.5 413.2 44 L412.5 47.2 L410.8 47.7 Z" fill="#22262b" stroke="#22262b" stroke-width="1" stroke-linejoin="round"/><path d="M420.1 49 L423.6 44.8 L427.7 50.4 L431 54 L426 57.6 L424.3 55.9 L420.8 53.8 Z" fill="#22262b" stroke="#22262b" stroke-width="1" stroke-linejoin="round"/><path d="M405.5 63.8 L412.8 58.6" stroke="#22262b" stroke-width="3.4" stroke-linecap="round"/><path d="M404.2 67 h11.2 l-5.6 6.4 z" fill="#22262b"/><rect x="444" y="42" width="1" height="28" fill="#c9d0d8"/><path d="M469.9 68.2 C463 67 459.6 61.5 459.6 55.9 C459.6 49.4 465 44.8 472 44.8 C478.8 44.8 483.8 49.6 483.8 55.4 C483.8 58.8 481.5 61 477.5 61.6 L474.6 62 C472.8 62.4 473.2 64 474.1 65.5 C474.6 67.3 472.8 68.6 469.9 68.2 Z" fill="none" stroke="#22262b" stroke-width="2.3"/><circle cx="468.6" cy="51" r="1.75" fill="#22262b"/><circle cx="474.4" cy="51" r="1.75" fill="#22262b"/><circle cx="464.8" cy="55.9" r="1.75" fill="#22262b"/><circle cx="478.2" cy="55.9" r="1.75" fill="#22262b"/><path d="M453.3 67 h11.1 l-5.55 6.9 z" fill="#22262b"/><g fill="none" stroke="#22262b" stroke-width="2.2"><path d="M503.4 46.8 H497.3 V52.5 M512 46.8 H518.1 V52.5 M518.1 61.1 V66.6 H512 M497.3 61.1 V67"/></g><circle cx="507.4" cy="56.5" r="3.3" fill="none" stroke="#22262b" stroke-width="2.4"/><path d="M491.1 66 h12.6 l-6.3 7.5 z" fill="#22262b"/><circle cx="541.6" cy="56.5" r="11.6" fill="none" stroke="#22262b" stroke-width="1.3" stroke-dasharray="1.6 0.9"/><path d="M526.8 64.5 h11.8 l-5.9 7.1 z" fill="#22262b"/><path d="M563.9 55.7 L575.7 46.1 L584 55 L575.7 63.8 Z" fill="#22262b" stroke="#22262b" stroke-width="1" stroke-linejoin="round"/><path d="M564.2 61.8 L575.7 70.2 L586.6 61.8" fill="none" stroke="#22262b" stroke-width="3"/><circle cx="588.2" cy="49.8" r="11" fill="#fafbfd"/><circle cx="588.2" cy="49.8" r="9.2" fill="#1766c9"/><text x="588.2" y="54" text-anchor="middle" font-family="Liberation Sans" font-size="11.5" fill="#fff" letter-spacing="-0.3">19</text><g fill="none" stroke="#22262b" stroke-width="2.3"><path d="M607 48.6 C602.5 48.6 600.6 51 600.6 53.6 C600.6 56.5 602.8 58.6 606 58.6 H609.5"/><path d="M613 48.8 H617.5 C620.6 48.8 622.6 50.8 622.6 53.3 C622.6 55.5 621.5 56.8 620 57.5"/><path d="M601 44 L619.9 63"/></g><path d="M599.3 65.3 h11.8 l-5.9 6.6 z" fill="#22262b"/><path d="M631.7 46.8 h8.6 l-8.6 8.6 z M651 66 h-8.6 l8.6 -8.6 z" fill="#22262b"/><path d="M634.2 49.3 L648.5 63.5" stroke="#22262b" stroke-width="2.6"/><circle cx="679.8" cy="56.7" r="10.6" fill="none" stroke="#22262b" stroke-width="2.3"/><path d="M673.5 56.7 h12.6 M679.8 50.4 v12.6" stroke="#22262b" stroke-width="2.3"/><rect x="941.5" y="39" width="34" height="34.5" rx="5" fill="#dbe3ec"/><path d="M951 45.3 h14 v1.8 l-2 1 v6.4 l4.3 3 v2 h-18.6 v-2 l4.3 -3 v-6.4 l-2 -1 z" fill="#22262b"/><path d="M958 59 l0 6.5" stroke="#22262b" stroke-width="2"/><g transform="translate(657.8 -38.4)" fill="none" stroke="#22262b" stroke-width="2.2" stroke-linecap="round" stroke-linejoin="round"><path d="M327.2 83.6 L348.5 105.5 M324 95.2 L329.9 101.9 M331.4 95.5 L336.6 101.1 L340.4 97.4 M343.7 94 L348.6 89.4"/><path d="M340 90.6 l1.3 -1.3" stroke-width="2.6"/></g><rect x="1020.5" y="41" width="92" height="30.5" fill="#fafbfd" stroke="#c5cfdb" stroke-width="1.2"/><rect x="1081" y="41.5" width="31" height="29.5" fill="#d5dee8"/><path d="M1050.5 41 v30.5 M1080.5 41 v30.5" stroke="#c5cfdb"/><circle cx="1035.5" cy="56" r="8.8" fill="none" stroke="#4b5158" stroke-width="2.4"/><path d="M1031 56 h9 M1035.5 51.5 v9" stroke="#4b5158" stroke-width="1.6"/><path d="M1041.8 62.3 l5.5 5.5" stroke="#4b5158" stroke-width="2.6"/><path d="M1058 60 v-9 a1.6 1.6 0 0 1 3.2 0 v6 v-10 a1.6 1.6 0 0 1 3.2 0 v9 v-8 a1.6 1.6 0 0 1 3.2 0 v8 v-6 a1.6 1.6 0 0 1 3.2 0 v11 c0 5 -3 8 -7 8 h-2 c-3 0 -5 -2 -6 -4 l-3 -5 a1.6 1.6 0 0 1 3 -2 z" fill="none" stroke="#4b5158" stroke-width="1.6" stroke-linejoin="round"/><rect x="1086" y="45.8" width="21" height="21.5" fill="none" stroke="#22262b" stroke-width="2.6" stroke-dasharray="2.3 1.4"/><circle cx="1138" cy="55.5" r="9" fill="none" stroke="#22262b" stroke-width="3"/><path d="M1143.5 61.5 l6.5 6.5" stroke="#22262b" stroke-width="3"/><text x="1138" y="59" text-anchor="middle" font-family="Liberation Sans" font-size="9.5" fill="#22262b" letter-spacing="-0.4">1X</text><path d="M1167.2 46.2 H1181.3 L1185.8 50.7 V64.8 A2 2 0 0 1 1183.8 66.8 H1167.2 A2 2 0 0 1 1165.2 64.8 V48.2 A2 2 0 0 1 1167.2 46.2 Z" fill="none" stroke="#22262b" stroke-width="2.4"/><rect x="1167.9" y="48.9" width="12.7" height="4.4" fill="#22262b"/><circle cx="1175.5" cy="60.4" r="3.6" fill="#22262b"/><g fill="none" stroke="#22262b" stroke-width="2.4"><path d="M1211 48.2 A9 9 0 1 1 1214.2 66"/><path d="M1205.9 51.3 A9 9 0 0 0 1210.6 66"/></g><path d="M1211.8 44.2 L1206.2 48.6 L1211.8 52.6 Z" fill="#22262b"/><path d="M1240 49 H1256 L1248.0 57.5z" fill="none" stroke="#22262b" stroke-width="2.4" stroke-linejoin="round"/><path d="M1248.0 56.55 V65.8" stroke="#22262b" stroke-width="4.2" stroke-linecap="round"/><path d="M1279.2 49.4 L1279.5 46.3 L1284.1 46.3 L1284.4 49.4 L1287.1 50.9 L1289.9 49.7 L1292.2 53.6 L1289.7 55.5 L1289.7 58.5 L1292.2 60.4 L1289.9 64.3 L1287.1 63.1 L1284.4 64.6 L1284.1 67.7 L1279.5 67.7 L1279.2 64.6 L1276.5 63.1 L1273.7 64.3 L1271.4 60.4 L1273.9 58.5 L1273.9 55.5 L1271.4 53.6 L1273.7 49.7 L1276.5 50.9Z" fill="none" stroke="#22262b" stroke-width="2.2" stroke-linejoin="round"/><circle cx="1281.8" cy="57" r="3.7" fill="none" stroke="#22262b" stroke-width="2.2"/><path d="M1304 47 h8.6 l-8.6 8.6 z M1323 66 h-8.6 l8.6 -8.6 z" fill="#22262b"/><path d="M1306.5 49.5 L1320.5 63.5" stroke="#22262b" stroke-width="2.6"/><g fill="none" stroke="#22262b" stroke-linecap="round"><path d="M1070.6 569.8 L1074.9 580.2" stroke-width="4.6"/><path d="M1064.9 575.6 C1059 578 1059 586 1067.3 587" stroke-width="2.4"/></g><path d="M1070.9 571 L1073.9 579" stroke="#eef1f5" stroke-width="1.2" stroke-linecap="round"/><circle cx="1067.9" cy="576.6" r="1.6" fill="#eef1f5" stroke="#22262b" stroke-width="1.6"/><path d="M1066.5 585.7 h11.5 l-1 2.4 h-10.5 z" fill="#22262b"/><rect x="1068" y="587" width="3.6" height="5.5" fill="#22262b"/><path d="M1051 591.2 h27 l1.3 2.4 h-28.3 z" fill="#22262b"/><path d="M1051 591.7 h11.4 l-5.7 6.6 z" fill="#22262b"/><path d="M1099 575 H1115 L1107.0 583.0z" fill="none" stroke="#22262b" stroke-width="2.4" stroke-linejoin="round"/><path d="M1107.0 582.1 V590.8" stroke="#22262b" stroke-width="4.2" stroke-linecap="round"/><path d="M1130.5 574.5 h13 v3.3 h-4.7 v13.7 h-3.6 v-13.7 h-4.7 z M1142 580.5 h10 v3 h-3.3 v8 h-3.4 v-8 h-3.3 z" fill="#22262b"/><path d="M1167.5 571.8 H1181.9 L1186.4 576.3 V590.5 A2 2 0 0 1 1184.4 592.5 H1167.5 A2 2 0 0 1 1165.5 590.5 V573.8 A2 2 0 0 1 1167.5 571.8 Z" fill="none" stroke="#22262b" stroke-width="2.4"/><rect x="1168.3" y="574.5" width="12.8" height="4.4" fill="#22262b"/><circle cx="1176.0" cy="586.1" r="3.6" fill="#22262b"/><rect x="1202.5" y="571.5" width="6" height="21" rx="1.5" fill="none" stroke="#22262b" stroke-width="2"/><circle cx="1219.5" cy="582.5" r="6.3" fill="none" stroke="#22262b" stroke-width="1.5"/><path d="M1216 582.5 h7 M1219.5 579 v7" stroke="#22262b" stroke-width="1.5"/><circle cx="1246" cy="582.5" r="11.5" fill="none" stroke="#22262b" stroke-width="2.3"/><circle cx="1246" cy="576.5" r="1.7" fill="#22262b"/><path d="M1246 580 v9" stroke="#22262b" stroke-width="2.8"/><path d="M1279.2 575.0 L1279.5 571.9 L1284.1 571.9 L1284.4 575.0 L1287.1 576.5 L1289.9 575.3 L1292.2 579.2 L1289.7 581.1 L1289.7 584.1 L1292.2 586.0 L1289.9 589.9 L1287.1 588.7 L1284.4 590.2 L1284.1 593.3 L1279.5 593.3 L1279.2 590.2 L1276.5 588.7 L1273.7 589.9 L1271.4 586.0 L1273.9 584.1 L1273.9 581.1 L1271.4 579.2 L1273.7 575.3 L1276.5 576.5Z" fill="none" stroke="#22262b" stroke-width="2.2" stroke-linejoin="round"/><circle cx="1281.8" cy="582.6" r="3.7" fill="none" stroke="#22262b" stroke-width="2.2"/><path d="M1304 573 h8.6 l-8.6 8.6 z M1323.5 593 h-8.6 l8.6 -8.6 z" fill="#22262b"/><path d="M1306.5 575.5 L1321.0 590.5" stroke="#22262b" stroke-width="2.6"/></svg>
<div class="abs" style="left:952.5px;top:65.5px;width:86px;height:28.5px;border-radius:6px;background:#eceff3;box-shadow:0 1px 3px rgba(0,0,0,0.12)"></div><svg class="ic" width="1330" height="911"><path d="M960 66 L966.5 60.5 L973 66 Z" fill="#eceff3"/></svg>
<span class="t" style="left:959px;top:73px;font-size:13px;color:#2b3036;letter-spacing:-0.15px;">Pin this chart</span>
</body></html>
